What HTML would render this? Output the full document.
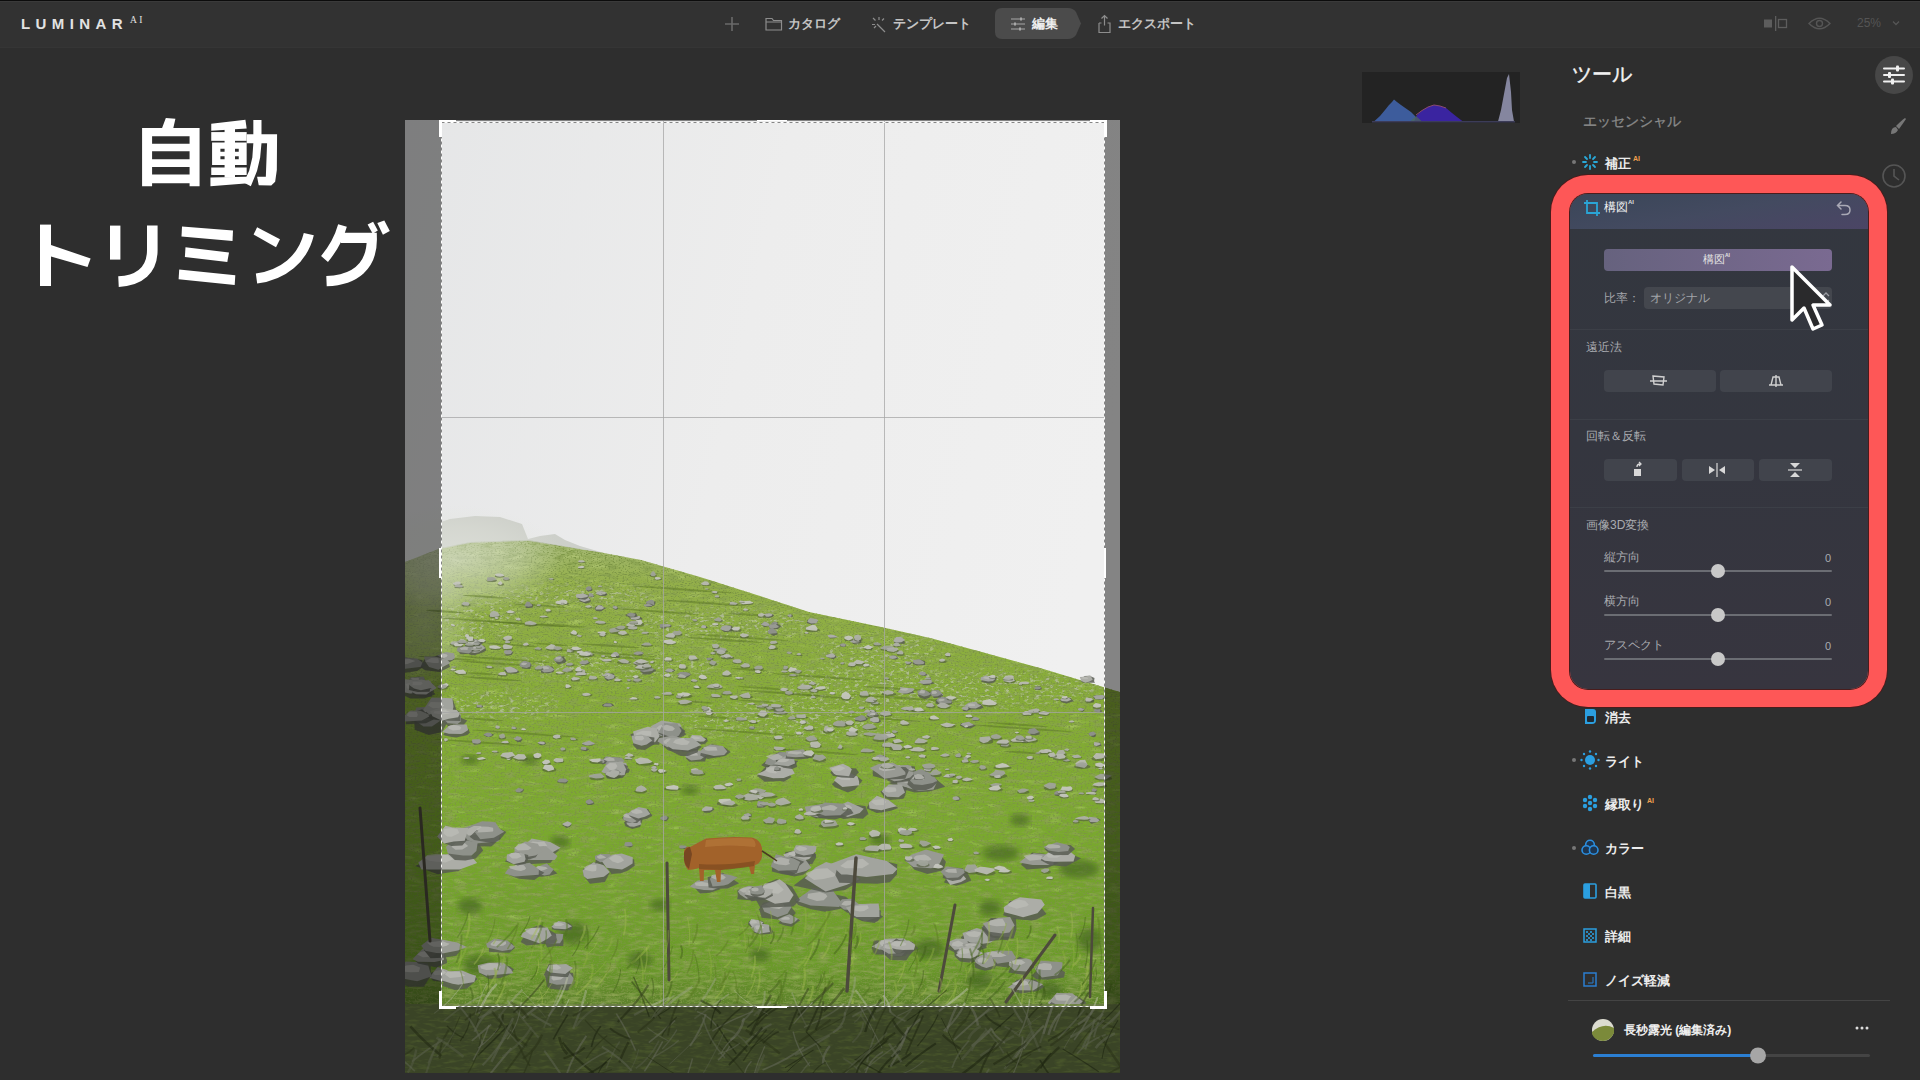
<!DOCTYPE html>
<html><head><meta charset="utf-8">
<style>
*{margin:0;padding:0;box-sizing:border-box}
html,body{width:1920px;height:1080px;overflow:hidden;background:#2e2e2e;font-family:"Liberation Sans",sans-serif;color:#ddd}
.a{position:absolute}
.t{position:absolute;white-space:nowrap;line-height:1}
#top{left:0;top:0;width:1920px;height:48px;background:#323232;border-top:1px solid #0c0c0c;border-bottom:1px solid #353535}
#top:after{content:"";position:absolute;left:0;top:0;width:1920px;height:1px;background:#3a3a3a}
.logo{left:21px;top:15.5px;font-size:15px;letter-spacing:5.4px;color:#e2e2e2;font-weight:bold}
.logo sup{font-size:9.5px;letter-spacing:2.5px;vertical-align:6px;margin-left:2px;font-weight:normal;font-family:"Liberation Serif",serif}
.nav{top:17px;font-size:13px;color:#c4c4c4;font-weight:bold}
#photo{left:405px;top:120px;width:715px;height:953px;overflow:hidden}
#panel{left:1551px;top:175px;width:336px;height:532px;border-radius:37px;background:#fe5757;box-shadow:0 0 0 1px #4a1c1c}
#inner{left:19px;top:19px;width:298px;height:495px;border-radius:18px;background:linear-gradient(180deg,#33373f 0%,#34363f 50%,#37353f 100%);overflow:hidden;box-shadow:0 0 0 1px #4a1c1c}
.lbl{font-size:12px;color:#a9abb0}
.item{font-size:13px;color:#ececec;font-weight:bold}
.ai{font-size:7px;color:#f0a050;font-weight:bold}
.btn{position:absolute;background:#41444c;border-radius:4px}
.trk{position:absolute;height:2px;background:#6b6d73;border-radius:1px}
.knob{position:absolute;width:14px;height:14px;border-radius:7px;background:#c8c8c8}
.dot{position:absolute;width:4px;height:4px;border-radius:2px;background:#777}
</style></head><body>
<div id="top" class="a"></div>
<div class="t logo">LUMINAR<sup>AI</sup></div>
<!-- big title -->
<svg class="a" style="left:0;top:0" width="400" height="300" viewBox="0 0 400 300">
<g fill="#ffffff">
 <!-- 自 -->
 <g transform="translate(130,110) scale(0.08333)">
  <path fill-rule="evenodd" d="M430,95 L545,105 L520,215 L835,215 L835,915 L715,915 L715,880 L265,880 L265,915 L145,915 L145,215 L385,215 Z M265,315 L715,315 L715,405 L265,405 Z M265,495 L715,495 L715,590 L265,590 Z M265,685 L715,685 L715,775 L265,775 Z"/>
  <!-- 動 left -->
  <path d="M975,165 L1385,118 L1400,222 L975,248 Z"/>
  <rect x="1135" y="200" width="125" height="610"/>
  <rect x="975" y="265" width="425" height="105"/>
  <path fill-rule="evenodd" d="M985,390 L1400,390 L1400,660 L985,660 Z M1085,465 L1140,465 L1140,500 L1085,500 Z M1250,465 L1305,465 L1305,500 L1250,500 Z M1085,555 L1140,555 L1140,590 L1085,590 Z M1250,555 L1305,555 L1305,590 L1250,590 Z"/>
  <rect x="975" y="690" width="425" height="90"/>
  <path d="M965,810 L1400,800 L1420,880 L965,915 Z"/>
  <!-- 力 -->
  <path d="M1400,290 L1765,290 L1762,720 L1742,860 L1695,905 L1545,902 L1525,800 L1630,800 L1645,400 L1400,400 Z"/>
  <path d="M1480,120 L1578,120 L1578,400 L1562,570 L1525,730 L1450,915 L1365,870 L1430,730 L1468,570 L1480,400 Z"/>
 </g>
 <!-- ト -->
 <rect x="40" y="224.6" width="11" height="61.4"/>
 <path d="M51,244.9 L90.6,258.5 L87.5,267 L51,256.4 Z"/>
 <!-- リ -->
 <rect x="110" y="225.6" width="10.4" height="34"/>
</g>
<g fill="none" stroke="#fff">
 <path stroke-width="10.6" d="M152.3,225.6 L152.3,250 C152.3,270 140,280.5 118.5,281.6"/>
 <path stroke-width="10.3" d="M256.5,278.5 C283,275 303,259 308.8,234.2"/>
 <path stroke-width="9" d="M342.5,225.5 C339,238 332,250 324.5,259"/>
 <path stroke-width="10.2" d="M341,237.8 L371.8,237.8 C372.5,266 355,280 326.5,281.2"/>
</g>
<g fill="#fff">
 <!-- ミ -->
 <path d="M182,226.6 L233,230.6 L232.5,240.9 L181.5,236.4 Z"/>
 <path d="M185.5,247.2 L229,252.4 L227.3,262.1 L184.9,257 Z"/>
 <path d="M179.2,269.6 L235.3,275.3 L234.7,285 L178.6,279.3 Z"/>
 <!-- ン dot -->
 <path d="M257.1,227.2 L280,239.2 L276,247.2 L253.6,234.6 Z"/>
 <!-- dakuten -->
 <path d="M367.6,224.5 L373.1,221.8 L377.8,230.6 L372.7,233.8 Z"/>
 <path d="M377.3,223.1 L384.3,220.4 L389.8,231 L382.9,234.7 Z"/>
</g>
</svg>
<!-- nav -->
<svg class="a" style="left:0;top:0" width="1920" height="47">
 <g stroke="#6a6a6a" stroke-width="1.6" fill="none">
  <path d="M732,17 V31 M725,24 H739"/>
 </g>
 <g stroke="#8d8d8d" stroke-width="1.2" fill="none">
  <path d="M766,18.5 h6 l1.5,2 h8 v9.5 h-15.5 z M766,22 h15.5"/>
  <path d="M873,18 l2.5,2.5 M879,17 v3 M884,18.5 l-2,2 M877,24 l8,8 M872,24.5 h3 M874,28 l2,-2"/>
  <path d="M1099,23 v9.5 h11 v-9.5 h-2.5 M1101.5,23 h-2.5 M1104.5,15.5 v10 M1101.5,18.5 l3,-3 l3,3"/>
 </g>
 <path d="M1002,8 H1068 Q1073,8 1076,12 L1081,23.5 L1076,35 Q1073,39 1068,39 H1002 Q995,39 995,32 V15 Q995,8 1002,8 Z" fill="#4b4b4b"/>
 <g stroke="#a8a8a8" stroke-width="1.1" fill="none">
  <path d="M1011,19 h14 M1011,24 h14 M1011,29 h14"/>
 </g>
 <g fill="#a8a8a8"><rect x="1020" y="17.5" width="2" height="3"/><rect x="1014" y="22.5" width="2" height="3"/><rect x="1019" y="27.5" width="2" height="3"/></g>
 <!-- right -->
 <rect x="1764" y="19.5" width="8" height="8" fill="#5d5d5d"/>
 <rect x="1775" y="16" width="1.3" height="15" fill="#5d5d5d"/>
 <rect x="1778.5" y="19.5" width="8" height="8" fill="none" stroke="#5d5d5d" stroke-width="1.3"/>
 <path d="M1809,23.5 Q1819.5,13 1830,23.5 Q1819.5,34 1809,23.5 Z" fill="none" stroke="#555" stroke-width="1.4"/>
 <circle cx="1819.5" cy="23.5" r="3" fill="none" stroke="#555" stroke-width="1.4"/>
 <path d="M1893,21.5 l3,3 l3,-3" fill="none" stroke="#555" stroke-width="1.3"/>
</svg>
<div class="t nav" style="left:788px">カタログ</div>
<div class="t nav" style="left:893px">テンプレート</div>
<div class="t nav" style="left:1032px;color:#eee">編集</div>
<div class="t nav" style="left:1118px">エクスポート</div>
<div class="t" style="left:1857px;top:17px;font-size:12px;color:#555">25%</div>
<!-- sidebar -->
<div class="t" style="left:1572px;top:64px;font-size:20px;color:#f2f2f2;-webkit-text-stroke:0.4px #f2f2f2">ツール</div>
<svg class="a" style="left:1860px;top:50px" width="60" height="150">
 <circle cx="34" cy="25" r="19" fill="#474747"/>
 <g stroke="#f0f0f0" stroke-width="2" stroke-linecap="round"><path d="M24,18.5 H44 M24,25 H44 M24,31.5 H44"/></g>
 <g fill="#f0f0f0"><rect x="36" y="15.5" width="3" height="6" rx="1"/><rect x="28" y="22" width="3" height="6" rx="1"/><rect x="31" y="28.5" width="3" height="6" rx="1"/></g>
 <path d="M45,68 Q42,70 36,76 L39,79 Q44,72 46,69 Z" fill="#777"/>
 <path d="M36,77 Q31,77 31,84 Q36,84 38,80 Z" fill="#777"/>
 <circle cx="34" cy="126" r="11" fill="none" stroke="#555" stroke-width="1.6"/>
 <path d="M34,119 V126 L39,130" fill="none" stroke="#555" stroke-width="1.6"/>
</svg>
<div class="t" style="left:1583px;top:114px;font-size:14px;color:#8a8a8a;-webkit-text-stroke:0.3px #8a8a8a">エッセンシャル</div>
<div class="dot" style="left:1572px;top:160px"></div>
<svg class="a" style="left:1581px;top:153px" width="18" height="18">
 <g stroke="#29a9d9" stroke-width="1.8" stroke-linecap="round"><path d="M9,2 V5 M9,13 V16 M2,9 H5 M13,9 H16 M4,4 L6,6 M12,12 L14,14 M14,4 L12,6 M4,14 L6,12"/></g>
</svg>
<div class="t item" style="left:1605px;top:157px">補正</div>
<div class="t ai" style="left:1633px;top:155px">AI</div>

<div id="panel" class="a">
 <div id="inner" class="a">
  <div class="a" style="left:0;top:0;width:298px;height:35px;background:linear-gradient(170deg,#3a4658 0%,#434a60 50%,#4b4565 100%)"></div>
  <svg class="a" style="left:12px;top:4px" width="20" height="20">
   <path d="M5,2 V15 H18 M2,5 H15 V18" fill="none" stroke="#2aa5d6" stroke-width="1.8"/>
  </svg>
  <div class="t" style="left:34px;top:7px;font-size:12px;color:#f2f2f2">構図</div>
  <div class="t" style="left:58px;top:5px;font-size:6px;color:#ddd;font-weight:bold">AI</div>
  <svg class="a" style="left:265px;top:4px" width="20" height="20">
   <path d="M6,4 L2.5,7.5 L6,11 M2.5,7.5 H10 Q15,7.5 15,12 Q15,16.5 10,16.5 H7" fill="none" stroke="#a9a9b5" stroke-width="1.5" stroke-linecap="round"/>
  </svg>
  <div class="a" style="left:34px;top:55px;width:228px;height:22px;border-radius:4px;background:linear-gradient(90deg,#66627e,#7a6a91)"></div>
  <div class="t" style="left:133px;top:60px;font-size:11px;color:#e4e4e4">構図</div>
  <div class="t" style="left:155px;top:59px;font-size:5px;color:#e4e4e4;font-weight:bold">AI</div>
  <div class="t lbl" style="left:34px;top:98px;color:#a3a5aa">比率：</div>
  <div class="a" style="left:74px;top:93px;width:188px;height:22px;border-radius:4px;background:#44474e"></div>
  <div class="t lbl" style="left:80px;top:98px;color:#a3a5aa">オリジナル</div>
  <svg class="a" style="left:250px;top:96px" width="12" height="16"><path d="M3,6 L6,3 L9,6 M3,10 L6,13 L9,10" fill="none" stroke="#9a9ca2" stroke-width="1.3"/></svg>
  <div class="a" style="left:0;top:135px;width:298px;height:1px;background:#3c3f47"></div>
  <div class="t lbl" style="left:16px;top:147px">遠近法</div>
  <div class="btn" style="left:34px;top:176px;width:112px;height:22px"></div>
  <div class="btn" style="left:150px;top:176px;width:112px;height:22px"></div>
  <svg class="a" style="left:80px;top:178px" width="200" height="18">
   <path d="M3,4 L14,5 L13,13 L4,12 Z M0,9 H17" fill="none" stroke="#d0d0d0" stroke-width="1.4"/>
   <path d="M123,5 H129 L131,13 H121 Z M126,3 V15 M119,13 H133" fill="none" stroke="#d0d0d0" stroke-width="1.4"/>
  </svg>
  <div class="a" style="left:0;top:225px;width:298px;height:1px;background:#3c3f47"></div>
  <div class="t lbl" style="left:16px;top:236px">回転＆反転</div>
  <div class="btn" style="left:34px;top:265px;width:73px;height:22px"></div>
  <div class="btn" style="left:112px;top:265px;width:72px;height:22px"></div>
  <div class="btn" style="left:189px;top:265px;width:73px;height:22px"></div>
  <svg class="a" style="left:60px;top:267px" width="200" height="18">
   <rect x="4" y="8" width="7" height="7" fill="#d8d8d8"/>
   <path d="M7,6 Q7,3 10,3 M9,1 L11,3 L9,5" fill="none" stroke="#d8d8d8" stroke-width="1.3"/>
   <path d="M87,2 V16" stroke="#d8d8d8" stroke-width="1.2"/>
   <path d="M79,5 L85,9 L79,13 Z M95,5 L89,9 L95,13 Z" fill="#d8d8d8"/>
   <path d="M158,9 H172" stroke="#d8d8d8" stroke-width="1.2"/>
   <path d="M160,2 H170 L165,7 Z M160,16 H170 L165,11 Z" fill="#d8d8d8"/>
  </svg>
  <div class="a" style="left:0;top:313px;width:298px;height:1px;background:#3c3f47"></div>
  <div class="t lbl" style="left:16px;top:325px">画像3D変換</div>
  <div class="t lbl" style="left:34px;top:357px">縦方向</div>
  <div class="t lbl" style="left:255px;top:359px;font-size:11px">0</div>
  <div class="trk" style="left:34px;top:376px;width:228px"></div>
  <div class="knob" style="left:141px;top:370px"></div>
  <div class="t lbl" style="left:34px;top:401px">横方向</div>
  <div class="t lbl" style="left:255px;top:403px;font-size:11px">0</div>
  <div class="trk" style="left:34px;top:420px;width:228px"></div>
  <div class="knob" style="left:141px;top:414px"></div>
  <div class="t lbl" style="left:34px;top:445px">アスペクト</div>
  <div class="t lbl" style="left:255px;top:447px;font-size:11px">0</div>
  <div class="trk" style="left:34px;top:464px;width:228px"></div>
  <div class="knob" style="left:141px;top:458px"></div>
 </div>
</div>
<!-- cursor -->
<svg class="a" style="left:1785px;top:260px" width="60" height="80">
 <path d="M7,7 L7,60 L19,48 L28,69 L37,65 L28,45 L45,45 Z" fill="#2a2a2c" stroke="#fff" stroke-width="3.5" stroke-linejoin="round"/>
</svg>
<!-- lower list -->
<svg class="a" style="left:1560px;top:700px" width="360" height="380">
 <path d="M25,9 H33 Q36,9 36,12 V20 Q36,24 32,24 H25 Z" fill="#2b9fe0"/>
 <rect x="27" y="16" width="7" height="6" rx="1" fill="#1f2a33"/>
 <circle cx="14" cy="60" r="2" fill="#777"/>
 <circle cx="30" cy="60" r="5" fill="#2b9fe0"/>
 <g fill="#2b9fe0"><circle cx="30" cy="51.5" r="1.2"/><circle cx="30" cy="68.5" r="1.2"/><circle cx="21.5" cy="60" r="1.2"/><circle cx="38.5" cy="60" r="1.2"/><circle cx="24" cy="54" r="1.2"/><circle cx="36" cy="66" r="1.2"/><circle cx="36" cy="54" r="1.2"/><circle cx="24" cy="66" r="1.2"/></g>
 <g fill="#2b9fe0"><circle cx="30" cy="97" r="2.2"/><circle cx="25" cy="100" r="2.2"/><circle cx="35" cy="100" r="2.2"/><circle cx="30" cy="103" r="2.2"/><circle cx="25" cy="106" r="2.2"/><circle cx="35" cy="106" r="2.2"/><circle cx="30" cy="109" r="2.2"/></g>
 <circle cx="14" cy="148" r="2" fill="#777"/>
 <g fill="#1d3550" stroke="#2b8fe0" stroke-width="1.6"><circle cx="30" cy="144.5" r="4.3"/><circle cx="26.3" cy="150" r="4.3"/><circle cx="33.7" cy="150" r="4.3"/></g>
 <rect x="24" y="184" width="12" height="14" rx="1" fill="none" stroke="#2b9fe0" stroke-width="1.6"/>
 <rect x="24" y="184" width="6" height="14" fill="#2b9fe0"/>
 <rect x="24" y="229" width="12" height="13" fill="none" stroke="#2b9fe0" stroke-width="1.5"/>
 <g fill="#2b9fe0" opacity="0.8"><rect x="26" y="231" width="2" height="2"/><rect x="30" y="231" width="2" height="2"/><rect x="28" y="233" width="2" height="2"/><rect x="32" y="233" width="2" height="2"/><rect x="26" y="235" width="2" height="2"/><rect x="30" y="235" width="2" height="2"/><rect x="28" y="237" width="2" height="2"/><rect x="32" y="237" width="2" height="2"/><rect x="26" y="239" width="2" height="2"/><rect x="30" y="239" width="2" height="2"/></g>
 <rect x="24" y="273" width="12" height="13" fill="none" stroke="#2b7ed0" stroke-width="1.5"/>
 <path d="M33,277 V283 H28" stroke="#2b7ed0" stroke-width="1" fill="none"/>
 <rect x="8" y="300" width="322" height="1" fill="#444"/>
 <circle cx="43" cy="330" r="11" fill="#dcdcd0"/>
 <path d="M32,332 Q43,322 54,328 L54,333 Q50,341 43,341 Q35,341 32,334 Z" fill="#7b8a3a"/>
 <g fill="#ddd"><circle cx="297" cy="328" r="1.5"/><circle cx="302" cy="328" r="1.5"/><circle cx="307" cy="328" r="1.5"/></g>
 <rect x="33" y="354" width="277" height="3" rx="1.5" fill="#444"/>
 <rect x="33" y="354" width="165" height="3" rx="1.5" fill="#2b7fd3"/>
 <circle cx="198" cy="355.5" r="8" fill="#a6a6a6"/>
</svg>
<div class="t item" style="left:1605px;top:711px">消去</div>
<div class="t item" style="left:1605px;top:755px">ライト</div>
<div class="t item" style="left:1605px;top:798px">縁取り</div>
<div class="t ai" style="left:1647px;top:797px">AI</div>
<div class="t item" style="left:1605px;top:842px">カラー</div>
<div class="t item" style="left:1605px;top:886px">白黒</div>
<div class="t item" style="left:1605px;top:930px">詳細</div>
<div class="t item" style="left:1605px;top:974px">ノイズ軽減</div>
<div class="t" style="left:1624px;top:1024px;font-size:12px;color:#eee;font-weight:bold">長秒露光 (編集済み)</div>
<!-- histogram -->
<svg class="a" style="left:1360px;top:72px" width="162" height="54">
 <rect x="2" y="0" width="158" height="51" fill="#232323"/>
 <path d="M14,49.5 L20,44 L25,38 L29,33 L32,30 L34,27.5 L37,30 L41,33 L46,36.5 L51,40 L55,44 L58,49.5 Z" fill="#3d5c9c"/>
 <path d="M54,49.5 L57,43 L62,38.5 L68,35 L74,33 L80,34 L86,36 L92,41 L97,45 L103,49.5 Z" fill="#3a24a0"/>
 <path d="M56,43 L62,38.5 L68,35 L74,33 L80,34 L86,36" fill="none" stroke="#8a4a70" stroke-width="1"/>
 <path d="M50,49.5 L56,44 L62,49.5 Z" fill="#4c6a5a" opacity="0.7"/>
 <path d="M138,49.5 L141,38 L144,22 L147,6 L149,2 L151,20 L152,38 L154,49.5 Z" fill="#85869f"/>
 <rect x="12" y="49" width="143" height="1.5" fill="#3c3c58"/>
</svg>
<div id="photo" class="a">
<svg width="715" height="953" viewBox="0 0 715 953">
<defs>
<linearGradient id="sky" x1="0" y1="0" x2="1" y2="0.3">
 <stop offset="0" stop-color="#e5e6e7"/><stop offset="0.5" stop-color="#ededed"/><stop offset="1" stop-color="#f0f0f0"/>
</linearGradient>
<linearGradient id="grass" x1="0" y1="420" x2="0" y2="952" gradientUnits="userSpaceOnUse">
 <stop offset="0" stop-color="#a6b878"/>
 <stop offset="0.08" stop-color="#94b04a"/>
 <stop offset="0.3" stop-color="#86ac36"/>
 <stop offset="0.55" stop-color="#7aa92e"/>
 <stop offset="0.8" stop-color="#6b9a2a"/>
 <stop offset="0.88" stop-color="#5c7f2c"/>
 <stop offset="1" stop-color="#5a6a40"/>
</linearGradient>
<radialGradient id="fog" cx="0.5" cy="0.5" r="0.5">
 <stop offset="0" stop-color="#e6e8e3" stop-opacity="0.95"/>
 <stop offset="0.6" stop-color="#e2e5dd" stop-opacity="0.55"/>
 <stop offset="1" stop-color="#e2e5dd" stop-opacity="0"/>
</radialGradient>
<filter id="blur1"><feGaussianBlur stdDeviation="0.7"/></filter>
<filter id="blur3"><feGaussianBlur stdDeviation="3"/></filter>
<filter id="blur6" x="-50%" y="-50%" width="200%" height="200%"><feGaussianBlur stdDeviation="6"/></filter>
<filter id="gnoise" x="0" y="0" width="715" height="952" filterUnits="userSpaceOnUse">
 <feTurbulence type="fractalNoise" baseFrequency="0.08 0.3" numOctaves="3" seed="5" result="n"/>
 <feColorMatrix in="n" type="matrix" values="0 0 0 0 0.25  0 0 0 0 0.36  0 0 0 0 0.08  -3 0 0 0 1.6" result="c"/>
 <feComposite in="c" in2="SourceAlpha" operator="in"/>
</filter>
<filter id="gnoiseL" x="0" y="0" width="715" height="952" filterUnits="userSpaceOnUse">
 <feTurbulence type="fractalNoise" baseFrequency="0.05 0.2" numOctaves="2" seed="21" result="n"/>
 <feColorMatrix in="n" type="matrix" values="0 0 0 0 0.56  0 0 0 0 0.70  0 0 0 0 0.24  1.6 0 0 0 -0.95" result="c"/>
 <feComposite in="c" in2="SourceAlpha" operator="in"/>
</filter>
<filter id="rocknoise" x="0" y="0" width="715" height="952" filterUnits="userSpaceOnUse">
 <feTurbulence type="fractalNoise" baseFrequency="0.2 0.4" numOctaves="3" seed="9" result="n"/>
 <feColorMatrix in="n" type="matrix" values="0 0 0 0 0.58  0 0 0 0 0.59  0 0 0 0 0.56  5 0 0 0 -2.75" result="c"/>
 <feComposite in="c" in2="SourceAlpha" operator="in"/>
</filter>
<mask id="rockzones" maskUnits="userSpaceOnUse" x="0" y="0" width="715" height="952">
 <g fill="#fff" filter="url(#blur6)">

  <ellipse cx="171.0" cy="476.5" rx="81.0" ry="11.5"/>
  <ellipse cx="315.5" cy="504.5" rx="91.5" ry="16.5"/>
  <ellipse cx="207.0" cy="546.0" rx="111.0" ry="14.0"/>
  <ellipse cx="590.5" cy="568.5" rx="105.5" ry="19.5"/>
  <ellipse cx="473.5" cy="529.5" rx="66.5" ry="13.5"/>
  <ellipse cx="465.0" cy="567.0" rx="90.0" ry="25.0"/>
  <ellipse cx="75.5" cy="500.0" rx="39.5" ry="20.0"/>
  <ellipse cx="95.5" cy="585.0" rx="59.5" ry="15.0"/>
  <ellipse cx="385.0" cy="600.0" rx="110.0" ry="20.0"/>
 </g>
</mask>
<filter id="gnoiseF" x="0" y="0" width="715" height="952" filterUnits="userSpaceOnUse">
 <feTurbulence type="fractalNoise" baseFrequency="0.5 0.9" numOctaves="2" seed="17" result="n"/>
 <feColorMatrix in="n" type="matrix" values="0 0 0 0 0.2  0 0 0 0 0.3  0 0 0 0 0.06  -4 0 0 0 2.0" result="c"/>
 <feComposite in="c" in2="SourceAlpha" operator="in"/>
</filter>
</defs>
<rect width="715" height="953" fill="url(#sky)"/>
<path d="M0.0,442.0 L36.0,428.0 L65.0,422.0 L123.0,420.0 L199.0,433.0 L236.0,440.0 L295.0,457.0 L355.0,476.0 L404.0,492.0 L476.0,507.0 L525.0,518.0 L573.0,531.0 L635.0,548.0 L698.0,567.0 L715.0,572.0 L715.0,953.0 L0.0,953.0 Z" fill="url(#grass)"/>
<path d="M0.0,442.0 L36.0,428.0 L65.0,422.0 L123.0,420.0 L199.0,433.0 L236.0,440.0 L295.0,457.0 L355.0,476.0 L404.0,492.0 L476.0,507.0 L525.0,518.0 L573.0,531.0 L635.0,548.0 L698.0,567.0 L715.0,572.0 L715.0,953.0 L0.0,953.0 Z" fill="#000" filter="url(#gnoiseL)"/>
<path d="M0.0,442.0 L36.0,428.0 L65.0,422.0 L123.0,420.0 L199.0,433.0 L236.0,440.0 L295.0,457.0 L355.0,476.0 L404.0,492.0 L476.0,507.0 L525.0,518.0 L573.0,531.0 L635.0,548.0 L698.0,567.0 L715.0,572.0 L715.0,953.0 L0.0,953.0 Z" fill="#000" filter="url(#gnoise)"/>
<path d="M0.0,442.0 L36.0,428.0 L65.0,422.0 L123.0,420.0 L199.0,433.0 L236.0,440.0 L295.0,457.0 L355.0,476.0 L404.0,492.0 L476.0,507.0 L525.0,518.0 L573.0,531.0 L635.0,548.0 L698.0,567.0 L715.0,572.0 L715.0,953.0 L0.0,953.0 Z" fill="#000" filter="url(#gnoiseF)"/>
<g mask="url(#rockzones)" opacity="0.6"><path d="M0.0,442.0 L36.0,428.0 L65.0,422.0 L123.0,420.0 L199.0,433.0 L236.0,440.0 L295.0,457.0 L355.0,476.0 L404.0,492.0 L476.0,507.0 L525.0,518.0 L573.0,531.0 L635.0,548.0 L698.0,567.0 L715.0,572.0 L715.0,953.0 L0.0,953.0 Z" fill="#000" filter="url(#rocknoise)"/></g>
<path d="M36,402 L45,399 L70,396 L95,397 L117,404 L123,419 L135,416 L150,414 L160,420 L175,426 L199,433 L123,421 L65,423 L36,429 Z" fill="#c4c7bf" opacity="0.75" filter="url(#blur1)"/>
<ellipse cx="50" cy="440" rx="110" ry="55" fill="url(#fog)" opacity="0.65"/>
<ellipse cx="20" cy="500" rx="50" ry="70" fill="url(#fog)" opacity="0.35"/>
<ellipse cx="252.1" cy="491.4" rx="41.0" ry="1.0" fill="#556e22" opacity="0.45" transform="rotate(4 252.1 491.4)"/>
<ellipse cx="87.4" cy="558.8" rx="29.6" ry="1.0" fill="#556e22" opacity="0.45" transform="rotate(4 87.4 558.8)"/>
<ellipse cx="78.0" cy="553.8" rx="16.5" ry="1.0" fill="#556e22" opacity="0.45" transform="rotate(4 78.0 553.8)"/>
<ellipse cx="99.4" cy="539.3" rx="48.1" ry="1.0" fill="#556e22" opacity="0.45" transform="rotate(4 99.4 539.3)"/>
<ellipse cx="121.1" cy="504.1" rx="40.1" ry="1.0" fill="#556e22" opacity="0.45" transform="rotate(4 121.1 504.1)"/>
<ellipse cx="299.8" cy="635.8" rx="16.9" ry="1.0" fill="#556e22" opacity="0.45" transform="rotate(4 299.8 635.8)"/>
<ellipse cx="134.5" cy="485.6" rx="27.3" ry="1.0" fill="#556e22" opacity="0.45" transform="rotate(4 134.5 485.6)"/>
<ellipse cx="420.9" cy="576.8" rx="29.9" ry="1.0" fill="#556e22" opacity="0.45" transform="rotate(4 420.9 576.8)"/>
<ellipse cx="79.0" cy="501.0" rx="42.2" ry="1.0" fill="#556e22" opacity="0.45" transform="rotate(4 79.0 501.0)"/>
<ellipse cx="320.1" cy="520.0" rx="38.4" ry="1.0" fill="#556e22" opacity="0.45" transform="rotate(4 320.1 520.0)"/>
<ellipse cx="336.8" cy="517.5" rx="46.8" ry="1.0" fill="#556e22" opacity="0.45" transform="rotate(4 336.8 517.5)"/>
<ellipse cx="416.2" cy="556.9" rx="50.0" ry="1.0" fill="#556e22" opacity="0.45" transform="rotate(4 416.2 556.9)"/>
<ellipse cx="313.9" cy="597.5" rx="21.1" ry="1.0" fill="#556e22" opacity="0.45" transform="rotate(4 313.9 597.5)"/>
<ellipse cx="477.7" cy="598.8" rx="37.9" ry="1.0" fill="#556e22" opacity="0.45" transform="rotate(4 477.7 598.8)"/>
<ellipse cx="495.4" cy="569.0" rx="38.2" ry="1.0" fill="#556e22" opacity="0.45" transform="rotate(4 495.4 569.0)"/>
<ellipse cx="338.8" cy="612.0" rx="52.8" ry="1.0" fill="#556e22" opacity="0.45" transform="rotate(4 338.8 612.0)"/>
<ellipse cx="350.5" cy="581.2" rx="17.4" ry="1.0" fill="#556e22" opacity="0.45" transform="rotate(4 350.5 581.2)"/>
<ellipse cx="499.5" cy="578.2" rx="54.7" ry="1.0" fill="#556e22" opacity="0.45" transform="rotate(4 499.5 578.2)"/>
<ellipse cx="292.7" cy="582.0" rx="15.9" ry="1.0" fill="#556e22" opacity="0.45" transform="rotate(4 292.7 582.0)"/>
<ellipse cx="342.4" cy="494.4" rx="19.7" ry="1.0" fill="#556e22" opacity="0.45" transform="rotate(4 342.4 494.4)"/>
<ellipse cx="78.6" cy="599.4" rx="20.2" ry="1.0" fill="#556e22" opacity="0.45" transform="rotate(4 78.6 599.4)"/>
<ellipse cx="202.2" cy="533.4" rx="49.9" ry="1.0" fill="#556e22" opacity="0.45" transform="rotate(4 202.2 533.4)"/>
<ellipse cx="92.8" cy="543.6" rx="37.0" ry="1.0" fill="#556e22" opacity="0.45" transform="rotate(4 92.8 543.6)"/>
<ellipse cx="618.6" cy="608.4" rx="49.6" ry="1.0" fill="#556e22" opacity="0.45" transform="rotate(4 618.6 608.4)"/>
<ellipse cx="222.4" cy="537.7" rx="29.4" ry="1.0" fill="#556e22" opacity="0.45" transform="rotate(4 222.4 537.7)"/>
<ellipse cx="619.1" cy="632.6" rx="21.0" ry="1.0" fill="#556e22" opacity="0.45" transform="rotate(4 619.1 632.6)"/>
<ellipse cx="155.4" cy="505.6" rx="24.3" ry="1.0" fill="#556e22" opacity="0.45" transform="rotate(4 155.4 505.6)"/>
<ellipse cx="357.7" cy="568.1" rx="25.5" ry="1.0" fill="#556e22" opacity="0.45" transform="rotate(4 357.7 568.1)"/>
<ellipse cx="42.7" cy="538.3" rx="29.8" ry="1.0" fill="#556e22" opacity="0.45" transform="rotate(4 42.7 538.3)"/>
<ellipse cx="411.0" cy="631.8" rx="42.6" ry="1.0" fill="#556e22" opacity="0.45" transform="rotate(4 411.0 631.8)"/>
<ellipse cx="377.6" cy="573.1" rx="42.0" ry="1.0" fill="#556e22" opacity="0.45" transform="rotate(4 377.6 573.1)"/>
<ellipse cx="75.4" cy="622.4" rx="46.2" ry="1.0" fill="#556e22" opacity="0.45" transform="rotate(4 75.4 622.4)"/>
<ellipse cx="612.8" cy="604.6" rx="30.7" ry="1.0" fill="#556e22" opacity="0.45" transform="rotate(4 612.8 604.6)"/>
<ellipse cx="301.3" cy="483.1" rx="40.4" ry="1.0" fill="#556e22" opacity="0.45" transform="rotate(4 301.3 483.1)"/>
<ellipse cx="80.8" cy="476.8" rx="23.4" ry="1.0" fill="#556e22" opacity="0.45" transform="rotate(4 80.8 476.8)"/>
<ellipse cx="146.3" cy="524.5" rx="17.1" ry="1.0" fill="#556e22" opacity="0.45" transform="rotate(4 146.3 524.5)"/>
<ellipse cx="40.2" cy="491.5" rx="19.1" ry="1.0" fill="#556e22" opacity="0.45" transform="rotate(4 40.2 491.5)"/>
<ellipse cx="278.2" cy="469.5" rx="50.0" ry="1.0" fill="#556e22" opacity="0.45" transform="rotate(4 278.2 469.5)"/>
<ellipse cx="205.2" cy="525.8" rx="29.6" ry="1.0" fill="#556e22" opacity="0.45" transform="rotate(4 205.2 525.8)"/>
<ellipse cx="120.5" cy="613.6" rx="54.7" ry="1.0" fill="#556e22" opacity="0.45" transform="rotate(4 120.5 613.6)"/>
<ellipse cx="345.2" cy="549.7" rx="18.4" ry="1.0" fill="#556e22" opacity="0.45" transform="rotate(4 345.2 549.7)"/>
<ellipse cx="106.9" cy="525.0" rx="25.6" ry="1.0" fill="#556e22" opacity="0.45" transform="rotate(4 106.9 525.0)"/>
<ellipse cx="596" cy="733" rx="18" ry="8" fill="#3b5a1a" opacity="0.55" filter="url(#blur3)"/>
<ellipse cx="524" cy="829" rx="15" ry="10" fill="#3b5a1a" opacity="0.55" filter="url(#blur3)"/>
<ellipse cx="168" cy="813" rx="15" ry="11" fill="#3b5a1a" opacity="0.55" filter="url(#blur3)"/>
<ellipse cx="585" cy="788" rx="11" ry="8" fill="#3b5a1a" opacity="0.55" filter="url(#blur3)"/>
<ellipse cx="674" cy="749" rx="20" ry="9" fill="#3b5a1a" opacity="0.55" filter="url(#blur3)"/>
<ellipse cx="155" cy="722" rx="10" ry="6" fill="#3b5a1a" opacity="0.55" filter="url(#blur3)"/>
<ellipse cx="65" cy="786" rx="12" ry="8" fill="#3b5a1a" opacity="0.55" filter="url(#blur3)"/>
<ellipse cx="195" cy="750" rx="10" ry="6" fill="#3b5a1a" opacity="0.55" filter="url(#blur3)"/>
<ellipse cx="285" cy="670" rx="9" ry="5" fill="#3b5a1a" opacity="0.55" filter="url(#blur3)"/>
<ellipse cx="415" cy="690" rx="10" ry="6" fill="#3b5a1a" opacity="0.55" filter="url(#blur3)"/>
<ellipse cx="475" cy="720" rx="10" ry="6" fill="#3b5a1a" opacity="0.55" filter="url(#blur3)"/>
<ellipse cx="615" cy="700" rx="10" ry="6" fill="#3b5a1a" opacity="0.55" filter="url(#blur3)"/>
<ellipse cx="575" cy="860" rx="14" ry="9" fill="#3b5a1a" opacity="0.55" filter="url(#blur3)"/>
<ellipse cx="645" cy="870" rx="12" ry="8" fill="#3b5a1a" opacity="0.55" filter="url(#blur3)"/>
<ellipse cx="75" cy="845" rx="16" ry="10" fill="#3b5a1a" opacity="0.55" filter="url(#blur3)"/>
<ellipse cx="235" cy="840" rx="12" ry="8" fill="#3b5a1a" opacity="0.55" filter="url(#blur3)"/>
<ellipse cx="355" cy="835" rx="10" ry="7" fill="#3b5a1a" opacity="0.55" filter="url(#blur3)"/>
<ellipse cx="685" cy="820" rx="12" ry="12" fill="#3b5a1a" opacity="0.55" filter="url(#blur3)"/>
<ellipse cx="125" cy="640" rx="8" ry="5" fill="#3b5a1a" opacity="0.55" filter="url(#blur3)"/>
<ellipse cx="65" cy="640" rx="9" ry="5" fill="#3b5a1a" opacity="0.55" filter="url(#blur3)"/>
<ellipse cx="255" cy="785" rx="10" ry="6" fill="#3b5a1a" opacity="0.55" filter="url(#blur3)"/>
<path d="M49.5,539.6 L44.6,542.3 L35.6,542.4 L33.6,537.6 L35.8,534.2 L46.3,533.3 Z" fill="#585c52" opacity="0.85"/>
<path d="M50.0,538.1 L47.1,540.0 L39.9,540.4 L35.2,539.7 L32.0,535.4 L41.2,531.9 L49.1,533.2 Z" fill="#989a93"/>
<path d="M42.3,535.2 L41.8,536.8 L38.9,538.0 L36.4,536.6 L34.9,535.1 L35.6,533.5 L37.9,533.4 L41.9,534.4 Z" fill="#bdbeb8" opacity="0.7"/>
<path d="M81.3,530.4 L77.9,532.6 L70.2,534.9 L66.1,535.2 L61.7,532.1 L62.7,527.6 L69.1,524.6 L72.4,525.0 L79.9,526.5 Z" fill="#585c52" opacity="0.85"/>
<path d="M80.5,528.1 L73.7,532.3 L69.6,533.0 L62.8,531.4 L62.3,526.5 L65.7,521.1 L74.9,522.9 Z" fill="#a2a49e"/>
<path d="M73.6,527.1 L71.6,527.4 L69.2,529.2 L65.2,528.4 L64.5,526.9 L63.4,526.1 L65.8,524.8 L69.5,523.6 L72.2,524.3 Z" fill="#bdbeb8" opacity="0.7"/>
<path d="M78.2,523.2 L74.5,525.5 L71.5,526.1 L67.2,526.0 L64.7,524.3 L63.4,521.5 L67.8,518.8 L73.3,520.0 L77.1,520.2 Z" fill="#585c52" opacity="0.85"/>
<path d="M75.9,521.8 L74.8,524.1 L69.1,524.3 L65.8,523.2 L63.9,519.5 L69.2,518.7 L72.6,519.4 Z" fill="#8e918a"/>
<path d="M72.5,520.7 L71.2,521.7 L68.2,522.4 L67.6,522.1 L65.8,521.4 L65.7,520.7 L67.7,519.9 L69.3,519.5 L70.3,519.8 Z" fill="#bdbeb8" opacity="0.7"/>
<path d="M69.7,530.0 L64.1,533.9 L55.5,534.2 L52.5,530.0 L59.9,526.8 L66.7,527.1 Z" fill="#585c52" opacity="0.85"/>
<path d="M67.7,528.9 L66.3,532.1 L63.8,533.4 L53.8,532.1 L51.6,530.6 L52.6,527.3 L61.0,525.9 L68.7,526.3 Z" fill="#8e918a"/>
<path d="M62.7,528.6 L62.6,529.9 L58.2,529.8 L56.3,530.0 L54.8,528.4 L55.7,527.5 L59.7,526.9 L63.8,527.3 Z" fill="#bdbeb8" opacity="0.7"/>
<path d="M17.8,547.2 L12.2,551.1 L0.4,552.8 L-10.0,548.9 L-12.9,540.7 L-1.5,537.2 L17.5,540.1 Z" fill="#585c52" opacity="0.85"/>
<path d="M21.7,545.4 L18.8,546.4 L0.4,548.8 L-4.7,548.7 L-12.1,544.0 L-4.2,537.1 L5.3,538.2 L11.8,538.4 Z" fill="#8e918a"/>
<path d="M10.4,541.1 L2.3,544.1 L-3.5,544.4 L-7.5,541.9 L-5.6,539.6 L4.3,538.9 Z" fill="#bdbeb8" opacity="0.7"/>
<path d="M20.7,561.6 L20.2,563.4 L17.0,565.2 L8.2,563.6 L3.5,561.9 L4.3,559.5 L9.7,557.4 L13.2,556.8 L18.7,557.4 Z" fill="#585c52" opacity="0.85"/>
<path d="M20.6,561.0 L17.4,563.0 L12.6,563.5 L3.7,561.1 L5.8,557.3 L9.3,557.4 L18.6,556.6 Z" fill="#8e918a"/>
<path d="M14.4,559.3 L13.4,560.1 L10.5,560.4 L9.2,560.6 L6.2,559.3 L6.1,558.4 L7.0,557.7 L10.4,557.7 L13.3,557.6 Z" fill="#bdbeb8" opacity="0.7"/>
<path d="M28.8,572.7 L30.6,574.3 L19.7,578.4 L5.1,578.4 L-5.6,572.9 L-4.7,569.8 L1.8,560.6 L12.0,562.6 L28.2,564.0 Z" fill="#585c52" opacity="0.85"/>
<path d="M31.7,567.9 L21.8,574.0 L16.2,573.4 L4.8,573.5 L-1.9,572.0 L-4.8,561.6 L0.7,559.3 L18.0,561.8 L23.5,560.1 Z" fill="#acada7"/>
<path d="M15.5,566.4 L13.4,568.2 L6.1,568.9 L2.0,568.6 L1.4,565.7 L0.4,563.9 L8.1,562.2 L12.9,562.6 Z" fill="#bdbeb8" opacity="0.7"/>
<path d="M27.0,574.3 L26.9,576.7 L15.6,576.6 L6.6,573.6 L9.9,568.2 L26.1,567.9 Z" fill="#585c52" opacity="0.85"/>
<path d="M27.9,570.1 L21.3,574.6 L11.0,574.3 L6.9,572.1 L14.6,566.8 L20.4,565.8 Z" fill="#acada7"/>
<path d="M21.6,570.6 L19.8,571.4 L18.0,571.9 L12.9,571.9 L11.2,570.5 L9.4,569.9 L12.2,568.4 L16.0,568.0 L20.9,568.6 Z" fill="#bdbeb8" opacity="0.7"/>
<path d="M25.5,567.5 L24.6,571.7 L12.8,571.9 L4.0,570.1 L4.3,564.6 L12.0,562.1 L23.1,562.7 Z" fill="#585c52" opacity="0.85"/>
<path d="M24.8,566.0 L27.1,567.8 L15.9,570.3 L9.1,568.6 L3.5,564.4 L7.7,561.3 L16.3,559.4 L26.2,561.4 Z" fill="#acada7"/>
<path d="M17.7,563.4 L15.6,565.3 L7.2,565.3 L7.8,563.2 L7.5,561.7 L16.5,561.8 Z" fill="#bdbeb8" opacity="0.7"/>
<path d="M45.0,546.9 L43.5,547.7 L34.8,552.1 L20.2,550.2 L15.5,547.2 L17.4,542.7 L19.7,538.9 L32.4,535.6 L43.4,541.2 Z" fill="#585c52" opacity="0.85"/>
<path d="M45.4,543.1 L38.2,546.7 L33.5,549.8 L24.1,547.1 L20.6,542.0 L18.9,536.5 L29.6,536.4 L41.9,539.5 Z" fill="#989a93"/>
<path d="M33.9,541.0 L33.5,543.0 L28.3,543.1 L20.1,541.6 L21.6,540.4 L26.2,538.1 L33.2,538.2 Z" fill="#bdbeb8" opacity="0.7"/>
<path d="M62.2,600.5 L56.1,607.9 L44.4,607.2 L37.6,601.1 L45.1,594.6 L51.4,595.8 Z" fill="#585c52" opacity="0.85"/>
<path d="M56.1,601.2 L52.5,603.9 L40.6,603.1 L38.8,601.1 L39.8,592.9 L55.7,594.2 Z" fill="#8e918a"/>
<path d="M49.9,598.6 L49.3,600.2 L41.9,599.5 L39.2,597.7 L41.6,595.6 L46.1,595.7 Z" fill="#bdbeb8" opacity="0.7"/>
<path d="M42.4,602.4 L37.1,611.9 L23.9,614.9 L9.6,609.7 L9.4,598.5 L22.1,590.3 L33.5,594.9 Z" fill="#585c52" opacity="0.85"/>
<path d="M38.3,598.7 L26.9,606.5 L18.5,606.5 L7.8,598.9 L11.3,587.6 L27.1,586.5 Z" fill="#8e918a"/>
<path d="M26.4,597.2 L24.4,599.7 L17.2,601.2 L14.2,600.4 L10.0,597.3 L12.2,592.0 L20.8,589.9 L24.7,593.8 Z" fill="#bdbeb8" opacity="0.7"/>
<path d="M52.3,592.4 L47.6,598.0 L30.0,598.7 L19.1,598.0 L21.9,589.0 L26.6,580.9 L47.7,579.2 Z" fill="#585c52" opacity="0.85"/>
<path d="M48.5,587.1 L46.8,594.3 L24.6,594.8 L18.4,589.6 L26.6,577.6 L47.4,578.3 Z" fill="#a2a49e"/>
<path d="M39.0,585.8 L35.8,587.9 L27.9,588.3 L23.1,585.4 L25.7,581.9 L36.2,582.3 Z" fill="#bdbeb8" opacity="0.7"/>
<path d="M28.6,599.4 L20.9,603.2 L0.8,604.2 L1.0,597.1 L4.6,593.4 L17.1,589.2 Z" fill="#585c52" opacity="0.85"/>
<path d="M26.1,595.6 L16.8,600.6 L0.4,601.6 L-2.8,597.7 L5.7,590.6 L15.3,590.8 Z" fill="#989a93"/>
<path d="M12.8,594.8 L11.9,596.9 L4.4,596.9 L1.9,595.4 L2.8,593.0 L4.3,591.4 L11.7,591.8 Z" fill="#bdbeb8" opacity="0.7"/>
<path d="M64.8,612.8 L62.4,615.0 L51.2,617.5 L45.9,616.8 L38.2,614.9 L42.6,607.8 L42.9,605.6 L52.3,606.3 L63.7,608.9 Z" fill="#585c52" opacity="0.85"/>
<path d="M63.2,610.1 L58.2,613.2 L56.0,613.9 L43.9,613.8 L37.2,611.9 L42.4,607.2 L45.6,605.2 L51.3,604.4 L61.6,604.5 Z" fill="#a2a49e"/>
<path d="M56.3,607.6 L55.1,609.7 L48.0,610.5 L43.9,608.7 L42.7,606.2 L48.8,604.7 L54.1,605.9 Z" fill="#bdbeb8" opacity="0.7"/>
<path d="M55.5,596.2 L55.5,600.9 L36.6,600.6 L25.4,599.2 L23.5,595.2 L34.7,589.6 L53.4,590.6 Z" fill="#585c52" opacity="0.85"/>
<path d="M54.9,593.8 L53.1,597.3 L43.7,598.7 L37.1,600.7 L27.4,596.3 L25.1,591.3 L35.8,587.2 L42.8,589.2 L51.7,590.1 Z" fill="#acada7"/>
<path d="M46.7,592.6 L44.0,593.4 L37.3,594.7 L34.0,594.1 L28.4,593.2 L29.5,591.2 L33.3,591.0 L40.0,589.5 L41.9,590.7 Z" fill="#bdbeb8" opacity="0.7"/>
<path d="M280.6,611.1 L271.6,619.1 L256.3,619.7 L248.7,615.2 L243.4,608.3 L257.3,605.4 L274.5,606.4 Z" fill="#585c52" opacity="0.85"/>
<path d="M277.6,609.2 L270.7,617.6 L256.3,615.9 L249.0,612.2 L245.9,606.3 L256.6,600.4 L275.0,603.5 Z" fill="#a2a49e"/>
<path d="M268.4,607.5 L262.1,611.4 L255.1,610.7 L251.1,608.3 L254.5,605.5 L262.4,604.1 Z" fill="#bdbeb8" opacity="0.7"/>
<path d="M281.1,614.6 L276.3,617.2 L266.0,620.3 L260.5,617.7 L253.5,613.6 L258.3,610.0 L267.4,605.2 L276.2,607.0 Z" fill="#585c52" opacity="0.85"/>
<path d="M276.5,611.1 L273.9,615.6 L269.3,618.4 L260.2,615.1 L253.6,612.5 L258.8,602.8 L265.5,603.5 L272.3,603.0 Z" fill="#8e918a"/>
<path d="M270.0,608.7 L267.7,610.7 L263.4,610.9 L261.1,610.5 L258.2,609.2 L257.0,606.1 L261.8,604.7 L267.6,606.5 Z" fill="#bdbeb8" opacity="0.7"/>
<path d="M255.6,618.4 L254.2,624.8 L237.4,624.2 L229.2,620.8 L225.3,614.4 L235.1,610.4 L252.2,609.2 Z" fill="#585c52" opacity="0.85"/>
<path d="M254.6,616.3 L250.0,622.2 L235.8,620.4 L229.9,619.9 L228.0,611.6 L242.7,606.8 L251.8,608.3 Z" fill="#acada7"/>
<path d="M246.5,613.0 L246.1,615.8 L235.8,615.8 L231.0,615.7 L231.4,613.0 L237.5,610.8 L246.2,611.3 Z" fill="#bdbeb8" opacity="0.7"/>
<path d="M281.2,627.0 L273.5,631.6 L263.2,630.6 L257.0,625.2 L264.8,619.3 L270.7,619.4 Z" fill="#585c52" opacity="0.85"/>
<path d="M281.1,625.1 L276.7,625.6 L266.3,627.7 L262.0,627.1 L252.6,621.6 L253.9,618.3 L267.5,615.5 L279.8,619.0 Z" fill="#989a93"/>
<path d="M270.0,620.7 L269.0,622.2 L263.9,624.2 L259.6,623.7 L258.2,621.9 L258.6,621.1 L262.0,618.8 L264.6,618.2 L267.6,619.0 Z" fill="#bdbeb8" opacity="0.7"/>
<path d="M249.2,624.3 L247.3,625.4 L240.0,630.0 L231.9,629.3 L227.8,624.7 L229.4,619.3 L234.1,616.3 L236.0,615.8 L249.4,617.6 Z" fill="#585c52" opacity="0.85"/>
<path d="M247.3,620.4 L241.7,624.5 L236.5,625.8 L228.4,623.3 L227.0,618.7 L226.6,615.7 L236.4,614.4 L243.1,616.6 Z" fill="#a2a49e"/>
<path d="M239.3,618.6 L237.0,620.4 L230.8,619.9 L229.6,617.8 L230.7,616.1 L237.9,616.0 Z" fill="#bdbeb8" opacity="0.7"/>
<path d="M301.6,636.7 L300.1,641.6 L284.3,641.8 L280.9,638.2 L287.4,630.9 L294.7,631.1 Z" fill="#585c52" opacity="0.85"/>
<path d="M302.4,634.4 L295.8,639.5 L286.1,640.5 L280.1,636.8 L282.1,633.5 L291.1,630.2 L301.3,631.1 Z" fill="#989a93"/>
<path d="M292.6,634.2 L292.9,635.5 L285.9,635.8 L284.1,634.5 L284.4,632.7 L286.2,631.5 L290.3,631.4 Z" fill="#bdbeb8" opacity="0.7"/>
<path d="M325.7,631.9 L320.1,636.1 L302.8,639.1 L295.2,635.6 L297.1,628.1 L307.3,624.2 L320.0,627.4 Z" fill="#585c52" opacity="0.85"/>
<path d="M322.3,631.4 L319.2,634.9 L309.0,636.1 L294.1,632.6 L298.3,627.9 L305.2,624.4 L317.8,626.1 Z" fill="#989a93"/>
<path d="M312.1,629.5 L312.6,630.6 L303.0,630.7 L300.4,630.2 L298.2,627.0 L303.0,626.4 L311.2,627.1 Z" fill="#bdbeb8" opacity="0.7"/>
<path d="M296.7,627.1 L293.2,629.8 L284.6,631.8 L276.9,631.5 L275.6,627.7 L275.8,624.5 L280.9,622.8 L291.6,623.3 Z" fill="#585c52" opacity="0.85"/>
<path d="M291.8,625.0 L292.2,628.8 L279.5,630.1 L274.4,627.6 L271.1,626.8 L273.1,623.3 L281.1,621.2 L292.2,622.8 Z" fill="#acada7"/>
<path d="M286.3,624.5 L283.6,626.3 L279.8,626.1 L276.8,625.2 L276.8,623.6 L280.7,622.9 L283.4,623.2 Z" fill="#bdbeb8" opacity="0.7"/>
<path d="M302.7,621.0 L300.3,623.7 L293.8,625.1 L286.3,622.7 L286.0,619.3 L291.8,616.4 L301.8,617.8 Z" fill="#585c52" opacity="0.85"/>
<path d="M301.0,619.5 L298.8,621.4 L287.2,622.1 L284.8,618.5 L287.0,615.1 L295.9,615.4 Z" fill="#acada7"/>
<path d="M296.1,618.2 L292.1,619.2 L288.2,619.4 L286.3,618.6 L286.6,617.4 L287.9,616.1 L293.4,617.0 Z" fill="#bdbeb8" opacity="0.7"/>
<path d="M293.7,627.3 L292.7,632.2 L282.9,636.1 L275.7,635.9 L264.1,630.2 L262.6,622.6 L271.0,619.8 L285.7,620.5 L294.4,621.5 Z" fill="#585c52" opacity="0.85"/>
<path d="M296.3,625.1 L283.0,630.6 L267.7,629.3 L260.4,624.7 L266.7,617.9 L287.4,618.0 Z" fill="#a2a49e"/>
<path d="M285.0,621.8 L282.4,624.8 L276.6,624.9 L271.8,624.1 L268.0,622.6 L270.2,619.7 L278.4,617.8 L280.2,619.7 Z" fill="#bdbeb8" opacity="0.7"/>
<path d="M217.2,643.0 L213.5,647.0 L203.1,645.2 L199.0,642.9 L198.6,637.6 L215.2,637.7 Z" fill="#585c52" opacity="0.85"/>
<path d="M219.7,641.3 L214.4,644.2 L206.6,644.9 L195.8,642.9 L197.8,640.1 L201.0,636.2 L217.0,637.8 Z" fill="#8e918a"/>
<path d="M209.5,639.9 L209.8,640.7 L203.6,641.0 L202.4,640.7 L198.4,639.5 L201.6,637.8 L204.7,637.1 L209.3,638.4 Z" fill="#bdbeb8" opacity="0.7"/>
<path d="M224.9,649.7 L223.7,652.7 L214.3,653.4 L208.8,652.0 L207.4,647.3 L215.2,645.2 L221.5,646.8 Z" fill="#585c52" opacity="0.85"/>
<path d="M222.7,648.6 L219.1,650.8 L217.0,652.5 L204.6,651.0 L206.0,647.6 L206.7,643.8 L213.7,641.9 L221.3,643.0 Z" fill="#a2a49e"/>
<path d="M215.5,646.2 L214.2,648.5 L210.4,648.2 L207.3,646.4 L210.1,644.5 L212.9,644.6 Z" fill="#bdbeb8" opacity="0.7"/>
<path d="M221.2,653.5 L218.0,657.8 L208.7,658.9 L202.0,658.4 L199.3,652.4 L201.7,643.9 L213.2,641.8 L222.9,646.0 Z" fill="#585c52" opacity="0.85"/>
<path d="M221.1,649.3 L219.6,655.0 L208.0,656.2 L196.4,652.0 L201.1,644.4 L204.5,642.3 L217.5,641.6 Z" fill="#a2a49e"/>
<path d="M212.5,646.2 L209.5,650.1 L204.7,650.0 L200.7,645.9 L204.9,642.9 L210.6,643.2 Z" fill="#bdbeb8" opacity="0.7"/>
<path d="M391.5,643.8 L384.1,647.7 L376.8,651.5 L361.2,647.4 L356.2,645.3 L366.0,636.3 L375.0,631.6 L387.9,638.1 Z" fill="#585c52" opacity="0.85"/>
<path d="M386.1,639.0 L386.1,645.2 L371.1,647.3 L359.9,643.7 L361.8,638.8 L374.4,632.2 L380.2,631.9 Z" fill="#8e918a"/>
<path d="M378.1,637.1 L374.5,640.4 L368.4,640.2 L360.8,636.6 L365.7,634.5 L373.2,633.9 Z" fill="#bdbeb8" opacity="0.7"/>
<path d="M386.5,657.0 L378.8,661.7 L375.1,661.1 L359.7,661.8 L352.2,655.7 L361.4,646.0 L373.2,644.1 L382.0,650.9 Z" fill="#585c52" opacity="0.85"/>
<path d="M389.9,653.5 L378.8,658.1 L368.2,658.3 L351.6,654.2 L359.0,651.0 L365.5,645.4 L385.6,646.5 Z" fill="#acada7"/>
<path d="M375.4,649.9 L370.6,653.5 L363.9,652.5 L360.9,650.7 L361.2,647.2 L371.6,647.3 Z" fill="#bdbeb8" opacity="0.7"/>
<path d="M391.1,643.1 L392.2,646.7 L387.1,649.0 L378.6,647.8 L371.9,644.6 L370.7,639.9 L378.9,639.2 L382.8,639.2 L393.3,641.0 Z" fill="#585c52" opacity="0.85"/>
<path d="M390.0,643.5 L388.1,644.2 L383.2,646.3 L375.2,645.3 L369.0,644.3 L372.3,640.9 L375.7,638.2 L379.5,636.5 L389.0,637.6 Z" fill="#a2a49e"/>
<path d="M383.4,640.8 L380.6,642.1 L377.1,642.2 L373.2,641.9 L372.9,641.1 L374.4,639.4 L377.4,638.4 L384.4,639.3 Z" fill="#bdbeb8" opacity="0.7"/>
<path d="M407.2,634.5 L403.2,638.5 L393.4,639.6 L380.4,638.5 L381.3,636.2 L382.5,633.2 L392.0,631.3 L404.6,632.8 Z" fill="#585c52" opacity="0.85"/>
<path d="M402.5,633.5 L403.2,636.5 L390.3,637.3 L382.0,636.4 L380.6,631.2 L390.8,630.1 L398.3,629.3 Z" fill="#989a93"/>
<path d="M397.6,633.2 L394.5,633.8 L392.0,634.5 L386.1,633.7 L383.0,633.5 L382.8,632.5 L385.6,631.1 L392.1,631.4 L395.6,631.6 Z" fill="#bdbeb8" opacity="0.7"/>
<path d="M540.3,666.8 L524.4,671.4 L509.6,672.6 L497.1,669.1 L483.6,663.1 L495.2,659.0 L512.9,656.0 L526.7,655.4 Z" fill="#585c52" opacity="0.85"/>
<path d="M532.2,661.4 L528.5,669.4 L513.5,670.9 L492.3,664.7 L492.1,657.4 L506.8,655.7 L524.4,656.6 Z" fill="#989a93"/>
<path d="M515.8,660.9 L514.7,662.7 L501.0,662.8 L495.2,661.2 L497.9,657.6 L513.2,658.2 Z" fill="#bdbeb8" opacity="0.7"/>
<path d="M493.2,688.1 L486.0,690.8 L476.4,692.4 L471.6,692.9 L461.4,688.3 L464.6,682.7 L474.6,679.7 L479.4,678.6 L486.2,682.2 Z" fill="#585c52" opacity="0.85"/>
<path d="M491.8,686.2 L486.3,687.5 L476.4,690.2 L464.5,688.6 L463.8,682.7 L471.9,675.7 L483.5,680.0 Z" fill="#acada7"/>
<path d="M481.3,681.7 L478.7,684.9 L470.8,685.2 L466.0,681.8 L469.0,680.0 L477.9,679.0 Z" fill="#bdbeb8" opacity="0.7"/>
<path d="M457.5,660.4 L449.9,669.7 L442.8,672.4 L430.0,667.2 L426.9,664.3 L435.1,655.7 L442.4,651.9 L450.8,655.2 Z" fill="#585c52" opacity="0.85"/>
<path d="M454.1,661.6 L454.3,665.3 L447.6,665.9 L437.4,666.9 L429.1,660.6 L432.6,655.7 L438.9,652.0 L442.9,652.0 L452.6,656.5 Z" fill="#acada7"/>
<path d="M444.9,658.0 L445.0,660.2 L436.3,659.7 L432.0,657.8 L436.8,654.5 L442.1,652.9 Z" fill="#bdbeb8" opacity="0.7"/>
<path d="M511.4,655.5 L507.0,660.3 L495.8,660.8 L485.7,658.5 L487.1,652.4 L492.4,648.6 L500.2,645.2 L509.7,646.6 Z" fill="#585c52" opacity="0.85"/>
<path d="M508.4,652.8 L504.6,655.1 L496.6,658.3 L492.5,656.9 L485.3,654.3 L484.4,648.3 L486.5,645.6 L502.6,645.0 L506.1,645.8 Z" fill="#989a93"/>
<path d="M500.6,649.3 L500.0,651.6 L493.2,652.8 L488.7,650.3 L486.3,648.0 L494.3,645.2 L496.4,646.6 Z" fill="#bdbeb8" opacity="0.7"/>
<path d="M532.2,662.7 L526.9,667.7 L521.1,670.1 L509.4,670.8 L502.4,664.4 L503.1,661.6 L508.6,654.3 L521.0,651.4 L530.7,658.7 Z" fill="#585c52" opacity="0.85"/>
<path d="M532.2,660.7 L527.7,663.0 L517.2,665.1 L508.8,664.2 L503.5,659.1 L503.0,653.0 L516.4,649.1 L527.3,654.1 Z" fill="#8e918a"/>
<path d="M519.4,657.4 L519.1,659.4 L511.1,660.0 L505.1,657.9 L506.0,656.7 L512.7,653.9 L517.1,655.3 Z" fill="#bdbeb8" opacity="0.7"/>
<path d="M463.4,693.7 L458.0,698.8 L447.4,697.9 L438.6,699.1 L429.5,696.1 L431.8,690.4 L429.4,685.3 L447.9,684.4 L460.3,686.1 Z" fill="#585c52" opacity="0.85"/>
<path d="M458.8,688.8 L454.7,692.9 L442.6,697.0 L432.4,692.4 L426.2,691.3 L431.1,687.0 L442.9,681.6 L450.7,685.0 Z" fill="#a2a49e"/>
<path d="M447.2,687.7 L444.5,690.8 L439.0,691.1 L432.3,688.7 L430.5,686.0 L437.7,684.0 L444.5,685.3 Z" fill="#bdbeb8" opacity="0.7"/>
<path d="M509.1,656.1 L504.1,661.2 L488.5,663.0 L482.2,660.6 L483.4,653.1 L492.7,648.0 L507.2,649.9 Z" fill="#585c52" opacity="0.85"/>
<path d="M508.6,654.2 L505.2,657.6 L495.8,660.5 L489.2,661.2 L483.0,658.2 L483.6,652.3 L484.9,648.2 L499.3,649.7 L507.1,649.7 Z" fill="#989a93"/>
<path d="M499.7,653.6 L498.0,654.7 L494.4,656.1 L485.1,655.8 L482.3,653.5 L481.2,652.2 L487.2,650.7 L492.3,650.8 L498.8,651.6 Z" fill="#bdbeb8" opacity="0.7"/>
<path d="M438.1,692.3 L432.7,696.5 L411.1,698.6 L403.4,695.0 L402.1,689.5 L414.9,685.7 L426.4,686.1 Z" fill="#585c52" opacity="0.85"/>
<path d="M439.0,688.8 L432.8,694.1 L412.8,697.2 L398.8,694.4 L401.3,691.9 L399.7,686.7 L419.9,683.6 L432.1,684.6 Z" fill="#989a93"/>
<path d="M425.5,688.0 L422.6,690.2 L416.7,690.6 L405.8,690.7 L406.0,689.0 L405.2,688.4 L407.8,686.2 L414.6,686.0 L421.2,685.9 Z" fill="#bdbeb8" opacity="0.7"/>
<path d="M448.6,693.2 L438.3,696.9 L430.0,699.6 L414.7,698.2 L410.5,694.6 L413.6,687.0 L417.7,687.1 L435.4,685.0 L445.6,688.9 Z" fill="#585c52" opacity="0.85"/>
<path d="M442.7,689.2 L435.5,695.3 L420.1,695.8 L409.6,692.1 L414.2,686.2 L419.9,682.5 L439.2,683.7 Z" fill="#8e918a"/>
<path d="M432.7,687.8 L429.1,690.7 L423.0,690.0 L416.7,689.7 L417.2,687.0 L425.4,685.0 L429.0,685.6 Z" fill="#bdbeb8" opacity="0.7"/>
<path d="M503.9,650.4 L500.2,658.7 L480.6,659.5 L468.0,656.1 L467.5,650.5 L478.0,644.9 L500.9,647.2 Z" fill="#585c52" opacity="0.85"/>
<path d="M500.3,652.0 L500.5,654.5 L492.2,656.8 L479.7,658.7 L472.5,653.2 L464.7,648.1 L473.8,644.1 L487.9,642.8 L494.9,646.4 Z" fill="#989a93"/>
<path d="M490.3,649.2 L489.6,649.7 L479.8,651.3 L478.3,651.1 L473.9,649.2 L474.6,647.1 L478.3,644.1 L483.5,643.5 L487.2,646.2 Z" fill="#bdbeb8" opacity="0.7"/>
<path d="M453.9,652.2 L448.8,657.9 L436.7,657.5 L428.3,656.1 L425.4,652.4 L429.9,647.6 L436.1,646.9 L451.0,648.5 Z" fill="#585c52" opacity="0.85"/>
<path d="M446.8,649.3 L444.1,656.3 L431.0,655.0 L428.9,653.7 L424.2,647.8 L438.0,643.7 L444.1,646.7 Z" fill="#acada7"/>
<path d="M440.4,648.3 L436.2,650.6 L434.5,651.1 L428.3,650.4 L426.6,648.4 L434.1,645.5 L437.6,646.7 Z" fill="#bdbeb8" opacity="0.7"/>
<path d="M500.1,675.6 L498.4,678.7 L485.1,680.1 L479.4,677.4 L475.4,671.5 L489.5,664.1 L502.1,667.7 Z" fill="#585c52" opacity="0.85"/>
<path d="M500.0,672.5 L493.5,677.3 L481.9,676.7 L476.6,671.2 L483.6,664.4 L496.7,664.5 Z" fill="#a2a49e"/>
<path d="M491.5,670.0 L490.8,671.4 L483.6,672.4 L478.3,671.0 L478.7,668.2 L482.0,667.1 L490.4,667.6 Z" fill="#bdbeb8" opacity="0.7"/>
<path d="M236.2,704.1 L235.1,707.0 L227.3,708.9 L220.6,706.2 L219.0,702.2 L224.3,699.4 L228.5,697.3 L237.6,699.4 Z" fill="#585c52" opacity="0.85"/>
<path d="M235.6,702.6 L236.8,704.3 L229.0,706.7 L224.8,706.5 L221.7,704.0 L221.5,700.6 L224.4,697.5 L228.2,695.6 L235.1,697.3 Z" fill="#a2a49e"/>
<path d="M231.1,700.3 L227.4,701.7 L224.3,701.9 L221.1,700.8 L222.9,699.0 L224.3,697.6 L229.8,698.6 Z" fill="#bdbeb8" opacity="0.7"/>
<path d="M237.9,697.4 L232.1,702.9 L221.6,702.4 L216.9,697.7 L222.8,693.7 L228.6,694.2 Z" fill="#585c52" opacity="0.85"/>
<path d="M235.5,698.7 L230.9,701.4 L227.2,702.9 L218.6,699.9 L218.1,697.8 L221.0,692.8 L225.4,693.3 L231.8,695.2 Z" fill="#989a93"/>
<path d="M229.3,696.6 L226.6,697.5 L225.3,698.3 L220.9,697.6 L218.9,696.7 L218.0,695.8 L219.5,693.9 L224.7,693.9 L227.9,694.1 Z" fill="#bdbeb8" opacity="0.7"/>
<path d="M247.3,695.7 L242.1,698.7 L231.7,701.1 L223.9,695.7 L231.1,690.5 L243.1,689.1 Z" fill="#585c52" opacity="0.85"/>
<path d="M245.3,694.1 L239.8,696.8 L233.3,698.4 L222.1,694.6 L226.4,690.6 L233.6,686.9 L241.3,688.6 Z" fill="#a2a49e"/>
<path d="M237.9,692.3 L236.7,693.1 L231.3,694.1 L227.5,692.9 L225.9,691.1 L229.9,689.9 L230.9,688.8 L236.1,690.2 Z" fill="#bdbeb8" opacity="0.7"/>
<path d="M411.1,737.4 L407.2,744.2 L398.0,743.4 L380.0,741.7 L379.6,739.2 L380.2,732.1 L396.6,730.2 L410.8,734.1 Z" fill="#585c52" opacity="0.85"/>
<path d="M407.2,735.5 L404.2,738.9 L392.3,742.2 L381.8,739.3 L378.2,734.4 L393.6,729.0 L401.8,729.6 Z" fill="#acada7"/>
<path d="M396.6,734.6 L394.7,736.9 L389.4,736.4 L383.6,735.9 L383.5,732.4 L390.4,731.8 L395.1,731.6 Z" fill="#bdbeb8" opacity="0.7"/>
<path d="M410.2,733.1 L410.6,736.4 L398.6,737.2 L389.3,736.6 L390.7,735.1 L389.5,729.8 L392.4,726.3 L404.0,727.3 L406.2,727.7 Z" fill="#585c52" opacity="0.85"/>
<path d="M410.8,731.3 L408.1,733.9 L398.8,735.4 L390.9,733.2 L388.6,729.7 L390.9,725.2 L401.1,725.2 L411.5,726.3 Z" fill="#a2a49e"/>
<path d="M402.5,728.9 L400.8,730.0 L398.6,730.8 L394.4,731.1 L391.2,729.0 L390.9,727.8 L394.7,725.8 L397.8,726.8 L400.8,727.5 Z" fill="#bdbeb8" opacity="0.7"/>
<path d="M95.9,718.2 L86.3,726.6 L66.3,726.1 L47.8,720.5 L56.4,713.7 L73.8,707.7 L86.9,710.6 Z" fill="#585c52" opacity="0.85"/>
<path d="M95.6,710.8 L93.4,721.6 L67.8,723.7 L62.7,720.8 L53.0,715.4 L58.7,708.0 L77.5,701.3 L90.5,702.3 Z" fill="#8e918a"/>
<path d="M81.5,712.1 L77.7,714.6 L63.6,715.4 L60.8,713.1 L60.4,709.9 L68.9,706.0 L75.4,705.9 Z" fill="#bdbeb8" opacity="0.7"/>
<path d="M101.3,712.1 L95.1,719.6 L87.9,723.3 L69.1,720.0 L64.6,716.7 L71.3,710.5 L83.7,706.4 L96.5,709.6 Z" fill="#585c52" opacity="0.85"/>
<path d="M99.3,711.8 L88.9,717.8 L75.3,719.2 L69.7,711.9 L77.8,706.6 L87.7,704.0 Z" fill="#8e918a"/>
<path d="M88.3,710.4 L88.1,711.4 L82.1,712.1 L72.2,712.4 L73.5,710.7 L71.2,709.3 L75.8,706.6 L83.1,706.7 L88.1,707.8 Z" fill="#bdbeb8" opacity="0.7"/>
<path d="M63.5,744.0 L53.6,751.1 L32.6,754.3 L10.4,745.9 L27.3,737.8 L57.9,735.0 Z" fill="#585c52" opacity="0.85"/>
<path d="M72.2,743.0 L54.8,749.6 L40.4,749.4 L16.4,749.4 L13.3,742.4 L22.2,735.9 L44.9,734.0 L63.5,733.3 Z" fill="#acada7"/>
<path d="M48.5,739.3 L40.5,742.6 L31.6,741.8 L24.3,740.7 L19.2,738.3 L22.1,735.0 L32.2,733.7 L42.9,735.3 Z" fill="#bdbeb8" opacity="0.7"/>
<path d="M78.2,730.6 L70.6,738.4 L60.3,740.5 L49.8,740.1 L43.7,734.3 L42.9,727.8 L47.5,723.5 L60.2,719.2 L74.4,724.5 Z" fill="#585c52" opacity="0.85"/>
<path d="M71.4,731.0 L66.5,735.4 L58.0,735.6 L42.8,733.4 L41.0,726.7 L50.3,718.2 L72.7,722.5 Z" fill="#8e918a"/>
<path d="M63.1,726.1 L57.4,729.6 L50.4,729.8 L46.5,726.7 L51.1,722.4 L58.6,722.1 Z" fill="#bdbeb8" opacity="0.7"/>
<path d="M62.3,719.7 L57.3,725.4 L46.4,725.9 L37.1,722.6 L38.5,715.4 L43.2,707.9 L54.8,709.9 Z" fill="#585c52" opacity="0.85"/>
<path d="M61.7,714.0 L59.7,720.7 L48.8,721.5 L39.1,723.4 L32.1,716.4 L40.4,705.7 L47.9,707.5 L63.4,708.0 Z" fill="#acada7"/>
<path d="M54.3,712.9 L51.4,714.4 L46.6,716.7 L42.2,716.5 L38.3,713.2 L38.9,710.7 L39.2,708.9 L46.2,708.0 L52.5,709.1 Z" fill="#bdbeb8" opacity="0.7"/>
<path d="M154.2,730.1 L146.9,736.8 L139.8,738.4 L123.7,737.1 L119.8,732.2 L117.0,729.8 L126.9,720.5 L141.3,722.8 L145.8,724.5 Z" fill="#585c52" opacity="0.85"/>
<path d="M155.7,727.7 L146.4,733.0 L126.1,732.2 L115.7,728.5 L126.7,718.6 L145.1,722.0 Z" fill="#a2a49e"/>
<path d="M142.3,725.8 L139.1,726.5 L132.9,727.5 L126.0,727.1 L124.6,726.5 L121.5,724.2 L127.6,721.5 L132.7,722.0 L139.1,721.6 Z" fill="#bdbeb8" opacity="0.7"/>
<path d="M152.5,753.6 L145.8,755.5 L136.6,756.8 L130.1,756.3 L125.7,751.4 L130.8,749.6 L143.4,744.5 L144.8,747.0 Z" fill="#585c52" opacity="0.85"/>
<path d="M148.7,749.2 L144.7,754.5 L139.5,755.4 L132.9,753.4 L125.1,751.2 L130.5,747.4 L141.8,743.2 L145.1,746.8 Z" fill="#8e918a"/>
<path d="M142.8,748.4 L139.1,750.0 L135.7,750.9 L130.1,750.0 L131.2,747.8 L132.8,745.7 L140.9,746.9 Z" fill="#bdbeb8" opacity="0.7"/>
<path d="M148.8,738.8 L145.3,743.1 L112.4,744.7 L104.3,735.0 L121.7,728.0 L138.9,726.8 Z" fill="#585c52" opacity="0.85"/>
<path d="M152.6,736.1 L149.7,740.1 L126.9,740.1 L108.8,738.3 L112.9,729.5 L121.1,726.5 L140.8,726.2 Z" fill="#989a93"/>
<path d="M133.5,731.8 L127.9,735.2 L115.5,733.6 L113.1,731.6 L119.7,727.2 L130.7,728.8 Z" fill="#bdbeb8" opacity="0.7"/>
<path d="M139.4,752.7 L129.3,759.9 L113.8,758.8 L104.4,755.0 L102.6,751.8 L111.2,745.7 L126.2,745.6 Z" fill="#585c52" opacity="0.85"/>
<path d="M133.9,749.6 L133.7,754.7 L109.6,756.5 L99.8,753.5 L103.0,748.9 L113.6,744.5 L124.6,742.7 Z" fill="#8e918a"/>
<path d="M121.1,748.3 L119.8,749.8 L115.9,751.0 L111.0,750.3 L104.9,748.3 L104.1,745.9 L109.5,745.6 L112.7,744.0 L119.0,745.3 Z" fill="#bdbeb8" opacity="0.7"/>
<path d="M133.9,732.3 L130.8,737.2 L124.5,739.3 L109.6,737.0 L111.1,731.3 L114.7,724.6 L124.3,723.2 L131.4,727.8 Z" fill="#585c52" opacity="0.85"/>
<path d="M137.4,731.9 L130.4,735.5 L121.0,737.1 L109.5,734.7 L109.5,728.1 L120.1,721.4 L132.8,723.7 Z" fill="#989a93"/>
<path d="M126.6,728.0 L123.2,730.0 L112.9,730.5 L109.6,728.1 L113.4,723.8 L119.8,723.2 Z" fill="#bdbeb8" opacity="0.7"/>
<path d="M123.4,738.8 L120.7,743.4 L112.8,745.6 L99.9,741.4 L104.5,735.8 L110.6,731.7 L123.2,735.0 Z" fill="#585c52" opacity="0.85"/>
<path d="M120.6,738.9 L119.5,741.7 L108.6,744.2 L101.5,740.4 L101.9,734.6 L110.5,732.0 L119.3,733.6 Z" fill="#a2a49e"/>
<path d="M116.6,736.5 L112.1,738.4 L107.2,738.5 L103.8,735.5 L106.2,733.1 L113.7,732.9 Z" fill="#bdbeb8" opacity="0.7"/>
<path d="M204.6,752.7 L199.9,762.1 L184.9,763.8 L178.5,755.8 L177.8,749.3 L187.2,742.7 L197.1,746.2 Z" fill="#585c52" opacity="0.85"/>
<path d="M204.9,752.1 L198.9,756.8 L182.3,758.9 L178.7,756.3 L177.7,750.2 L188.3,742.3 L197.9,744.5 Z" fill="#a2a49e"/>
<path d="M191.5,748.8 L191.0,750.9 L187.5,751.6 L180.2,750.0 L178.9,747.8 L181.3,746.1 L184.4,744.4 L191.3,745.0 Z" fill="#bdbeb8" opacity="0.7"/>
<path d="M206.8,739.7 L204.8,744.3 L199.8,745.4 L192.5,743.2 L190.2,743.4 L190.8,739.7 L194.2,734.9 L201.7,734.5 L207.8,737.8 Z" fill="#585c52" opacity="0.85"/>
<path d="M207.7,739.8 L201.5,741.3 L195.4,742.3 L190.0,739.3 L190.1,735.8 L195.3,733.7 L205.0,734.3 Z" fill="#8e918a"/>
<path d="M200.8,737.2 L200.8,738.1 L195.7,738.7 L194.1,738.7 L192.4,737.7 L191.9,736.4 L194.8,735.1 L195.3,734.5 L198.5,735.8 Z" fill="#bdbeb8" opacity="0.7"/>
<path d="M229.7,745.8 L223.1,750.4 L215.7,753.2 L206.4,753.9 L200.6,744.4 L209.1,736.5 L219.5,735.8 L229.1,739.4 Z" fill="#585c52" opacity="0.85"/>
<path d="M227.6,743.6 L221.9,747.0 L217.0,749.6 L201.4,747.7 L197.1,741.5 L207.3,734.8 L216.8,733.6 L227.8,737.2 Z" fill="#a2a49e"/>
<path d="M219.1,740.3 L216.5,741.9 L212.9,743.2 L207.5,741.4 L203.9,738.3 L206.6,736.6 L210.0,734.5 L215.3,736.1 Z" fill="#bdbeb8" opacity="0.7"/>
<path d="M447.4,782.4 L434.7,789.1 L420.2,791.8 L406.1,789.2 L393.2,785.0 L389.5,779.8 L405.0,775.2 L416.1,771.2 L440.8,776.7 Z" fill="#585c52" opacity="0.85"/>
<path d="M436.1,781.8 L434.3,787.1 L405.6,785.4 L390.3,780.6 L408.1,768.1 L427.7,770.3 Z" fill="#8e918a"/>
<path d="M422.4,776.6 L418.7,780.2 L411.9,781.1 L403.5,778.6 L402.5,777.3 L403.0,773.8 L414.8,771.9 L420.7,773.9 Z" fill="#bdbeb8" opacity="0.7"/>
<path d="M455.9,759.9 L440.1,769.9 L420.7,772.6 L388.6,765.5 L398.9,757.7 L418.2,744.1 L442.2,747.2 Z" fill="#585c52" opacity="0.85"/>
<path d="M454.5,759.2 L441.9,764.8 L420.7,771.6 L411.4,765.7 L399.7,758.2 L410.4,747.4 L421.2,741.9 L440.7,747.7 Z" fill="#a2a49e"/>
<path d="M430.8,754.6 L429.1,756.4 L418.5,759.1 L409.0,759.9 L401.3,754.7 L401.3,753.1 L411.6,748.8 L422.4,748.3 L426.2,751.3 Z" fill="#bdbeb8" opacity="0.7"/>
<path d="M390.9,793.0 L386.3,797.7 L373.2,799.5 L356.7,797.7 L354.1,789.2 L358.1,782.8 L369.8,780.7 L382.5,782.2 Z" fill="#585c52" opacity="0.85"/>
<path d="M386.3,787.6 L382.5,793.7 L372.4,797.3 L359.4,791.7 L356.5,785.4 L367.6,779.9 L384.3,779.7 Z" fill="#8e918a"/>
<path d="M379.5,786.2 L374.2,788.9 L368.7,788.3 L366.0,787.7 L360.6,784.4 L364.8,782.4 L369.0,781.7 L377.3,781.8 Z" fill="#bdbeb8" opacity="0.7"/>
<path d="M403.9,749.8 L398.7,754.5 L389.3,756.6 L386.3,755.7 L373.9,752.8 L375.9,741.2 L383.7,740.5 L391.6,738.8 L405.2,741.3 Z" fill="#585c52" opacity="0.85"/>
<path d="M406.4,747.8 L401.0,751.0 L390.5,753.8 L379.4,748.8 L377.5,747.3 L380.2,738.9 L384.5,735.0 L400.8,740.1 Z" fill="#989a93"/>
<path d="M393.7,742.1 L388.4,746.5 L382.8,745.9 L377.5,742.9 L384.4,739.8 L388.4,739.2 Z" fill="#bdbeb8" opacity="0.7"/>
<path d="M491.9,754.4 L484.9,762.2 L472.4,763.7 L434.3,762.7 L430.4,755.0 L432.9,744.4 L439.0,742.2 L463.8,737.0 L492.3,744.2 Z" fill="#585c52" opacity="0.85"/>
<path d="M492.4,748.9 L487.8,754.1 L461.6,757.1 L441.9,754.6 L436.3,754.4 L425.1,744.0 L451.2,734.3 L456.4,735.3 L481.9,741.0 Z" fill="#a2a49e"/>
<path d="M464.3,744.0 L457.2,748.2 L440.4,748.3 L435.2,745.9 L442.4,740.6 L457.7,738.7 Z" fill="#bdbeb8" opacity="0.7"/>
<path d="M478.3,796.6 L469.6,802.9 L458.0,801.3 L447.0,796.4 L454.6,791.6 L469.0,791.8 Z" fill="#585c52" opacity="0.85"/>
<path d="M476.4,792.6 L471.5,797.8 L460.7,801.1 L447.7,796.4 L444.0,792.7 L460.3,785.9 L466.5,788.2 Z" fill="#8e918a"/>
<path d="M464.2,792.0 L463.0,794.1 L457.8,794.4 L453.9,794.0 L448.1,791.9 L450.9,790.6 L459.8,788.6 L462.2,790.5 Z" fill="#bdbeb8" opacity="0.7"/>
<path d="M454.9,787.6 L449.0,793.1 L442.2,792.7 L435.2,787.8 L436.4,781.3 L451.3,783.1 Z" fill="#585c52" opacity="0.85"/>
<path d="M453.6,784.0 L447.6,790.2 L438.8,789.6 L432.3,784.0 L437.1,779.2 L447.1,778.8 Z" fill="#8e918a"/>
<path d="M448.9,782.8 L444.7,785.1 L441.0,785.8 L436.4,784.7 L437.3,783.3 L439.1,781.2 L442.4,780.7 L447.2,781.0 Z" fill="#bdbeb8" opacity="0.7"/>
<path d="M395.0,780.0 L388.4,786.4 L374.2,787.0 L355.3,787.7 L350.7,779.5 L344.5,774.9 L361.7,762.9 L371.7,758.9 L387.3,766.7 Z" fill="#585c52" opacity="0.85"/>
<path d="M388.6,775.0 L384.2,782.1 L370.0,783.8 L357.1,777.8 L354.9,774.8 L358.5,765.7 L374.7,759.2 L380.4,763.5 Z" fill="#acada7"/>
<path d="M378.9,769.7 L373.4,773.7 L358.8,772.2 L356.8,767.8 L359.7,763.6 L371.3,762.0 Z" fill="#bdbeb8" opacity="0.7"/>
<path d="M475.6,795.5 L472.9,801.3 L461.1,801.1 L456.4,800.6 L444.6,794.9 L442.5,789.6 L453.5,786.4 L459.3,786.0 L475.9,790.4 Z" fill="#585c52" opacity="0.85"/>
<path d="M474.4,789.1 L474.5,797.1 L451.5,797.0 L445.6,793.7 L440.9,787.5 L454.7,783.9 L473.6,783.5 Z" fill="#a2a49e"/>
<path d="M463.8,788.2 L459.1,791.1 L454.8,791.4 L447.6,790.1 L447.3,786.7 L455.1,785.5 L462.6,785.3 Z" fill="#bdbeb8" opacity="0.7"/>
<path d="M394.4,745.7 L392.1,752.4 L386.7,755.6 L377.7,754.3 L366.8,751.4 L367.7,741.4 L371.5,741.1 L386.8,737.1 L399.3,741.7 Z" fill="#585c52" opacity="0.85"/>
<path d="M395.2,742.1 L391.8,750.1 L373.5,750.7 L365.7,746.4 L370.9,734.3 L388.8,738.4 Z" fill="#8e918a"/>
<path d="M383.7,742.1 L385.0,744.0 L380.9,745.3 L373.6,744.5 L368.9,743.1 L368.7,739.2 L373.3,737.5 L376.2,737.2 L384.7,739.5 Z" fill="#bdbeb8" opacity="0.7"/>
<path d="M315.6,769.3 L304.8,772.7 L295.1,773.6 L288.6,766.8 L293.1,763.9 L307.2,763.0 Z" fill="#585c52" opacity="0.85"/>
<path d="M315.8,766.9 L307.4,770.2 L298.9,769.9 L288.7,768.3 L284.9,766.2 L292.7,760.5 L304.9,759.5 L310.4,760.0 Z" fill="#989a93"/>
<path d="M305.8,763.9 L303.9,766.2 L294.5,765.9 L290.6,765.6 L289.8,762.7 L296.3,761.8 L301.8,762.8 Z" fill="#bdbeb8" opacity="0.7"/>
<path d="M357.4,773.5 L351.4,778.9 L348.6,780.5 L332.2,779.3 L332.8,775.9 L332.4,769.9 L345.0,766.9 L359.1,770.0 Z" fill="#585c52" opacity="0.85"/>
<path d="M359.6,773.8 L356.4,774.9 L341.3,778.8 L335.0,774.4 L332.8,771.3 L335.1,769.1 L343.6,765.7 L356.6,767.2 Z" fill="#989a93"/>
<path d="M348.8,770.1 L345.3,772.5 L338.1,772.4 L334.1,770.1 L338.4,767.7 L345.2,766.8 Z" fill="#bdbeb8" opacity="0.7"/>
<path d="M368.0,775.7 L360.7,779.5 L346.7,781.2 L339.5,775.3 L347.6,767.0 L366.3,770.1 Z" fill="#585c52" opacity="0.85"/>
<path d="M366.4,774.2 L360.3,777.8 L352.0,777.1 L339.9,774.5 L341.5,769.8 L350.8,767.2 L368.2,769.2 Z" fill="#acada7"/>
<path d="M358.7,770.6 L355.2,773.3 L349.8,773.5 L345.2,772.8 L342.8,771.2 L346.0,769.2 L352.2,768.2 L357.9,769.3 Z" fill="#bdbeb8" opacity="0.7"/>
<path d="M334.1,763.3 L322.7,768.4 L312.8,768.8 L303.6,767.4 L302.6,757.3 L317.8,752.8 L323.2,756.3 Z" fill="#585c52" opacity="0.85"/>
<path d="M332.5,757.2 L323.2,764.3 L318.8,765.4 L307.6,766.4 L304.9,758.7 L307.1,756.7 L314.1,752.9 L324.8,755.1 Z" fill="#8e918a"/>
<path d="M320.9,757.2 L318.5,759.4 L315.4,759.8 L310.5,759.5 L305.7,757.3 L307.0,755.0 L314.7,754.1 L318.2,755.3 Z" fill="#bdbeb8" opacity="0.7"/>
<path d="M359.4,772.2 L358.6,774.7 L354.3,776.3 L350.2,777.7 L345.6,774.4 L345.6,769.5 L350.5,767.2 L354.0,768.3 L359.5,770.6 Z" fill="#585c52" opacity="0.85"/>
<path d="M360.1,771.6 L356.7,774.0 L352.6,774.6 L346.5,773.8 L344.0,769.4 L350.7,766.6 L356.8,765.2 Z" fill="#8e918a"/>
<path d="M353.7,769.1 L353.3,770.7 L350.0,771.5 L346.8,770.8 L346.4,769.6 L346.9,767.9 L350.1,767.4 L352.8,767.9 Z" fill="#bdbeb8" opacity="0.7"/>
<path d="M359.8,805.9 L356.8,807.6 L350.6,810.0 L346.8,807.9 L343.0,804.3 L344.1,800.8 L353.6,800.0 L358.3,801.8 Z" fill="#585c52" opacity="0.85"/>
<path d="M358.4,802.5 L353.7,806.9 L348.2,808.5 L344.2,802.7 L346.2,799.0 L353.2,799.9 Z" fill="#acada7"/>
<path d="M352.2,802.2 L351.4,803.2 L347.9,803.6 L345.8,803.8 L345.4,802.6 L345.7,801.3 L348.9,799.6 L350.8,800.7 Z" fill="#bdbeb8" opacity="0.7"/>
<path d="M395.1,800.2 L386.6,806.8 L380.2,805.5 L373.1,802.9 L380.6,796.7 L387.5,795.6 Z" fill="#585c52" opacity="0.85"/>
<path d="M393.2,798.8 L389.6,802.3 L385.9,804.1 L377.6,802.6 L374.9,800.7 L373.0,799.3 L378.6,796.6 L384.4,794.2 L391.4,797.7 Z" fill="#989a93"/>
<path d="M385.1,799.0 L383.7,799.7 L378.0,799.8 L375.4,799.0 L379.9,796.7 L383.5,796.9 Z" fill="#bdbeb8" opacity="0.7"/>
<path d="M367.9,811.6 L367.0,813.8 L357.2,814.4 L349.0,813.1 L348.3,808.8 L354.5,806.0 L365.2,806.4 Z" fill="#585c52" opacity="0.85"/>
<path d="M364.4,809.8 L365.0,811.9 L354.2,813.8 L348.4,811.2 L346.1,807.6 L350.2,803.7 L359.1,804.1 L364.0,804.8 Z" fill="#a2a49e"/>
<path d="M359.1,807.8 L357.7,808.4 L351.8,809.5 L351.0,808.7 L350.1,806.5 L351.7,805.2 L357.6,806.1 Z" fill="#bdbeb8" opacity="0.7"/>
<path d="M508.9,830.6 L505.7,834.2 L486.2,834.8 L469.3,834.5 L466.7,828.4 L469.0,820.5 L488.6,819.9 L499.2,821.3 Z" fill="#585c52" opacity="0.85"/>
<path d="M506.1,825.4 L497.6,829.5 L474.1,829.6 L466.7,826.5 L480.3,818.8 L499.2,818.3 Z" fill="#a2a49e"/>
<path d="M493.6,822.3 L483.9,826.0 L476.8,826.1 L473.3,822.2 L476.1,820.1 L487.0,820.4 Z" fill="#bdbeb8" opacity="0.7"/>
<path d="M508.6,829.8 L501.1,840.5 L485.2,839.9 L478.7,833.9 L476.6,830.5 L491.4,818.5 L503.2,825.6 Z" fill="#585c52" opacity="0.85"/>
<path d="M504.9,826.6 L496.7,835.9 L486.9,835.8 L479.1,833.3 L478.0,824.5 L485.5,821.9 L498.8,819.3 Z" fill="#989a93"/>
<path d="M493.6,826.2 L490.1,828.9 L486.9,830.3 L479.1,826.7 L480.1,825.1 L486.1,822.1 L492.6,823.2 Z" fill="#bdbeb8" opacity="0.7"/>
<path d="M501.8,829.3 L500.8,835.8 L493.0,837.0 L484.8,835.3 L478.1,833.7 L477.9,828.1 L481.3,826.1 L488.1,824.6 L498.2,825.5 Z" fill="#585c52" opacity="0.85"/>
<path d="M500.5,828.6 L495.2,832.9 L487.0,833.7 L483.7,833.7 L479.1,831.0 L474.2,828.0 L485.2,822.5 L489.2,822.3 L498.0,823.5 Z" fill="#989a93"/>
<path d="M491.8,827.0 L489.5,828.7 L488.6,829.2 L482.0,828.8 L478.2,827.4 L479.5,825.0 L480.5,824.5 L486.9,824.7 L491.2,825.1 Z" fill="#bdbeb8" opacity="0.7"/>
<path d="M513.4,828.5 L508.4,831.3 L491.5,834.1 L489.0,831.8 L485.6,825.2 L493.8,820.0 L507.5,822.1 Z" fill="#585c52" opacity="0.85"/>
<path d="M510.5,824.8 L508.9,829.8 L497.9,830.0 L491.1,829.2 L483.5,827.0 L481.5,825.7 L489.8,820.9 L504.0,820.5 L505.4,821.5 Z" fill="#acada7"/>
<path d="M501.5,823.8 L500.5,825.5 L492.2,826.7 L486.2,824.9 L487.1,822.7 L491.0,821.2 L498.9,822.3 Z" fill="#bdbeb8" opacity="0.7"/>
<path d="M566.3,760.5 L559.0,763.4 L551.2,765.7 L538.9,762.5 L541.2,758.3 L546.0,750.7 L561.8,751.5 Z" fill="#585c52" opacity="0.85"/>
<path d="M561.2,759.0 L556.1,762.1 L545.3,764.9 L538.2,754.4 L543.9,751.6 L553.7,749.5 Z" fill="#acada7"/>
<path d="M554.2,754.6 L549.7,758.0 L543.9,757.8 L542.1,755.6 L543.0,751.9 L551.3,751.6 Z" fill="#bdbeb8" opacity="0.7"/>
<path d="M540.9,741.7 L538.6,750.3 L522.4,753.9 L509.5,749.7 L505.6,745.6 L501.6,740.9 L510.3,735.5 L526.3,731.3 L535.1,734.2 Z" fill="#585c52" opacity="0.85"/>
<path d="M535.1,742.8 L532.3,746.9 L525.8,748.2 L508.3,747.0 L499.9,740.6 L506.1,734.7 L521.0,729.4 L539.0,734.6 Z" fill="#989a93"/>
<path d="M526.5,739.3 L525.7,740.0 L517.8,742.2 L511.4,741.0 L508.8,738.6 L509.7,736.6 L511.6,735.6 L519.8,734.5 L523.3,736.3 Z" fill="#bdbeb8" opacity="0.7"/>
<path d="M560.8,753.5 L555.4,759.6 L547.5,760.9 L537.7,757.9 L539.2,750.8 L545.7,747.6 L557.5,748.2 Z" fill="#585c52" opacity="0.85"/>
<path d="M562.6,750.8 L553.0,757.4 L541.9,758.1 L535.5,751.8 L541.6,746.4 L556.5,748.5 Z" fill="#8e918a"/>
<path d="M551.6,751.0 L551.8,753.0 L543.2,752.5 L539.6,750.9 L543.0,749.1 L551.2,748.7 Z" fill="#bdbeb8" opacity="0.7"/>
<path d="M587.6,819.2 L581.9,826.8 L570.8,826.9 L560.6,823.6 L555.7,817.4 L564.0,809.9 L574.7,809.6 L587.4,814.6 Z" fill="#585c52" opacity="0.85"/>
<path d="M590.7,819.1 L585.2,822.8 L577.8,823.7 L559.4,823.6 L559.0,817.6 L557.5,812.9 L565.0,810.6 L571.8,808.0 L583.6,811.8 Z" fill="#a2a49e"/>
<path d="M577.1,813.5 L572.6,817.0 L569.5,817.0 L564.3,816.4 L560.6,813.4 L562.6,812.2 L569.2,811.0 L575.2,812.3 Z" fill="#bdbeb8" opacity="0.7"/>
<path d="M571.6,828.1 L569.0,832.7 L555.3,833.6 L550.4,832.7 L542.6,829.1 L548.4,821.4 L555.9,821.1 L562.8,821.0 Z" fill="#585c52" opacity="0.85"/>
<path d="M568.5,826.4 L561.6,832.3 L551.3,831.8 L548.7,828.9 L542.1,822.2 L551.5,818.5 L559.8,819.1 Z" fill="#a2a49e"/>
<path d="M558.0,822.9 L558.4,825.6 L553.0,826.8 L546.7,825.4 L547.7,822.4 L553.2,820.5 L556.4,821.9 Z" fill="#bdbeb8" opacity="0.7"/>
<path d="M582.4,827.7 L576.2,829.8 L569.5,831.9 L559.3,829.6 L559.2,826.2 L563.2,822.3 L575.5,823.5 Z" fill="#585c52" opacity="0.85"/>
<path d="M576.8,825.7 L572.4,829.1 L567.0,830.2 L560.0,828.8 L557.3,824.3 L567.4,822.3 L574.0,821.3 Z" fill="#989a93"/>
<path d="M572.3,824.8 L568.6,826.2 L563.2,826.5 L559.4,825.3 L561.9,823.4 L569.5,823.6 Z" fill="#bdbeb8" opacity="0.7"/>
<path d="M607.6,811.0 L598.2,813.9 L584.2,813.7 L577.5,808.5 L586.6,803.6 L599.6,801.2 Z" fill="#585c52" opacity="0.85"/>
<path d="M604.6,809.0 L603.8,811.9 L591.2,813.7 L580.3,812.3 L581.1,809.5 L576.7,806.9 L586.4,801.7 L592.1,801.2 L598.5,802.6 Z" fill="#a2a49e"/>
<path d="M596.0,804.5 L593.3,806.3 L589.0,807.5 L585.4,808.1 L580.8,805.6 L579.8,804.7 L583.1,803.1 L589.5,802.5 L591.1,803.4 Z" fill="#bdbeb8" opacity="0.7"/>
<path d="M606.7,811.6 L603.4,820.3 L596.3,819.7 L583.1,821.6 L582.8,816.7 L576.9,809.2 L583.7,806.4 L601.8,801.8 L609.8,806.5 Z" fill="#585c52" opacity="0.85"/>
<path d="M606.2,810.9 L604.9,817.0 L588.0,815.8 L578.4,807.8 L588.7,801.7 L599.0,802.1 Z" fill="#a2a49e"/>
<path d="M598.1,805.7 L593.2,810.2 L589.2,811.0 L583.0,807.8 L581.1,805.1 L586.2,803.8 L594.7,802.4 Z" fill="#bdbeb8" opacity="0.7"/>
<path d="M641.6,794.1 L631.7,799.5 L626.5,800.5 L608.5,799.1 L598.1,795.3 L600.8,786.9 L604.9,781.1 L622.4,779.2 L634.2,785.1 Z" fill="#585c52" opacity="0.85"/>
<path d="M639.8,784.7 L632.4,793.2 L618.1,797.2 L599.4,792.3 L598.7,787.2 L608.7,780.1 L615.0,777.2 L636.2,779.5 Z" fill="#acada7"/>
<path d="M623.8,784.8 L621.9,786.2 L611.8,788.8 L603.4,786.1 L603.2,783.7 L606.4,781.8 L613.3,779.6 L620.2,780.7 Z" fill="#bdbeb8" opacity="0.7"/>
<path d="M611.5,809.0 L608.6,818.5 L597.4,818.7 L586.6,817.4 L576.3,808.1 L585.9,797.9 L596.6,798.2 L610.9,798.2 Z" fill="#585c52" opacity="0.85"/>
<path d="M609.7,805.6 L604.4,812.6 L597.2,813.5 L584.2,811.7 L577.8,803.4 L593.5,797.7 L605.1,796.9 Z" fill="#989a93"/>
<path d="M600.7,804.3 L601.0,805.7 L591.6,806.3 L588.1,805.7 L583.2,804.5 L585.1,800.4 L593.0,799.1 L597.7,798.7 Z" fill="#bdbeb8" opacity="0.7"/>
<path d="M611.6,837.7 L603.9,847.7 L588.7,845.8 L580.1,841.5 L587.0,832.3 L606.0,834.3 Z" fill="#585c52" opacity="0.85"/>
<path d="M611.3,837.9 L605.5,841.7 L590.1,844.1 L581.3,839.9 L578.3,833.1 L592.1,830.5 L606.7,830.8 Z" fill="#8e918a"/>
<path d="M601.6,835.4 L596.4,837.1 L588.6,837.1 L583.1,836.7 L581.3,832.7 L587.4,831.2 L594.6,832.0 Z" fill="#bdbeb8" opacity="0.7"/>
<path d="M574.9,838.0 L574.1,841.1 L565.5,842.8 L555.2,841.4 L549.6,836.3 L549.3,830.0 L562.9,827.8 L571.8,828.9 Z" fill="#585c52" opacity="0.85"/>
<path d="M578.1,833.2 L566.0,838.4 L554.7,837.8 L550.9,834.9 L557.9,827.7 L565.0,824.8 Z" fill="#acada7"/>
<path d="M565.1,832.1 L562.3,833.6 L555.4,834.2 L551.5,832.5 L553.5,830.5 L554.7,828.1 L563.6,829.3 Z" fill="#bdbeb8" opacity="0.7"/>
<path d="M592.2,843.5 L589.5,848.7 L579.9,850.8 L570.3,848.0 L569.2,842.9 L578.7,838.3 L586.7,837.4 Z" fill="#585c52" opacity="0.85"/>
<path d="M589.1,843.1 L590.6,845.3 L581.3,847.9 L576.7,846.5 L570.8,842.8 L569.1,839.3 L575.1,835.8 L578.9,834.2 L586.8,835.4 Z" fill="#989a93"/>
<path d="M583.4,839.3 L580.4,842.8 L573.5,842.4 L572.2,839.8 L575.5,837.6 L578.2,837.6 Z" fill="#bdbeb8" opacity="0.7"/>
<path d="M629.2,847.7 L623.2,851.3 L619.5,855.0 L603.3,852.5 L605.6,846.9 L605.3,843.3 L614.4,836.8 L627.3,841.8 Z" fill="#585c52" opacity="0.85"/>
<path d="M628.8,845.3 L624.1,849.1 L621.4,851.4 L609.8,850.8 L603.8,845.4 L604.1,841.4 L608.2,839.6 L621.1,838.2 L626.0,839.8 Z" fill="#989a93"/>
<path d="M620.5,842.8 L615.2,845.2 L609.8,844.5 L603.9,842.5 L610.9,839.8 L616.8,840.0 Z" fill="#bdbeb8" opacity="0.7"/>
<path d="M639.5,866.8 L632.4,871.0 L616.2,873.5 L606.5,870.9 L606.0,865.5 L611.8,859.7 L630.4,859.6 Z" fill="#585c52" opacity="0.85"/>
<path d="M638.1,864.3 L628.2,870.6 L614.2,870.2 L602.6,867.6 L608.3,863.8 L616.0,858.4 L626.1,859.7 Z" fill="#989a93"/>
<path d="M623.4,863.1 L624.0,864.6 L619.5,865.6 L612.7,865.4 L607.9,864.3 L607.0,863.1 L612.7,861.4 L619.5,860.2 L622.1,861.6 Z" fill="#bdbeb8" opacity="0.7"/>
<path d="M660.0,852.3 L659.0,857.5 L642.7,859.8 L631.4,859.3 L626.3,855.4 L637.6,846.1 L642.4,844.8 L651.8,846.3 Z" fill="#585c52" opacity="0.85"/>
<path d="M657.0,848.8 L652.6,855.3 L637.0,857.5 L633.3,854.0 L629.8,848.7 L636.1,840.7 L657.5,842.2 Z" fill="#8e918a"/>
<path d="M647.2,847.1 L645.8,850.0 L638.4,850.1 L632.6,849.1 L632.8,844.6 L639.0,843.1 L645.7,843.8 Z" fill="#bdbeb8" opacity="0.7"/>
<path d="M653.8,743.1 L642.3,748.1 L621.7,749.6 L616.0,744.4 L627.0,732.4 L639.1,733.7 Z" fill="#585c52" opacity="0.85"/>
<path d="M649.0,740.1 L648.3,745.0 L627.6,745.1 L614.2,742.6 L620.9,737.1 L628.9,733.2 L645.1,734.8 Z" fill="#989a93"/>
<path d="M636.7,737.3 L636.4,739.5 L624.8,740.8 L622.7,739.4 L618.4,735.8 L625.2,734.3 L637.8,735.7 Z" fill="#bdbeb8" opacity="0.7"/>
<path d="M676.2,738.3 L668.1,742.8 L661.0,746.4 L645.1,745.3 L635.7,740.3 L638.6,736.1 L643.3,735.1 L656.5,730.4 L665.0,733.7 Z" fill="#585c52" opacity="0.85"/>
<path d="M670.2,735.7 L668.5,741.6 L648.8,741.7 L639.9,740.7 L635.8,738.6 L644.3,731.8 L653.5,729.5 L663.3,729.9 Z" fill="#acada7"/>
<path d="M657.9,735.1 L652.0,737.8 L643.8,737.7 L641.4,735.7 L643.4,732.4 L654.7,732.8 Z" fill="#bdbeb8" opacity="0.7"/>
<path d="M670.1,729.1 L663.1,735.0 L648.8,735.3 L643.1,732.2 L639.1,728.7 L650.4,724.5 L665.6,725.1 Z" fill="#585c52" opacity="0.85"/>
<path d="M664.8,727.1 L663.1,731.0 L653.3,732.1 L643.5,730.5 L638.5,727.1 L642.9,725.3 L651.9,722.2 L662.0,724.8 Z" fill="#8e918a"/>
<path d="M655.7,727.0 L654.2,727.9 L651.0,728.3 L644.5,728.6 L640.6,726.8 L641.5,726.1 L643.1,724.3 L648.0,724.2 L654.3,725.2 Z" fill="#bdbeb8" opacity="0.7"/>
<path d="M158.6,822.1 L158.3,826.1 L148.9,826.2 L142.3,827.6 L139.3,822.1 L140.7,816.2 L151.5,813.5 L157.4,815.8 Z" fill="#585c52" opacity="0.85"/>
<path d="M157.6,819.1 L155.0,823.3 L147.0,823.4 L140.4,823.2 L138.5,818.1 L145.1,813.6 L158.3,814.0 Z" fill="#8e918a"/>
<path d="M151.7,817.5 L151.8,819.1 L146.5,820.3 L144.0,819.1 L141.9,818.8 L141.7,817.0 L143.5,815.7 L148.1,815.0 L151.1,816.2 Z" fill="#bdbeb8" opacity="0.7"/>
<path d="M167.7,806.3 L166.3,809.9 L157.0,810.6 L149.5,810.0 L146.9,809.3 L146.9,805.6 L153.4,803.3 L158.4,802.6 L163.6,802.6 Z" fill="#585c52" opacity="0.85"/>
<path d="M167.0,806.3 L160.9,809.2 L149.0,808.4 L146.4,806.4 L153.3,801.1 L159.9,802.0 Z" fill="#a2a49e"/>
<path d="M159.5,804.5 L155.9,806.0 L150.1,806.0 L148.2,803.9 L149.9,802.2 L155.7,802.7 Z" fill="#bdbeb8" opacity="0.7"/>
<path d="M151.9,819.0 L150.4,823.4 L138.1,824.0 L121.6,825.4 L115.7,821.9 L120.9,812.8 L121.1,809.8 L135.5,804.7 L150.7,813.6 Z" fill="#585c52" opacity="0.85"/>
<path d="M146.8,815.6 L142.2,819.0 L134.2,823.3 L115.8,816.7 L117.7,812.9 L127.0,807.8 L142.6,807.4 Z" fill="#a2a49e"/>
<path d="M136.3,811.7 L133.2,813.9 L133.6,815.2 L125.1,814.4 L121.7,812.0 L119.5,809.3 L126.1,807.9 L130.4,808.0 L134.2,808.7 Z" fill="#bdbeb8" opacity="0.7"/>
<path d="M169.9,862.5 L166.7,867.2 L162.4,870.5 L145.4,868.8 L142.4,867.0 L139.9,855.3 L151.4,854.7 L162.0,851.9 L167.9,853.0 Z" fill="#585c52" opacity="0.85"/>
<path d="M168.9,858.5 L166.9,864.0 L151.7,864.7 L144.2,862.7 L143.9,853.9 L155.0,848.5 L164.5,852.8 Z" fill="#8e918a"/>
<path d="M159.0,856.9 L155.9,859.4 L148.4,860.4 L146.5,858.7 L146.9,854.6 L151.3,853.5 L157.6,853.2 Z" fill="#bdbeb8" opacity="0.7"/>
<path d="M165.2,852.0 L162.8,857.1 L156.7,857.1 L138.7,855.3 L139.9,852.8 L143.9,844.0 L151.8,844.7 L165.2,845.7 Z" fill="#585c52" opacity="0.85"/>
<path d="M168.1,847.9 L160.3,853.9 L145.2,852.4 L141.5,849.9 L144.4,845.0 L161.1,843.9 Z" fill="#a2a49e"/>
<path d="M156.4,848.1 L152.2,849.7 L145.7,849.0 L143.8,847.0 L144.5,844.8 L151.8,844.2 Z" fill="#bdbeb8" opacity="0.7"/>
<path d="M48.4,858.5 L50.0,860.8 L38.7,862.1 L28.0,860.8 L24.4,855.7 L26.5,852.6 L37.2,850.8 L45.9,853.5 Z" fill="#585c52" opacity="0.85"/>
<path d="M51.2,855.9 L44.4,858.0 L35.9,861.0 L24.3,857.7 L27.4,853.6 L32.6,847.1 L41.7,850.0 Z" fill="#a2a49e"/>
<path d="M41.3,852.2 L38.4,854.5 L29.8,855.3 L28.0,853.1 L30.0,851.0 L37.1,849.7 Z" fill="#bdbeb8" opacity="0.7"/>
<path d="M109.1,849.6 L104.5,854.6 L95.3,858.0 L83.9,859.1 L74.3,852.7 L77.4,848.9 L81.1,846.8 L94.0,843.5 L105.2,846.5 Z" fill="#585c52" opacity="0.85"/>
<path d="M106.0,849.3 L108.3,853.2 L81.4,855.8 L73.9,852.5 L72.7,845.2 L82.7,842.7 L98.4,842.6 Z" fill="#989a93"/>
<path d="M95.7,846.7 L93.8,849.5 L81.2,849.9 L75.9,848.5 L75.2,846.1 L84.8,843.1 L93.3,843.6 Z" fill="#bdbeb8" opacity="0.7"/>
<path d="M25.8,855.8 L18.8,866.8 L3.5,866.7 L-5.4,863.2 L-2.4,848.1 L3.5,844.8 L25.7,845.9 Z" fill="#585c52" opacity="0.85"/>
<path d="M25.0,851.6 L27.0,856.3 L12.2,861.3 L-3.1,858.4 L-6.3,856.1 L-12.5,850.2 L1.3,841.5 L12.1,842.0 L22.8,843.8 Z" fill="#8e918a"/>
<path d="M15.1,847.6 L13.8,851.9 L5.6,852.3 L2.6,852.1 L-2.9,851.1 L-5.8,847.7 L1.4,845.6 L8.2,844.8 L10.7,845.8 Z" fill="#bdbeb8" opacity="0.7"/>
<path d="M41.9,839.9 L42.0,842.9 L31.5,847.4 L13.0,843.6 L9.3,839.5 L12.5,834.6 L29.1,829.8 L39.5,833.7 Z" fill="#585c52" opacity="0.85"/>
<path d="M38.8,837.2 L38.8,839.9 L29.6,842.0 L12.9,841.7 L7.6,839.3 L11.7,834.8 L18.0,828.5 L29.1,828.3 L39.0,830.5 Z" fill="#989a93"/>
<path d="M31.2,833.4 L28.1,836.4 L17.9,837.3 L12.1,834.4 L15.5,831.9 L20.8,830.9 L26.5,831.1 Z" fill="#bdbeb8" opacity="0.7"/>
<path d="M110.0,828.0 L104.5,832.7 L95.4,832.6 L83.9,831.8 L84.2,823.2 L93.4,819.5 L107.2,823.2 Z" fill="#585c52" opacity="0.85"/>
<path d="M109.6,826.4 L106.8,829.4 L97.3,830.9 L82.4,827.5 L81.1,823.8 L89.8,818.5 L102.4,820.6 Z" fill="#8e918a"/>
<path d="M101.1,824.1 L98.6,825.6 L91.6,826.5 L86.4,825.6 L85.3,824.0 L89.5,820.6 L92.6,821.0 L101.0,821.6 Z" fill="#bdbeb8" opacity="0.7"/>
<path d="M57.9,828.0 L51.2,835.7 L38.5,837.8 L25.5,838.3 L18.8,830.1 L21.5,821.6 L33.1,820.6 L52.7,824.2 Z" fill="#585c52" opacity="0.85"/>
<path d="M61.9,827.1 L52.9,830.4 L38.8,833.3 L31.4,832.9 L20.2,830.8 L16.1,825.8 L25.9,817.7 L39.3,819.9 L52.2,822.6 Z" fill="#989a93"/>
<path d="M44.7,823.7 L41.8,825.7 L36.6,827.0 L28.6,826.8 L24.8,825.0 L21.9,822.5 L27.0,821.9 L36.6,820.7 L42.0,822.9 Z" fill="#bdbeb8" opacity="0.7"/>
<path d="M72.7,859.0 L62.1,868.5 L49.8,870.0 L37.2,865.8 L39.8,857.9 L46.7,851.4 L66.3,854.0 Z" fill="#585c52" opacity="0.85"/>
<path d="M71.1,855.7 L69.3,861.9 L53.4,864.7 L47.4,863.8 L33.2,859.2 L38.8,856.7 L43.0,851.5 L56.9,850.4 L65.4,854.1 Z" fill="#a2a49e"/>
<path d="M60.4,855.4 L55.0,857.1 L44.8,858.0 L39.8,854.3 L42.5,851.6 L53.9,851.7 Z" fill="#bdbeb8" opacity="0.7"/>
<path d="M672.1,884.7 L663.9,894.0 L656.2,894.7 L646.0,888.3 L646.4,884.2 L657.0,879.1 L669.1,880.4 Z" fill="#585c52" opacity="0.85"/>
<path d="M668.2,885.1 L663.7,888.0 L657.9,892.2 L650.8,892.2 L644.8,886.7 L643.0,882.6 L649.8,875.8 L660.6,875.9 L667.8,877.2 Z" fill="#a2a49e"/>
<path d="M657.8,881.1 L656.8,883.6 L652.7,884.4 L647.3,883.8 L646.7,879.1 L652.5,878.3 L656.9,878.1 Z" fill="#bdbeb8" opacity="0.7"/>
<path d="M681.5,882.7 L668.6,892.6 L657.1,890.0 L642.7,885.7 L654.6,873.9 L672.7,876.1 Z" fill="#585c52" opacity="0.85"/>
<path d="M677.9,881.5 L670.0,887.5 L653.4,885.6 L644.7,881.2 L651.5,873.1 L667.3,873.2 Z" fill="#989a93"/>
<path d="M664.7,877.9 L663.0,880.4 L658.8,880.8 L653.2,880.6 L651.2,879.7 L650.2,877.1 L650.0,875.3 L660.5,874.4 L666.3,876.3 Z" fill="#bdbeb8" opacity="0.7"/>
<path d="M656.1,897.7 L659.5,902.3 L641.6,905.2 L632.9,906.1 L621.7,900.0 L623.4,891.0 L633.3,890.7 L646.9,888.7 L657.8,891.1 Z" fill="#585c52" opacity="0.85"/>
<path d="M653.6,895.7 L650.1,900.9 L627.9,901.9 L624.3,894.6 L627.8,886.8 L645.7,885.9 Z" fill="#989a93"/>
<path d="M645.8,893.0 L640.7,895.7 L637.3,896.2 L631.1,894.4 L631.2,890.4 L634.6,888.0 L641.8,889.6 Z" fill="#bdbeb8" opacity="0.7"/>
<path d="M128.3,485.3 L127.7,487.5 L124.8,488.0 L120.7,488.0 L120.7,486.2 L121.1,484.3 L123.7,482.8 L127.2,484.0 Z" fill="#585c52" opacity="0.85"/>
<path d="M126.8,484.3 L127.3,485.9 L123.5,486.7 L120.8,486.3 L119.1,486.2 L120.5,483.6 L121.9,481.4 L124.6,482.1 L125.8,483.4 Z" fill="#8e918a"/>
<path d="M201.1,487.9 L198.8,489.5 L196.6,491.1 L191.7,491.3 L189.5,489.1 L190.2,487.0 L191.2,486.0 L196.3,485.1 L198.2,487.1 Z" fill="#585c52" opacity="0.85"/>
<path d="M199.2,488.1 L196.6,489.4 L190.5,489.4 L190.7,487.8 L193.4,485.1 L196.9,485.8 Z" fill="#acada7"/>
<path d="M202.7,474.7 L200.0,476.0 L196.0,476.0 L192.2,474.8 L193.1,472.7 L195.0,471.2 L200.1,472.1 Z" fill="#585c52" opacity="0.85"/>
<path d="M201.8,473.4 L197.8,475.0 L195.3,475.3 L190.6,473.6 L191.1,472.8 L194.9,471.1 L199.8,471.7 Z" fill="#acada7"/>
<path d="M187.5,469.0 L187.2,470.7 L183.1,471.7 L181.3,469.9 L180.7,468.8 L184.3,466.9 L186.3,467.7 Z" fill="#585c52" opacity="0.85"/>
<path d="M186.8,468.7 L186.0,469.8 L183.6,470.4 L180.7,469.8 L180.9,467.7 L183.1,466.3 L185.6,466.4 Z" fill="#8e918a"/>
<path d="M186.0,481.0 L184.7,482.5 L180.7,483.4 L173.9,481.3 L176.2,478.5 L177.7,476.9 L184.6,478.2 Z" fill="#585c52" opacity="0.85"/>
<path d="M185.2,480.0 L182.2,481.0 L179.1,482.1 L175.7,480.8 L173.5,478.8 L178.5,476.1 L183.0,476.8 Z" fill="#acada7"/>
<path d="M189.6,476.2 L187.7,477.2 L184.7,477.1 L184.1,475.5 L185.7,473.7 L187.3,474.1 Z" fill="#585c52" opacity="0.85"/>
<path d="M188.8,475.5 L188.0,476.7 L186.6,476.4 L184.6,477.0 L183.3,476.2 L183.7,474.5 L184.1,473.2 L186.5,473.5 L187.6,474.1 Z" fill="#989a93"/>
<path d="M250.0,484.4 L249.5,485.2 L246.8,486.0 L243.5,486.2 L241.7,485.1 L241.1,482.1 L244.5,480.9 L247.2,481.5 L250.7,481.5 Z" fill="#585c52" opacity="0.85"/>
<path d="M249.1,483.1 L249.5,484.9 L245.7,484.8 L243.0,484.5 L240.7,482.7 L242.2,481.0 L246.8,479.5 L249.1,481.0 Z" fill="#8e918a"/>
<path d="M183.8,476.4 L183.0,478.1 L180.1,479.8 L172.4,479.1 L172.8,478.0 L171.9,476.9 L173.1,474.9 L178.6,473.8 L184.1,475.1 Z" fill="#585c52" opacity="0.85"/>
<path d="M184.0,476.1 L181.1,477.3 L175.9,478.3 L171.0,477.6 L171.2,474.2 L177.1,473.5 L180.1,474.1 Z" fill="#acada7"/>
<path d="M213.3,488.1 L211.9,489.7 L210.6,489.8 L208.4,488.9 L208.2,487.9 L208.5,486.3 L210.2,485.9 L211.8,486.9 Z" fill="#585c52" opacity="0.85"/>
<path d="M212.7,487.5 L211.0,489.0 L208.8,488.6 L207.3,487.3 L208.4,486.3 L211.2,485.9 Z" fill="#a2a49e"/>
<path d="M248.1,485.2 L247.4,486.1 L246.2,487.0 L241.9,486.9 L240.2,486.1 L240.5,485.1 L240.4,484.1 L245.8,483.7 L248.1,484.9 Z" fill="#585c52" opacity="0.85"/>
<path d="M247.6,485.5 L246.5,486.1 L241.0,486.4 L238.7,485.7 L239.3,484.5 L243.3,483.8 L246.0,484.4 Z" fill="#989a93"/>
<path d="M328.1,507.4 L325.7,508.5 L321.4,509.2 L319.9,508.1 L319.0,506.7 L322.5,505.4 L326.9,505.8 Z" fill="#585c52" opacity="0.85"/>
<path d="M325.5,506.8 L325.1,507.7 L323.2,508.3 L318.5,507.7 L318.8,507.2 L318.6,506.0 L321.4,505.3 L326.7,505.9 Z" fill="#a2a49e"/>
<path d="M373.1,504.3 L371.9,505.5 L369.5,505.4 L366.3,503.7 L367.7,502.6 L372.3,501.9 Z" fill="#585c52" opacity="0.85"/>
<path d="M372.7,503.6 L372.0,504.4 L368.5,505.2 L366.2,503.8 L366.9,503.0 L369.0,501.5 L371.3,501.8 Z" fill="#8e918a"/>
<path d="M413.1,501.4 L409.4,504.0 L407.0,504.7 L401.6,502.9 L402.8,499.4 L405.3,499.5 L409.9,498.7 Z" fill="#585c52" opacity="0.85"/>
<path d="M413.4,500.2 L411.4,503.2 L406.0,503.6 L402.3,501.8 L403.4,499.5 L405.0,498.1 L411.3,498.9 Z" fill="#a2a49e"/>
<path d="M237.9,499.2 L235.1,499.9 L231.4,500.0 L228.0,500.2 L225.9,499.3 L224.8,498.2 L229.3,496.4 L232.9,495.9 L236.5,497.5 Z" fill="#585c52" opacity="0.85"/>
<path d="M234.8,498.2 L233.2,499.0 L230.9,499.8 L226.1,499.3 L225.3,497.5 L228.3,496.4 L231.8,496.0 L235.0,495.9 Z" fill="#acada7"/>
<path d="M328.4,509.8 L326.5,511.6 L320.4,512.1 L318.7,511.7 L315.8,509.4 L317.7,508.4 L321.3,507.1 L327.0,508.3 Z" fill="#585c52" opacity="0.85"/>
<path d="M325.8,508.7 L323.8,510.7 L320.6,510.9 L317.1,509.9 L315.0,508.9 L317.2,506.1 L320.5,505.5 L325.9,507.0 Z" fill="#a2a49e"/>
<path d="M302.8,507.2 L301.6,508.3 L299.0,508.3 L296.3,507.6 L298.1,505.6 L300.6,505.8 Z" fill="#585c52" opacity="0.85"/>
<path d="M301.1,506.8 L300.8,507.9 L298.1,508.2 L295.9,507.4 L296.5,506.3 L297.6,504.9 L300.6,505.5 Z" fill="#acada7"/>
<path d="M376.3,506.2 L372.6,509.2 L367.4,508.9 L364.8,508.5 L363.2,505.9 L367.9,503.8 L374.2,504.6 Z" fill="#585c52" opacity="0.85"/>
<path d="M373.6,505.9 L373.5,507.2 L370.3,508.3 L365.2,508.0 L364.2,507.4 L362.9,504.9 L366.4,504.3 L370.9,503.9 L372.5,505.4 Z" fill="#989a93"/>
<path d="M261.8,506.7 L260.6,508.4 L256.7,508.5 L254.8,507.0 L255.7,504.8 L261.9,504.6 Z" fill="#585c52" opacity="0.85"/>
<path d="M260.9,506.2 L260.4,507.2 L258.3,507.4 L255.5,507.5 L254.7,506.1 L254.5,504.5 L258.0,503.7 L261.2,504.6 Z" fill="#8e918a"/>
<path d="M266.8,506.1 L265.3,507.4 L261.3,506.9 L260.8,505.8 L261.8,504.5 L265.8,504.7 Z" fill="#585c52" opacity="0.85"/>
<path d="M265.6,505.4 L264.4,506.5 L261.6,506.8 L260.3,506.6 L258.6,505.2 L260.5,504.3 L262.8,503.9 L265.7,504.7 Z" fill="#a2a49e"/>
<path d="M369.1,495.4 L367.5,497.1 L364.1,498.0 L359.5,497.5 L359.7,496.2 L359.6,494.8 L362.7,493.5 L364.2,493.9 L367.6,494.2 Z" fill="#585c52" opacity="0.85"/>
<path d="M367.5,494.6 L366.4,495.9 L363.2,496.8 L359.8,496.4 L359.3,495.2 L358.9,494.0 L364.2,493.2 L365.8,493.6 Z" fill="#acada7"/>
<path d="M364.4,505.5 L363.2,506.3 L359.5,507.2 L357.6,505.8 L356.2,503.5 L358.9,502.3 L363.3,503.5 Z" fill="#585c52" opacity="0.85"/>
<path d="M364.3,504.1 L363.9,505.7 L360.2,506.0 L356.8,505.1 L355.8,504.5 L358.3,502.5 L359.0,501.5 L361.9,502.2 Z" fill="#a2a49e"/>
<path d="M372.2,512.6 L372.9,514.3 L368.5,515.9 L364.8,513.8 L363.1,511.8 L364.3,510.5 L368.3,509.4 L370.2,510.4 Z" fill="#585c52" opacity="0.85"/>
<path d="M372.2,511.9 L371.5,513.3 L367.8,513.6 L364.1,513.9 L362.6,511.9 L364.9,508.5 L367.7,507.6 L370.5,510.2 Z" fill="#8e918a"/>
<path d="M232.8,496.5 L230.0,497.3 L224.4,497.5 L220.3,495.3 L223.0,493.6 L231.0,493.3 Z" fill="#585c52" opacity="0.85"/>
<path d="M230.5,494.3 L229.2,496.7 L225.6,496.7 L222.0,495.2 L222.3,493.9 L225.4,492.4 L229.2,493.5 Z" fill="#8e918a"/>
<path d="M388.0,496.3 L388.0,496.6 L385.3,497.0 L384.0,497.0 L382.3,496.3 L382.9,495.8 L383.6,494.9 L385.6,494.6 L387.6,495.0 Z" fill="#585c52" opacity="0.85"/>
<path d="M386.6,495.7 L386.2,496.5 L384.6,496.9 L383.0,496.1 L382.5,495.7 L382.8,494.4 L385.0,494.5 L386.1,494.0 Z" fill="#a2a49e"/>
<path d="M161.3,540.9 L160.2,542.8 L153.0,544.5 L150.6,541.9 L148.8,539.4 L152.8,537.5 L158.4,536.2 Z" fill="#585c52" opacity="0.85"/>
<path d="M158.6,539.4 L156.5,541.5 L154.3,541.9 L149.9,541.3 L148.3,539.6 L150.9,537.2 L155.4,535.2 L156.4,536.4 Z" fill="#8e918a"/>
<path d="M156.0,538.0 L154.6,539.4 L152.7,539.5 L151.1,539.4 L150.3,538.2 L151.2,536.8 L152.7,536.7 L155.9,537.1 Z" fill="#bdbeb8" opacity="0.7"/>
<path d="M308.6,539.3 L307.0,540.2 L305.4,540.8 L302.1,540.2 L302.0,539.7 L302.8,538.7 L305.4,537.7 L308.3,538.6 Z" fill="#585c52" opacity="0.85"/>
<path d="M307.4,538.6 L306.8,539.3 L304.0,540.0 L302.5,540.2 L302.0,539.4 L301.2,538.4 L302.4,538.0 L304.6,537.6 L306.3,538.1 Z" fill="#8e918a"/>
<path d="M238.5,533.4 L236.7,535.5 L234.4,535.8 L228.8,534.3 L229.6,532.5 L232.3,531.9 L238.1,532.5 Z" fill="#585c52" opacity="0.85"/>
<path d="M238.9,533.6 L236.8,533.9 L232.3,535.1 L228.5,533.9 L228.9,532.8 L232.0,531.5 L235.8,531.4 Z" fill="#989a93"/>
<path d="M114.6,552.0 L110.9,553.8 L102.2,553.4 L98.9,550.4 L104.5,547.4 L109.3,547.8 Z" fill="#585c52" opacity="0.85"/>
<path d="M113.0,550.7 L111.6,551.9 L105.5,552.7 L102.5,552.6 L100.8,550.1 L99.4,547.8 L105.2,546.5 L109.7,548.2 Z" fill="#acada7"/>
<path d="M210.6,557.5 L208.2,559.3 L205.0,560.2 L202.2,561.0 L199.5,558.5 L199.9,555.7 L201.6,554.0 L204.2,553.7 L208.5,553.3 Z" fill="#585c52" opacity="0.85"/>
<path d="M209.9,555.5 L208.6,558.4 L203.5,559.4 L200.3,557.9 L198.8,555.6 L200.4,552.8 L203.2,552.8 L206.6,554.1 Z" fill="#a2a49e"/>
<path d="M205.5,555.3 L203.9,556.2 L203.0,556.7 L200.8,556.2 L200.4,555.5 L201.2,554.1 L203.6,553.4 L204.9,554.6 Z" fill="#bdbeb8" opacity="0.7"/>
<path d="M214.6,536.0 L215.0,537.1 L213.0,538.0 L208.9,537.0 L206.8,535.9 L207.4,535.0 L209.3,533.2 L212.8,532.7 L213.1,534.2 Z" fill="#585c52" opacity="0.85"/>
<path d="M214.5,534.2 L213.2,536.0 L209.9,536.5 L208.5,536.2 L206.3,535.6 L206.1,534.5 L209.2,532.1 L211.8,532.1 L213.4,533.6 Z" fill="#a2a49e"/>
<path d="M286.1,554.7 L283.2,557.1 L279.9,557.9 L276.6,557.5 L273.0,555.0 L273.0,553.4 L279.4,553.1 L284.3,552.5 Z" fill="#585c52" opacity="0.85"/>
<path d="M285.8,554.8 L281.5,556.2 L278.9,556.3 L275.8,555.8 L271.5,554.7 L275.3,552.0 L280.8,551.9 L284.3,553.1 Z" fill="#8e918a"/>
<path d="M126.7,545.1 L125.1,549.0 L119.6,548.8 L117.3,548.4 L115.9,545.5 L117.3,541.9 L119.9,542.0 L124.7,542.0 Z" fill="#585c52" opacity="0.85"/>
<path d="M125.3,545.2 L125.2,546.5 L121.7,547.9 L116.1,546.9 L115.1,546.2 L114.3,544.0 L118.2,541.0 L120.2,540.7 L125.9,542.8 Z" fill="#8e918a"/>
<path d="M122.0,543.6 L120.7,544.7 L118.8,545.3 L117.3,545.1 L116.0,544.2 L116.0,543.8 L118.1,542.4 L119.4,542.7 L121.8,543.0 Z" fill="#bdbeb8" opacity="0.7"/>
<path d="M185.3,542.4 L183.1,544.6 L177.3,545.1 L175.8,544.5 L176.3,541.8 L178.3,540.8 L181.9,541.0 Z" fill="#585c52" opacity="0.85"/>
<path d="M183.9,542.5 L181.9,543.5 L180.2,544.2 L175.9,544.3 L173.8,542.7 L175.1,542.3 L177.6,540.4 L180.1,540.5 L182.4,540.0 Z" fill="#989a93"/>
<path d="M270.4,550.6 L268.0,552.0 L262.2,552.5 L260.4,551.4 L264.0,548.7 L267.7,549.0 Z" fill="#585c52" opacity="0.85"/>
<path d="M269.2,550.7 L267.9,551.1 L266.4,552.2 L261.4,551.5 L259.8,550.8 L260.8,550.0 L262.9,548.5 L265.2,548.6 L266.6,548.7 Z" fill="#a2a49e"/>
<path d="M251.5,550.2 L245.0,554.5 L238.4,554.4 L235.2,551.2 L238.9,546.1 L245.0,547.4 Z" fill="#585c52" opacity="0.85"/>
<path d="M249.0,548.9 L247.2,551.0 L239.0,552.1 L235.5,551.1 L233.6,547.3 L239.8,545.7 L245.0,546.7 Z" fill="#8e918a"/>
<path d="M243.0,548.4 L240.8,549.5 L236.1,549.2 L235.3,548.1 L237.7,546.2 L241.9,546.2 Z" fill="#bdbeb8" opacity="0.7"/>
<path d="M108.3,532.4 L106.7,535.1 L100.5,535.8 L100.5,532.9 L101.1,530.2 L105.1,530.2 Z" fill="#585c52" opacity="0.85"/>
<path d="M107.6,531.7 L105.7,534.1 L103.4,534.3 L101.1,534.3 L99.0,533.0 L99.1,530.8 L101.3,529.8 L103.6,529.8 L105.6,530.0 Z" fill="#989a93"/>
<path d="M149.3,550.1 L148.6,552.0 L143.1,553.4 L138.7,553.0 L136.0,552.8 L135.9,549.4 L141.3,546.8 L142.2,546.7 L147.7,546.4 Z" fill="#585c52" opacity="0.85"/>
<path d="M149.7,549.5 L146.1,551.7 L139.2,552.6 L134.3,548.9 L137.1,546.1 L143.5,545.2 Z" fill="#989a93"/>
<path d="M144.3,547.8 L143.4,549.1 L140.8,549.1 L139.2,549.4 L137.8,548.2 L137.5,547.6 L138.3,546.3 L141.2,546.2 L143.1,547.3 Z" fill="#bdbeb8" opacity="0.7"/>
<path d="M240.4,543.4 L239.2,545.0 L232.1,545.9 L228.6,544.0 L230.5,541.9 L231.4,540.3 L236.0,540.9 Z" fill="#585c52" opacity="0.85"/>
<path d="M237.8,542.7 L236.4,544.3 L231.9,544.6 L227.6,543.1 L231.3,540.5 L235.4,540.5 Z" fill="#acada7"/>
<path d="M538.0,575.4 L537.9,576.3 L533.9,576.7 L532.7,576.2 L531.4,574.7 L535.5,573.2 L538.1,573.8 Z" fill="#585c52" opacity="0.85"/>
<path d="M538.2,574.7 L535.8,575.9 L533.4,576.0 L532.7,575.6 L531.6,574.2 L534.3,572.9 L536.3,573.1 Z" fill="#acada7"/>
<path d="M636.9,568.9 L634.9,569.9 L630.6,570.1 L629.7,569.1 L631.4,566.5 L635.3,566.2 Z" fill="#585c52" opacity="0.85"/>
<path d="M636.3,567.6 L634.9,569.1 L631.7,569.5 L628.6,568.6 L630.9,566.8 L634.3,566.5 Z" fill="#8e918a"/>
<path d="M578.8,587.5 L575.1,589.3 L567.3,589.6 L560.3,589.0 L561.2,584.4 L568.0,583.1 L575.5,583.8 Z" fill="#585c52" opacity="0.85"/>
<path d="M576.5,585.4 L573.8,587.1 L570.8,588.4 L565.8,588.2 L560.4,586.6 L559.6,585.4 L563.6,582.8 L571.1,581.6 L572.9,583.9 Z" fill="#a2a49e"/>
<path d="M570.1,584.5 L569.9,585.9 L564.3,586.3 L562.5,584.7 L564.7,583.5 L568.1,583.8 Z" fill="#bdbeb8" opacity="0.7"/>
<path d="M668.7,581.2 L665.0,582.2 L661.7,583.5 L656.5,582.2 L654.8,579.9 L659.0,577.3 L665.4,577.7 Z" fill="#585c52" opacity="0.85"/>
<path d="M666.5,579.8 L662.0,581.6 L656.8,581.1 L655.2,579.8 L657.7,576.7 L663.8,577.8 Z" fill="#acada7"/>
<path d="M701.9,578.4 L697.9,579.2 L694.8,579.8 L690.2,579.3 L688.2,578.0 L689.6,575.6 L694.0,575.6 L697.7,576.2 Z" fill="#585c52" opacity="0.85"/>
<path d="M699.5,576.7 L697.0,579.2 L690.3,579.2 L689.9,578.0 L688.1,576.5 L691.3,575.3 L698.0,575.1 Z" fill="#a2a49e"/>
<path d="M522.9,554.9 L520.2,556.1 L516.8,555.8 L515.3,554.3 L516.3,552.6 L519.5,552.4 Z" fill="#585c52" opacity="0.85"/>
<path d="M521.1,553.9 L519.0,555.5 L516.2,555.3 L513.1,553.9 L515.1,551.7 L520.1,551.9 Z" fill="#989a93"/>
<path d="M529.7,563.3 L527.6,564.1 L522.1,565.3 L518.6,565.3 L516.1,563.3 L514.6,561.8 L519.9,560.8 L525.8,559.6 L526.4,561.5 Z" fill="#585c52" opacity="0.85"/>
<path d="M527.0,562.3 L525.3,563.6 L518.4,564.0 L512.7,562.4 L518.9,559.7 L526.4,559.4 Z" fill="#a2a49e"/>
<path d="M526.6,575.4 L524.1,577.8 L520.2,579.3 L514.9,577.7 L512.7,575.0 L516.4,571.5 L517.7,570.6 L526.2,572.2 Z" fill="#585c52" opacity="0.85"/>
<path d="M526.0,574.0 L523.4,575.6 L519.1,576.6 L512.9,574.3 L512.2,570.8 L518.8,569.6 L521.7,570.8 Z" fill="#8e918a"/>
<path d="M519.9,572.3 L519.2,573.5 L514.9,573.2 L514.2,572.2 L516.1,570.1 L519.8,570.6 Z" fill="#bdbeb8" opacity="0.7"/>
<path d="M526.3,559.1 L524.7,559.8 L523.7,559.8 L521.2,559.2 L521.0,558.2 L523.7,557.7 L525.8,557.3 Z" fill="#585c52" opacity="0.85"/>
<path d="M526.4,558.0 L524.7,559.5 L521.9,559.3 L519.2,558.6 L521.9,557.3 L524.5,557.5 Z" fill="#a2a49e"/>
<path d="M591.5,559.6 L589.2,562.5 L584.0,563.8 L576.1,561.7 L577.3,559.3 L584.8,555.7 L589.8,556.2 Z" fill="#585c52" opacity="0.85"/>
<path d="M590.2,559.1 L588.1,561.0 L583.1,561.6 L575.4,560.0 L575.9,557.3 L580.3,555.7 L589.3,556.2 Z" fill="#a2a49e"/>
<path d="M586.3,558.0 L584.3,558.9 L583.6,559.4 L581.1,559.0 L578.5,558.2 L578.0,557.8 L580.0,556.5 L582.9,556.7 L584.2,557.2 Z" fill="#bdbeb8" opacity="0.7"/>
<path d="M689.1,561.3 L690.0,562.8 L684.2,562.8 L677.5,562.5 L675.7,560.8 L677.1,559.0 L679.5,556.0 L684.6,555.8 L689.5,557.9 Z" fill="#585c52" opacity="0.85"/>
<path d="M687.7,559.8 L684.3,561.4 L680.5,562.7 L676.2,560.9 L674.8,557.1 L679.1,556.8 L685.5,555.4 Z" fill="#acada7"/>
<path d="M683.4,558.0 L682.4,559.3 L680.2,559.3 L676.6,558.7 L676.3,558.0 L678.6,556.4 L681.3,557.1 Z" fill="#bdbeb8" opacity="0.7"/>
<path d="M508.9,572.2 L509.0,572.9 L500.6,574.2 L496.6,573.1 L491.5,571.8 L495.6,570.0 L503.3,567.8 L506.6,568.8 Z" fill="#585c52" opacity="0.85"/>
<path d="M509.6,569.5 L506.9,571.7 L502.1,573.6 L496.8,573.4 L492.6,572.2 L495.4,568.9 L495.0,567.1 L503.6,568.1 L508.5,568.2 Z" fill="#a2a49e"/>
<path d="M503.6,569.1 L501.0,570.7 L497.8,570.4 L494.3,569.5 L497.4,568.4 L501.7,568.0 Z" fill="#bdbeb8" opacity="0.7"/>
<path d="M547.7,583.1 L546.6,584.0 L539.2,586.2 L535.0,585.1 L530.6,583.5 L530.7,579.5 L536.7,578.2 L538.0,577.2 L545.4,578.4 Z" fill="#585c52" opacity="0.85"/>
<path d="M547.1,580.4 L546.2,582.9 L538.3,583.8 L533.7,582.7 L531.2,580.2 L534.0,577.2 L537.5,576.7 L543.3,578.3 Z" fill="#8e918a"/>
<path d="M540.0,579.9 L538.3,580.8 L534.9,581.4 L533.2,580.0 L534.9,578.8 L538.6,578.7 Z" fill="#bdbeb8" opacity="0.7"/>
<path d="M537.3,575.1 L535.7,577.4 L528.9,578.0 L526.5,573.9 L529.6,570.1 L535.5,571.7 Z" fill="#585c52" opacity="0.85"/>
<path d="M537.3,573.6 L532.7,576.2 L527.6,576.6 L525.2,573.2 L526.6,570.6 L533.4,569.9 Z" fill="#8e918a"/>
<path d="M532.2,572.6 L531.0,573.7 L527.5,573.9 L526.6,572.9 L527.5,570.8 L530.5,570.8 Z" fill="#bdbeb8" opacity="0.7"/>
<path d="M456.5,522.3 L454.8,523.5 L448.2,524.1 L446.8,521.9 L447.0,519.9 L455.8,520.0 Z" fill="#585c52" opacity="0.85"/>
<path d="M454.8,521.7 L453.7,522.3 L448.8,523.0 L445.0,522.1 L446.1,520.3 L449.6,518.5 L452.5,519.2 Z" fill="#a2a49e"/>
<path d="M431.8,537.1 L428.6,539.2 L425.8,538.6 L422.3,537.3 L421.6,534.8 L425.6,533.7 L430.3,534.7 Z" fill="#585c52" opacity="0.85"/>
<path d="M430.6,535.6 L429.1,537.5 L425.8,537.7 L421.5,537.0 L420.6,535.2 L425.2,533.7 L428.3,533.8 Z" fill="#acada7"/>
<path d="M441.0,525.4 L440.3,526.6 L437.9,526.9 L435.1,526.2 L435.1,524.3 L437.8,524.0 L441.2,524.4 Z" fill="#585c52" opacity="0.85"/>
<path d="M440.9,524.6 L440.0,526.3 L438.4,526.7 L435.9,525.9 L435.0,524.6 L435.6,524.1 L438.4,523.3 L439.7,523.7 Z" fill="#989a93"/>
<path d="M493.5,538.3 L490.7,539.7 L487.1,539.2 L484.7,538.3 L484.8,536.2 L489.0,535.3 L491.3,536.0 Z" fill="#585c52" opacity="0.85"/>
<path d="M492.4,537.3 L490.4,538.4 L487.6,539.0 L484.9,538.6 L484.0,536.8 L485.0,535.7 L488.7,535.4 L490.4,535.7 Z" fill="#a2a49e"/>
<path d="M499.9,522.0 L499.7,523.7 L496.1,523.7 L490.7,523.3 L489.0,523.1 L490.3,519.5 L491.3,518.8 L496.9,518.1 L498.1,519.0 Z" fill="#585c52" opacity="0.85"/>
<path d="M500.3,520.0 L496.3,522.3 L491.0,522.7 L488.1,520.9 L491.2,517.1 L495.7,516.8 Z" fill="#acada7"/>
<path d="M506.8,542.9 L505.4,544.4 L504.3,544.7 L501.1,544.6 L501.1,542.9 L501.5,542.5 L503.7,541.7 L507.0,542.0 Z" fill="#585c52" opacity="0.85"/>
<path d="M506.1,542.4 L504.4,543.7 L501.9,543.9 L499.5,542.6 L500.5,541.6 L505.3,541.7 Z" fill="#a2a49e"/>
<path d="M431.7,517.3 L429.6,518.2 L424.6,518.5 L424.3,517.3 L425.7,514.8 L430.5,515.6 Z" fill="#585c52" opacity="0.85"/>
<path d="M432.7,516.9 L429.9,517.4 L425.0,517.7 L423.5,517.1 L422.5,515.3 L425.9,514.5 L429.7,515.2 Z" fill="#acada7"/>
<path d="M520.0,542.6 L520.2,544.9 L516.2,545.2 L511.9,545.4 L507.8,543.9 L507.6,543.0 L510.5,540.0 L514.3,539.6 L520.2,541.1 Z" fill="#585c52" opacity="0.85"/>
<path d="M519.4,542.2 L518.6,543.9 L513.9,544.4 L510.3,544.0 L508.4,542.8 L507.9,540.1 L511.8,539.4 L514.2,539.2 L517.3,540.8 Z" fill="#989a93"/>
<path d="M409.2,636.5 L407.1,637.4 L405.9,638.0 L401.1,637.2 L400.9,636.5 L402.2,635.0 L404.8,634.4 L408.5,635.3 Z" fill="#585c52" opacity="0.85"/>
<path d="M407.5,635.9 L406.3,636.8 L402.8,636.8 L400.7,636.1 L401.0,634.7 L403.4,633.5 L405.5,634.6 Z" fill="#989a93"/>
<path d="M634.6,612.4 L634.7,614.4 L631.2,615.3 L626.2,615.3 L624.7,613.6 L624.5,611.2 L624.2,609.7 L630.1,609.1 L633.4,611.3 Z" fill="#585c52" opacity="0.85"/>
<path d="M634.5,611.9 L633.3,612.6 L629.3,614.0 L624.2,613.8 L622.1,612.0 L623.9,611.0 L623.7,609.1 L629.8,607.9 L632.6,610.4 Z" fill="#8e918a"/>
<path d="M471.9,592.9 L469.6,594.1 L467.3,595.1 L465.6,595.2 L463.5,592.9 L463.5,592.5 L465.5,590.0 L469.0,590.3 L471.0,591.4 Z" fill="#585c52" opacity="0.85"/>
<path d="M469.9,591.2 L469.3,593.5 L464.7,593.0 L463.4,592.0 L465.4,589.5 L468.8,589.9 Z" fill="#acada7"/>
<path d="M89.1,614.7 L86.2,616.8 L84.0,617.1 L81.7,617.1 L78.5,614.8 L81.0,613.3 L84.1,613.0 L87.3,613.9 Z" fill="#585c52" opacity="0.85"/>
<path d="M87.4,615.2 L85.8,616.0 L83.5,616.9 L80.1,615.5 L78.4,614.2 L80.6,613.3 L82.0,612.4 L85.7,612.8 Z" fill="#8e918a"/>
<path d="M474.5,595.9 L471.4,597.5 L468.4,597.9 L462.2,596.7 L461.5,595.0 L463.9,592.8 L468.5,592.1 L471.9,593.1 Z" fill="#585c52" opacity="0.85"/>
<path d="M472.8,594.8 L469.9,595.7 L468.5,596.4 L464.9,596.7 L461.1,594.8 L462.3,593.8 L463.6,591.8 L466.4,592.3 L471.3,592.9 Z" fill="#989a93"/>
<path d="M570.9,605.5 L565.7,608.4 L559.7,608.0 L554.8,605.6 L556.3,603.0 L565.3,603.2 Z" fill="#585c52" opacity="0.85"/>
<path d="M568.9,605.0 L563.1,606.4 L559.2,606.4 L555.6,604.5 L557.5,603.0 L563.9,601.8 Z" fill="#a2a49e"/>
<path d="M349.6,608.5 L348.4,609.8 L344.5,609.3 L344.1,608.6 L346.4,606.7 L350.0,606.9 Z" fill="#585c52" opacity="0.85"/>
<path d="M350.1,608.3 L348.7,608.7 L347.5,608.8 L344.8,608.5 L344.1,608.2 L344.0,607.8 L344.5,606.7 L347.5,606.8 L348.5,606.7 Z" fill="#989a93"/>
<path d="M209.3,585.6 L205.7,586.8 L200.9,587.1 L197.4,586.3 L196.9,584.9 L201.0,582.8 L206.9,583.5 Z" fill="#585c52" opacity="0.85"/>
<path d="M207.3,585.3 L205.9,586.4 L199.2,586.2 L198.1,585.4 L200.0,583.5 L205.2,583.5 Z" fill="#8e918a"/>
<path d="M696.4,625.2 L696.6,625.7 L692.5,626.8 L689.3,626.0 L688.5,624.5 L689.0,623.2 L693.2,622.8 L695.2,622.6 Z" fill="#585c52" opacity="0.85"/>
<path d="M696.0,623.9 L694.2,625.0 L691.4,626.0 L689.1,625.5 L689.0,624.2 L689.2,622.1 L692.8,622.4 L694.2,622.7 Z" fill="#acada7"/>
<path d="M679.8,590.1 L677.5,592.0 L675.4,591.2 L674.4,589.8 L674.5,588.5 L677.8,588.0 Z" fill="#585c52" opacity="0.85"/>
<path d="M679.4,589.1 L677.6,590.8 L674.8,590.7 L673.1,590.0 L673.0,588.8 L675.3,587.8 L676.9,588.2 Z" fill="#a2a49e"/>
<path d="M482.0,637.4 L479.7,639.5 L473.6,639.3 L470.9,637.7 L474.2,635.9 L478.9,635.3 Z" fill="#585c52" opacity="0.85"/>
<path d="M480.8,637.0 L478.4,638.5 L473.8,639.3 L470.9,638.1 L470.1,636.7 L471.7,635.6 L475.0,634.4 L478.1,635.6 Z" fill="#989a93"/>
<path d="M565.8,589.8 L563.0,590.6 L561.3,591.5 L557.8,590.8 L558.4,588.9 L561.5,586.8 L563.8,587.2 Z" fill="#585c52" opacity="0.85"/>
<path d="M563.7,588.3 L562.0,590.5 L558.7,589.8 L556.2,588.6 L558.3,586.8 L562.9,586.1 Z" fill="#a2a49e"/>
<path d="M76.4,622.8 L74.6,624.3 L69.4,624.7 L66.5,621.8 L70.4,620.1 L74.0,620.4 Z" fill="#585c52" opacity="0.85"/>
<path d="M76.2,621.8 L74.5,623.3 L72.4,623.7 L67.5,622.9 L67.2,621.7 L66.9,619.6 L70.4,619.3 L74.7,619.2 Z" fill="#989a93"/>
<path d="M697.2,591.0 L696.0,592.3 L694.4,592.5 L692.3,592.4 L690.1,591.4 L689.9,590.4 L691.3,589.0 L694.7,588.8 L696.2,590.4 Z" fill="#585c52" opacity="0.85"/>
<path d="M695.4,590.4 L695.3,591.7 L693.9,592.1 L690.1,591.8 L689.2,591.1 L688.6,590.0 L690.2,588.9 L693.3,589.2 L694.5,588.7 Z" fill="#8e918a"/>
<path d="M184.3,629.0 L183.1,630.2 L181.1,631.2 L177.1,630.6 L176.1,630.3 L175.4,629.1 L177.3,627.5 L180.7,627.7 L182.3,628.5 Z" fill="#585c52" opacity="0.85"/>
<path d="M181.5,629.1 L180.7,630.0 L179.6,630.0 L176.3,629.6 L175.6,629.0 L176.2,627.0 L178.0,626.8 L181.1,627.1 Z" fill="#989a93"/>
<path d="M574.6,599.4 L573.4,600.8 L569.9,600.8 L567.9,600.8 L566.8,599.0 L568.9,598.2 L571.1,597.6 L573.7,598.4 Z" fill="#585c52" opacity="0.85"/>
<path d="M574.3,598.6 L573.2,600.2 L570.7,600.0 L567.7,599.9 L566.2,599.2 L567.1,598.5 L567.2,597.3 L570.7,596.8 L573.5,598.0 Z" fill="#989a93"/>
<path d="M689.5,580.3 L688.0,581.8 L684.1,582.2 L681.1,581.8 L681.8,579.9 L685.1,579.1 L686.9,579.1 Z" fill="#585c52" opacity="0.85"/>
<path d="M687.9,580.5 L687.2,580.7 L684.1,581.6 L683.1,581.5 L680.8,580.4 L680.5,579.8 L681.7,578.9 L685.6,578.2 L687.1,578.4 Z" fill="#acada7"/>
<path d="M141.3,623.6 L139.3,624.9 L135.4,625.3 L132.4,623.3 L135.1,622.0 L139.6,621.4 Z" fill="#585c52" opacity="0.85"/>
<path d="M140.5,622.9 L138.3,624.5 L135.9,624.1 L133.8,623.6 L132.3,622.6 L135.4,621.5 L138.5,621.8 Z" fill="#acada7"/>
<path d="M117.6,619.6 L115.6,621.9 L112.3,622.0 L110.2,620.3 L110.2,617.3 L113.4,616.8 L115.9,617.8 Z" fill="#585c52" opacity="0.85"/>
<path d="M116.9,618.9 L114.8,620.0 L113.3,620.5 L110.3,620.0 L108.4,618.6 L110.7,617.3 L111.8,615.9 L115.7,616.9 Z" fill="#989a93"/>
<path d="M77.9,586.7 L77.9,587.5 L75.4,587.6 L71.8,587.7 L71.4,586.4 L71.5,585.6 L75.3,585.3 L78.2,585.9 Z" fill="#585c52" opacity="0.85"/>
<path d="M76.9,586.3 L76.4,587.3 L72.7,586.9 L71.5,586.4 L71.8,585.0 L76.5,584.8 Z" fill="#989a93"/>
<path d="M111.9,608.2 L111.2,609.6 L109.8,609.6 L107.8,609.5 L106.5,609.0 L107.2,607.9 L108.5,606.6 L110.1,607.2 L111.4,607.7 Z" fill="#585c52" opacity="0.85"/>
<path d="M111.6,607.9 L110.1,609.0 L107.7,609.0 L106.1,608.3 L106.7,607.2 L107.2,606.5 L109.7,606.7 Z" fill="#a2a49e"/>
<path d="M190.1,623.6 L187.5,625.6 L181.8,625.7 L176.7,624.4 L182.6,622.0 L187.0,622.0 Z" fill="#585c52" opacity="0.85"/>
<path d="M190.0,623.2 L189.0,624.3 L182.4,625.5 L180.9,625.2 L177.4,624.1 L176.8,623.0 L181.8,621.4 L184.0,620.6 L186.6,621.7 Z" fill="#a2a49e"/>
<path d="M463.2,599.1 L460.3,601.1 L455.3,602.1 L449.8,600.7 L451.5,597.5 L453.8,595.8 L460.0,597.3 Z" fill="#585c52" opacity="0.85"/>
<path d="M461.0,598.8 L460.9,599.6 L455.3,600.9 L454.1,600.6 L449.9,599.8 L450.3,597.7 L454.2,596.0 L456.8,594.9 L459.8,596.3 Z" fill="#8e918a"/>
<path d="M475.9,601.4 L474.0,602.8 L472.5,603.2 L469.2,602.8 L465.8,601.5 L465.6,599.9 L467.9,599.2 L471.9,598.6 L475.2,599.5 Z" fill="#585c52" opacity="0.85"/>
<path d="M474.3,599.9 L473.5,602.0 L468.9,602.5 L464.8,600.5 L465.2,598.6 L468.9,597.1 L473.3,597.2 Z" fill="#acada7"/>
<path d="M691.1,615.2 L690.2,617.1 L687.2,617.1 L684.6,615.4 L683.5,614.0 L686.0,611.8 L689.5,612.4 Z" fill="#585c52" opacity="0.85"/>
<path d="M691.2,613.5 L688.6,615.4 L685.1,616.1 L683.6,613.8 L685.0,612.2 L688.5,611.4 Z" fill="#8e918a"/>
<path d="M202.1,641.5 L200.4,643.4 L197.8,644.4 L195.4,643.5 L192.6,642.2 L192.8,641.0 L196.7,639.5 L197.5,639.6 L200.2,640.5 Z" fill="#585c52" opacity="0.85"/>
<path d="M199.7,641.4 L198.4,642.9 L194.6,642.6 L193.4,641.2 L193.4,639.2 L198.3,639.2 Z" fill="#989a93"/>
<path d="M657.7,674.6 L655.5,675.0 L653.9,676.2 L650.1,675.4 L649.4,673.8 L650.3,672.2 L651.9,671.1 L655.5,671.6 Z" fill="#585c52" opacity="0.85"/>
<path d="M656.0,672.7 L655.3,674.3 L653.4,674.6 L649.6,674.6 L649.0,674.3 L649.4,672.5 L651.0,671.2 L652.2,670.5 L654.5,672.0 Z" fill="#8e918a"/>
<path d="M166.7,704.6 L164.9,707.0 L161.3,707.9 L159.3,706.3 L157.1,705.4 L159.4,703.6 L161.3,702.4 L165.6,703.5 Z" fill="#585c52" opacity="0.85"/>
<path d="M166.9,703.8 L164.2,706.1 L162.9,706.5 L159.6,705.7 L157.2,704.1 L158.7,703.0 L162.6,701.2 L164.9,702.2 Z" fill="#acada7"/>
<path d="M189.5,683.3 L186.9,685.1 L182.7,685.1 L181.2,683.0 L183.9,680.1 L186.7,679.8 Z" fill="#585c52" opacity="0.85"/>
<path d="M188.7,681.9 L188.1,683.0 L183.9,684.2 L180.9,682.9 L180.7,681.2 L180.9,680.7 L184.7,678.9 L186.5,680.2 Z" fill="#8e918a"/>
<path d="M519.7,658.5 L517.6,659.5 L512.0,660.0 L508.6,659.5 L509.5,656.6 L513.8,655.0 L519.0,655.4 Z" fill="#585c52" opacity="0.85"/>
<path d="M519.3,657.3 L518.6,658.7 L513.4,659.2 L510.6,658.9 L509.1,656.7 L510.4,655.6 L513.4,654.3 L516.5,654.7 Z" fill="#acada7"/>
<path d="M118.0,670.9 L117.2,672.4 L114.6,672.4 L111.8,672.4 L111.0,671.7 L111.4,670.4 L113.3,669.2 L114.6,668.4 L119.4,669.7 Z" fill="#585c52" opacity="0.85"/>
<path d="M117.6,670.6 L116.4,671.2 L114.6,672.2 L111.3,671.9 L110.1,669.8 L111.7,669.2 L113.0,667.7 L118.1,668.9 Z" fill="#8e918a"/>
<path d="M227.7,724.9 L227.5,726.3 L225.1,727.5 L222.0,726.7 L220.4,724.5 L221.4,724.1 L224.4,722.9 L226.7,723.6 Z" fill="#585c52" opacity="0.85"/>
<path d="M227.6,724.5 L227.4,725.7 L222.2,726.6 L219.2,725.6 L219.4,724.5 L220.1,722.3 L222.8,722.0 L226.4,722.3 Z" fill="#8e918a"/>
<path d="M692.4,671.0 L690.5,672.2 L688.4,672.1 L686.2,671.2 L687.9,668.9 L690.9,669.1 Z" fill="#585c52" opacity="0.85"/>
<path d="M692.2,670.1 L690.7,671.1 L689.1,671.7 L687.0,671.0 L686.5,669.7 L688.1,668.1 L690.9,668.8 Z" fill="#8e918a"/>
<path d="M309.3,689.4 L307.0,691.3 L304.8,692.7 L299.6,692.8 L297.4,690.6 L299.6,688.7 L304.5,687.4 L308.3,687.7 Z" fill="#585c52" opacity="0.85"/>
<path d="M307.4,689.6 L305.5,690.4 L300.1,690.9 L296.8,690.8 L297.2,688.8 L300.8,686.2 L307.4,686.9 Z" fill="#acada7"/>
<path d="M251.9,648.5 L252.1,649.4 L248.8,649.6 L247.8,649.0 L246.5,647.6 L248.1,646.4 L251.3,647.2 Z" fill="#585c52" opacity="0.85"/>
<path d="M251.7,647.5 L249.9,649.0 L247.5,648.7 L246.0,647.5 L248.0,645.9 L250.4,646.0 Z" fill="#acada7"/>
<path d="M362.6,685.0 L359.4,687.3 L355.5,687.7 L351.7,687.4 L352.4,685.8 L353.5,682.4 L355.1,681.1 L361.8,683.0 Z" fill="#585c52" opacity="0.85"/>
<path d="M360.9,683.4 L358.0,686.4 L353.0,686.4 L352.0,684.8 L352.8,681.0 L359.0,681.8 Z" fill="#989a93"/>
<path d="M215.9,652.4 L213.3,654.1 L209.0,654.5 L206.3,653.0 L207.6,650.3 L212.8,650.2 Z" fill="#585c52" opacity="0.85"/>
<path d="M214.4,651.7 L214.6,652.7 L211.8,653.4 L206.4,653.7 L204.6,652.2 L204.5,650.9 L206.9,650.2 L211.8,649.3 L213.3,650.4 Z" fill="#8e918a"/>
<path d="M263.5,699.1 L261.2,701.2 L256.9,700.3 L255.9,698.9 L256.8,696.3 L263.7,696.7 Z" fill="#585c52" opacity="0.85"/>
<path d="M262.6,697.7 L261.6,699.6 L258.6,700.4 L257.4,700.1 L255.4,699.3 L255.0,697.7 L257.0,696.6 L260.2,695.5 L262.2,696.6 Z" fill="#8e918a"/>
<path d="M283.8,727.3 L281.3,729.2 L277.5,728.8 L274.5,728.4 L276.0,726.7 L277.9,725.8 L280.3,726.2 Z" fill="#585c52" opacity="0.85"/>
<path d="M282.1,727.2 L280.5,727.8 L277.4,728.6 L275.0,728.2 L273.8,726.8 L275.3,725.4 L276.8,725.2 L281.2,725.7 Z" fill="#8e918a"/>
<path d="M527.5,649.3 L526.2,651.8 L523.9,652.0 L519.7,651.3 L520.3,649.7 L520.7,648.1 L523.5,646.7 L527.0,647.0 Z" fill="#585c52" opacity="0.85"/>
<path d="M527.2,648.5 L525.0,651.2 L521.5,650.9 L519.1,650.0 L518.7,647.1 L522.5,646.3 L524.3,647.0 Z" fill="#acada7"/>
<path d="M555.8,678.9 L553.3,681.1 L550.2,680.6 L548.3,679.0 L551.1,676.8 L553.7,676.5 Z" fill="#585c52" opacity="0.85"/>
<path d="M554.2,678.0 L554.5,679.5 L550.3,680.3 L548.0,679.4 L547.5,677.9 L548.2,676.7 L551.5,676.2 L553.2,677.1 Z" fill="#a2a49e"/>
<path d="M163.1,661.4 L161.3,663.4 L158.9,663.5 L156.3,663.1 L152.4,662.4 L152.5,661.3 L154.1,659.5 L158.4,658.8 L162.4,660.3 Z" fill="#585c52" opacity="0.85"/>
<path d="M163.4,660.7 L160.3,662.4 L154.3,662.3 L152.1,660.9 L154.9,658.6 L160.8,658.5 Z" fill="#8e918a"/>
<path d="M346.7,695.4 L346.7,696.7 L343.8,697.2 L340.7,696.8 L339.4,695.7 L338.7,695.5 L341.5,693.8 L343.6,693.7 L346.4,693.8 Z" fill="#585c52" opacity="0.85"/>
<path d="M346.3,694.9 L346.0,695.7 L342.0,696.3 L339.9,696.0 L338.6,694.6 L339.8,694.1 L343.1,693.1 L344.8,693.7 Z" fill="#a2a49e"/>
<path d="M375.6,649.1 L375.6,650.8 L371.5,651.3 L369.0,650.8 L369.7,648.8 L372.3,647.6 L375.7,648.0 Z" fill="#585c52" opacity="0.85"/>
<path d="M374.7,648.9 L373.5,649.9 L371.7,650.3 L368.9,650.1 L369.3,649.2 L369.5,647.5 L372.1,646.1 L373.4,647.3 Z" fill="#8e918a"/>
<path d="M696.0,700.1 L691.4,702.5 L686.2,703.7 L683.7,701.0 L685.3,697.2 L692.9,698.2 Z" fill="#585c52" opacity="0.85"/>
<path d="M694.6,700.3 L692.2,702.2 L685.2,701.9 L683.5,700.0 L684.1,696.8 L691.1,697.4 Z" fill="#a2a49e"/>
<ellipse cx="324.0" cy="665.6" rx="4.7" ry="1.4" fill="#4e5a3a" opacity="0.6"/>
<path d="M328.3,664.8 L325.8,665.6 L323.8,666.2 L321.2,666.1 L319.2,664.9 L320.6,663.5 L324.8,662.4 L327.2,663.2 Z" fill="#c5c6bf" opacity="0.95"/>
<ellipse cx="191.1" cy="642.1" rx="6.7" ry="1.9" fill="#4e5a3a" opacity="0.6"/>
<path d="M195.6,640.9 L192.6,642.5 L187.4,642.0 L183.6,639.8 L186.9,639.0 L195.5,638.2 Z" fill="#c5c6bf" opacity="0.95"/>
<ellipse cx="311.5" cy="576.8" rx="5.7" ry="1.4" fill="#4e5a3a" opacity="0.6"/>
<path d="M315.9,575.9 L314.9,576.9 L309.0,576.9 L306.7,576.7 L306.2,574.0 L308.2,573.8 L313.0,574.2 Z" fill="#aeb0a8" opacity="0.95"/>
<ellipse cx="676.8" cy="645.4" rx="5.8" ry="2.7" fill="#4e5a3a" opacity="0.6"/>
<path d="M682.4,644.4 L679.8,646.6 L675.8,646.5 L670.0,644.0 L671.9,641.9 L675.2,640.1 L680.1,639.7 Z" fill="#b9bab3" opacity="0.95"/>
<ellipse cx="454.1" cy="544.0" rx="6.4" ry="1.8" fill="#4e5a3a" opacity="0.6"/>
<path d="M460.1,541.8 L456.4,544.3 L452.0,544.1 L447.9,542.9 L451.9,539.5 L456.7,540.7 Z" fill="#b9bab3" opacity="0.95"/>
<ellipse cx="446.9" cy="592.5" rx="3.5" ry="1.1" fill="#4e5a3a" opacity="0.6"/>
<path d="M449.6,591.5 L448.8,592.4 L445.8,592.7 L443.0,592.3 L444.1,591.0 L446.0,590.4 L447.5,590.6 Z" fill="#a0a39a" opacity="0.95"/>
<ellipse cx="334.4" cy="660.6" rx="3.1" ry="1.2" fill="#4e5a3a" opacity="0.6"/>
<path d="M336.3,659.9 L335.2,660.8 L332.4,661.0 L331.3,659.6 L331.9,658.6 L336.0,658.5 Z" fill="#a0a39a" opacity="0.95"/>
<ellipse cx="544.1" cy="656.8" rx="6.1" ry="1.4" fill="#4e5a3a" opacity="0.6"/>
<path d="M547.8,656.0 L547.7,656.9 L543.6,657.6 L537.9,656.9 L539.0,656.0 L540.8,654.5 L542.2,653.9 L549.6,654.4 Z" fill="#b9bab3" opacity="0.95"/>
<ellipse cx="531.2" cy="654.8" rx="5.7" ry="2.4" fill="#4e5a3a" opacity="0.6"/>
<path d="M536.9,651.8 L534.9,654.3 L532.0,655.1 L527.7,655.2 L524.9,654.2 L525.8,652.6 L528.4,650.0 L531.4,649.3 L534.1,651.2 Z" fill="#a0a39a" opacity="0.95"/>
<ellipse cx="62.0" cy="638.8" rx="3.3" ry="0.8" fill="#4e5a3a" opacity="0.6"/>
<path d="M64.6,638.3 L63.1,639.0 L60.2,638.9 L58.1,638.4 L58.2,637.7 L60.5,637.2 L64.0,637.2 Z" fill="#aeb0a8" opacity="0.95"/>
<ellipse cx="106.0" cy="492.6" rx="4.7" ry="1.2" fill="#4e5a3a" opacity="0.6"/>
<path d="M110.5,492.2 L108.9,492.4 L106.3,493.3 L102.8,493.0 L101.6,492.0 L103.8,490.5 L105.7,490.2 L108.2,490.9 Z" fill="#c5c6bf" opacity="0.95"/>
<ellipse cx="656.8" cy="634.7" rx="4.8" ry="2.0" fill="#4e5a3a" opacity="0.6"/>
<path d="M660.7,633.2 L657.7,634.8 L653.9,634.5 L651.1,633.7 L653.4,630.2 L658.4,629.8 Z" fill="#aeb0a8" opacity="0.95"/>
<ellipse cx="532.2" cy="728.4" rx="4.2" ry="1.5" fill="#4e5a3a" opacity="0.6"/>
<path d="M535.8,727.5 L535.2,728.6 L529.9,728.9 L529.2,728.1 L527.1,726.5 L530.6,725.4 L533.6,725.9 Z" fill="#c5c6bf" opacity="0.95"/>
<ellipse cx="240.4" cy="513.6" rx="3.9" ry="1.0" fill="#4e5a3a" opacity="0.6"/>
<path d="M244.1,512.4 L241.5,513.8 L236.7,513.8 L236.1,513.3 L237.9,511.7 L242.6,511.8 Z" fill="#aeb0a8" opacity="0.95"/>
<ellipse cx="422.9" cy="611.3" rx="4.8" ry="2.4" fill="#4e5a3a" opacity="0.6"/>
<path d="M426.4,608.8 L424.3,611.7 L420.5,611.7 L418.7,610.4 L419.1,607.7 L421.0,605.6 L425.1,607.5 Z" fill="#aeb0a8" opacity="0.95"/>
<ellipse cx="483.3" cy="626.1" rx="7.2" ry="2.0" fill="#4e5a3a" opacity="0.6"/>
<path d="M488.9,624.8 L487.3,626.0 L484.9,626.9 L477.2,626.4 L477.4,624.1 L478.2,623.3 L483.6,622.2 L488.1,623.3 Z" fill="#aeb0a8" opacity="0.95"/>
<ellipse cx="251.6" cy="645.0" rx="3.1" ry="0.9" fill="#4e5a3a" opacity="0.6"/>
<path d="M253.6,644.5 L253.1,645.3 L252.1,645.4 L250.3,645.1 L248.9,644.8 L248.8,644.3 L249.9,642.8 L252.0,643.3 L253.0,643.0 Z" fill="#c5c6bf" opacity="0.95"/>
<ellipse cx="388.3" cy="555.9" rx="4.4" ry="0.9" fill="#4e5a3a" opacity="0.6"/>
<path d="M391.8,555.1 L390.4,555.9 L388.7,556.2 L385.1,555.7 L383.2,555.2 L385.3,554.3 L389.0,553.8 L391.1,554.7 Z" fill="#a0a39a" opacity="0.95"/>
<ellipse cx="404.6" cy="635.0" rx="6.1" ry="2.5" fill="#4e5a3a" opacity="0.6"/>
<path d="M409.4,633.0 L406.5,636.3 L400.0,635.1 L397.6,633.3 L401.5,630.5 L406.6,630.2 Z" fill="#c5c6bf" opacity="0.95"/>
<ellipse cx="168.8" cy="619.8" rx="3.8" ry="1.1" fill="#4e5a3a" opacity="0.6"/>
<path d="M171.2,619.0 L170.3,620.2 L166.0,620.0 L165.4,618.8 L165.4,617.6 L169.0,617.5 Z" fill="#a0a39a" opacity="0.95"/>
<ellipse cx="597.6" cy="647.7" rx="9.1" ry="2.0" fill="#4e5a3a" opacity="0.6"/>
<path d="M605.0,646.4 L602.1,647.3 L594.2,647.9 L590.8,647.5 L590.2,645.4 L597.4,642.9 L601.0,643.9 Z" fill="#c5c6bf" opacity="0.95"/>
<ellipse cx="225.0" cy="636.5" rx="4.5" ry="1.3" fill="#4e5a3a" opacity="0.6"/>
<path d="M228.6,635.9 L226.1,636.5 L223.5,637.1 L222.0,636.3 L219.4,635.9 L222.4,633.8 L223.5,633.1 L227.4,634.2 Z" fill="#b9bab3" opacity="0.95"/>
<ellipse cx="118.9" cy="609.8" rx="2.6" ry="0.6" fill="#4e5a3a" opacity="0.6"/>
<path d="M121.3,609.3 L120.9,609.8 L119.0,610.2 L117.5,610.0 L115.9,609.5 L116.3,608.9 L117.3,608.3 L119.4,608.2 L120.0,608.8 Z" fill="#c5c6bf" opacity="0.95"/>
<ellipse cx="310.7" cy="505.1" rx="3.2" ry="1.0" fill="#4e5a3a" opacity="0.6"/>
<path d="M313.5,504.7 L312.2,504.9 L310.9,505.6 L308.6,505.6 L307.3,504.5 L306.9,503.7 L309.1,503.1 L311.1,503.2 L312.6,503.3 Z" fill="#c5c6bf" opacity="0.95"/>
<ellipse cx="346.8" cy="584.3" rx="3.5" ry="0.8" fill="#4e5a3a" opacity="0.6"/>
<path d="M350.0,583.7 L347.4,584.7 L344.3,584.3 L342.6,583.7 L344.4,583.0 L348.0,582.6 Z" fill="#b9bab3" opacity="0.95"/>
<ellipse cx="335.3" cy="558.8" rx="4.1" ry="0.9" fill="#4e5a3a" opacity="0.6"/>
<path d="M338.4,558.2 L337.6,558.5 L334.1,559.2 L332.8,558.8 L330.2,558.0 L331.0,557.1 L334.9,556.9 L337.2,556.9 Z" fill="#aeb0a8" opacity="0.95"/>
<ellipse cx="671.3" cy="702.2" rx="3.5" ry="1.2" fill="#4e5a3a" opacity="0.6"/>
<path d="M673.5,701.2 L672.8,702.3 L670.6,702.5 L668.0,702.0 L668.0,700.8 L669.8,699.7 L673.5,699.8 Z" fill="#a0a39a" opacity="0.95"/>
<ellipse cx="396.6" cy="690.6" rx="3.1" ry="1.1" fill="#4e5a3a" opacity="0.6"/>
<path d="M398.4,690.1 L398.1,690.6 L394.1,690.8 L393.5,689.7 L394.6,688.6 L396.9,688.3 Z" fill="#c5c6bf" opacity="0.95"/>
<ellipse cx="208.8" cy="656.4" rx="7.3" ry="2.6" fill="#4e5a3a" opacity="0.6"/>
<path d="M214.1,653.9 L211.8,656.5 L209.2,658.1 L205.1,657.0 L200.3,654.6 L202.1,651.9 L204.9,652.0 L207.4,649.6 L214.6,651.4 Z" fill="#aeb0a8" opacity="0.95"/>
<ellipse cx="483.3" cy="529.3" rx="8.0" ry="1.8" fill="#4e5a3a" opacity="0.6"/>
<path d="M489.1,527.9 L488.6,529.3 L483.0,530.3 L479.5,529.5 L475.1,528.8 L477.1,526.9 L478.4,526.0 L483.4,525.5 L488.7,526.6 Z" fill="#a0a39a" opacity="0.95"/>
<ellipse cx="280.1" cy="583.5" rx="7.4" ry="1.9" fill="#4e5a3a" opacity="0.6"/>
<path d="M287.4,581.6 L283.1,583.3 L281.8,583.8 L275.4,584.2 L274.7,582.9 L272.9,580.9 L276.3,579.9 L280.1,579.6 L285.2,580.8 Z" fill="#aeb0a8" opacity="0.95"/>
<ellipse cx="232.4" cy="561.1" rx="5.0" ry="1.5" fill="#4e5a3a" opacity="0.6"/>
<path d="M237.1,559.8 L233.2,561.7 L230.6,561.5 L227.8,560.3 L229.8,558.0 L233.2,558.1 Z" fill="#a0a39a" opacity="0.95"/>
<ellipse cx="250.0" cy="651.1" rx="3.9" ry="1.3" fill="#4e5a3a" opacity="0.6"/>
<path d="M252.2,649.7 L251.0,651.2 L248.9,651.7 L246.5,650.6 L245.9,648.9 L248.7,648.4 L252.5,648.6 Z" fill="#aeb0a8" opacity="0.95"/>
<ellipse cx="554.7" cy="658.6" rx="3.1" ry="1.3" fill="#4e5a3a" opacity="0.6"/>
<path d="M557.3,657.0 L556.1,658.3 L554.0,658.9 L551.6,658.4 L550.9,657.8 L551.5,656.2 L555.0,655.4 L556.4,656.3 Z" fill="#aeb0a8" opacity="0.95"/>
<ellipse cx="261.5" cy="522.3" rx="2.9" ry="0.8" fill="#4e5a3a" opacity="0.6"/>
<path d="M263.2,522.0 L261.6,522.5 L258.9,522.6 L258.7,521.7 L259.5,520.6 L262.3,520.5 Z" fill="#aeb0a8" opacity="0.95"/>
<ellipse cx="134.1" cy="485.7" rx="2.6" ry="0.7" fill="#4e5a3a" opacity="0.6"/>
<path d="M135.8,485.0 L135.1,485.8 L132.4,486.0 L131.6,485.2 L132.6,484.2 L135.6,484.3 Z" fill="#aeb0a8" opacity="0.95"/>
<ellipse cx="95.7" cy="464.4" rx="3.3" ry="1.3" fill="#4e5a3a" opacity="0.6"/>
<path d="M97.7,463.4 L96.5,464.6 L95.4,465.0 L92.8,463.9 L92.9,462.9 L95.1,461.1 L96.6,462.0 Z" fill="#c5c6bf" opacity="0.95"/>
<ellipse cx="437.7" cy="543.9" rx="2.2" ry="0.8" fill="#4e5a3a" opacity="0.6"/>
<path d="M439.0,543.3 L438.3,543.9 L438.0,544.4 L436.0,543.9 L435.1,543.7 L435.0,543.0 L436.1,542.6 L438.0,542.0 L439.2,542.4 Z" fill="#a0a39a" opacity="0.95"/>
<ellipse cx="289.5" cy="561.3" rx="3.5" ry="1.1" fill="#4e5a3a" opacity="0.6"/>
<path d="M292.2,560.3 L292.5,561.3 L290.3,561.7 L288.3,561.7 L286.7,560.9 L285.8,560.3 L287.5,559.2 L288.8,559.0 L290.9,559.6 Z" fill="#aeb0a8" opacity="0.95"/>
<ellipse cx="182.3" cy="575.2" rx="5.1" ry="1.2" fill="#4e5a3a" opacity="0.6"/>
<path d="M185.9,574.4 L184.3,575.6 L180.6,575.9 L177.6,575.4 L177.4,573.6 L181.7,572.7 L184.1,573.2 Z" fill="#b9bab3" opacity="0.95"/>
<ellipse cx="97.3" cy="617.9" rx="3.7" ry="1.7" fill="#4e5a3a" opacity="0.6"/>
<path d="M100.1,616.2 L99.7,617.8 L96.4,618.6 L94.5,617.8 L94.3,616.0 L93.8,615.0 L97.9,613.6 L99.3,614.0 Z" fill="#a0a39a" opacity="0.95"/>
<ellipse cx="566.7" cy="751.4" rx="7.7" ry="3.1" fill="#4e5a3a" opacity="0.6"/>
<path d="M573.2,748.6 L570.6,752.2 L564.0,753.1 L559.9,750.8 L559.9,748.8 L562.2,744.6 L565.6,744.7 L570.1,744.3 Z" fill="#a0a39a" opacity="0.95"/>
<ellipse cx="446.3" cy="704.8" rx="4.8" ry="1.3" fill="#4e5a3a" opacity="0.6"/>
<path d="M450.0,703.8 L447.6,704.9 L445.6,705.4 L442.0,704.3 L442.3,703.4 L444.6,702.1 L448.7,702.7 Z" fill="#c5c6bf" opacity="0.95"/>
<ellipse cx="479.8" cy="729.2" rx="7.5" ry="2.3" fill="#4e5a3a" opacity="0.6"/>
<path d="M486.5,727.6 L485.5,729.4 L479.9,729.8 L476.4,730.4 L471.5,728.4 L472.4,726.6 L477.0,723.7 L481.6,723.7 L484.8,724.4 Z" fill="#b9bab3" opacity="0.95"/>
<ellipse cx="339.4" cy="516.7" rx="4.5" ry="1.7" fill="#4e5a3a" opacity="0.6"/>
<path d="M343.9,515.4 L342.5,516.3 L339.7,517.2 L337.6,517.2 L335.5,515.9 L334.8,514.7 L337.8,512.9 L339.1,513.4 L341.8,513.8 Z" fill="#b9bab3" opacity="0.95"/>
<ellipse cx="332.6" cy="542.3" rx="5.0" ry="1.7" fill="#4e5a3a" opacity="0.6"/>
<path d="M336.7,541.1 L336.2,542.7 L332.3,543.2 L328.1,542.2 L327.6,540.3 L330.4,539.3 L334.7,539.2 Z" fill="#aeb0a8" opacity="0.95"/>
<ellipse cx="507.6" cy="650.4" rx="3.4" ry="1.0" fill="#4e5a3a" opacity="0.6"/>
<path d="M510.4,650.0 L509.9,650.3 L507.1,650.7 L505.2,650.6 L503.5,649.8 L504.2,649.0 L506.1,648.2 L507.9,648.4 L509.0,648.5 Z" fill="#aeb0a8" opacity="0.95"/>
<ellipse cx="394.3" cy="535.2" rx="3.2" ry="0.9" fill="#4e5a3a" opacity="0.6"/>
<path d="M396.1,534.3 L395.0,535.3 L392.9,535.3 L391.5,534.3 L392.9,533.1 L395.2,533.1 Z" fill="#aeb0a8" opacity="0.95"/>
<ellipse cx="50.2" cy="524.2" rx="5.5" ry="1.5" fill="#4e5a3a" opacity="0.6"/>
<path d="M54.2,523.0 L53.1,523.8 L49.6,524.8 L46.8,524.5 L45.3,523.4 L47.1,521.6 L49.8,521.2 L53.4,522.0 Z" fill="#aeb0a8" opacity="0.95"/>
<ellipse cx="223.7" cy="568.5" rx="1.8" ry="0.7" fill="#4e5a3a" opacity="0.6"/>
<path d="M224.8,568.2 L224.1,568.4 L223.5,568.9 L221.7,568.4 L221.3,568.2 L222.1,567.0 L223.6,566.9 L224.3,567.0 Z" fill="#aeb0a8" opacity="0.95"/>
<ellipse cx="406.9" cy="620.3" rx="6.8" ry="2.1" fill="#4e5a3a" opacity="0.6"/>
<path d="M411.4,618.2 L412.6,620.1 L404.4,621.3 L401.9,619.9 L400.6,618.1 L403.4,616.4 L405.6,615.5 L409.7,616.4 Z" fill="#a0a39a" opacity="0.95"/>
<ellipse cx="470.5" cy="584.0" rx="4.6" ry="1.5" fill="#4e5a3a" opacity="0.6"/>
<path d="M474.1,582.8 L472.8,584.0 L468.4,584.0 L466.5,582.9 L466.9,580.7 L472.4,581.5 Z" fill="#a0a39a" opacity="0.95"/>
<ellipse cx="525.9" cy="586.6" rx="4.8" ry="1.6" fill="#4e5a3a" opacity="0.6"/>
<path d="M529.6,585.8 L526.8,587.1 L522.7,586.8 L520.4,586.0 L522.7,583.2 L526.8,583.0 Z" fill="#aeb0a8" opacity="0.95"/>
<ellipse cx="404.6" cy="609.5" rx="5.3" ry="1.7" fill="#4e5a3a" opacity="0.6"/>
<path d="M408.3,608.7 L406.5,609.7 L403.8,609.8 L402.1,609.9 L399.2,608.7 L399.3,607.1 L402.3,606.5 L404.0,605.2 L407.7,606.1 Z" fill="#b9bab3" opacity="0.95"/>
<ellipse cx="563.2" cy="637.5" rx="2.9" ry="1.2" fill="#4e5a3a" opacity="0.6"/>
<path d="M566.0,636.7 L564.5,637.2 L562.5,637.9 L560.7,638.1 L560.3,636.6 L560.9,635.6 L562.3,635.1 L565.3,635.6 Z" fill="#c5c6bf" opacity="0.95"/>
<ellipse cx="328.5" cy="484.4" rx="5.0" ry="1.1" fill="#4e5a3a" opacity="0.6"/>
<path d="M332.7,483.2 L331.0,484.7 L328.9,484.7 L324.1,484.5 L324.6,483.9 L325.2,482.1 L327.2,481.7 L331.5,482.7 Z" fill="#aeb0a8" opacity="0.95"/>
<ellipse cx="353.5" cy="549.0" rx="5.5" ry="1.5" fill="#4e5a3a" opacity="0.6"/>
<path d="M358.1,548.3 L355.7,549.4 L350.3,549.5 L349.3,548.4 L349.3,547.1 L352.6,545.6 L356.8,545.7 Z" fill="#a0a39a" opacity="0.95"/>
<ellipse cx="684.6" cy="581.3" rx="4.6" ry="1.9" fill="#4e5a3a" opacity="0.6"/>
<path d="M688.0,579.3 L685.3,581.4 L680.8,581.5 L680.5,579.7 L680.9,577.4 L686.4,578.4 Z" fill="#b9bab3" opacity="0.95"/>
<ellipse cx="169.1" cy="514.1" rx="4.1" ry="1.6" fill="#4e5a3a" opacity="0.6"/>
<path d="M172.1,513.1 L171.2,514.8 L168.5,514.6 L166.0,513.6 L165.3,512.7 L167.0,511.2 L168.2,509.9 L171.0,511.0 Z" fill="#c5c6bf" opacity="0.95"/>
<ellipse cx="315.7" cy="531.5" rx="7.5" ry="1.8" fill="#4e5a3a" opacity="0.6"/>
<path d="M322.0,529.8 L319.7,532.1 L313.3,532.5 L311.9,531.5 L308.9,530.2 L310.8,527.5 L315.4,527.2 L320.8,528.6 Z" fill="#a0a39a" opacity="0.95"/>
<ellipse cx="415.2" cy="569.3" rx="6.1" ry="1.7" fill="#4e5a3a" opacity="0.6"/>
<path d="M420.9,568.4 L416.7,569.4 L414.6,569.8 L409.9,568.7 L410.1,567.7 L415.0,566.2 L420.1,566.3 Z" fill="#c5c6bf" opacity="0.95"/>
<ellipse cx="695.1" cy="665.9" rx="6.9" ry="1.9" fill="#4e5a3a" opacity="0.6"/>
<path d="M700.8,664.0 L698.2,665.8 L693.8,666.2 L687.1,665.3 L689.2,663.2 L693.5,662.2 L699.7,662.4 Z" fill="#b9bab3" opacity="0.95"/>
<ellipse cx="501.2" cy="589.3" rx="5.0" ry="1.4" fill="#4e5a3a" opacity="0.6"/>
<path d="M505.7,587.8 L503.8,589.1 L501.8,590.2 L499.5,590.0 L495.5,588.9 L496.9,587.7 L499.6,586.7 L501.9,586.5 L502.9,586.8 Z" fill="#aeb0a8" opacity="0.95"/>
<ellipse cx="316.4" cy="533.7" rx="4.5" ry="2.0" fill="#4e5a3a" opacity="0.6"/>
<path d="M320.8,532.1 L318.9,533.7 L316.1,534.4 L311.5,532.9 L312.0,531.1 L314.7,529.5 L317.5,529.9 Z" fill="#aeb0a8" opacity="0.95"/>
<ellipse cx="104.4" cy="639.5" rx="2.7" ry="1.1" fill="#4e5a3a" opacity="0.6"/>
<path d="M106.2,638.8 L104.9,639.6 L104.3,639.9 L102.2,639.8 L101.1,638.3 L101.9,637.5 L103.6,636.9 L105.4,637.7 Z" fill="#c5c6bf" opacity="0.95"/>
<ellipse cx="571.9" cy="733.8" rx="3.7" ry="0.9" fill="#4e5a3a" opacity="0.6"/>
<path d="M574.6,732.9 L572.9,734.0 L570.2,734.2 L568.8,733.8 L568.5,732.1 L571.4,731.6 L573.6,732.5 Z" fill="#a0a39a" opacity="0.95"/>
<ellipse cx="231.5" cy="557.6" rx="3.4" ry="1.0" fill="#4e5a3a" opacity="0.6"/>
<path d="M233.7,556.9 L232.0,557.7 L230.0,558.2 L227.3,556.4 L230.2,555.2 L232.7,555.5 Z" fill="#c5c6bf" opacity="0.95"/>
<ellipse cx="662.0" cy="641.2" rx="3.9" ry="1.1" fill="#4e5a3a" opacity="0.6"/>
<path d="M665.2,640.7 L664.4,641.1 L661.5,641.6 L657.8,640.7 L658.8,639.7 L661.7,638.3 L663.3,639.3 Z" fill="#a0a39a" opacity="0.95"/>
<ellipse cx="302.4" cy="469.5" rx="1.9" ry="0.6" fill="#4e5a3a" opacity="0.6"/>
<path d="M303.6,469.1 L302.9,469.5 L300.9,469.6 L299.9,469.0 L300.7,468.2 L302.7,468.4 Z" fill="#aeb0a8" opacity="0.95"/>
<ellipse cx="666.9" cy="602.2" rx="3.0" ry="0.8" fill="#4e5a3a" opacity="0.6"/>
<path d="M669.3,601.5 L669.1,602.1 L667.0,602.4 L664.0,602.3 L663.7,601.7 L664.8,600.8 L666.6,600.4 L667.9,600.5 Z" fill="#b9bab3" opacity="0.95"/>
<ellipse cx="507.6" cy="710.7" rx="6.5" ry="1.5" fill="#4e5a3a" opacity="0.6"/>
<path d="M512.8,709.9 L509.2,711.1 L504.3,711.0 L502.6,709.4 L505.3,707.8 L510.2,708.0 Z" fill="#b9bab3" opacity="0.95"/>
<ellipse cx="199.2" cy="473.8" rx="2.8" ry="0.9" fill="#4e5a3a" opacity="0.6"/>
<path d="M200.8,473.3 L199.9,474.2 L197.3,474.1 L196.8,473.0 L197.7,472.2 L200.1,472.3 Z" fill="#aeb0a8" opacity="0.95"/>
<ellipse cx="152.2" cy="617.8" rx="4.6" ry="1.5" fill="#4e5a3a" opacity="0.6"/>
<path d="M155.0,617.1 L155.9,617.6 L151.1,618.7 L148.4,617.7 L147.8,616.0 L149.7,614.9 L152.5,614.6 L155.4,615.1 Z" fill="#b9bab3" opacity="0.95"/>
<ellipse cx="290.4" cy="650.7" rx="4.1" ry="1.1" fill="#4e5a3a" opacity="0.6"/>
<path d="M293.0,649.6 L294.1,650.5 L291.4,651.1 L286.9,650.9 L286.7,650.2 L286.0,649.1 L287.8,648.8 L290.4,648.2 L293.5,649.1 Z" fill="#c5c6bf" opacity="0.95"/>
<ellipse cx="53.2" cy="526.0" rx="5.3" ry="1.3" fill="#4e5a3a" opacity="0.6"/>
<path d="M58.6,524.6 L55.9,526.2 L50.0,526.2 L48.7,524.6 L50.1,522.9 L56.5,523.6 Z" fill="#c5c6bf" opacity="0.95"/>
<ellipse cx="463.5" cy="528.8" rx="4.4" ry="1.5" fill="#4e5a3a" opacity="0.6"/>
<path d="M467.2,527.2 L465.5,529.0 L462.6,529.3 L460.6,528.6 L457.9,527.8 L460.4,526.1 L463.3,524.8 L465.7,526.1 Z" fill="#c5c6bf" opacity="0.95"/>
<ellipse cx="146.7" cy="528.8" rx="6.0" ry="2.2" fill="#4e5a3a" opacity="0.6"/>
<path d="M150.9,526.6 L150.4,529.5 L145.3,529.4 L139.9,528.2 L142.0,526.5 L146.1,523.9 L149.3,524.8 Z" fill="#b9bab3" opacity="0.95"/>
<ellipse cx="590.7" cy="665.9" rx="6.5" ry="1.2" fill="#4e5a3a" opacity="0.6"/>
<path d="M596.5,664.9 L594.7,665.6 L590.6,666.8 L588.3,666.5 L585.8,665.4 L584.8,664.7 L588.2,663.6 L590.8,663.0 L596.5,663.8 Z" fill="#a0a39a" opacity="0.95"/>
<ellipse cx="163.3" cy="567.4" rx="3.5" ry="1.4" fill="#4e5a3a" opacity="0.6"/>
<path d="M166.3,566.5 L163.5,567.8 L160.8,568.0 L160.4,566.2 L160.9,564.2 L163.8,564.4 Z" fill="#c5c6bf" opacity="0.95"/>
<ellipse cx="677.3" cy="646.7" rx="8.3" ry="2.2" fill="#4e5a3a" opacity="0.6"/>
<path d="M682.7,644.8 L681.4,646.4 L679.4,647.9 L672.1,646.6 L670.7,646.3 L670.8,644.3 L674.6,642.6 L678.1,642.3 L681.9,643.6 Z" fill="#a0a39a" opacity="0.95"/>
<ellipse cx="375.8" cy="593.4" rx="7.1" ry="1.7" fill="#4e5a3a" opacity="0.6"/>
<path d="M383.0,592.6 L380.0,593.3 L372.5,594.1 L370.0,593.1 L368.4,591.3 L372.7,589.4 L379.4,590.8 Z" fill="#a0a39a" opacity="0.95"/>
<ellipse cx="588.0" cy="557.5" rx="4.2" ry="1.2" fill="#4e5a3a" opacity="0.6"/>
<path d="M590.5,556.8 L590.4,557.8 L587.5,558.1 L585.7,557.8 L583.0,556.7 L582.9,556.4 L585.3,555.6 L587.5,554.7 L590.0,555.3 Z" fill="#c5c6bf" opacity="0.95"/>
<ellipse cx="453.3" cy="519.5" rx="4.3" ry="2.0" fill="#4e5a3a" opacity="0.6"/>
<path d="M456.2,518.0 L456.1,519.1 L453.3,520.9 L450.0,519.8 L449.1,517.3 L449.5,515.4 L452.9,514.4 L455.6,515.7 Z" fill="#aeb0a8" opacity="0.95"/>
<ellipse cx="513.6" cy="591.0" rx="6.9" ry="1.5" fill="#4e5a3a" opacity="0.6"/>
<path d="M519.5,590.4 L515.2,591.3 L512.8,591.4 L508.7,590.7 L507.0,589.2 L512.8,587.4 L515.9,587.6 Z" fill="#c5c6bf" opacity="0.95"/>
<ellipse cx="471.6" cy="639.7" rx="5.0" ry="1.6" fill="#4e5a3a" opacity="0.6"/>
<path d="M475.6,638.9 L474.0,639.6 L470.0,639.9 L467.0,638.9 L468.1,637.0 L473.9,637.0 Z" fill="#b9bab3" opacity="0.95"/>
<ellipse cx="600.6" cy="625.9" rx="5.7" ry="1.9" fill="#4e5a3a" opacity="0.6"/>
<path d="M604.3,624.8 L602.3,626.6 L598.8,626.3 L595.8,626.1 L596.4,623.2 L597.5,621.9 L602.7,622.3 Z" fill="#a0a39a" opacity="0.95"/>
<ellipse cx="143.8" cy="491.3" rx="3.1" ry="1.3" fill="#4e5a3a" opacity="0.6"/>
<path d="M145.8,490.1 L145.3,491.3 L141.6,491.5 L140.2,489.7 L142.7,488.7 L144.5,489.0 Z" fill="#c5c6bf" opacity="0.95"/>
<ellipse cx="399.6" cy="602.2" rx="2.1" ry="0.9" fill="#4e5a3a" opacity="0.6"/>
<path d="M401.1,601.8 L400.3,602.2 L399.6,602.5 L397.8,602.4 L397.1,602.1 L396.9,600.9 L398.2,600.1 L399.3,599.8 L400.7,600.5 Z" fill="#a0a39a" opacity="0.95"/>
<ellipse cx="486.1" cy="616.4" rx="5.0" ry="1.6" fill="#4e5a3a" opacity="0.6"/>
<path d="M489.3,614.6 L489.4,616.4 L486.3,616.9 L483.4,616.4 L480.1,615.5 L481.9,614.5 L483.9,612.8 L487.6,612.9 L487.8,613.6 Z" fill="#c5c6bf" opacity="0.95"/>
<ellipse cx="341.0" cy="490.4" rx="3.1" ry="0.9" fill="#4e5a3a" opacity="0.6"/>
<path d="M343.1,489.8 L342.9,490.3 L340.2,490.7 L339.9,490.8 L338.2,489.9 L338.3,489.2 L339.3,488.2 L340.9,488.5 L342.3,488.7 Z" fill="#b9bab3" opacity="0.95"/>
<ellipse cx="195.5" cy="466.8" rx="2.3" ry="0.7" fill="#4e5a3a" opacity="0.6"/>
<path d="M197.5,465.9 L196.9,466.8 L194.4,467.0 L193.4,467.1 L192.9,466.3 L193.7,465.6 L194.6,465.2 L196.4,465.7 Z" fill="#aeb0a8" opacity="0.95"/>
<ellipse cx="428.0" cy="574.0" rx="3.0" ry="0.9" fill="#4e5a3a" opacity="0.6"/>
<path d="M429.7,573.5 L429.5,574.3 L427.0,574.5 L425.5,574.1 L424.3,573.2 L425.5,572.1 L427.2,571.9 L430.1,572.3 Z" fill="#c5c6bf" opacity="0.95"/>
<ellipse cx="560.9" cy="639.0" rx="2.8" ry="1.0" fill="#4e5a3a" opacity="0.6"/>
<path d="M562.8,638.4 L562.2,639.2 L559.1,639.0 L557.6,637.9 L559.3,637.3 L561.3,636.8 Z" fill="#a0a39a" opacity="0.95"/>
<ellipse cx="613.5" cy="621.2" rx="8.5" ry="1.8" fill="#4e5a3a" opacity="0.6"/>
<path d="M620.1,620.4 L618.7,621.8 L613.2,621.8 L607.9,621.8 L605.9,620.7 L606.4,619.6 L610.5,617.5 L615.2,617.3 L618.9,618.5 Z" fill="#b9bab3" opacity="0.95"/>
<ellipse cx="622.6" cy="594.5" rx="6.0" ry="1.6" fill="#4e5a3a" opacity="0.6"/>
<path d="M627.1,592.6 L625.9,595.1 L623.3,594.8 L619.3,595.0 L617.4,594.4 L617.7,592.6 L620.4,591.1 L622.1,591.1 L626.3,591.3 Z" fill="#b9bab3" opacity="0.95"/>
<ellipse cx="197.4" cy="513.5" rx="4.7" ry="1.1" fill="#4e5a3a" opacity="0.6"/>
<path d="M201.2,512.5 L198.8,513.9 L196.2,513.8 L192.7,512.9 L192.7,511.7 L195.3,511.5 L198.8,511.3 Z" fill="#c5c6bf" opacity="0.95"/>
<ellipse cx="155.5" cy="553.5" rx="4.9" ry="1.0" fill="#4e5a3a" opacity="0.6"/>
<path d="M159.2,553.0 L156.7,553.6 L154.0,553.8 L151.3,553.0 L150.6,552.3 L152.9,551.4 L156.4,551.7 Z" fill="#c5c6bf" opacity="0.95"/>
<ellipse cx="66.1" cy="525.1" rx="6.8" ry="1.6" fill="#4e5a3a" opacity="0.6"/>
<path d="M71.4,524.0 L68.0,525.9 L63.7,525.2 L59.8,524.1 L62.8,521.3 L67.6,521.7 Z" fill="#c5c6bf" opacity="0.95"/>
<ellipse cx="319.1" cy="683.5" rx="7.3" ry="2.5" fill="#4e5a3a" opacity="0.6"/>
<path d="M326.6,681.1 L322.8,684.7 L319.6,684.0 L315.8,683.6 L313.3,681.3 L314.0,679.2 L319.3,678.7 L325.1,678.8 Z" fill="#c5c6bf" opacity="0.95"/>
<ellipse cx="154.1" cy="641.6" rx="5.2" ry="1.6" fill="#4e5a3a" opacity="0.6"/>
<path d="M158.2,640.7 L158.1,641.7 L152.0,642.4 L148.5,641.1 L148.8,639.3 L151.1,637.9 L158.2,638.5 Z" fill="#b9bab3" opacity="0.95"/>
<ellipse cx="686.2" cy="674.1" rx="5.3" ry="1.0" fill="#4e5a3a" opacity="0.6"/>
<path d="M691.2,673.2 L689.8,674.4 L686.5,674.5 L683.0,674.1 L681.1,674.1 L680.8,672.5 L684.3,672.1 L687.7,671.8 L690.3,672.6 Z" fill="#b9bab3" opacity="0.95"/>
<ellipse cx="253.2" cy="459.2" rx="4.0" ry="1.1" fill="#4e5a3a" opacity="0.6"/>
<path d="M256.1,458.5 L253.9,459.5 L250.9,459.7 L249.9,458.5 L250.4,457.1 L254.8,457.2 Z" fill="#c5c6bf" opacity="0.95"/>
<ellipse cx="210.0" cy="511.9" rx="5.3" ry="2.0" fill="#4e5a3a" opacity="0.6"/>
<path d="M215.3,509.6 L213.7,511.6 L208.9,512.2 L205.9,512.7 L203.7,511.1 L204.7,508.9 L209.9,507.6 L213.4,508.4 Z" fill="#a0a39a" opacity="0.95"/>
<ellipse cx="176.4" cy="448.1" rx="3.5" ry="1.0" fill="#4e5a3a" opacity="0.6"/>
<path d="M179.7,446.9 L178.1,448.0 L175.3,448.3 L173.4,448.0 L172.7,447.6 L173.7,446.6 L177.0,445.7 L178.4,446.1 Z" fill="#c5c6bf" opacity="0.95"/>
<ellipse cx="237.2" cy="548.5" rx="7.0" ry="1.9" fill="#4e5a3a" opacity="0.6"/>
<path d="M241.8,546.9 L240.8,548.0 L239.0,549.0 L232.0,548.6 L229.6,548.1 L232.2,546.2 L232.6,545.2 L237.2,544.4 L241.3,545.8 Z" fill="#b9bab3" opacity="0.95"/>
<ellipse cx="692.1" cy="587.3" rx="4.5" ry="1.9" fill="#4e5a3a" opacity="0.6"/>
<path d="M696.0,586.6 L694.8,587.3 L691.5,587.8 L688.8,586.9 L687.9,586.3 L688.4,584.7 L690.8,583.1 L695.8,584.0 Z" fill="#c5c6bf" opacity="0.95"/>
<ellipse cx="448.3" cy="611.9" rx="4.9" ry="2.1" fill="#4e5a3a" opacity="0.6"/>
<path d="M453.1,609.5 L450.7,611.6 L447.2,613.2 L443.6,610.9 L444.2,608.7 L446.8,606.7 L450.8,608.7 Z" fill="#c5c6bf" opacity="0.95"/>
<ellipse cx="309.9" cy="567.8" rx="8.2" ry="2.0" fill="#4e5a3a" opacity="0.6"/>
<path d="M317.5,566.6 L317.4,567.6 L312.5,568.6 L307.3,568.1 L301.1,567.4 L303.7,564.9 L306.1,564.2 L310.8,563.5 L315.6,564.8 Z" fill="#aeb0a8" opacity="0.95"/>
<ellipse cx="311.7" cy="566.5" rx="3.3" ry="1.5" fill="#4e5a3a" opacity="0.6"/>
<path d="M314.1,564.9 L313.6,566.7 L312.6,567.1 L310.1,566.9 L308.2,566.5 L308.0,564.4 L310.0,563.9 L311.5,563.7 L313.2,563.4 Z" fill="#b9bab3" opacity="0.95"/>
<ellipse cx="543.2" cy="535.9" rx="3.0" ry="1.3" fill="#4e5a3a" opacity="0.6"/>
<path d="M545.5,535.1 L544.8,536.3 L543.8,536.1 L541.2,536.1 L539.9,535.1 L539.6,534.8 L540.6,533.5 L542.8,532.6 L545.0,533.2 Z" fill="#b9bab3" opacity="0.95"/>
<ellipse cx="546.7" cy="579.1" rx="5.1" ry="1.5" fill="#4e5a3a" opacity="0.6"/>
<path d="M551.5,578.0 L549.0,578.8 L547.3,579.8 L544.3,579.5 L543.1,578.8 L540.7,577.7 L543.0,575.9 L547.1,576.2 L549.9,576.4 Z" fill="#c5c6bf" opacity="0.95"/>
<ellipse cx="342.0" cy="483.7" rx="6.6" ry="1.4" fill="#4e5a3a" opacity="0.6"/>
<path d="M348.7,482.8 L345.3,483.7 L338.1,484.3 L334.7,483.0 L337.6,481.3 L344.8,480.7 Z" fill="#c5c6bf" opacity="0.95"/>
<ellipse cx="495.7" cy="534.0" rx="3.9" ry="1.9" fill="#4e5a3a" opacity="0.6"/>
<path d="M498.3,532.6 L498.2,534.3 L494.3,534.2 L491.3,533.7 L492.9,531.2 L494.0,530.6 L497.0,530.4 Z" fill="#aeb0a8" opacity="0.95"/>
<ellipse cx="57.3" cy="522.6" rx="4.1" ry="1.3" fill="#4e5a3a" opacity="0.6"/>
<path d="M61.4,521.3 L58.8,522.8 L55.7,522.9 L54.0,522.5 L54.4,520.8 L55.2,519.6 L58.7,519.4 Z" fill="#c5c6bf" opacity="0.95"/>
<ellipse cx="562.0" cy="607.3" rx="2.0" ry="0.9" fill="#4e5a3a" opacity="0.6"/>
<path d="M563.1,606.7 L562.1,607.3 L560.0,607.4 L559.2,606.6 L560.6,605.4 L562.1,605.0 Z" fill="#c5c6bf" opacity="0.95"/>
<ellipse cx="103.2" cy="636.8" rx="7.5" ry="2.3" fill="#4e5a3a" opacity="0.6"/>
<path d="M110.5,635.8 L106.7,636.6 L102.8,638.3 L95.2,636.0 L97.6,633.0 L100.4,632.6 L107.2,631.9 Z" fill="#b9bab3" opacity="0.95"/>
<ellipse cx="465.1" cy="581.3" rx="3.6" ry="1.1" fill="#4e5a3a" opacity="0.6"/>
<path d="M467.5,580.3 L466.9,581.1 L464.7,581.4 L462.0,581.3 L461.0,579.6 L464.0,579.1 L466.2,578.8 Z" fill="#c5c6bf" opacity="0.95"/>
<ellipse cx="533.3" cy="748.0" rx="5.0" ry="1.9" fill="#4e5a3a" opacity="0.6"/>
<path d="M538.4,747.2 L535.2,748.3 L533.1,748.5 L531.8,748.2 L528.0,747.7 L529.0,745.7 L530.4,744.0 L532.8,743.7 L536.9,745.4 Z" fill="#c5c6bf" opacity="0.95"/>
<ellipse cx="515.9" cy="622.8" rx="7.0" ry="2.0" fill="#4e5a3a" opacity="0.6"/>
<path d="M523.1,620.8 L519.4,622.9 L513.7,623.2 L509.4,623.0 L510.5,620.5 L513.2,618.0 L518.4,619.0 Z" fill="#aeb0a8" opacity="0.95"/>
<ellipse cx="360.2" cy="684.6" rx="5.2" ry="1.2" fill="#4e5a3a" opacity="0.6"/>
<path d="M364.4,683.6 L363.9,684.9 L359.4,685.4 L353.9,684.0 L354.1,683.3 L358.0,682.2 L362.4,682.0 Z" fill="#a0a39a" opacity="0.95"/>
<ellipse cx="374.8" cy="629.5" rx="6.4" ry="1.6" fill="#4e5a3a" opacity="0.6"/>
<path d="M380.8,627.7 L377.4,629.9 L371.6,630.4 L368.9,628.5 L369.2,626.4 L377.3,627.0 Z" fill="#aeb0a8" opacity="0.95"/>
<ellipse cx="272.3" cy="514.6" rx="5.1" ry="1.9" fill="#4e5a3a" opacity="0.6"/>
<path d="M277.3,512.9 L274.7,515.0 L271.5,515.2 L267.6,514.7 L267.1,512.9 L269.0,511.1 L272.5,511.0 L274.7,510.2 Z" fill="#a0a39a" opacity="0.95"/>
<ellipse cx="234.0" cy="504.4" rx="5.1" ry="2.3" fill="#4e5a3a" opacity="0.6"/>
<path d="M237.9,502.4 L235.8,504.8 L229.7,504.9 L229.5,502.3 L231.1,500.2 L235.6,499.4 Z" fill="#c5c6bf" opacity="0.95"/>
<ellipse cx="353.2" cy="673.4" rx="9.9" ry="2.7" fill="#4e5a3a" opacity="0.6"/>
<path d="M361.4,670.5 L357.8,674.1 L347.5,674.2 L343.7,671.1 L350.4,668.2 L355.4,668.5 Z" fill="#a0a39a" opacity="0.95"/>
<ellipse cx="620.0" cy="563.8" rx="4.8" ry="1.0" fill="#4e5a3a" opacity="0.6"/>
<path d="M624.5,563.2 L622.6,564.3 L620.6,564.3 L616.9,564.0 L614.7,563.1 L615.4,561.9 L620.5,561.4 L623.5,562.1 Z" fill="#b9bab3" opacity="0.95"/>
<ellipse cx="570.2" cy="642.6" rx="4.6" ry="1.2" fill="#4e5a3a" opacity="0.6"/>
<path d="M573.8,641.5 L572.3,642.5 L569.0,643.1 L567.1,642.7 L564.6,641.2 L566.0,640.8 L568.8,640.1 L573.2,640.0 Z" fill="#a0a39a" opacity="0.95"/>
<ellipse cx="543.8" cy="606.2" rx="7.2" ry="1.7" fill="#4e5a3a" opacity="0.6"/>
<path d="M550.7,604.1 L546.9,606.5 L542.0,607.2 L538.1,606.2 L535.3,604.2 L537.6,603.7 L541.7,602.4 L547.5,603.9 Z" fill="#b9bab3" opacity="0.95"/>
<ellipse cx="580.7" cy="753.0" rx="10.1" ry="2.8" fill="#4e5a3a" opacity="0.6"/>
<path d="M591.1,749.7 L586.9,752.3 L581.8,754.4 L576.3,753.0 L570.3,751.5 L569.3,749.6 L574.9,746.7 L579.6,747.0 L588.9,748.4 Z" fill="#b9bab3" opacity="0.95"/>
<ellipse cx="461.5" cy="546.1" rx="3.4" ry="1.3" fill="#4e5a3a" opacity="0.6"/>
<path d="M464.6,545.3 L462.0,546.2 L459.4,546.8 L458.2,545.7 L458.3,544.5 L460.5,543.4 L463.7,543.9 Z" fill="#c5c6bf" opacity="0.95"/>
<ellipse cx="303.1" cy="591.0" rx="4.7" ry="1.7" fill="#4e5a3a" opacity="0.6"/>
<path d="M306.7,589.7 L305.0,590.9 L303.3,591.4 L299.2,591.4 L298.0,590.6 L298.2,588.7 L299.4,587.5 L304.0,586.7 L305.3,587.9 Z" fill="#c5c6bf" opacity="0.95"/>
<ellipse cx="384.6" cy="533.4" rx="2.9" ry="0.8" fill="#4e5a3a" opacity="0.6"/>
<path d="M387.1,532.7 L385.9,533.4 L384.3,533.9 L383.0,533.8 L381.3,533.1 L382.1,532.2 L382.5,531.6 L383.8,531.6 L386.1,532.0 Z" fill="#a0a39a" opacity="0.95"/>
<ellipse cx="641.1" cy="752.0" rx="4.8" ry="1.8" fill="#4e5a3a" opacity="0.6"/>
<path d="M644.1,750.4 L642.5,752.0 L639.3,753.0 L636.4,751.8 L636.0,749.8 L640.3,748.6 L643.9,748.7 Z" fill="#a0a39a" opacity="0.95"/>
<ellipse cx="676.8" cy="673.8" rx="3.2" ry="0.9" fill="#4e5a3a" opacity="0.6"/>
<path d="M679.4,673.4 L677.8,674.2 L674.6,674.1 L673.0,673.2 L675.7,672.2 L677.9,672.5 Z" fill="#a0a39a" opacity="0.95"/>
<ellipse cx="84.7" cy="547.7" rx="4.0" ry="1.1" fill="#4e5a3a" opacity="0.6"/>
<path d="M87.6,547.1 L86.4,547.9 L83.0,548.0 L81.3,547.3 L81.4,546.4 L83.1,545.4 L86.4,545.9 Z" fill="#aeb0a8" opacity="0.95"/>
<ellipse cx="144.3" cy="649.8" rx="7.1" ry="2.5" fill="#4e5a3a" opacity="0.6"/>
<path d="M148.7,647.4 L149.3,649.4 L143.5,651.3 L141.2,649.9 L137.8,648.6 L140.0,644.3 L141.9,644.2 L147.0,645.3 Z" fill="#c5c6bf" opacity="0.95"/>
<ellipse cx="550.8" cy="662.9" rx="3.7" ry="1.3" fill="#4e5a3a" opacity="0.6"/>
<path d="M552.9,661.7 L552.4,662.9 L550.8,663.3 L547.2,662.7 L547.7,661.7 L547.7,660.3 L551.1,659.8 L552.4,659.8 Z" fill="#b9bab3" opacity="0.95"/>
<ellipse cx="652.1" cy="580.0" rx="2.9" ry="0.8" fill="#4e5a3a" opacity="0.6"/>
<path d="M654.7,579.6 L653.4,580.0 L651.5,580.2 L649.9,580.4 L648.3,579.6 L649.3,578.6 L652.0,578.3 L653.6,578.9 Z" fill="#aeb0a8" opacity="0.95"/>
<ellipse cx="459.7" cy="575.6" rx="5.3" ry="2.2" fill="#4e5a3a" opacity="0.6"/>
<path d="M463.7,574.3 L463.5,575.8 L457.3,575.8 L454.7,575.0 L455.0,572.3 L458.3,571.1 L461.8,570.8 Z" fill="#aeb0a8" opacity="0.95"/>
<ellipse cx="694.0" cy="638.7" rx="7.7" ry="2.4" fill="#4e5a3a" opacity="0.6"/>
<path d="M702.1,636.3 L696.8,638.6 L690.9,639.3 L687.9,636.7 L691.2,633.0 L698.9,633.4 Z" fill="#b9bab3" opacity="0.95"/>
<ellipse cx="435.4" cy="605.3" rx="7.7" ry="2.3" fill="#4e5a3a" opacity="0.6"/>
<path d="M442.9,603.2 L440.6,605.5 L438.2,606.4 L431.1,606.1 L427.8,605.0 L428.9,602.2 L432.7,600.5 L437.3,600.9 L440.2,601.6 Z" fill="#a0a39a" opacity="0.95"/>
<ellipse cx="466.1" cy="581.3" rx="5.7" ry="2.1" fill="#4e5a3a" opacity="0.6"/>
<path d="M469.9,579.9 L468.8,582.1 L466.7,582.3 L460.6,581.4 L460.4,580.0 L463.2,577.2 L466.3,576.7 L469.5,577.5 Z" fill="#aeb0a8" opacity="0.95"/>
<ellipse cx="417.9" cy="539.1" rx="2.8" ry="0.7" fill="#4e5a3a" opacity="0.6"/>
<path d="M420.2,538.8 L418.9,539.1 L416.1,539.4 L415.0,538.4 L416.1,537.7 L418.0,537.8 Z" fill="#a0a39a" opacity="0.95"/>
<ellipse cx="394.9" cy="698.8" rx="5.1" ry="2.1" fill="#4e5a3a" opacity="0.6"/>
<path d="M398.5,696.7 L398.6,699.1 L394.3,699.6 L391.3,698.6 L389.8,697.4 L390.7,695.8 L394.6,694.0 L396.6,695.3 Z" fill="#aeb0a8" opacity="0.95"/>
<ellipse cx="139.1" cy="497.3" rx="4.6" ry="0.9" fill="#4e5a3a" opacity="0.6"/>
<path d="M143.5,496.8 L140.0,497.3 L137.1,497.5 L134.2,496.7 L136.2,495.8 L139.5,495.4 Z" fill="#b9bab3" opacity="0.95"/>
<ellipse cx="356.7" cy="587.4" rx="5.1" ry="1.2" fill="#4e5a3a" opacity="0.6"/>
<path d="M360.2,586.2 L358.9,587.5 L355.4,587.5 L352.2,586.9 L352.1,585.7 L356.5,585.0 L359.5,584.9 Z" fill="#a0a39a" opacity="0.95"/>
<ellipse cx="409.2" cy="571.5" rx="4.6" ry="1.3" fill="#4e5a3a" opacity="0.6"/>
<path d="M412.5,570.1 L411.9,571.8 L409.9,572.2 L405.7,571.6 L405.4,571.1 L405.7,569.9 L407.1,569.0 L408.6,568.5 L411.1,569.5 Z" fill="#aeb0a8" opacity="0.95"/>
<ellipse cx="198.3" cy="536.8" rx="2.4" ry="0.8" fill="#4e5a3a" opacity="0.6"/>
<path d="M200.1,535.8 L199.4,537.0 L198.2,536.9 L196.5,536.8 L196.1,536.3 L196.0,535.6 L197.5,535.2 L199.1,535.0 Z" fill="#aeb0a8" opacity="0.95"/>
<ellipse cx="71.7" cy="525.3" rx="3.7" ry="1.1" fill="#4e5a3a" opacity="0.6"/>
<path d="M73.9,524.6 L73.7,525.1 L70.9,525.6 L70.4,525.5 L67.9,524.6 L67.1,524.1 L68.7,523.1 L71.8,522.9 L73.5,523.5 Z" fill="#a0a39a" opacity="0.95"/>
<ellipse cx="540.2" cy="636.3" rx="4.7" ry="1.2" fill="#4e5a3a" opacity="0.6"/>
<path d="M544.9,635.2 L542.5,636.2 L540.1,636.8 L538.7,636.7 L534.7,635.7 L536.9,634.5 L537.6,633.9 L540.4,633.3 L543.0,634.1 Z" fill="#aeb0a8" opacity="0.95"/>
<ellipse cx="162.8" cy="551.0" rx="5.6" ry="1.6" fill="#4e5a3a" opacity="0.6"/>
<path d="M167.1,549.7 L166.1,551.0 L161.7,552.0 L158.0,551.5 L157.1,551.1 L158.0,549.3 L160.2,547.8 L162.4,546.9 L164.9,548.4 Z" fill="#a0a39a" opacity="0.95"/>
<ellipse cx="329.2" cy="578.5" rx="4.3" ry="1.6" fill="#4e5a3a" opacity="0.6"/>
<path d="M333.1,576.9 L330.8,578.8 L329.0,579.0 L325.5,577.8 L324.6,576.2 L327.7,575.5 L331.8,575.5 Z" fill="#b9bab3" opacity="0.95"/>
<ellipse cx="604.7" cy="561.0" rx="6.1" ry="2.3" fill="#4e5a3a" opacity="0.6"/>
<path d="M609.0,559.4 L610.0,560.8 L604.8,562.4 L598.6,561.0 L598.0,558.7 L600.3,555.7 L605.8,555.3 L608.4,556.0 Z" fill="#b9bab3" opacity="0.95"/>
<ellipse cx="490.1" cy="612.5" rx="3.2" ry="1.1" fill="#4e5a3a" opacity="0.6"/>
<path d="M493.1,611.5 L491.8,612.3 L490.4,612.9 L487.8,612.8 L486.9,611.8 L487.2,611.5 L487.1,610.4 L489.9,610.2 L491.1,610.8 Z" fill="#a0a39a" opacity="0.95"/>
<ellipse cx="523.9" cy="647.6" rx="6.6" ry="1.8" fill="#4e5a3a" opacity="0.6"/>
<path d="M530.2,646.3 L529.3,647.7 L524.5,648.5 L520.9,648.5 L518.4,647.4 L516.8,644.7 L520.9,643.8 L524.9,643.3 L529.6,644.5 Z" fill="#a0a39a" opacity="0.95"/>
<ellipse cx="356.8" cy="496.4" rx="4.1" ry="1.4" fill="#4e5a3a" opacity="0.6"/>
<path d="M359.1,495.0 L358.1,496.3 L356.2,496.8 L353.5,496.3 L353.2,495.7 L353.1,493.9 L356.8,492.9 L359.7,494.3 Z" fill="#b9bab3" opacity="0.95"/>
<ellipse cx="497.7" cy="712.1" rx="5.3" ry="1.9" fill="#4e5a3a" opacity="0.6"/>
<path d="M501.2,710.6 L498.8,712.4 L496.6,713.0 L493.4,711.8 L492.9,709.0 L495.9,707.5 L501.3,709.1 Z" fill="#c5c6bf" opacity="0.95"/>
<ellipse cx="267.6" cy="669.1" rx="8.6" ry="1.8" fill="#4e5a3a" opacity="0.6"/>
<path d="M273.7,668.0 L272.5,669.7 L265.8,669.6 L261.3,668.8 L260.8,667.2 L261.7,666.2 L268.8,664.9 L273.0,665.9 Z" fill="#c5c6bf" opacity="0.95"/>
<ellipse cx="216.6" cy="508.6" rx="6.4" ry="1.5" fill="#4e5a3a" opacity="0.6"/>
<path d="M220.5,507.5 L219.0,508.7 L217.5,509.5 L214.2,509.3 L211.0,507.9 L211.7,506.7 L214.2,505.7 L216.0,505.4 L219.4,506.0 Z" fill="#a0a39a" opacity="0.95"/>
<ellipse cx="226.8" cy="506.4" rx="5.5" ry="1.7" fill="#4e5a3a" opacity="0.6"/>
<path d="M230.0,505.5 L227.5,506.9 L223.5,506.4 L220.6,505.0 L224.2,502.5 L228.0,502.2 Z" fill="#b9bab3" opacity="0.95"/>
<ellipse cx="444.4" cy="604.2" rx="4.6" ry="1.9" fill="#4e5a3a" opacity="0.6"/>
<path d="M449.1,602.2 L446.7,604.9 L442.5,604.7 L440.6,603.0 L441.5,601.0 L446.1,600.3 Z" fill="#b9bab3" opacity="0.95"/>
<ellipse cx="170.4" cy="560.1" rx="4.6" ry="1.5" fill="#4e5a3a" opacity="0.6"/>
<path d="M174.8,559.1 L171.7,560.1 L170.2,560.3 L167.8,560.5 L166.8,559.5 L166.3,558.1 L168.9,557.1 L171.0,557.3 L174.3,557.7 Z" fill="#b9bab3" opacity="0.95"/>
<ellipse cx="542.7" cy="650.0" rx="2.7" ry="0.7" fill="#4e5a3a" opacity="0.6"/>
<path d="M544.9,649.4 L542.8,650.0 L540.4,650.1 L539.9,649.3 L541.3,648.6 L543.5,648.5 Z" fill="#aeb0a8" opacity="0.95"/>
<ellipse cx="333.3" cy="558.6" rx="2.7" ry="0.8" fill="#4e5a3a" opacity="0.6"/>
<path d="M335.1,558.0 L335.3,558.5 L333.7,558.8 L331.4,558.5 L330.7,558.3 L330.8,557.3 L331.3,557.2 L333.9,556.7 L334.4,557.1 Z" fill="#c5c6bf" opacity="0.95"/>
<ellipse cx="468.5" cy="595.1" rx="3.3" ry="1.0" fill="#4e5a3a" opacity="0.6"/>
<path d="M470.5,594.7 L469.9,595.0 L467.2,595.5 L465.2,595.0 L464.7,594.5 L465.6,593.5 L468.3,592.7 L470.0,593.0 Z" fill="#b9bab3" opacity="0.95"/>
<ellipse cx="404.2" cy="567.9" rx="4.0" ry="1.3" fill="#4e5a3a" opacity="0.6"/>
<path d="M407.8,567.4 L405.5,568.1 L403.8,568.6 L400.3,567.9 L399.9,565.7 L401.9,565.1 L405.5,565.3 Z" fill="#c5c6bf" opacity="0.95"/>
<ellipse cx="157.7" cy="483.6" rx="6.6" ry="1.7" fill="#4e5a3a" opacity="0.6"/>
<path d="M162.7,481.7 L161.8,483.7 L157.4,484.7 L150.8,483.4 L150.4,481.8 L157.3,479.7 L160.9,480.0 Z" fill="#c5c6bf" opacity="0.95"/>
<ellipse cx="312.6" cy="477.2" rx="2.6" ry="1.0" fill="#4e5a3a" opacity="0.6"/>
<path d="M314.1,476.5 L313.7,477.3 L310.6,477.6 L309.4,476.5 L310.8,475.2 L313.7,475.3 Z" fill="#aeb0a8" opacity="0.95"/>
<ellipse cx="400.1" cy="568.5" rx="7.9" ry="1.8" fill="#4e5a3a" opacity="0.6"/>
<path d="M405.7,566.9 L405.6,568.4 L402.7,569.6 L396.7,569.6 L392.7,568.6 L392.3,567.0 L397.6,564.2 L401.2,565.0 L405.3,565.3 Z" fill="#aeb0a8" opacity="0.95"/>
<ellipse cx="322.6" cy="537.9" rx="6.6" ry="1.5" fill="#4e5a3a" opacity="0.6"/>
<path d="M328.3,536.8 L326.7,538.0 L321.9,538.4 L318.7,537.9 L315.0,536.5 L316.9,535.3 L321.7,534.8 L324.4,535.2 Z" fill="#aeb0a8" opacity="0.95"/>
<ellipse cx="584.1" cy="620.1" rx="3.8" ry="1.1" fill="#4e5a3a" opacity="0.6"/>
<path d="M587.2,619.6 L586.2,620.4 L583.8,620.5 L580.6,619.8 L580.2,618.9 L583.7,617.8 L586.0,618.2 Z" fill="#aeb0a8" opacity="0.95"/>
<ellipse cx="595.3" cy="749.3" rx="6.2" ry="1.5" fill="#4e5a3a" opacity="0.6"/>
<path d="M600.4,747.6 L598.4,749.6 L594.6,750.2 L589.4,749.1 L589.4,747.3 L593.9,745.7 L599.3,746.8 Z" fill="#c5c6bf" opacity="0.95"/>
<ellipse cx="593.3" cy="656.0" rx="8.9" ry="2.5" fill="#4e5a3a" opacity="0.6"/>
<path d="M600.6,653.4 L596.5,656.2 L593.9,656.8 L586.2,655.8 L584.0,654.9 L589.1,651.7 L590.3,649.7 L599.0,650.7 Z" fill="#a0a39a" opacity="0.95"/>
<ellipse cx="597.9" cy="623.3" rx="6.4" ry="1.9" fill="#4e5a3a" opacity="0.6"/>
<path d="M604.3,622.1 L601.5,623.7 L595.3,623.4 L591.0,623.2 L593.3,620.3 L595.9,619.4 L602.5,619.5 Z" fill="#b9bab3" opacity="0.95"/>
<ellipse cx="310.9" cy="527.5" rx="4.1" ry="1.5" fill="#4e5a3a" opacity="0.6"/>
<path d="M313.8,526.6 L313.4,527.1 L312.0,528.2 L307.6,527.7 L307.7,527.1 L307.0,525.2 L307.3,524.2 L311.9,523.7 L314.3,525.3 Z" fill="#aeb0a8" opacity="0.95"/>
<ellipse cx="661.9" cy="670.3" rx="6.2" ry="1.8" fill="#4e5a3a" opacity="0.6"/>
<path d="M667.5,668.1 L666.6,670.3 L663.8,671.0 L658.2,670.4 L655.1,669.4 L656.3,668.5 L657.1,666.4 L661.9,666.8 L665.6,666.3 Z" fill="#c5c6bf" opacity="0.95"/>
<ellipse cx="625.3" cy="638.7" rx="3.7" ry="1.2" fill="#4e5a3a" opacity="0.6"/>
<path d="M627.6,637.3 L627.7,638.5 L624.8,639.3 L623.7,639.0 L621.3,638.0 L621.6,637.6 L622.4,636.5 L624.9,636.1 L627.7,636.2 Z" fill="#b9bab3" opacity="0.95"/>
<ellipse cx="483.8" cy="574.3" rx="7.5" ry="1.8" fill="#4e5a3a" opacity="0.6"/>
<path d="M488.9,572.2 L488.0,574.1 L482.4,574.7 L479.0,574.1 L477.4,572.0 L482.5,570.1 L486.3,570.7 Z" fill="#aeb0a8" opacity="0.95"/>
<ellipse cx="41.2" cy="620.7" rx="2.2" ry="1.1" fill="#4e5a3a" opacity="0.6"/>
<path d="M43.3,620.2 L42.2,620.6 L40.2,621.4 L39.2,620.4 L39.1,619.3 L39.7,618.3 L42.2,618.5 Z" fill="#b9bab3" opacity="0.95"/>
<ellipse cx="300.5" cy="589.3" rx="3.9" ry="1.6" fill="#4e5a3a" opacity="0.6"/>
<path d="M303.1,588.0 L303.4,589.0 L299.6,590.4 L298.9,589.6 L297.0,589.2 L296.4,587.3 L297.3,586.2 L300.0,586.0 L302.5,586.9 Z" fill="#a0a39a" opacity="0.95"/>
<ellipse cx="457.0" cy="588.3" rx="3.3" ry="1.0" fill="#4e5a3a" opacity="0.6"/>
<path d="M459.2,587.9 L458.3,588.5 L456.7,588.9 L453.6,588.4 L453.6,587.3 L454.6,586.5 L456.7,586.4 L459.0,586.6 Z" fill="#aeb0a8" opacity="0.95"/>
<ellipse cx="40.8" cy="566.2" rx="3.8" ry="1.3" fill="#4e5a3a" opacity="0.6"/>
<path d="M43.6,565.3 L41.8,566.4 L41.2,566.9 L36.9,566.2 L36.4,565.3 L37.7,564.2 L41.3,563.0 L43.4,564.2 Z" fill="#c5c6bf" opacity="0.95"/>
<ellipse cx="659.4" cy="676.8" rx="4.9" ry="1.7" fill="#4e5a3a" opacity="0.6"/>
<path d="M663.8,675.9 L663.1,676.9 L658.8,677.4 L655.5,676.5 L654.1,675.4 L656.0,673.3 L659.0,673.0 L661.6,674.1 Z" fill="#c5c6bf" opacity="0.95"/>
<ellipse cx="562.3" cy="660.7" rx="5.6" ry="1.3" fill="#4e5a3a" opacity="0.6"/>
<path d="M567.7,659.8 L565.1,660.6 L561.5,661.3 L557.5,660.3 L557.5,659.1 L562.0,657.6 L566.2,658.5 Z" fill="#b9bab3" opacity="0.95"/>
<ellipse cx="483.8" cy="613.3" rx="2.6" ry="0.8" fill="#4e5a3a" opacity="0.6"/>
<path d="M485.3,612.9 L485.5,613.2 L483.7,613.6 L482.3,613.4 L481.0,613.1 L481.0,612.0 L481.9,611.9 L483.8,611.3 L485.1,611.7 Z" fill="#aeb0a8" opacity="0.95"/>
<ellipse cx="578.2" cy="649.1" rx="4.1" ry="1.7" fill="#4e5a3a" opacity="0.6"/>
<path d="M581.2,647.9 L579.2,649.3 L576.2,649.4 L574.1,647.3 L575.7,644.9 L580.0,645.7 Z" fill="#a0a39a" opacity="0.95"/>
<ellipse cx="70.8" cy="530.4" rx="4.3" ry="1.2" fill="#4e5a3a" opacity="0.6"/>
<path d="M75.3,529.5 L73.2,530.3 L70.2,530.7 L66.4,529.8 L66.0,528.8 L69.2,528.3 L73.8,528.5 Z" fill="#a0a39a" opacity="0.95"/>
<ellipse cx="229.3" cy="579.4" rx="4.6" ry="1.1" fill="#4e5a3a" opacity="0.6"/>
<path d="M232.4,578.5 L232.4,579.2 L228.0,579.5 L224.9,579.4 L223.9,579.0 L226.9,577.5 L227.5,576.9 L230.7,577.5 Z" fill="#c5c6bf" opacity="0.95"/>
<ellipse cx="465.1" cy="608.3" rx="7.3" ry="1.9" fill="#4e5a3a" opacity="0.6"/>
<path d="M471.5,607.2 L467.9,608.6 L461.7,609.4 L457.5,607.9 L457.4,605.9 L462.7,603.6 L468.8,604.7 Z" fill="#a0a39a" opacity="0.95"/>
<ellipse cx="165.3" cy="531.6" rx="4.0" ry="1.3" fill="#4e5a3a" opacity="0.6"/>
<path d="M168.9,531.0 L166.2,531.7 L166.0,532.4 L161.5,531.7 L161.7,531.0 L162.5,528.8 L164.4,529.2 L167.8,529.7 Z" fill="#aeb0a8" opacity="0.95"/>
<ellipse cx="696.0" cy="682.7" rx="5.6" ry="1.6" fill="#4e5a3a" opacity="0.6"/>
<path d="M699.9,680.9 L699.8,682.7 L696.3,683.3 L691.1,683.0 L689.9,682.3 L689.6,680.8 L692.4,679.6 L696.2,678.5 L699.4,679.8 Z" fill="#b9bab3" opacity="0.95"/>
<ellipse cx="378.5" cy="683.8" rx="8.0" ry="2.6" fill="#4e5a3a" opacity="0.6"/>
<path d="M386.1,682.8 L384.4,683.6 L375.9,685.4 L370.5,683.9 L370.3,681.3 L373.0,678.9 L378.6,677.4 L382.3,679.8 Z" fill="#aeb0a8" opacity="0.95"/>
<ellipse cx="141.5" cy="643.4" rx="4.6" ry="1.6" fill="#4e5a3a" opacity="0.6"/>
<path d="M145.4,642.2 L143.3,643.4 L141.4,644.2 L138.3,643.9 L136.9,641.9 L139.2,640.6 L140.0,639.4 L144.1,639.9 Z" fill="#c5c6bf" opacity="0.95"/>
<ellipse cx="547.8" cy="655.7" rx="3.8" ry="1.1" fill="#4e5a3a" opacity="0.6"/>
<path d="M550.8,654.6 L549.7,655.7 L545.3,655.7 L544.1,655.1 L545.4,653.5 L548.4,653.6 Z" fill="#aeb0a8" opacity="0.95"/>
<ellipse cx="362.4" cy="676.6" rx="10.2" ry="2.0" fill="#4e5a3a" opacity="0.6"/>
<path d="M370.9,675.0 L366.3,676.5 L360.2,676.9 L351.3,675.6 L354.0,674.5 L360.7,672.1 L367.1,672.8 Z" fill="#aeb0a8" opacity="0.95"/>
<ellipse cx="612.5" cy="613.2" rx="2.5" ry="0.7" fill="#4e5a3a" opacity="0.6"/>
<path d="M614.2,612.7 L612.7,613.3 L611.6,613.4 L610.2,612.8 L610.0,611.9 L611.7,611.7 L612.9,611.8 Z" fill="#c5c6bf" opacity="0.95"/>
<ellipse cx="190.6" cy="498.7" rx="3.2" ry="0.8" fill="#4e5a3a" opacity="0.6"/>
<path d="M193.1,498.3 L191.8,498.9 L189.0,498.9 L187.6,498.2 L188.8,497.1 L191.1,497.1 Z" fill="#aeb0a8" opacity="0.95"/>
<ellipse cx="407.6" cy="694.7" rx="7.9" ry="1.6" fill="#4e5a3a" opacity="0.6"/>
<path d="M414.8,693.0 L409.8,695.1 L403.8,695.6 L398.9,694.4 L399.4,693.0 L403.7,691.4 L410.0,691.2 Z" fill="#b9bab3" opacity="0.95"/>
<ellipse cx="341.0" cy="699.7" rx="4.8" ry="1.9" fill="#4e5a3a" opacity="0.6"/>
<path d="M344.8,698.0 L343.3,699.6 L337.6,699.7 L335.9,697.9 L338.1,695.6 L343.2,695.8 Z" fill="#aeb0a8" opacity="0.95"/>
<ellipse cx="235.6" cy="671.2" rx="6.2" ry="2.4" fill="#4e5a3a" opacity="0.6"/>
<path d="M242.0,669.3 L240.3,670.8 L236.9,672.1 L231.8,671.4 L230.3,670.8 L231.6,667.7 L232.1,666.9 L236.1,665.3 L239.8,667.1 Z" fill="#aeb0a8" opacity="0.95"/>
<ellipse cx="89.4" cy="496.0" rx="5.9" ry="2.2" fill="#4e5a3a" opacity="0.6"/>
<path d="M94.8,495.2 L93.3,496.5 L87.8,496.9 L85.1,496.8 L84.8,494.1 L85.7,492.6 L88.6,490.6 L92.6,492.1 Z" fill="#aeb0a8" opacity="0.95"/>
<ellipse cx="626.6" cy="681.5" rx="3.2" ry="1.1" fill="#4e5a3a" opacity="0.6"/>
<path d="M629.6,680.5 L628.5,681.4 L626.0,681.7 L623.3,681.4 L623.7,680.0 L625.8,678.9 L628.6,679.6 Z" fill="#b9bab3" opacity="0.95"/>
<ellipse cx="618.3" cy="672.2" rx="6.2" ry="1.9" fill="#4e5a3a" opacity="0.6"/>
<path d="M624.4,669.8 L619.1,672.5 L614.5,673.1 L612.0,670.6 L616.8,668.6 L619.8,668.6 Z" fill="#a0a39a" opacity="0.95"/>
<ellipse cx="423.9" cy="706.0" rx="10.3" ry="2.8" fill="#4e5a3a" opacity="0.6"/>
<path d="M432.9,704.9 L430.0,706.1 L418.6,707.1 L416.0,704.4 L416.3,701.8 L418.8,699.7 L430.2,700.3 Z" fill="#a0a39a" opacity="0.95"/>
<ellipse cx="443.8" cy="519.3" rx="4.7" ry="1.9" fill="#4e5a3a" opacity="0.6"/>
<path d="M448.0,517.6 L447.4,519.1 L443.5,520.4 L440.3,519.3 L439.0,518.1 L440.1,516.5 L443.6,515.4 L447.0,516.4 Z" fill="#c5c6bf" opacity="0.95"/>
<ellipse cx="620.3" cy="621.9" rx="3.6" ry="1.3" fill="#4e5a3a" opacity="0.6"/>
<path d="M623.4,621.3 L621.6,622.3 L620.0,622.1 L616.7,622.1 L615.8,620.3 L617.1,619.4 L620.9,618.8 L623.2,619.7 Z" fill="#b9bab3" opacity="0.95"/>
<ellipse cx="615.9" cy="619.2" rx="5.3" ry="1.9" fill="#4e5a3a" opacity="0.6"/>
<path d="M619.3,618.0 L619.9,619.0 L614.8,620.3 L613.8,619.5 L609.8,618.1 L610.6,617.3 L611.4,615.5 L615.7,615.2 L618.0,616.2 Z" fill="#a0a39a" opacity="0.95"/>
<ellipse cx="280.5" cy="576.2" rx="7.2" ry="2.1" fill="#4e5a3a" opacity="0.6"/>
<path d="M286.0,574.2 L283.0,576.3 L275.5,577.0 L274.8,574.9 L277.3,572.3 L283.0,572.7 Z" fill="#c5c6bf" opacity="0.95"/>
<ellipse cx="199.8" cy="555.8" rx="3.2" ry="0.7" fill="#4e5a3a" opacity="0.6"/>
<path d="M202.0,555.4 L201.5,555.9 L197.9,556.0 L197.1,555.5 L196.6,554.9 L199.0,554.2 L201.8,554.4 Z" fill="#aeb0a8" opacity="0.95"/>
<ellipse cx="642.8" cy="631.9" rx="4.5" ry="1.5" fill="#4e5a3a" opacity="0.6"/>
<path d="M647.1,631.4 L644.6,632.6 L640.6,632.3 L638.9,631.4 L639.3,629.5 L641.1,629.1 L645.1,629.4 Z" fill="#c5c6bf" opacity="0.95"/>
<ellipse cx="134.0" cy="549.0" rx="4.4" ry="1.6" fill="#4e5a3a" opacity="0.6"/>
<path d="M137.9,548.0 L135.7,549.3 L130.8,549.4 L129.6,548.1 L132.7,545.8 L134.7,545.3 Z" fill="#a0a39a" opacity="0.95"/>
<ellipse cx="132.3" cy="637.4" rx="4.2" ry="2.0" fill="#4e5a3a" opacity="0.6"/>
<path d="M136.5,635.9 L133.8,638.0 L132.9,638.1 L129.7,637.7 L128.5,635.7 L128.5,634.3 L132.3,632.8 L135.8,633.7 Z" fill="#c5c6bf" opacity="0.95"/>
<ellipse cx="545.6" cy="720.6" rx="3.2" ry="1.2" fill="#4e5a3a" opacity="0.6"/>
<path d="M548.3,719.8 L546.8,721.1 L543.6,720.9 L542.4,719.2 L543.4,718.6 L546.6,717.7 Z" fill="#c5c6bf" opacity="0.95"/>
<ellipse cx="505.4" cy="590.0" rx="4.5" ry="1.6" fill="#4e5a3a" opacity="0.6"/>
<path d="M508.6,588.9 L508.9,589.8 L504.3,590.7 L503.2,590.2 L500.3,589.4 L502.1,586.9 L506.3,585.9 L507.7,586.5 Z" fill="#aeb0a8" opacity="0.95"/>
<ellipse cx="126.1" cy="504.8" rx="6.8" ry="1.6" fill="#4e5a3a" opacity="0.6"/>
<path d="M131.9,503.2 L130.4,504.5 L126.9,505.1 L120.1,504.6 L119.5,503.1 L120.6,502.1 L124.9,500.7 L128.2,501.8 Z" fill="#aeb0a8" opacity="0.95"/>
<ellipse cx="691.2" cy="679.9" rx="3.8" ry="1.3" fill="#4e5a3a" opacity="0.6"/>
<path d="M694.1,678.9 L693.4,680.0 L689.9,680.2 L687.3,680.1 L687.7,678.6 L687.8,677.9 L690.0,677.0 L693.0,678.0 Z" fill="#b9bab3" opacity="0.95"/>
<ellipse cx="157.8" cy="483.4" rx="1.8" ry="0.7" fill="#4e5a3a" opacity="0.6"/>
<path d="M159.1,482.7 L158.8,483.4 L157.0,483.7 L156.0,483.2 L156.1,482.9 L155.9,482.0 L157.6,481.8 L158.5,482.0 Z" fill="#b9bab3" opacity="0.95"/>
<ellipse cx="401.8" cy="513.3" rx="2.6" ry="0.8" fill="#4e5a3a" opacity="0.6"/>
<path d="M403.9,513.0 L403.0,513.5 L401.0,513.8 L400.0,513.3 L399.3,512.7 L400.4,511.9 L400.8,511.7 L402.6,512.1 Z" fill="#b9bab3" opacity="0.95"/>
<ellipse cx="263.7" cy="540.4" rx="4.7" ry="1.4" fill="#4e5a3a" opacity="0.6"/>
<path d="M266.9,539.1 L266.2,540.4 L259.8,540.6 L259.3,539.5 L261.5,537.0 L264.7,537.6 Z" fill="#c5c6bf" opacity="0.95"/>
<ellipse cx="539.1" cy="587.1" rx="6.8" ry="2.1" fill="#4e5a3a" opacity="0.6"/>
<path d="M545.6,586.1 L540.5,588.3 L536.0,588.1 L531.5,585.8 L535.5,582.6 L540.0,582.9 Z" fill="#aeb0a8" opacity="0.95"/>
<ellipse cx="639.8" cy="632.6" rx="5.3" ry="1.4" fill="#4e5a3a" opacity="0.6"/>
<path d="M644.6,631.0 L642.4,633.0 L636.7,632.9 L633.6,631.5 L636.2,629.5 L642.5,629.4 Z" fill="#b9bab3" opacity="0.95"/>
<ellipse cx="662.0" cy="630.6" rx="2.9" ry="0.9" fill="#4e5a3a" opacity="0.6"/>
<path d="M664.5,629.6 L662.7,630.9 L661.5,630.8 L658.9,630.2 L659.1,629.7 L661.0,628.4 L662.7,628.6 Z" fill="#aeb0a8" opacity="0.95"/>
<ellipse cx="76.4" cy="639.5" rx="4.5" ry="1.1" fill="#4e5a3a" opacity="0.6"/>
<path d="M81.0,638.6 L77.4,639.6 L74.2,640.1 L71.7,639.0 L72.8,638.1 L74.7,637.4 L77.8,636.9 Z" fill="#c5c6bf" opacity="0.95"/>
<ellipse cx="446.9" cy="615.2" rx="6.0" ry="1.9" fill="#4e5a3a" opacity="0.6"/>
<path d="M453.1,614.2 L450.7,615.5 L444.5,615.7 L441.2,614.6 L441.4,612.1 L444.3,611.2 L449.6,611.7 Z" fill="#aeb0a8" opacity="0.95"/>
<ellipse cx="625.6" cy="678.9" rx="3.5" ry="1.4" fill="#4e5a3a" opacity="0.6"/>
<path d="M629.0,677.7 L626.5,679.2 L625.3,679.3 L622.8,679.4 L621.7,677.4 L622.8,676.7 L624.7,675.8 L627.3,675.7 Z" fill="#c5c6bf" opacity="0.95"/>
<ellipse cx="86.7" cy="460.5" rx="5.2" ry="1.5" fill="#4e5a3a" opacity="0.6"/>
<path d="M91.6,459.9 L89.0,460.3 L86.0,461.2 L82.0,460.9 L82.2,459.2 L82.0,457.5 L87.5,457.1 L89.6,457.4 Z" fill="#a0a39a" opacity="0.95"/>
<ellipse cx="482.9" cy="647.3" rx="7.8" ry="1.8" fill="#4e5a3a" opacity="0.6"/>
<path d="M489.2,645.2 L487.3,646.9 L482.5,648.4 L477.9,647.4 L476.1,645.6 L477.4,643.4 L483.2,643.0 L487.1,644.4 Z" fill="#aeb0a8" opacity="0.95"/>
<ellipse cx="184.0" cy="487.4" rx="3.4" ry="1.0" fill="#4e5a3a" opacity="0.6"/>
<path d="M186.6,486.7 L184.6,487.4 L182.7,487.8 L179.8,486.7 L181.7,485.5 L184.7,485.1 Z" fill="#b9bab3" opacity="0.95"/>
<ellipse cx="603.0" cy="559.4" rx="5.4" ry="1.2" fill="#4e5a3a" opacity="0.6"/>
<path d="M607.6,558.9 L606.5,559.2 L604.0,560.1 L601.0,559.8 L597.9,559.1 L599.1,558.0 L600.0,557.5 L603.4,556.8 L607.3,557.6 Z" fill="#aeb0a8" opacity="0.95"/>
<ellipse cx="518.0" cy="745.0" rx="6.6" ry="2.3" fill="#4e5a3a" opacity="0.6"/>
<path d="M523.4,743.8 L523.1,744.7 L519.7,746.3 L515.7,745.7 L512.2,743.8 L512.1,742.8 L514.4,739.8 L519.3,740.6 L522.3,740.0 Z" fill="#a0a39a" opacity="0.95"/>
<ellipse cx="398.2" cy="603.4" rx="3.3" ry="1.4" fill="#4e5a3a" opacity="0.6"/>
<path d="M401.2,602.6 L399.8,603.4 L397.2,603.9 L395.9,603.7 L394.3,602.4 L395.9,600.2 L396.9,600.2 L399.3,601.1 Z" fill="#c5c6bf" opacity="0.95"/>
<ellipse cx="374.0" cy="590.8" rx="5.7" ry="2.2" fill="#4e5a3a" opacity="0.6"/>
<path d="M379.9,589.5 L376.0,591.6 L372.5,591.2 L368.3,588.2 L370.3,586.1 L375.4,586.8 Z" fill="#a0a39a" opacity="0.95"/>
<ellipse cx="340.4" cy="547.0" rx="4.9" ry="1.7" fill="#4e5a3a" opacity="0.6"/>
<path d="M345.0,545.5 L344.3,546.9 L338.9,547.5 L336.8,546.8 L335.0,545.8 L338.0,543.9 L339.7,543.0 L343.8,543.7 Z" fill="#aeb0a8" opacity="0.95"/>
<ellipse cx="102.8" cy="519.4" rx="5.3" ry="1.6" fill="#4e5a3a" opacity="0.6"/>
<path d="M107.0,517.6 L106.6,519.3 L103.3,519.9 L99.9,519.9 L98.7,519.2 L98.0,517.8 L99.8,516.4 L102.9,515.5 L106.3,515.9 Z" fill="#b9bab3" opacity="0.95"/>
<ellipse cx="470.1" cy="715.9" rx="6.2" ry="2.8" fill="#4e5a3a" opacity="0.6"/>
<path d="M475.7,712.8 L474.0,716.0 L466.8,716.9 L464.4,714.4 L464.0,712.4 L467.8,709.7 L472.0,710.6 Z" fill="#b9bab3" opacity="0.95"/>
<ellipse cx="379.4" cy="570.5" rx="4.4" ry="1.1" fill="#4e5a3a" opacity="0.6"/>
<path d="M383.1,569.3 L381.6,570.5 L380.6,570.9 L377.3,571.0 L374.9,570.3 L375.8,568.9 L377.2,567.7 L379.0,567.8 L382.5,568.4 Z" fill="#b9bab3" opacity="0.95"/>
<ellipse cx="277.0" cy="557.6" rx="4.8" ry="1.5" fill="#4e5a3a" opacity="0.6"/>
<path d="M281.7,556.6 L279.7,558.0 L274.3,557.5 L272.8,556.7 L275.0,554.0 L277.5,554.5 Z" fill="#aeb0a8" opacity="0.95"/>
<ellipse cx="593.3" cy="657.8" rx="3.7" ry="1.3" fill="#4e5a3a" opacity="0.6"/>
<path d="M595.8,657.1 L595.7,657.5 L593.4,658.1 L591.2,658.1 L589.1,657.3 L589.5,655.4 L590.8,655.5 L594.5,654.8 L595.2,655.6 Z" fill="#b9bab3" opacity="0.95"/>
<ellipse cx="412.0" cy="691.0" rx="6.3" ry="2.2" fill="#4e5a3a" opacity="0.6"/>
<path d="M416.4,689.6 L415.6,690.2 L412.2,691.3 L409.5,691.8 L405.7,690.5 L405.6,688.9 L408.8,687.0 L414.4,685.7 L416.2,688.2 Z" fill="#b9bab3" opacity="0.95"/>
<ellipse cx="341.8" cy="577.1" rx="6.3" ry="2.0" fill="#4e5a3a" opacity="0.6"/>
<path d="M345.7,575.9 L344.8,578.0 L338.1,577.8 L334.2,575.6 L337.6,573.8 L343.5,572.3 Z" fill="#aeb0a8" opacity="0.95"/>
<ellipse cx="678.4" cy="699.6" rx="7.2" ry="1.7" fill="#4e5a3a" opacity="0.6"/>
<path d="M684.5,698.2 L682.9,699.6 L679.3,699.8 L672.7,699.2 L669.7,698.5 L673.7,697.0 L679.3,695.9 L682.5,696.8 Z" fill="#aeb0a8" opacity="0.95"/>
<ellipse cx="394.3" cy="614.2" rx="3.7" ry="1.1" fill="#4e5a3a" opacity="0.6"/>
<path d="M396.6,613.6 L396.0,614.6 L393.4,614.4 L391.7,614.6 L391.2,613.5 L391.3,612.0 L394.5,611.6 L396.1,612.3 Z" fill="#c5c6bf" opacity="0.95"/>
<ellipse cx="502.5" cy="727.7" rx="7.2" ry="2.0" fill="#4e5a3a" opacity="0.6"/>
<path d="M507.7,726.6 L506.4,727.7 L501.7,728.0 L495.9,728.1 L494.3,725.8 L495.5,724.0 L500.5,723.6 L505.6,724.5 Z" fill="#b9bab3" opacity="0.95"/>
<ellipse cx="175.4" cy="532.9" rx="3.3" ry="1.1" fill="#4e5a3a" opacity="0.6"/>
<path d="M177.6,532.1 L176.9,532.7 L175.7,533.6 L172.4,533.1 L171.5,532.1 L171.5,531.8 L173.2,530.8 L174.6,530.6 L177.2,530.5 Z" fill="#c5c6bf" opacity="0.95"/>
<ellipse cx="325.1" cy="685.1" rx="7.9" ry="2.0" fill="#4e5a3a" opacity="0.6"/>
<path d="M330.6,683.4 L327.0,685.4 L323.8,685.3 L315.9,684.3 L318.2,682.2 L325.2,680.2 L328.8,681.3 Z" fill="#aeb0a8" opacity="0.95"/>
<ellipse cx="223.4" cy="639.0" rx="4.1" ry="1.0" fill="#4e5a3a" opacity="0.6"/>
<path d="M227.2,638.3 L226.4,639.2 L223.7,639.3 L222.0,639.1 L219.1,638.7 L219.9,637.5 L221.3,636.8 L224.2,636.9 L225.9,637.7 Z" fill="#aeb0a8" opacity="0.95"/>
<ellipse cx="308.6" cy="533.9" rx="3.2" ry="0.9" fill="#4e5a3a" opacity="0.6"/>
<path d="M310.8,533.1 L309.0,534.0 L307.3,534.4 L305.0,533.1 L307.3,531.7 L309.5,532.2 Z" fill="#aeb0a8" opacity="0.95"/>
<ellipse cx="368.1" cy="528.5" rx="5.1" ry="1.5" fill="#4e5a3a" opacity="0.6"/>
<path d="M371.1,526.9 L369.1,528.8 L364.8,529.2 L363.3,527.7 L366.0,524.7 L369.1,525.6 Z" fill="#b9bab3" opacity="0.95"/>
<ellipse cx="441.2" cy="578.1" rx="5.0" ry="2.6" fill="#4e5a3a" opacity="0.6"/>
<path d="M446.0,575.8 L444.0,579.0 L440.5,579.2 L437.6,578.5 L436.1,576.4 L437.0,573.4 L440.5,571.6 L443.8,573.2 Z" fill="#c5c6bf" opacity="0.95"/>
<ellipse cx="645.4" cy="668.1" rx="6.8" ry="2.3" fill="#4e5a3a" opacity="0.6"/>
<path d="M650.7,666.4 L649.9,668.3 L644.4,669.0 L639.9,666.8 L638.5,665.3 L644.3,662.5 L650.9,663.5 Z" fill="#a0a39a" opacity="0.95"/>
<ellipse cx="252.5" cy="578.4" rx="3.4" ry="1.0" fill="#4e5a3a" opacity="0.6"/>
<path d="M254.9,578.0 L254.8,578.3 L253.1,578.6 L250.2,578.6 L249.9,578.1 L249.0,576.7 L250.6,576.3 L252.6,575.9 L255.6,577.0 Z" fill="#aeb0a8" opacity="0.95"/>
<ellipse cx="472.4" cy="525.1" rx="4.4" ry="1.2" fill="#4e5a3a" opacity="0.6"/>
<path d="M476.8,524.3 L474.4,525.2 L471.1,525.2 L469.5,524.9 L468.1,522.9 L471.6,522.6 L474.2,523.1 Z" fill="#a0a39a" opacity="0.95"/>
<ellipse cx="331.4" cy="510.3" rx="5.2" ry="1.7" fill="#4e5a3a" opacity="0.6"/>
<path d="M334.8,509.2 L332.8,510.6 L328.4,510.3 L326.4,508.7 L328.1,507.3 L334.7,506.6 Z" fill="#c5c6bf" opacity="0.95"/>
<ellipse cx="62.7" cy="516.6" rx="2.8" ry="1.3" fill="#4e5a3a" opacity="0.6"/>
<path d="M64.2,515.7 L64.0,516.8 L61.0,517.2 L60.0,516.6 L60.1,515.0 L61.1,514.1 L63.5,514.6 Z" fill="#c5c6bf" opacity="0.95"/>
<ellipse cx="158.4" cy="630.1" rx="2.9" ry="1.3" fill="#4e5a3a" opacity="0.6"/>
<path d="M160.5,629.5 L159.5,630.0 L156.6,630.8 L155.7,629.6 L155.2,628.6 L157.2,627.2 L159.7,627.8 Z" fill="#a0a39a" opacity="0.95"/>
<ellipse cx="278.1" cy="548.3" rx="4.5" ry="1.8" fill="#4e5a3a" opacity="0.6"/>
<path d="M281.1,547.0 L280.1,548.5 L276.6,548.5 L274.1,548.1 L274.0,545.2 L275.2,544.0 L280.2,544.5 Z" fill="#b9bab3" opacity="0.95"/>
<ellipse cx="591.2" cy="618.7" rx="6.3" ry="1.9" fill="#4e5a3a" opacity="0.6"/>
<path d="M596.7,616.7 L594.1,618.7 L589.6,619.1 L586.9,618.3 L585.6,616.7 L586.8,614.9 L591.4,614.1 L594.1,615.1 Z" fill="#a0a39a" opacity="0.95"/>
<ellipse cx="97.7" cy="554.9" rx="5.0" ry="1.6" fill="#4e5a3a" opacity="0.6"/>
<path d="M100.9,553.5 L101.3,555.3 L95.3,555.0 L92.6,554.2 L95.3,552.2 L99.7,551.7 Z" fill="#b9bab3" opacity="0.95"/>
<ellipse cx="37.9" cy="568.1" rx="5.0" ry="1.6" fill="#4e5a3a" opacity="0.6"/>
<path d="M42.2,566.5 L40.6,568.0 L37.8,568.9 L34.6,568.2 L32.0,567.1 L34.9,564.5 L38.1,564.6 L41.4,565.3 Z" fill="#a0a39a" opacity="0.95"/>
<ellipse cx="196.2" cy="503.4" rx="5.1" ry="1.3" fill="#4e5a3a" opacity="0.6"/>
<path d="M200.9,502.6 L199.4,503.5 L194.6,503.8 L190.1,502.8 L190.5,501.4 L193.6,500.6 L199.0,501.2 Z" fill="#aeb0a8" opacity="0.95"/>
<ellipse cx="644.9" cy="758.8" rx="3.6" ry="1.1" fill="#4e5a3a" opacity="0.6"/>
<path d="M648.0,758.3 L647.1,759.0 L644.7,759.1 L641.2,758.8 L641.1,757.9 L642.4,756.7 L644.3,756.6 L647.3,756.6 Z" fill="#c5c6bf" opacity="0.95"/>
<ellipse cx="492.2" cy="628.8" rx="8.0" ry="2.3" fill="#4e5a3a" opacity="0.6"/>
<path d="M497.8,627.3 L495.6,630.0 L488.4,629.9 L485.8,626.3 L488.5,624.0 L495.4,624.4 Z" fill="#aeb0a8" opacity="0.95"/>
<ellipse cx="53.0" cy="464.7" rx="4.5" ry="1.4" fill="#4e5a3a" opacity="0.6"/>
<path d="M55.8,463.6 L55.2,464.3 L52.3,465.4 L50.4,465.3 L47.7,464.1 L48.0,463.2 L50.8,461.8 L53.6,461.4 L55.2,461.7 Z" fill="#c5c6bf" opacity="0.95"/>
<ellipse cx="414.5" cy="640.0" rx="6.8" ry="2.5" fill="#4e5a3a" opacity="0.6"/>
<path d="M421.3,637.5 L417.8,640.0 L414.5,641.1 L410.8,639.8 L407.5,638.9 L410.0,634.2 L413.8,635.0 L417.7,634.5 Z" fill="#a0a39a" opacity="0.95"/>
<ellipse cx="492.2" cy="525.8" rx="4.3" ry="1.4" fill="#4e5a3a" opacity="0.6"/>
<path d="M495.6,525.2 L495.3,526.1 L490.8,526.2 L487.4,525.2 L488.6,524.2 L489.8,522.9 L493.4,522.9 Z" fill="#aeb0a8" opacity="0.95"/>
<ellipse cx="65.7" cy="520.2" rx="3.9" ry="2.0" fill="#4e5a3a" opacity="0.6"/>
<path d="M68.0,519.0 L67.9,520.8 L65.4,521.1 L63.8,521.3 L62.2,518.9 L61.0,518.0 L62.4,516.1 L65.8,516.4 L68.2,516.8 Z" fill="#c5c6bf" opacity="0.95"/>
<ellipse cx="275.3" cy="575.8" rx="3.3" ry="1.3" fill="#4e5a3a" opacity="0.6"/>
<path d="M278.3,575.1 L276.6,576.4 L274.1,576.5 L273.2,576.1 L272.4,574.4 L272.3,573.3 L274.2,573.2 L276.7,572.9 Z" fill="#c5c6bf" opacity="0.95"/>
<ellipse cx="265.2" cy="523.3" rx="6.4" ry="1.8" fill="#4e5a3a" opacity="0.6"/>
<path d="M270.6,521.6 L270.9,523.0 L266.8,524.3 L262.6,523.9 L258.6,522.4 L259.2,520.2 L261.8,519.7 L265.3,519.3 L268.7,520.9 Z" fill="#c5c6bf" opacity="0.95"/>
<ellipse cx="410.8" cy="626.4" rx="6.0" ry="2.4" fill="#4e5a3a" opacity="0.6"/>
<path d="M416.0,624.2 L414.6,627.2 L411.1,627.9 L405.6,627.1 L405.6,626.0 L405.0,623.0 L406.3,621.8 L412.6,621.2 L413.4,622.0 Z" fill="#b9bab3" opacity="0.95"/>
<ellipse cx="376.5" cy="702.9" rx="5.7" ry="1.9" fill="#4e5a3a" opacity="0.6"/>
<path d="M381.2,701.8 L381.3,702.9 L376.2,704.0 L372.6,703.5 L371.7,701.6 L373.0,698.7 L374.9,698.4 L381.3,699.9 Z" fill="#a0a39a" opacity="0.95"/>
<ellipse cx="208.8" cy="536.8" rx="3.5" ry="1.1" fill="#4e5a3a" opacity="0.6"/>
<path d="M211.0,536.0 L211.1,536.9 L207.2,536.9 L205.6,536.1 L205.6,535.5 L207.0,534.3 L209.7,534.2 Z" fill="#b9bab3" opacity="0.95"/>
<ellipse cx="466.4" cy="615.3" rx="7.7" ry="1.5" fill="#4e5a3a" opacity="0.6"/>
<path d="M474.6,614.5 L471.4,615.1 L466.0,616.0 L461.4,615.3 L458.2,614.4 L458.7,612.9 L464.2,612.2 L471.0,613.2 Z" fill="#a0a39a" opacity="0.95"/>
<ellipse cx="174.8" cy="516.6" rx="2.8" ry="0.9" fill="#4e5a3a" opacity="0.6"/>
<path d="M177.1,515.6 L176.4,516.4 L175.4,517.0 L173.3,516.8 L171.8,516.0 L171.7,515.3 L173.4,514.6 L175.1,514.7 L176.1,515.4 Z" fill="#aeb0a8" opacity="0.95"/>
<ellipse cx="380.0" cy="552.2" rx="3.2" ry="0.8" fill="#4e5a3a" opacity="0.6"/>
<path d="M383.0,551.9 L381.5,552.1 L380.3,552.4 L378.0,552.2 L376.0,551.8 L377.0,550.6 L380.0,550.5 L381.4,550.6 Z" fill="#aeb0a8" opacity="0.95"/>
<ellipse cx="346.1" cy="679.3" rx="8.5" ry="2.5" fill="#4e5a3a" opacity="0.6"/>
<path d="M355.0,677.8 L353.1,679.5 L344.1,680.5 L339.5,679.7 L339.2,676.6 L338.2,675.6 L343.1,673.2 L353.8,675.0 Z" fill="#aeb0a8" opacity="0.95"/>
<ellipse cx="101.6" cy="459.7" rx="3.4" ry="1.1" fill="#4e5a3a" opacity="0.6"/>
<path d="M104.3,459.2 L103.0,459.7 L101.1,460.2 L98.9,459.4 L97.5,458.1 L100.0,457.0 L103.8,457.5 Z" fill="#a0a39a" opacity="0.95"/>
<ellipse cx="367.3" cy="686.2" rx="4.2" ry="1.8" fill="#4e5a3a" opacity="0.6"/>
<path d="M371.1,684.3 L370.2,685.7 L367.6,686.5 L365.9,686.6 L363.1,685.5 L363.2,683.4 L366.0,682.6 L367.0,682.4 L368.9,683.0 Z" fill="#a0a39a" opacity="0.95"/>
<ellipse cx="590.7" cy="669.7" rx="7.2" ry="1.9" fill="#4e5a3a" opacity="0.6"/>
<path d="M596.0,668.8 L592.2,670.4 L585.4,670.2 L583.3,668.6 L587.3,666.3 L593.7,665.3 Z" fill="#c5c6bf" opacity="0.95"/>
<ellipse cx="349.9" cy="672.8" rx="4.6" ry="1.4" fill="#4e5a3a" opacity="0.6"/>
<path d="M352.6,671.4 L352.0,672.6 L350.7,673.5 L346.7,672.5 L345.8,672.1 L345.4,670.1 L348.4,669.9 L352.0,670.6 Z" fill="#c5c6bf" opacity="0.95"/>
<ellipse cx="564.1" cy="634.2" rx="2.8" ry="0.7" fill="#4e5a3a" opacity="0.6"/>
<path d="M566.4,633.8 L564.7,634.4 L562.9,634.5 L561.3,633.8 L562.6,632.6 L565.7,632.7 Z" fill="#aeb0a8" opacity="0.95"/>
<ellipse cx="657.0" cy="672.8" rx="4.8" ry="1.2" fill="#4e5a3a" opacity="0.6"/>
<path d="M661.4,672.3 L659.5,672.8 L653.2,673.0 L652.1,671.9 L654.2,670.5 L658.3,670.3 Z" fill="#aeb0a8" opacity="0.95"/>
<ellipse cx="553.8" cy="636.6" rx="3.6" ry="1.4" fill="#4e5a3a" opacity="0.6"/>
<path d="M556.2,635.9 L555.5,636.5 L554.8,637.2 L550.7,636.9 L550.2,635.6 L549.7,635.4 L552.0,633.8 L554.3,633.1 L555.4,633.8 Z" fill="#a0a39a" opacity="0.95"/>
<ellipse cx="176.8" cy="442.1" rx="3.6" ry="1.0" fill="#4e5a3a" opacity="0.6"/>
<path d="M180.1,441.7 L179.0,441.9 L176.2,442.4 L174.2,442.1 L173.2,442.0 L173.3,440.9 L174.3,440.3 L177.5,440.2 L178.6,440.4 Z" fill="#b9bab3" opacity="0.95"/>
<ellipse cx="481.1" cy="595.1" rx="6.6" ry="1.8" fill="#4e5a3a" opacity="0.6"/>
<path d="M485.5,594.1 L486.5,594.8 L479.9,596.1 L477.2,594.9 L474.4,594.3 L477.3,591.6 L481.5,591.1 L485.2,591.5 Z" fill="#aeb0a8" opacity="0.95"/>
<ellipse cx="462.8" cy="592.1" rx="3.9" ry="1.0" fill="#4e5a3a" opacity="0.6"/>
<path d="M465.1,591.4 L464.6,591.9 L461.3,592.3 L458.3,591.9 L459.7,591.0 L461.3,589.6 L464.0,589.8 Z" fill="#aeb0a8" opacity="0.95"/>
<ellipse cx="446.9" cy="545.7" rx="4.1" ry="1.7" fill="#4e5a3a" opacity="0.6"/>
<path d="M450.9,544.6 L449.3,546.1 L446.2,546.1 L443.1,545.5 L443.2,544.2 L444.5,542.6 L447.0,542.3 L449.7,542.4 Z" fill="#b9bab3" opacity="0.95"/>
<ellipse cx="57.8" cy="522.8" rx="5.4" ry="1.2" fill="#4e5a3a" opacity="0.6"/>
<path d="M62.8,522.3 L60.8,523.1 L55.7,523.4 L51.2,521.8 L55.3,519.9 L58.8,519.7 Z" fill="#a0a39a" opacity="0.95"/>
<ellipse cx="336.6" cy="600.1" rx="6.3" ry="1.3" fill="#4e5a3a" opacity="0.6"/>
<path d="M342.3,599.4 L341.2,600.3 L334.9,600.4 L332.1,600.6 L330.6,598.8 L332.7,596.9 L336.4,597.2 L338.4,597.8 Z" fill="#a0a39a" opacity="0.95"/>
<ellipse cx="530.2" cy="629.7" rx="4.7" ry="1.3" fill="#4e5a3a" opacity="0.6"/>
<path d="M534.3,629.0 L532.3,629.6 L529.0,629.9 L526.1,630.0 L526.2,629.0 L526.2,627.4 L528.4,626.7 L533.0,627.4 Z" fill="#b9bab3" opacity="0.95"/>
<ellipse cx="483.6" cy="617.0" rx="7.2" ry="1.5" fill="#4e5a3a" opacity="0.6"/>
<path d="M490.3,615.5 L489.2,616.8 L484.0,617.7 L478.5,617.6 L475.3,615.2 L479.0,613.8 L482.9,613.7 L488.3,614.1 Z" fill="#b9bab3" opacity="0.95"/>
<ellipse cx="184.4" cy="535.0" rx="5.2" ry="1.8" fill="#4e5a3a" opacity="0.6"/>
<path d="M187.8,533.4 L187.3,535.5 L182.0,535.4 L178.9,533.0 L180.7,531.1 L185.1,531.5 Z" fill="#a0a39a" opacity="0.95"/>
<ellipse cx="496.5" cy="721.5" rx="3.2" ry="1.1" fill="#4e5a3a" opacity="0.6"/>
<path d="M499.1,720.3 L498.8,721.7 L496.1,722.1 L493.4,721.4 L493.6,720.5 L494.1,719.0 L496.6,719.4 L497.6,719.5 Z" fill="#aeb0a8" opacity="0.95"/>
<ellipse cx="629.6" cy="592.3" rx="6.4" ry="1.5" fill="#4e5a3a" opacity="0.6"/>
<path d="M635.6,590.5 L633.2,591.9 L628.1,592.6 L623.9,592.5 L623.3,590.6 L623.7,590.1 L629.3,588.8 L633.8,589.9 Z" fill="#aeb0a8" opacity="0.95"/>
<ellipse cx="440.2" cy="689.4" rx="3.1" ry="1.2" fill="#4e5a3a" opacity="0.6"/>
<path d="M442.5,688.6 L441.2,689.5 L437.8,689.5 L437.6,688.9 L438.6,687.4 L441.0,687.0 Z" fill="#c5c6bf" opacity="0.95"/>
<ellipse cx="479.1" cy="640.9" rx="5.8" ry="1.8" fill="#4e5a3a" opacity="0.6"/>
<path d="M484.7,638.9 L480.0,641.4 L475.8,640.9 L473.1,639.0 L475.3,637.3 L482.6,637.3 Z" fill="#aeb0a8" opacity="0.95"/>
<ellipse cx="358.0" cy="595.7" rx="5.9" ry="2.4" fill="#4e5a3a" opacity="0.6"/>
<path d="M362.3,593.9 L359.1,596.7 L355.6,596.2 L352.6,594.2 L356.0,590.2 L360.9,590.5 Z" fill="#b9bab3" opacity="0.95"/>
<ellipse cx="90.4" cy="632.2" rx="3.6" ry="0.8" fill="#4e5a3a" opacity="0.6"/>
<path d="M92.4,631.8 L92.3,632.2 L89.6,632.6 L87.1,632.0 L86.5,631.0 L89.3,630.4 L92.5,630.8 Z" fill="#aeb0a8" opacity="0.95"/>
<ellipse cx="625.6" cy="620.8" rx="7.8" ry="2.0" fill="#4e5a3a" opacity="0.6"/>
<path d="M631.9,619.4 L630.6,620.5 L623.5,621.9 L621.0,620.8 L619.7,618.6 L619.9,617.4 L625.8,616.9 L629.5,617.8 Z" fill="#aeb0a8" opacity="0.95"/>
<ellipse cx="164.2" cy="545.3" rx="3.2" ry="0.9" fill="#4e5a3a" opacity="0.6"/>
<path d="M166.7,544.6 L166.5,545.4 L163.3,545.7 L161.0,544.9 L160.6,544.1 L163.5,543.1 L165.2,543.7 Z" fill="#aeb0a8" opacity="0.95"/>
<ellipse cx="482.6" cy="559.2" rx="2.5" ry="0.9" fill="#4e5a3a" opacity="0.6"/>
<path d="M483.9,558.2 L483.8,558.8 L482.0,559.7 L481.4,559.3 L479.9,558.7 L479.7,557.7 L480.8,557.0 L482.0,557.2 L483.6,557.4 Z" fill="#a0a39a" opacity="0.95"/>
<ellipse cx="356.2" cy="678.5" rx="3.6" ry="1.2" fill="#4e5a3a" opacity="0.6"/>
<path d="M359.3,677.0 L357.9,678.1 L356.7,678.9 L354.8,679.2 L353.4,678.0 L352.0,676.7 L353.7,676.6 L355.5,676.0 L357.5,676.7 Z" fill="#b9bab3" opacity="0.95"/>
<ellipse cx="224.5" cy="560.9" rx="2.5" ry="1.1" fill="#4e5a3a" opacity="0.6"/>
<path d="M225.7,560.2 L224.6,561.3 L223.2,561.2 L221.4,559.8 L222.6,558.9 L225.3,559.2 Z" fill="#a0a39a" opacity="0.95"/>
<ellipse cx="380.9" cy="548.9" rx="3.0" ry="1.3" fill="#4e5a3a" opacity="0.6"/>
<path d="M383.1,548.1 L381.2,549.5 L378.4,549.4 L378.2,548.1 L379.0,545.8 L382.6,546.1 Z" fill="#a0a39a" opacity="0.95"/>
<ellipse cx="121.3" cy="525.2" rx="2.9" ry="1.0" fill="#4e5a3a" opacity="0.6"/>
<path d="M124.0,524.8 L122.3,525.2 L122.1,525.5 L119.4,525.7 L118.2,525.2 L118.0,524.0 L119.8,522.9 L121.9,522.6 L122.7,522.9 Z" fill="#b9bab3" opacity="0.95"/>
<ellipse cx="392.8" cy="713.0" rx="4.0" ry="1.7" fill="#4e5a3a" opacity="0.6"/>
<path d="M396.4,712.0 L394.9,713.6 L392.8,713.8 L389.4,712.9 L389.4,712.1 L390.2,710.0 L391.6,708.9 L394.3,709.3 Z" fill="#b9bab3" opacity="0.95"/>
<ellipse cx="248.4" cy="455.6" rx="3.5" ry="1.7" fill="#4e5a3a" opacity="0.6"/>
<path d="M251.1,454.7 L249.3,456.3 L246.6,456.0 L245.3,454.6 L247.1,451.5 L249.0,451.3 Z" fill="#a0a39a" opacity="0.95"/>
<ellipse cx="493.0" cy="622.4" rx="6.0" ry="1.7" fill="#4e5a3a" opacity="0.6"/>
<path d="M498.0,621.6 L494.3,622.6 L489.7,623.3 L488.8,622.1 L487.9,620.0 L491.8,619.0 L494.3,619.1 Z" fill="#b9bab3" opacity="0.95"/>
<ellipse cx="655.4" cy="638.4" rx="7.4" ry="2.1" fill="#4e5a3a" opacity="0.6"/>
<path d="M660.8,636.2 L659.6,638.2 L654.5,639.0 L646.9,637.5 L649.3,635.2 L651.8,634.1 L657.8,633.8 Z" fill="#b9bab3" opacity="0.95"/>
<ellipse cx="218.8" cy="542.5" rx="7.0" ry="1.7" fill="#4e5a3a" opacity="0.6"/>
<path d="M224.2,541.3 L222.8,543.2 L216.7,542.8 L212.7,540.6 L216.8,538.9 L219.9,538.9 Z" fill="#aeb0a8" opacity="0.95"/>
<ellipse cx="387.4" cy="551.2" rx="4.4" ry="1.8" fill="#4e5a3a" opacity="0.6"/>
<path d="M391.9,549.4 L389.8,551.3 L386.7,551.6 L385.3,552.3 L383.1,551.1 L383.7,549.3 L385.8,546.8 L387.2,547.4 L390.8,548.1 Z" fill="#c5c6bf" opacity="0.95"/>
<ellipse cx="298.0" cy="558.6" rx="4.2" ry="1.6" fill="#4e5a3a" opacity="0.6"/>
<path d="M302.1,557.6 L301.4,558.8 L298.0,559.3 L296.7,558.9 L293.9,557.8 L293.5,556.4 L295.3,555.0 L296.9,554.5 L300.2,555.6 Z" fill="#c5c6bf" opacity="0.95"/>
<ellipse cx="503.1" cy="638.2" rx="2.9" ry="0.8" fill="#4e5a3a" opacity="0.6"/>
<path d="M505.2,637.6 L504.3,638.2 L502.7,638.4 L500.4,637.9 L500.6,637.1 L501.6,636.2 L504.2,636.3 Z" fill="#b9bab3" opacity="0.95"/>
<ellipse cx="369.2" cy="523.5" rx="4.0" ry="1.4" fill="#4e5a3a" opacity="0.6"/>
<path d="M372.6,522.8 L369.8,523.8 L365.8,523.9 L364.7,522.3 L366.5,521.0 L371.0,520.8 Z" fill="#aeb0a8" opacity="0.95"/>
<ellipse cx="581.3" cy="621.7" rx="7.1" ry="2.6" fill="#4e5a3a" opacity="0.6"/>
<path d="M586.0,618.9 L582.9,621.9 L578.5,623.2 L574.4,620.9 L574.5,617.3 L579.0,616.8 L584.5,616.2 Z" fill="#aeb0a8" opacity="0.95"/>
<ellipse cx="263.4" cy="574.6" rx="5.9" ry="1.2" fill="#4e5a3a" opacity="0.6"/>
<path d="M266.9,573.3 L266.7,574.4 L264.9,574.7 L259.3,574.7 L257.6,574.0 L256.1,573.4 L261.5,571.9 L265.5,571.9 L266.1,572.6 Z" fill="#aeb0a8" opacity="0.95"/>
<ellipse cx="48.4" cy="505.7" rx="2.4" ry="0.8" fill="#4e5a3a" opacity="0.6"/>
<path d="M50.1,505.4 L49.3,505.9 L48.0,506.0 L45.9,505.6 L46.0,504.3 L47.0,503.7 L49.1,504.4 Z" fill="#c5c6bf" opacity="0.95"/>
<ellipse cx="499.9" cy="604.2" rx="4.6" ry="1.8" fill="#4e5a3a" opacity="0.6"/>
<path d="M504.5,603.3 L502.4,604.4 L497.8,604.8 L495.2,603.7 L495.5,600.9 L498.4,600.0 L501.8,601.4 Z" fill="#b9bab3" opacity="0.95"/>
<ellipse cx="365.6" cy="588.9" rx="5.1" ry="1.6" fill="#4e5a3a" opacity="0.6"/>
<path d="M369.7,587.5 L368.0,588.8 L363.7,589.7 L362.9,589.2 L361.0,587.1 L360.4,586.0 L366.0,585.6 L368.1,585.2 Z" fill="#a0a39a" opacity="0.95"/>
<ellipse cx="322.4" cy="537.2" rx="4.0" ry="1.5" fill="#4e5a3a" opacity="0.6"/>
<path d="M326.4,536.5 L324.8,536.9 L322.5,537.5 L321.0,537.9 L318.3,536.4 L318.3,535.8 L319.2,534.4 L321.6,534.1 L324.0,534.2 Z" fill="#b9bab3" opacity="0.95"/>
<ellipse cx="426.0" cy="610.9" rx="4.0" ry="1.4" fill="#4e5a3a" opacity="0.6"/>
<path d="M429.0,609.5 L427.7,610.9 L426.1,611.5 L424.4,611.6 L421.6,610.2 L421.6,608.8 L422.7,608.4 L425.6,608.2 L427.9,608.7 Z" fill="#c5c6bf" opacity="0.95"/>
<ellipse cx="321.8" cy="601.6" rx="3.6" ry="0.7" fill="#4e5a3a" opacity="0.6"/>
<path d="M324.1,600.9 L322.9,601.6 L320.6,601.9 L318.6,601.3 L319.1,600.6 L320.7,600.1 L323.2,600.2 Z" fill="#c5c6bf" opacity="0.95"/>
<ellipse cx="321.9" cy="555.0" rx="4.7" ry="2.1" fill="#4e5a3a" opacity="0.6"/>
<path d="M326.5,553.6 L323.1,555.6 L320.8,555.6 L317.4,555.1 L317.5,552.5 L321.4,550.3 L323.2,550.5 Z" fill="#b9bab3" opacity="0.95"/>
<ellipse cx="288.3" cy="539.4" rx="5.8" ry="1.7" fill="#4e5a3a" opacity="0.6"/>
<path d="M292.8,538.6 L290.8,539.3 L287.4,539.7 L284.8,539.7 L284.1,539.1 L283.5,537.6 L284.5,535.5 L289.8,535.4 L291.2,536.8 Z" fill="#b9bab3" opacity="0.95"/>
<ellipse cx="77.3" cy="521.7" rx="3.6" ry="1.2" fill="#4e5a3a" opacity="0.6"/>
<path d="M80.8,520.3 L79.6,521.5 L78.4,522.2 L75.7,521.9 L74.2,521.5 L72.9,520.4 L75.0,519.1 L78.3,518.8 L78.7,519.2 Z" fill="#c5c6bf" opacity="0.95"/>
<ellipse cx="393.1" cy="552.5" rx="3.9" ry="1.3" fill="#4e5a3a" opacity="0.6"/>
<path d="M396.8,550.8 L394.7,552.8 L392.8,553.3 L389.8,552.1 L389.5,550.4 L391.4,549.9 L395.8,550.0 Z" fill="#a0a39a" opacity="0.95"/>
<ellipse cx="487.7" cy="531.0" rx="6.2" ry="1.8" fill="#4e5a3a" opacity="0.6"/>
<path d="M493.5,529.0 L491.7,530.7 L488.6,532.1 L481.8,531.0 L482.7,529.2 L481.3,528.2 L488.0,527.3 L491.0,528.1 Z" fill="#aeb0a8" opacity="0.95"/>
<ellipse cx="631.7" cy="591.8" rx="3.6" ry="1.4" fill="#4e5a3a" opacity="0.6"/>
<path d="M634.2,590.3 L633.2,592.0 L631.7,592.1 L628.9,592.3 L628.2,590.8 L628.9,589.7 L629.4,589.0 L631.0,588.3 L634.3,589.1 Z" fill="#aeb0a8" opacity="0.95"/>
<ellipse cx="56.0" cy="553.3" rx="6.4" ry="1.6" fill="#4e5a3a" opacity="0.6"/>
<path d="M60.8,551.8 L60.9,553.7 L53.9,554.0 L51.5,553.0 L49.0,551.1 L53.4,550.0 L58.2,549.6 Z" fill="#c5c6bf" opacity="0.95"/>
<ellipse cx="308.2" cy="544.2" rx="4.1" ry="1.8" fill="#4e5a3a" opacity="0.6"/>
<path d="M311.6,542.2 L309.0,545.4 L306.9,544.7 L304.0,542.9 L306.6,539.9 L309.5,540.9 Z" fill="#a0a39a" opacity="0.95"/>
<ellipse cx="564.6" cy="597.1" rx="3.9" ry="1.3" fill="#4e5a3a" opacity="0.6"/>
<path d="M567.7,596.4 L566.8,597.1 L563.4,597.3 L560.7,596.7 L560.7,595.1 L563.9,594.6 L565.8,594.7 Z" fill="#c5c6bf" opacity="0.95"/>
<ellipse cx="475.5" cy="619.5" rx="8.0" ry="2.5" fill="#4e5a3a" opacity="0.6"/>
<path d="M483.9,617.0 L480.9,619.6 L474.7,620.0 L468.1,619.3 L469.8,615.9 L472.2,613.2 L480.7,614.3 Z" fill="#a0a39a" opacity="0.95"/>
<ellipse cx="113.9" cy="500.1" rx="2.7" ry="1.0" fill="#4e5a3a" opacity="0.6"/>
<path d="M115.6,499.5 L115.3,500.3 L113.8,500.6 L112.7,500.2 L111.0,500.1 L111.0,498.3 L112.6,497.9 L113.2,497.5 L115.4,498.4 Z" fill="#b9bab3" opacity="0.95"/>
<ellipse cx="61.0" cy="485.0" rx="4.7" ry="1.6" fill="#4e5a3a" opacity="0.6"/>
<path d="M64.6,483.8 L63.2,485.8 L59.5,485.6 L56.4,484.2 L56.8,483.5 L58.6,481.7 L63.3,482.2 Z" fill="#aeb0a8" opacity="0.95"/>
<ellipse cx="197.8" cy="515.6" rx="3.6" ry="1.5" fill="#4e5a3a" opacity="0.6"/>
<path d="M200.8,514.2 L198.9,516.4 L195.9,515.7 L194.0,515.0 L196.5,512.6 L199.6,512.5 Z" fill="#b9bab3" opacity="0.95"/>
<ellipse cx="696.2" cy="648.9" rx="2.7" ry="0.8" fill="#4e5a3a" opacity="0.6"/>
<path d="M697.8,648.3 L697.1,648.9 L696.2,649.4 L693.7,648.8 L693.2,648.3 L694.0,647.4 L696.6,646.8 L697.3,647.6 Z" fill="#b9bab3" opacity="0.95"/>
<ellipse cx="407.6" cy="510.1" rx="7.3" ry="2.2" fill="#4e5a3a" opacity="0.6"/>
<path d="M412.8,508.8 L411.5,510.7 L407.3,510.5 L400.7,509.6 L401.1,507.6 L407.4,504.8 L410.4,505.3 Z" fill="#c5c6bf" opacity="0.95"/>
<ellipse cx="560.4" cy="642.0" rx="4.5" ry="1.4" fill="#4e5a3a" opacity="0.6"/>
<path d="M563.2,641.1 L563.6,642.1 L557.8,642.7 L556.8,641.3 L556.9,640.3 L559.7,639.0 L562.6,639.3 Z" fill="#aeb0a8" opacity="0.95"/>
<ellipse cx="301.2" cy="464.5" rx="4.9" ry="1.4" fill="#4e5a3a" opacity="0.6"/>
<path d="M304.6,463.9 L304.1,464.5 L301.9,465.3 L298.2,465.0 L295.6,464.1 L297.2,462.5 L299.5,461.2 L302.4,461.4 L303.4,462.4 Z" fill="#b9bab3" opacity="0.95"/>
<ellipse cx="615.6" cy="564.7" rx="2.3" ry="1.0" fill="#4e5a3a" opacity="0.6"/>
<path d="M617.2,563.5 L616.8,564.8 L615.4,564.8 L614.1,565.0 L613.4,563.8 L613.8,562.8 L615.4,562.6 L616.1,562.7 Z" fill="#b9bab3" opacity="0.95"/>
<ellipse cx="265.8" cy="517.1" rx="5.6" ry="1.8" fill="#4e5a3a" opacity="0.6"/>
<path d="M270.4,515.8 L268.5,517.8 L262.2,517.3 L259.7,516.0 L263.6,513.3 L267.8,512.9 Z" fill="#b9bab3" opacity="0.95"/>
<ellipse cx="372.1" cy="587.0" rx="5.5" ry="1.7" fill="#4e5a3a" opacity="0.6"/>
<path d="M376.7,585.2 L375.1,587.2 L371.1,587.3 L366.5,587.0 L366.0,584.3 L369.5,583.8 L374.9,584.4 Z" fill="#aeb0a8" opacity="0.95"/>
<ellipse cx="153.1" cy="529.5" rx="4.6" ry="1.7" fill="#4e5a3a" opacity="0.6"/>
<path d="M157.5,528.6 L154.6,529.8 L152.4,530.2 L148.7,529.0 L149.0,526.4 L152.7,526.2 L155.8,526.9 Z" fill="#a0a39a" opacity="0.95"/>
<ellipse cx="116.0" cy="639.0" rx="7.1" ry="2.1" fill="#4e5a3a" opacity="0.6"/>
<path d="M121.5,637.4 L119.1,639.4 L113.1,639.5 L107.8,637.5 L113.0,634.1 L119.4,634.2 Z" fill="#b9bab3" opacity="0.95"/>
<ellipse cx="54.1" cy="467.1" rx="4.9" ry="1.2" fill="#4e5a3a" opacity="0.6"/>
<path d="M57.8,466.3 L57.3,467.4 L52.1,467.2 L49.8,467.0 L49.7,465.6 L52.7,464.1 L56.9,465.1 Z" fill="#aeb0a8" opacity="0.95"/>
<ellipse cx="100.8" cy="622.9" rx="4.1" ry="1.0" fill="#4e5a3a" opacity="0.6"/>
<path d="M103.6,622.3 L103.7,623.1 L100.0,623.2 L96.4,622.8 L96.6,621.7 L97.4,621.4 L99.7,620.8 L102.6,620.7 Z" fill="#b9bab3" opacity="0.95"/>
<ellipse cx="353.5" cy="552.7" rx="3.3" ry="1.3" fill="#4e5a3a" opacity="0.6"/>
<path d="M355.8,551.2 L355.0,553.0 L352.4,553.0 L350.1,552.2 L349.8,550.4 L353.1,549.9 L354.9,550.5 Z" fill="#c5c6bf" opacity="0.95"/>
<ellipse cx="102.5" cy="528.3" rx="5.4" ry="1.9" fill="#4e5a3a" opacity="0.6"/>
<path d="M107.7,525.9 L106.7,528.4 L101.8,529.1 L98.6,529.0 L97.7,526.1 L98.8,524.4 L100.9,524.2 L104.7,525.2 Z" fill="#b9bab3" opacity="0.95"/>
<ellipse cx="292.3" cy="567.8" rx="4.0" ry="1.2" fill="#4e5a3a" opacity="0.6"/>
<path d="M294.8,567.2 L293.7,568.1 L290.9,568.0 L288.0,567.1 L290.4,565.5 L292.5,565.6 Z" fill="#c5c6bf" opacity="0.95"/>
<ellipse cx="310.3" cy="473.0" rx="3.3" ry="1.0" fill="#4e5a3a" opacity="0.6"/>
<path d="M312.2,472.3 L311.7,473.2 L310.1,473.3 L309.1,473.1 L306.8,472.4 L306.3,471.8 L308.4,471.1 L310.1,470.9 L312.5,471.3 Z" fill="#b9bab3" opacity="0.95"/>
<ellipse cx="647.6" cy="636.3" rx="4.5" ry="1.7" fill="#4e5a3a" opacity="0.6"/>
<path d="M650.8,635.3 L649.2,636.8 L645.4,636.9 L642.9,634.3 L645.3,632.8 L648.9,632.3 Z" fill="#b9bab3" opacity="0.95"/>
<ellipse cx="513.7" cy="630.8" rx="8.1" ry="1.8" fill="#4e5a3a" opacity="0.6"/>
<path d="M520.3,629.5 L518.3,630.9 L514.5,631.4 L506.5,631.1 L503.9,629.4 L508.9,627.6 L513.6,627.0 L518.4,628.4 Z" fill="#b9bab3" opacity="0.95"/>
<ellipse cx="64.8" cy="525.4" rx="5.0" ry="1.0" fill="#4e5a3a" opacity="0.6"/>
<path d="M69.3,524.6 L66.8,525.6 L63.1,525.7 L59.9,525.0 L60.0,524.3 L61.7,522.9 L66.2,523.2 Z" fill="#a0a39a" opacity="0.95"/>
<ellipse cx="176.7" cy="553.6" rx="5.0" ry="2.2" fill="#4e5a3a" opacity="0.6"/>
<path d="M180.5,552.1 L179.3,553.9 L175.8,555.1 L171.8,552.9 L172.4,551.1 L173.5,548.5 L179.8,549.7 Z" fill="#aeb0a8" opacity="0.95"/>
<ellipse cx="636.0" cy="598.1" rx="2.2" ry="0.7" fill="#4e5a3a" opacity="0.6"/>
<path d="M637.3,597.3 L637.3,598.0 L636.0,598.3 L634.5,598.3 L634.0,597.9 L633.2,597.3 L634.2,596.8 L636.1,596.7 L637.4,596.9 Z" fill="#b9bab3" opacity="0.95"/>
<ellipse cx="92.9" cy="608.1" rx="2.5" ry="1.2" fill="#4e5a3a" opacity="0.6"/>
<path d="M94.8,606.8 L94.6,608.3 L92.8,608.7 L90.8,608.2 L90.3,607.1 L91.0,605.6 L92.2,605.6 L94.2,606.0 Z" fill="#aeb0a8" opacity="0.95"/>
<ellipse cx="313.7" cy="500.8" rx="4.2" ry="1.5" fill="#4e5a3a" opacity="0.6"/>
<path d="M316.2,499.8 L316.5,500.6 L314.5,501.6 L309.8,500.7 L308.8,499.4 L310.2,498.7 L313.7,497.1 L316.0,498.5 Z" fill="#a0a39a" opacity="0.95"/>
<ellipse cx="94.7" cy="456.3" rx="4.9" ry="1.4" fill="#4e5a3a" opacity="0.6"/>
<path d="M99.2,455.6 L99.1,456.1 L95.0,456.7 L91.8,456.3 L90.8,455.6 L89.6,454.3 L92.5,453.4 L95.5,453.6 L97.7,453.9 Z" fill="#c5c6bf" opacity="0.95"/>
<ellipse cx="408.8" cy="577.8" rx="2.9" ry="1.0" fill="#4e5a3a" opacity="0.6"/>
<path d="M410.7,577.3 L410.9,577.8 L408.1,577.9 L406.5,578.2 L405.4,577.3 L405.8,576.7 L407.3,575.4 L409.1,575.8 L410.1,576.4 Z" fill="#aeb0a8" opacity="0.95"/>
<ellipse cx="228.7" cy="503.3" rx="4.4" ry="1.2" fill="#4e5a3a" opacity="0.6"/>
<path d="M233.1,502.0 L231.5,503.5 L229.0,503.7 L224.8,503.5 L224.2,502.6 L224.4,502.0 L226.4,500.9 L229.8,500.8 L232.0,501.3 Z" fill="#a0a39a" opacity="0.95"/>
<ellipse cx="386.9" cy="599.0" rx="4.3" ry="1.3" fill="#4e5a3a" opacity="0.6"/>
<path d="M391.0,597.3 L390.4,598.9 L385.6,599.5 L383.1,599.0 L383.3,598.2 L384.6,596.6 L385.5,595.9 L388.9,596.6 Z" fill="#a0a39a" opacity="0.95"/>
<ellipse cx="173.8" cy="550.9" rx="3.7" ry="1.6" fill="#4e5a3a" opacity="0.6"/>
<path d="M177.1,550.2 L175.6,551.2 L173.0,551.3 L170.4,550.9 L170.4,549.0 L172.9,546.8 L175.1,547.0 Z" fill="#c5c6bf" opacity="0.95"/>
<ellipse cx="639.2" cy="594.3" rx="5.6" ry="1.7" fill="#4e5a3a" opacity="0.6"/>
<path d="M644.7,592.2 L643.3,594.2 L641.2,595.1 L637.4,594.5 L633.7,594.0 L634.5,592.1 L636.6,591.4 L638.6,591.0 L642.7,592.1 Z" fill="#b9bab3" opacity="0.95"/>
<ellipse cx="48.4" cy="550.3" rx="3.1" ry="0.9" fill="#4e5a3a" opacity="0.6"/>
<path d="M50.6,549.5 L49.9,550.2 L47.1,550.4 L45.6,550.0 L45.8,549.0 L47.2,548.2 L49.8,548.9 Z" fill="#c5c6bf" opacity="0.95"/>
<ellipse cx="274.3" cy="577.7" rx="3.3" ry="1.2" fill="#4e5a3a" opacity="0.6"/>
<path d="M276.2,576.5 L276.0,577.9 L274.5,578.2 L271.2,577.5 L271.0,576.9 L271.4,575.2 L274.0,575.2 L276.3,575.7 Z" fill="#a0a39a" opacity="0.95"/>
<ellipse cx="242.1" cy="525.6" rx="6.3" ry="1.3" fill="#4e5a3a" opacity="0.6"/>
<path d="M246.9,524.7 L245.7,525.6 L239.2,525.6 L236.2,524.6 L240.1,522.4 L243.9,522.5 Z" fill="#a0a39a" opacity="0.95"/>
<ellipse cx="133.5" cy="529.4" rx="3.8" ry="1.1" fill="#4e5a3a" opacity="0.6"/>
<path d="M136.9,528.2 L134.9,529.8 L131.8,529.5 L129.1,529.0 L130.0,528.0 L133.2,526.8 L135.2,527.9 Z" fill="#a0a39a" opacity="0.95"/>
<ellipse cx="218.4" cy="514.4" rx="5.7" ry="1.7" fill="#4e5a3a" opacity="0.6"/>
<path d="M222.6,513.3 L219.9,514.5 L217.8,514.9 L213.6,513.9 L213.1,512.2 L215.7,510.7 L219.9,510.8 Z" fill="#b9bab3" opacity="0.95"/>
<ellipse cx="384.4" cy="574.0" rx="4.6" ry="1.4" fill="#4e5a3a" opacity="0.6"/>
<path d="M387.6,572.9 L387.5,574.0 L383.9,574.7 L380.6,573.9 L380.0,571.8 L382.4,570.9 L387.7,571.5 Z" fill="#a0a39a" opacity="0.95"/>
<ellipse cx="176.3" cy="554.9" rx="5.7" ry="1.3" fill="#4e5a3a" opacity="0.6"/>
<path d="M182.1,553.9 L180.1,555.0 L173.1,555.3 L170.4,554.9 L171.1,553.3 L174.7,552.2 L179.9,552.7 Z" fill="#b9bab3" opacity="0.95"/>
<ellipse cx="633.8" cy="633.5" rx="3.2" ry="0.8" fill="#4e5a3a" opacity="0.6"/>
<path d="M635.8,633.0 L634.9,633.6 L633.9,633.7 L631.6,633.8 L630.0,633.2 L631.4,632.4 L633.6,631.7 L635.2,632.2 Z" fill="#a0a39a" opacity="0.95"/>
<ellipse cx="290.3" cy="500.8" rx="2.7" ry="1.1" fill="#4e5a3a" opacity="0.6"/>
<path d="M292.7,499.9 L291.5,501.1 L288.7,500.9 L286.7,499.8 L288.2,498.9 L290.5,498.9 Z" fill="#a0a39a" opacity="0.95"/>
<ellipse cx="337.0" cy="482.2" rx="2.9" ry="0.7" fill="#4e5a3a" opacity="0.6"/>
<path d="M338.9,481.5 L338.5,482.3 L335.7,482.6 L333.5,481.9 L335.5,480.5 L338.4,480.9 Z" fill="#b9bab3" opacity="0.95"/>
<ellipse cx="239.8" cy="643.3" rx="9.0" ry="2.4" fill="#4e5a3a" opacity="0.6"/>
<path d="M247.5,641.7 L244.9,643.1 L234.4,644.3 L231.5,642.4 L229.9,639.6 L235.5,637.6 L242.8,638.4 Z" fill="#b9bab3" opacity="0.95"/>
<ellipse cx="304.8" cy="594.2" rx="3.5" ry="1.4" fill="#4e5a3a" opacity="0.6"/>
<path d="M308.1,592.7 L306.7,593.8 L305.3,594.9 L302.1,594.8 L300.7,593.5 L301.1,592.1 L302.4,590.9 L305.3,591.1 L306.9,591.9 Z" fill="#c5c6bf" opacity="0.95"/>
<ellipse cx="470.3" cy="580.2" rx="2.2" ry="0.8" fill="#4e5a3a" opacity="0.6"/>
<path d="M472.3,579.2 L470.6,580.4 L469.0,580.3 L468.1,579.3 L468.5,578.6 L470.4,578.4 Z" fill="#aeb0a8" opacity="0.95"/>
<ellipse cx="396.6" cy="597.5" rx="6.7" ry="1.5" fill="#4e5a3a" opacity="0.6"/>
<path d="M401.3,596.8 L400.1,598.0 L396.3,598.0 L391.4,597.7 L391.4,596.4 L391.3,594.5 L396.2,594.5 L400.1,593.9 Z" fill="#aeb0a8" opacity="0.95"/>
<ellipse cx="582.6" cy="760.4" rx="2.9" ry="0.9" fill="#4e5a3a" opacity="0.6"/>
<path d="M584.9,759.8 L584.5,760.5 L582.7,761.0 L580.9,760.7 L579.3,759.8 L580.2,759.4 L580.9,758.7 L582.4,758.7 L584.0,758.9 Z" fill="#c5c6bf" opacity="0.95"/>
<ellipse cx="435.7" cy="628.3" rx="3.0" ry="1.5" fill="#4e5a3a" opacity="0.6"/>
<path d="M437.6,626.6 L436.7,628.5 L435.7,628.7 L433.4,628.5 L432.1,627.9 L433.1,626.9 L434.3,624.6 L436.2,624.6 L436.9,625.9 Z" fill="#aeb0a8" opacity="0.95"/>
<ellipse cx="698.3" cy="658.4" rx="8.9" ry="2.2" fill="#4e5a3a" opacity="0.6"/>
<path d="M706.9,655.6 L701.0,659.6 L693.9,659.3 L689.0,657.1 L695.5,653.7 L702.6,654.7 Z" fill="#a0a39a" opacity="0.95"/>
<ellipse cx="407.7" cy="564.5" rx="3.8" ry="1.2" fill="#4e5a3a" opacity="0.6"/>
<path d="M411.1,563.8 L409.2,564.4 L408.6,565.1 L405.2,564.3 L404.3,564.2 L403.4,563.4 L406.2,561.8 L406.9,561.5 L410.1,562.4 Z" fill="#aeb0a8" opacity="0.95"/>
<ellipse cx="227.9" cy="509.0" rx="5.0" ry="1.3" fill="#4e5a3a" opacity="0.6"/>
<path d="M232.2,508.2 L231.4,508.9 L228.6,509.4 L224.1,509.1 L223.5,508.8 L222.3,507.7 L224.1,506.5 L228.0,506.3 L231.9,506.6 Z" fill="#aeb0a8" opacity="0.95"/>
<ellipse cx="462.9" cy="631.9" rx="7.3" ry="1.4" fill="#4e5a3a" opacity="0.6"/>
<path d="M469.6,630.4 L466.5,632.0 L463.5,632.2 L455.7,631.9 L455.7,630.5 L458.3,628.5 L462.7,628.5 L465.6,629.5 Z" fill="#a0a39a" opacity="0.95"/>
<ellipse cx="242.1" cy="547.3" rx="5.2" ry="1.7" fill="#4e5a3a" opacity="0.6"/>
<path d="M246.1,545.7 L245.8,547.1 L242.0,547.5 L238.9,547.6 L237.6,545.5 L239.0,544.0 L241.2,543.7 L244.7,544.5 Z" fill="#aeb0a8" opacity="0.95"/>
<ellipse cx="537.9" cy="541.4" rx="3.8" ry="1.5" fill="#4e5a3a" opacity="0.6"/>
<path d="M540.5,540.0 L538.5,541.5 L536.0,541.7 L534.3,541.0 L534.0,539.7 L536.8,538.6 L539.2,538.9 Z" fill="#b9bab3" opacity="0.95"/>
<ellipse cx="247.5" cy="542.7" rx="2.4" ry="1.0" fill="#4e5a3a" opacity="0.6"/>
<path d="M249.0,542.0 L247.7,543.0 L245.8,543.2 L244.7,541.8 L246.3,540.9 L248.4,540.4 Z" fill="#b9bab3" opacity="0.95"/>
<ellipse cx="360.6" cy="586.1" rx="3.4" ry="1.3" fill="#4e5a3a" opacity="0.6"/>
<path d="M363.3,584.6 L362.7,586.0 L360.0,586.5 L358.3,586.6 L357.1,585.6 L356.6,584.1 L358.0,583.8 L361.0,583.7 L362.6,584.2 Z" fill="#aeb0a8" opacity="0.95"/>
<ellipse cx="522.0" cy="618.1" rx="4.1" ry="1.2" fill="#4e5a3a" opacity="0.6"/>
<path d="M525.0,617.1 L523.4,618.2 L522.5,618.8 L519.1,618.4 L517.7,618.0 L517.0,616.6 L519.4,615.8 L522.0,615.1 L524.9,616.2 Z" fill="#b9bab3" opacity="0.95"/>
<ellipse cx="529.0" cy="599.0" rx="5.4" ry="1.7" fill="#4e5a3a" opacity="0.6"/>
<path d="M534.3,598.2 L533.4,599.2 L528.5,599.5 L525.7,599.0 L525.1,598.5 L525.1,596.7 L525.8,596.1 L529.1,595.3 L531.3,596.4 Z" fill="#c5c6bf" opacity="0.95"/>
<ellipse cx="624.2" cy="618.4" rx="4.2" ry="1.4" fill="#4e5a3a" opacity="0.6"/>
<path d="M626.7,617.0 L626.5,618.8 L623.2,618.8 L621.8,618.7 L620.4,617.0 L621.4,615.8 L624.4,615.7 L626.3,616.0 Z" fill="#b9bab3" opacity="0.95"/>
<ellipse cx="314.7" cy="668.9" rx="6.8" ry="1.8" fill="#4e5a3a" opacity="0.6"/>
<path d="M321.7,668.2 L319.1,669.0 L313.7,669.2 L310.2,669.2 L308.2,667.0 L310.5,665.3 L315.7,664.4 L318.0,665.6 Z" fill="#b9bab3" opacity="0.95"/>
<ellipse cx="202.2" cy="541.0" rx="5.1" ry="1.1" fill="#4e5a3a" opacity="0.6"/>
<path d="M206.9,540.5 L205.4,540.9 L202.0,541.4 L198.8,541.5 L196.2,540.1 L199.4,539.1 L201.4,538.8 L205.0,538.7 Z" fill="#b9bab3" opacity="0.95"/>
<ellipse cx="48.9" cy="547.6" rx="2.6" ry="0.7" fill="#4e5a3a" opacity="0.6"/>
<path d="M51.1,546.7 L50.4,547.7 L47.5,547.8 L46.2,547.3 L45.9,546.8 L48.1,546.3 L49.7,546.4 Z" fill="#a0a39a" opacity="0.95"/>
<ellipse cx="180.4" cy="535.6" rx="6.2" ry="2.0" fill="#4e5a3a" opacity="0.6"/>
<path d="M186.1,533.4 L184.8,535.2 L182.0,536.0 L176.2,535.5 L174.7,534.8 L173.8,533.9 L176.8,531.3 L181.8,532.1 L183.6,532.8 Z" fill="#c5c6bf" opacity="0.95"/>
<ellipse cx="600.1" cy="752.2" rx="6.9" ry="1.9" fill="#4e5a3a" opacity="0.6"/>
<path d="M605.8,750.8 L602.9,752.2 L599.1,752.6 L593.3,751.9 L594.5,750.6 L595.2,748.7 L600.6,747.8 L601.9,748.9 Z" fill="#c5c6bf" opacity="0.95"/>
<ellipse cx="501.8" cy="714.2" rx="7.3" ry="1.9" fill="#4e5a3a" opacity="0.6"/>
<path d="M507.2,712.3 L506.2,714.0 L502.0,715.4 L496.6,714.6 L494.4,713.6 L494.1,712.2 L495.9,710.3 L503.8,709.9 L506.7,710.9 Z" fill="#a0a39a" opacity="0.95"/>
<ellipse cx="518.1" cy="637.2" rx="3.9" ry="1.2" fill="#4e5a3a" opacity="0.6"/>
<path d="M520.4,636.1 L519.9,637.7 L517.1,637.4 L515.4,637.4 L513.4,636.2 L514.0,635.3 L516.9,634.3 L521.0,635.2 Z" fill="#b9bab3" opacity="0.95"/>
<ellipse cx="171.1" cy="529.8" rx="5.9" ry="1.4" fill="#4e5a3a" opacity="0.6"/>
<path d="M177.2,528.9 L172.1,530.3 L168.7,529.9 L166.1,529.0 L167.7,526.8 L172.2,526.6 Z" fill="#c5c6bf" opacity="0.95"/>
<ellipse cx="73.9" cy="527.9" rx="3.3" ry="0.8" fill="#4e5a3a" opacity="0.6"/>
<path d="M76.5,527.2 L74.6,528.0 L72.7,528.1 L71.0,527.1 L70.8,526.3 L74.4,526.5 Z" fill="#a0a39a" opacity="0.95"/>
<ellipse cx="90.4" cy="528.6" rx="6.0" ry="1.6" fill="#4e5a3a" opacity="0.6"/>
<path d="M96.1,527.6 L94.8,528.6 L90.2,529.0 L84.5,528.3 L84.3,525.8 L88.6,525.2 L91.7,525.5 Z" fill="#c5c6bf" opacity="0.95"/>
<ellipse cx="262.3" cy="556.3" rx="3.8" ry="1.3" fill="#4e5a3a" opacity="0.6"/>
<path d="M265.7,554.7 L265.1,556.2 L262.7,556.9 L259.9,556.2 L258.9,556.1 L259.2,555.2 L260.3,554.0 L263.5,553.3 L263.8,553.6 Z" fill="#c5c6bf" opacity="0.95"/>
<ellipse cx="92.0" cy="498.8" rx="2.3" ry="0.9" fill="#4e5a3a" opacity="0.6"/>
<path d="M93.8,497.7 L92.4,498.9 L90.9,499.1 L89.5,498.1 L90.5,496.8 L92.0,496.9 Z" fill="#b9bab3" opacity="0.95"/>
<ellipse cx="292.5" cy="653.9" rx="8.0" ry="2.2" fill="#4e5a3a" opacity="0.6"/>
<path d="M298.0,652.3 L299.1,653.5 L293.8,654.4 L288.3,653.9 L286.1,652.6 L286.0,650.1 L291.7,649.3 L297.4,650.4 Z" fill="#a0a39a" opacity="0.95"/>
<ellipse cx="213.1" cy="560.9" rx="4.1" ry="1.2" fill="#4e5a3a" opacity="0.6"/>
<path d="M216.3,559.7 L214.6,561.1 L211.6,561.2 L209.5,560.7 L208.9,560.0 L210.4,558.8 L212.7,558.2 L214.7,559.0 Z" fill="#b9bab3" opacity="0.95"/>
<ellipse cx="192.0" cy="658.2" rx="7.5" ry="2.1" fill="#4e5a3a" opacity="0.6"/>
<path d="M199.7,656.7 L197.0,658.1 L191.0,658.6 L183.7,657.1 L183.9,655.5 L189.2,654.1 L195.8,653.2 Z" fill="#a0a39a" opacity="0.95"/>
<ellipse cx="520.0" cy="725.5" rx="6.1" ry="2.4" fill="#4e5a3a" opacity="0.6"/>
<path d="M526.4,723.2 L520.8,726.3 L517.9,726.6 L514.3,723.1 L515.3,720.5 L521.0,721.1 Z" fill="#a0a39a" opacity="0.95"/>
<ellipse cx="257.0" cy="652.2" rx="4.8" ry="1.6" fill="#4e5a3a" opacity="0.6"/>
<path d="M261.6,651.1 L258.0,652.5 L255.0,653.1 L252.8,650.7 L254.5,649.0 L258.0,649.3 Z" fill="#c5c6bf" opacity="0.95"/>
<ellipse cx="210.8" cy="522.8" rx="2.3" ry="0.8" fill="#4e5a3a" opacity="0.6"/>
<path d="M212.2,522.2 L211.3,523.1 L210.0,523.2 L208.8,522.5 L208.8,521.4 L209.9,520.7 L211.5,521.5 Z" fill="#c5c6bf" opacity="0.95"/>
<ellipse cx="423.5" cy="702.4" rx="5.5" ry="1.3" fill="#4e5a3a" opacity="0.6"/>
<path d="M429.1,701.7 L424.6,702.6 L419.9,703.1 L419.6,701.9 L419.3,700.5 L420.6,699.6 L426.2,700.4 Z" fill="#c5c6bf" opacity="0.95"/>
<ellipse cx="659.8" cy="578.2" rx="3.2" ry="1.0" fill="#4e5a3a" opacity="0.6"/>
<path d="M662.8,577.3 L660.2,578.7 L657.1,578.2 L656.8,577.5 L657.2,576.2 L661.8,576.0 Z" fill="#c5c6bf" opacity="0.95"/>
<ellipse cx="373.5" cy="618.8" rx="5.0" ry="1.6" fill="#4e5a3a" opacity="0.6"/>
<path d="M377.9,618.2 L375.7,618.9 L370.7,619.3 L369.6,618.1 L368.8,616.6 L373.0,615.6 L376.4,615.8 Z" fill="#b9bab3" opacity="0.95"/>
<ellipse cx="364.7" cy="702.5" rx="6.4" ry="2.2" fill="#4e5a3a" opacity="0.6"/>
<path d="M369.3,701.1 L367.4,703.3 L362.9,703.1 L361.1,703.3 L357.5,700.0 L361.7,698.5 L363.8,696.8 L369.7,698.2 Z" fill="#a0a39a" opacity="0.95"/>
<ellipse cx="322.1" cy="574.0" rx="5.7" ry="1.5" fill="#4e5a3a" opacity="0.6"/>
<path d="M327.3,573.3 L325.3,574.1 L321.8,574.5 L317.4,573.7 L318.3,571.8 L320.3,570.9 L324.8,570.8 Z" fill="#a0a39a" opacity="0.95"/>
<ellipse cx="348.6" cy="602.9" rx="4.2" ry="1.2" fill="#4e5a3a" opacity="0.6"/>
<path d="M351.1,602.2 L350.1,603.1 L347.3,603.1 L343.5,601.3 L346.9,599.8 L351.1,600.4 Z" fill="#b9bab3" opacity="0.95"/>
<ellipse cx="672.3" cy="637.5" rx="4.9" ry="1.2" fill="#4e5a3a" opacity="0.6"/>
<path d="M676.3,636.6 L676.1,637.4 L671.5,637.9 L669.0,637.9 L666.5,636.1 L668.4,635.2 L673.1,634.6 L675.3,635.9 Z" fill="#aeb0a8" opacity="0.95"/>
<ellipse cx="102.9" cy="522.6" rx="3.2" ry="1.0" fill="#4e5a3a" opacity="0.6"/>
<path d="M105.4,521.7 L104.9,522.8 L102.3,523.0 L100.1,522.9 L100.2,521.8 L100.6,520.1 L102.8,520.3 L104.3,521.0 Z" fill="#aeb0a8" opacity="0.95"/>
<ellipse cx="188.2" cy="559.1" rx="5.2" ry="1.5" fill="#4e5a3a" opacity="0.6"/>
<path d="M192.4,558.1 L190.2,559.2 L187.6,559.5 L183.9,559.2 L184.1,558.5 L184.1,557.1 L185.0,555.6 L187.9,555.9 L191.5,556.4 Z" fill="#aeb0a8" opacity="0.95"/>
<ellipse cx="165.5" cy="545.0" rx="4.3" ry="1.1" fill="#4e5a3a" opacity="0.6"/>
<path d="M168.7,543.9 L166.2,545.5 L161.9,545.3 L161.5,543.9 L163.0,543.1 L166.3,542.5 Z" fill="#a0a39a" opacity="0.95"/>
<ellipse cx="434.8" cy="725.2" rx="4.3" ry="1.5" fill="#4e5a3a" opacity="0.6"/>
<path d="M438.4,724.4 L436.3,725.2 L433.4,725.6 L431.5,725.2 L430.4,723.7 L433.5,722.3 L437.4,722.8 Z" fill="#c5c6bf" opacity="0.95"/>
<ellipse cx="74.1" cy="633.8" rx="2.7" ry="0.9" fill="#4e5a3a" opacity="0.6"/>
<path d="M76.1,633.4 L74.7,634.1 L72.5,634.1 L70.6,633.4 L72.4,632.2 L75.6,632.0 Z" fill="#aeb0a8" opacity="0.95"/>
<ellipse cx="584.5" cy="584.5" rx="7.3" ry="2.4" fill="#4e5a3a" opacity="0.6"/>
<path d="M592.1,583.1 L590.2,585.0 L583.7,585.2 L577.7,584.5 L577.4,583.2 L577.7,580.5 L585.0,578.9 L587.2,580.4 Z" fill="#c5c6bf" opacity="0.95"/>
<ellipse cx="335.4" cy="677.9" rx="5.1" ry="1.7" fill="#4e5a3a" opacity="0.6"/>
<path d="M339.7,676.0 L337.8,678.0 L333.3,678.9 L331.8,677.7 L329.6,677.0 L331.5,675.1 L334.9,674.3 L337.2,674.7 Z" fill="#a0a39a" opacity="0.95"/>
<ellipse cx="237.2" cy="542.7" rx="7.0" ry="1.5" fill="#4e5a3a" opacity="0.6"/>
<path d="M244.1,541.9 L241.5,542.5 L236.5,543.4 L233.7,543.0 L231.6,542.0 L230.0,541.3 L233.4,539.4 L236.1,539.1 L240.0,539.9 Z" fill="#b9bab3" opacity="0.95"/>
<ellipse cx="467.4" cy="730.6" rx="10.1" ry="2.2" fill="#4e5a3a" opacity="0.6"/>
<path d="M474.2,729.2 L472.8,731.3 L464.8,730.8 L460.0,730.2 L460.4,727.3 L464.4,725.5 L472.6,725.4 Z" fill="#aeb0a8" opacity="0.95"/>
<ellipse cx="458.1" cy="719.7" rx="3.8" ry="1.2" fill="#4e5a3a" opacity="0.6"/>
<path d="M461.7,718.4 L460.1,720.1 L455.3,720.0 L454.3,719.0 L455.4,717.2 L458.7,717.1 Z" fill="#a0a39a" opacity="0.95"/>
<ellipse cx="146.8" cy="459.4" rx="3.0" ry="0.6" fill="#4e5a3a" opacity="0.6"/>
<path d="M148.5,459.0 L147.4,459.6 L145.2,459.7 L143.3,458.8 L145.2,458.3 L147.5,458.0 Z" fill="#aeb0a8" opacity="0.95"/>
<ellipse cx="503.4" cy="627.8" rx="4.7" ry="1.5" fill="#4e5a3a" opacity="0.6"/>
<path d="M507.4,627.0 L505.9,627.8 L500.6,628.6 L498.4,627.0 L498.8,625.9 L502.6,624.8 L505.3,625.4 Z" fill="#c5c6bf" opacity="0.95"/>
<ellipse cx="504.5" cy="740.0" rx="5.0" ry="1.8" fill="#4e5a3a" opacity="0.6"/>
<path d="M507.5,738.6 L505.0,740.5 L501.9,740.5 L499.9,738.9 L500.2,736.3 L506.7,736.6 Z" fill="#b9bab3" opacity="0.95"/>
<ellipse cx="695.7" cy="646.5" rx="5.6" ry="1.6" fill="#4e5a3a" opacity="0.6"/>
<path d="M700.3,645.1 L698.2,646.2 L696.6,647.5 L692.3,646.5 L690.4,645.7 L690.2,643.5 L693.3,642.7 L695.3,642.6 L697.9,643.7 Z" fill="#c5c6bf" opacity="0.95"/>
<g filter="url(#blur1)">
<path d="M279,731 Q281,726 285,727 L301,718.5 Q325,716 347,717.5 Q356,720 357,728 L357,737 Q355,744 350,745 L349,754 L346,754 L344,746 Q335,748 320,749 L316,750 L315.5,762 L312,762 L310,750 L299,750 L298.7,761 L295,761 L294,748 Q288,750 283,750 Q279,745 279,738 Z" fill="#a2622b"/>
<path d="M301,720 Q325,717 347,718.5 Q352,722 350,727 Q325,724 300,727 Z" fill="#b5773a" opacity="0.7"/>
<path d="M294,744 Q320,746 350,741 L349,746 Q330,749 316,750 L294,749 Z" fill="#7d4a20" opacity="0.7"/>
<path d="M279,733 Q281,727 285,727 L287,734 L284,749 Q280,746 279,740 Z" fill="#6e4020" opacity="0.8"/>
<path d="M357,731 Q365,736 372,741" fill="none" stroke="#4a3a22" stroke-width="1.5"/>
</g>
<line x1="262" y1="743" x2="264" y2="860" stroke="#4d4a3c" stroke-width="3" stroke-linecap="round"/>
<line x1="451" y1="738" x2="442" y2="871" stroke="#4d4a3c" stroke-width="3.5" stroke-linecap="round"/>
<line x1="550" y1="785" x2="534" y2="871" stroke="#4d4a3c" stroke-width="3" stroke-linecap="round"/>
<line x1="650" y1="815" x2="601" y2="882" stroke="#4d4a3c" stroke-width="3" stroke-linecap="round"/>
<line x1="688" y1="788" x2="685" y2="877" stroke="#4d4a3c" stroke-width="2.5" stroke-linecap="round"/>
<line x1="15" y1="688" x2="25" y2="821" stroke="#4d4a3c" stroke-width="3" stroke-linecap="round"/>
<path d="M253.6,886.5 Q257.6,877.4 255.6,868.2" stroke="#8fb040" stroke-width="1.7" fill="none" opacity="0.45"/>
<path d="M699.4,854.8 Q707.5,849.5 709.6,844.3" stroke="#a0b850" stroke-width="1.3" fill="none" opacity="0.45"/>
<path d="M511.4,844.0 Q514.0,838.4 510.5,832.9" stroke="#8fb040" stroke-width="1.9" fill="none" opacity="0.45"/>
<path d="M453.0,825.6 Q457.1,819.1 455.3,812.6" stroke="#a0b850" stroke-width="1.1" fill="none" opacity="0.45"/>
<path d="M492.7,862.6 Q499.2,852.6 499.7,842.5" stroke="#a0b850" stroke-width="1.4" fill="none" opacity="0.45"/>
<path d="M310.1,878.3 Q317.8,871.8 319.6,865.3" stroke="#a0b850" stroke-width="1.7" fill="none" opacity="0.45"/>
<path d="M455.4,877.6 Q463.1,872.2 464.9,866.9" stroke="#4d6e1e" stroke-width="1.8" fill="none" opacity="0.45"/>
<path d="M696.5,864.4 Q704.0,858.4 705.6,852.3" stroke="#5a7a22" stroke-width="1.3" fill="none" opacity="0.45"/>
<path d="M136.3,841.9 Q137.7,827.4 133.1,812.9" stroke="#8fb040" stroke-width="2.0" fill="none" opacity="0.45"/>
<path d="M628.3,887.0 Q629.4,875.5 624.5,863.9" stroke="#8fb040" stroke-width="1.7" fill="none" opacity="0.45"/>
<path d="M660.0,848.4 Q661.7,839.6 657.5,830.8" stroke="#8fb040" stroke-width="2.1" fill="none" opacity="0.45"/>
<path d="M233.4,891.9 Q239.4,883.6 239.5,875.4" stroke="#5a7a22" stroke-width="1.7" fill="none" opacity="0.45"/>
<path d="M368.5,884.5 Q374.2,880.1 374.0,875.8" stroke="#3f5a18" stroke-width="1.7" fill="none" opacity="0.45"/>
<path d="M80.8,870.0 Q89.5,860.0 92.2,850.1" stroke="#a0b850" stroke-width="1.9" fill="none" opacity="0.45"/>
<path d="M638.6,878.9 Q641.5,873.2 638.4,867.5" stroke="#3f5a18" stroke-width="1.9" fill="none" opacity="0.45"/>
<path d="M562.7,853.3 Q567.0,847.4 565.3,841.5" stroke="#a0b850" stroke-width="1.3" fill="none" opacity="0.45"/>
<path d="M365.3,824.1 Q369.9,817.8 368.6,811.5" stroke="#3f5a18" stroke-width="1.7" fill="none" opacity="0.45"/>
<path d="M604.5,852.5 Q608.6,846.8 606.6,841.2" stroke="#4d6e1e" stroke-width="1.0" fill="none" opacity="0.45"/>
<path d="M259.5,834.8 Q264.4,822.4 263.2,810.1" stroke="#8fb040" stroke-width="1.1" fill="none" opacity="0.45"/>
<path d="M435.6,824.0 Q441.3,816.0 440.9,808.1" stroke="#8fb040" stroke-width="1.1" fill="none" opacity="0.45"/>
<path d="M208.1,872.4 Q214.9,860.8 215.7,849.2" stroke="#3f5a18" stroke-width="1.1" fill="none" opacity="0.45"/>
<path d="M293.9,863.7 Q294.7,848.9 289.5,834.1" stroke="#4d6e1e" stroke-width="1.3" fill="none" opacity="0.45"/>
<path d="M206.2,839.4 Q212.6,829.4 213.0,819.4" stroke="#5a7a22" stroke-width="1.5" fill="none" opacity="0.45"/>
<path d="M319.2,847.2 Q325.4,843.3 325.7,839.4" stroke="#a0b850" stroke-width="1.4" fill="none" opacity="0.45"/>
<path d="M218.7,815.4 Q222.2,802.2 219.8,789.0" stroke="#a0b850" stroke-width="1.7" fill="none" opacity="0.45"/>
<path d="M508.9,836.6 Q512.2,828.6 509.6,820.6" stroke="#5a7a22" stroke-width="1.5" fill="none" opacity="0.45"/>
<path d="M340.3,828.7 Q341.1,815.1 335.8,801.5" stroke="#8fb040" stroke-width="1.6" fill="none" opacity="0.45"/>
<path d="M649.7,855.1 Q660.4,847.4 665.0,839.7" stroke="#3f5a18" stroke-width="1.8" fill="none" opacity="0.45"/>
<path d="M167.3,836.0 Q174.4,826.9 175.4,817.7" stroke="#3f5a18" stroke-width="1.2" fill="none" opacity="0.45"/>
<path d="M566.0,835.5 Q575.1,822.4 578.2,809.2" stroke="#4d6e1e" stroke-width="1.7" fill="none" opacity="0.45"/>
<path d="M76.2,836.0 Q81.6,831.2 81.0,826.4" stroke="#8fb040" stroke-width="1.1" fill="none" opacity="0.45"/>
<path d="M114.8,815.5 Q122.9,805.7 125.1,796.0" stroke="#3f5a18" stroke-width="1.1" fill="none" opacity="0.45"/>
<path d="M562.2,846.6 Q570.1,841.1 572.0,835.5" stroke="#3f5a18" stroke-width="1.2" fill="none" opacity="0.45"/>
<path d="M402.2,825.7 Q411.9,817.8 415.7,809.8" stroke="#5a7a22" stroke-width="1.7" fill="none" opacity="0.45"/>
<path d="M697.4,852.6 Q705.0,845.5 706.6,838.4" stroke="#8fb040" stroke-width="1.8" fill="none" opacity="0.45"/>
<path d="M239.4,852.2 Q243.4,839.6 241.4,827.1" stroke="#a0b850" stroke-width="1.3" fill="none" opacity="0.45"/>
<path d="M132.1,882.5 Q142.4,872.9 146.7,863.3" stroke="#a0b850" stroke-width="1.0" fill="none" opacity="0.45"/>
<path d="M91.7,827.1 Q104.9,816.2 112.1,805.3" stroke="#4d6e1e" stroke-width="1.8" fill="none" opacity="0.45"/>
<path d="M247.3,876.2 Q250.0,867.0 246.8,857.8" stroke="#3f5a18" stroke-width="1.5" fill="none" opacity="0.45"/>
<path d="M445.7,846.1 Q450.1,838.6 448.6,831.1" stroke="#a0b850" stroke-width="1.2" fill="none" opacity="0.45"/>
<path d="M96.9,885.2 Q103.0,877.5 103.2,869.7" stroke="#5a7a22" stroke-width="1.8" fill="none" opacity="0.45"/>
<path d="M578.4,843.8 Q585.1,836.6 585.7,829.4" stroke="#8fb040" stroke-width="1.4" fill="none" opacity="0.45"/>
<path d="M625.0,836.2 Q630.0,829.4 629.1,822.5" stroke="#8fb040" stroke-width="1.2" fill="none" opacity="0.45"/>
<path d="M473.3,858.3 Q480.0,853.9 480.7,849.6" stroke="#8fb040" stroke-width="2.0" fill="none" opacity="0.45"/>
<path d="M416.9,818.7 Q422.3,804.8 421.7,790.9" stroke="#8fb040" stroke-width="1.8" fill="none" opacity="0.45"/>
<path d="M672.8,878.3 Q677.6,870.2 676.3,862.1" stroke="#a0b850" stroke-width="1.7" fill="none" opacity="0.45"/>
<path d="M137.4,889.7 Q138.9,879.5 134.3,869.2" stroke="#a0b850" stroke-width="1.1" fill="none" opacity="0.45"/>
<path d="M257.0,850.1 Q265.2,838.0 267.5,826.0" stroke="#4d6e1e" stroke-width="1.3" fill="none" opacity="0.45"/>
<path d="M610.1,843.9 Q614.0,830.8 612.0,817.6" stroke="#a0b850" stroke-width="1.6" fill="none" opacity="0.45"/>
<path d="M419.3,870.6 Q424.8,865.5 424.4,860.4" stroke="#3f5a18" stroke-width="1.7" fill="none" opacity="0.45"/>
<path d="M397.3,870.4 Q401.3,859.1 399.3,847.9" stroke="#a0b850" stroke-width="2.2" fill="none" opacity="0.45"/>
<path d="M287.3,823.4 Q292.8,813.5 292.2,803.7" stroke="#5a7a22" stroke-width="1.9" fill="none" opacity="0.45"/>
<path d="M616.1,885.1 Q619.5,870.5 617.0,855.8" stroke="#a0b850" stroke-width="1.8" fill="none" opacity="0.45"/>
<path d="M486.3,840.7 Q488.0,831.1 483.7,821.6" stroke="#8fb040" stroke-width="1.8" fill="none" opacity="0.45"/>
<path d="M333.6,815.5 Q341.8,810.0 344.1,804.5" stroke="#5a7a22" stroke-width="1.6" fill="none" opacity="0.45"/>
<path d="M410.8,869.2 Q416.5,861.9 416.2,854.6" stroke="#3f5a18" stroke-width="1.4" fill="none" opacity="0.45"/>
<path d="M182.1,829.1 Q184.6,817.0 181.0,805.0" stroke="#4d6e1e" stroke-width="1.7" fill="none" opacity="0.45"/>
<path d="M369.7,860.9 Q378.1,855.6 380.4,850.3" stroke="#5a7a22" stroke-width="1.5" fill="none" opacity="0.45"/>
<path d="M592.9,833.4 Q598.4,822.2 598.0,811.0" stroke="#4d6e1e" stroke-width="1.6" fill="none" opacity="0.45"/>
<path d="M178.1,846.7 Q183.1,839.2 182.0,831.6" stroke="#8fb040" stroke-width="2.0" fill="none" opacity="0.45"/>
<path d="M559.7,882.7 Q565.8,869.8 566.0,856.8" stroke="#3f5a18" stroke-width="1.7" fill="none" opacity="0.45"/>
<path d="M506.0,815.4 Q510.6,810.4 509.2,805.4" stroke="#5a7a22" stroke-width="2.2" fill="none" opacity="0.45"/>
<path d="M677.5,869.7 Q683.2,856.2 682.9,842.7" stroke="#a0b850" stroke-width="2.1" fill="none" opacity="0.45"/>
<path d="M590.4,860.2 Q600.2,853.0 604.1,845.8" stroke="#4d6e1e" stroke-width="2.0" fill="none" opacity="0.45"/>
<path d="M226.2,843.6 Q238.2,834.6 244.2,825.5" stroke="#a0b850" stroke-width="2.2" fill="none" opacity="0.45"/>
<path d="M512.9,866.3 Q519.8,862.0 520.7,857.8" stroke="#5a7a22" stroke-width="1.5" fill="none" opacity="0.45"/>
<path d="M237.5,863.5 Q239.1,849.1 234.8,834.6" stroke="#8fb040" stroke-width="1.8" fill="none" opacity="0.45"/>
<path d="M698.0,861.4 Q708.8,850.5 713.7,839.6" stroke="#8fb040" stroke-width="1.6" fill="none" opacity="0.45"/>
<path d="M586.5,850.9 Q591.0,845.1 589.4,839.3" stroke="#8fb040" stroke-width="1.9" fill="none" opacity="0.45"/>
<path d="M141.0,868.3 Q146.1,854.3 145.2,840.3" stroke="#4d6e1e" stroke-width="1.8" fill="none" opacity="0.45"/>
<path d="M51.5,844.2 Q59.3,836.1 61.0,828.0" stroke="#8fb040" stroke-width="2.0" fill="none" opacity="0.45"/>
<path d="M385.9,815.0 Q390.2,804.6 388.5,794.2" stroke="#4d6e1e" stroke-width="1.8" fill="none" opacity="0.45"/>
<path d="M357.1,821.1 Q357.8,807.8 352.5,794.5" stroke="#5a7a22" stroke-width="1.4" fill="none" opacity="0.45"/>
<path d="M175.1,820.8 Q180.4,813.2 179.7,805.7" stroke="#a0b850" stroke-width="2.2" fill="none" opacity="0.45"/>
<path d="M416.7,838.6 Q423.7,830.5 424.7,822.5" stroke="#a0b850" stroke-width="2.0" fill="none" opacity="0.45"/>
<path d="M257.7,889.2 Q265.1,879.9 266.5,870.5" stroke="#8fb040" stroke-width="1.9" fill="none" opacity="0.45"/>
<path d="M138.0,827.2 Q142.5,818.8 141.0,810.4" stroke="#4d6e1e" stroke-width="1.5" fill="none" opacity="0.45"/>
<path d="M201.2,831.3 Q207.0,824.5 206.9,817.6" stroke="#8fb040" stroke-width="2.0" fill="none" opacity="0.45"/>
<path d="M402.3,815.0 Q408.9,809.2 409.6,803.4" stroke="#8fb040" stroke-width="1.9" fill="none" opacity="0.45"/>
<path d="M398.7,816.6 Q402.4,802.2 400.0,787.7" stroke="#8fb040" stroke-width="1.8" fill="none" opacity="0.45"/>
<path d="M190.8,867.6 Q201.2,856.4 205.5,845.2" stroke="#a0b850" stroke-width="1.5" fill="none" opacity="0.45"/>
<path d="M596.9,833.5 Q605.6,820.0 608.3,806.5" stroke="#8fb040" stroke-width="1.8" fill="none" opacity="0.45"/>
<path d="M625.9,873.3 Q628.7,859.6 625.5,845.9" stroke="#3f5a18" stroke-width="1.4" fill="none" opacity="0.45"/>
<path d="M311.0,836.1 Q320.0,828.3 323.0,820.5" stroke="#5a7a22" stroke-width="1.4" fill="none" opacity="0.45"/>
<path d="M593.9,819.9 Q600.5,811.4 601.1,803.0" stroke="#8fb040" stroke-width="1.3" fill="none" opacity="0.45"/>
<path d="M673.8,819.5 Q680.0,808.3 680.3,797.0" stroke="#3f5a18" stroke-width="1.1" fill="none" opacity="0.45"/>
<path d="M559.5,872.1 Q568.0,863.3 570.4,854.4" stroke="#5a7a22" stroke-width="1.1" fill="none" opacity="0.45"/>
<path d="M95.4,866.3 Q101.9,851.8 102.3,837.3" stroke="#4d6e1e" stroke-width="2.1" fill="none" opacity="0.45"/>
<path d="M58.9,880.0 Q60.3,865.5 55.6,850.9" stroke="#5a7a22" stroke-width="1.2" fill="none" opacity="0.45"/>
<path d="M346.5,818.6 Q350.1,813.0 347.7,807.5" stroke="#5a7a22" stroke-width="2.0" fill="none" opacity="0.45"/>
<path d="M409.7,874.4 Q417.8,862.7 419.9,851.0" stroke="#4d6e1e" stroke-width="1.4" fill="none" opacity="0.45"/>
<path d="M692.9,825.4 Q695.9,811.4 693.0,797.4" stroke="#5a7a22" stroke-width="2.1" fill="none" opacity="0.45"/>
<path d="M160.1,815.8 Q163.6,807.5 161.1,799.3" stroke="#4d6e1e" stroke-width="2.2" fill="none" opacity="0.45"/>
<path d="M514.5,876.1 Q521.0,872.1 521.5,868.1" stroke="#a0b850" stroke-width="1.5" fill="none" opacity="0.45"/>
<path d="M92.6,850.2 Q95.8,841.8 93.0,833.4" stroke="#3f5a18" stroke-width="1.7" fill="none" opacity="0.45"/>
<path d="M440.3,889.6 Q447.8,884.1 449.2,878.6" stroke="#a0b850" stroke-width="1.3" fill="none" opacity="0.45"/>
<path d="M687.8,860.6 Q690.2,855.5 686.6,850.4" stroke="#5a7a22" stroke-width="1.6" fill="none" opacity="0.45"/>
<path d="M184.3,858.2 Q195.8,849.5 201.3,840.7" stroke="#8fb040" stroke-width="1.1" fill="none" opacity="0.45"/>
<path d="M392.4,847.0 Q400.2,841.4 401.9,835.8" stroke="#8fb040" stroke-width="2.0" fill="none" opacity="0.45"/>
<path d="M568.3,857.5 Q569.6,843.0 564.9,828.5" stroke="#3f5a18" stroke-width="1.9" fill="none" opacity="0.45"/>
<path d="M677.2,864.8 Q687.1,852.2 690.9,839.5" stroke="#3f5a18" stroke-width="1.4" fill="none" opacity="0.45"/>
<path d="M560.2,860.7 Q563.1,854.3 560.1,847.9" stroke="#8fb040" stroke-width="1.4" fill="none" opacity="0.45"/>
<path d="M126.8,828.3 Q135.2,815.2 137.7,802.1" stroke="#4d6e1e" stroke-width="2.0" fill="none" opacity="0.45"/>
<path d="M573.0,836.3 Q578.0,824.5 577.0,812.8" stroke="#3f5a18" stroke-width="1.9" fill="none" opacity="0.45"/>
<path d="M538.8,886.3 Q548.4,876.0 552.1,865.7" stroke="#a0b850" stroke-width="1.3" fill="none" opacity="0.45"/>
<path d="M372.0,880.5 Q379.7,866.3 381.5,852.1" stroke="#4d6e1e" stroke-width="2.0" fill="none" opacity="0.45"/>
<path d="M513.9,885.3 Q517.2,879.0 514.4,872.6" stroke="#5a7a22" stroke-width="1.8" fill="none" opacity="0.45"/>
<path d="M146.8,852.9 Q148.2,840.5 143.5,828.1" stroke="#5a7a22" stroke-width="1.3" fill="none" opacity="0.45"/>
<path d="M429.1,834.0 Q438.2,824.1 441.3,814.2" stroke="#3f5a18" stroke-width="1.9" fill="none" opacity="0.45"/>
<path d="M363.3,873.0 Q372.1,866.6 375.0,860.2" stroke="#3f5a18" stroke-width="2.2" fill="none" opacity="0.45"/>
<path d="M282.2,853.4 Q288.2,841.5 288.3,829.6" stroke="#5a7a22" stroke-width="1.4" fill="none" opacity="0.45"/>
<path d="M52.3,817.7 Q60.9,804.6 63.5,791.5" stroke="#4d6e1e" stroke-width="1.3" fill="none" opacity="0.45"/>
<path d="M665.9,817.6 Q668.9,804.7 665.9,791.9" stroke="#a0b850" stroke-width="1.5" fill="none" opacity="0.45"/>
<path d="M695.7,843.6 Q698.0,832.6 694.2,821.6" stroke="#4d6e1e" stroke-width="1.4" fill="none" opacity="0.45"/>
<path d="M447.3,851.0 Q449.7,844.2 446.0,837.5" stroke="#8fb040" stroke-width="1.4" fill="none" opacity="0.45"/>
<path d="M231.2,853.5 Q236.1,843.6 235.0,833.8" stroke="#3f5a18" stroke-width="1.0" fill="none" opacity="0.45"/>
<path d="M305.9,853.9 Q307.5,840.8 303.1,827.6" stroke="#8fb040" stroke-width="1.4" fill="none" opacity="0.45"/>
<path d="M96.9,844.4 Q100.7,838.8 98.5,833.2" stroke="#8fb040" stroke-width="1.7" fill="none" opacity="0.45"/>
<path d="M126.3,818.8 Q134.0,808.1 135.6,797.5" stroke="#a0b850" stroke-width="2.0" fill="none" opacity="0.45"/>
<path d="M179.4,828.1 Q189.8,817.1 194.2,806.0" stroke="#3f5a18" stroke-width="1.1" fill="none" opacity="0.45"/>
<path d="M365.4,816.7 Q368.4,803.8 365.4,790.9" stroke="#8fb040" stroke-width="1.1" fill="none" opacity="0.45"/>
<path d="M608.7,880.5 Q614.0,875.3 613.2,870.1" stroke="#4d6e1e" stroke-width="1.7" fill="none" opacity="0.45"/>
<path d="M68.9,844.4 Q76.8,835.9 78.6,827.5" stroke="#a0b850" stroke-width="1.5" fill="none" opacity="0.45"/>
<path d="M410.1,815.6 Q420.8,803.5 425.4,791.5" stroke="#5a7a22" stroke-width="1.9" fill="none" opacity="0.45"/>
<path d="M261.0,821.4 Q263.7,814.0 260.3,806.6" stroke="#5a7a22" stroke-width="1.3" fill="none" opacity="0.45"/>
<path d="M669.4,882.1 Q679.8,873.2 684.1,864.3" stroke="#3f5a18" stroke-width="1.8" fill="none" opacity="0.45"/>
<path d="M464.0,843.3 Q472.5,831.7 474.9,820.2" stroke="#8fb040" stroke-width="1.5" fill="none" opacity="0.45"/>
<path d="M171.0,874.7 Q182.0,866.5 187.0,858.2" stroke="#a0b850" stroke-width="1.7" fill="none" opacity="0.45"/>
<path d="M67.0,882.1 Q69.0,874.7 65.0,867.2" stroke="#3f5a18" stroke-width="1.8" fill="none" opacity="0.45"/>
<path d="M603.1,857.9 Q612.1,851.3 615.1,844.6" stroke="#4d6e1e" stroke-width="1.4" fill="none" opacity="0.45"/>
<path d="M332.1,891.2 Q334.3,884.5 330.4,877.7" stroke="#5a7a22" stroke-width="1.6" fill="none" opacity="0.45"/>
<path d="M346.3,857.7 Q351.0,846.6 349.8,835.6" stroke="#a0b850" stroke-width="1.9" fill="none" opacity="0.45"/>
<path d="M404.9,839.7 Q412.7,829.2 414.4,818.8" stroke="#3f5a18" stroke-width="2.0" fill="none" opacity="0.45"/>
<path d="M331.7,883.5 Q334.8,876.3 331.9,869.1" stroke="#4d6e1e" stroke-width="2.1" fill="none" opacity="0.45"/>
<path d="M689.2,863.1 Q693.0,854.9 690.9,846.7" stroke="#3f5a18" stroke-width="1.0" fill="none" opacity="0.45"/>
<path d="M88.7,887.3 Q97.6,874.2 100.5,861.0" stroke="#a0b850" stroke-width="2.0" fill="none" opacity="0.45"/>
<path d="M534.1,871.8 Q537.7,865.0 535.3,858.2" stroke="#a0b850" stroke-width="1.3" fill="none" opacity="0.45"/>
<path d="M120.4,849.8 Q127.4,837.3 128.4,824.8" stroke="#8fb040" stroke-width="1.0" fill="none" opacity="0.45"/>
<path d="M446.5,889.0 Q449.4,883.7 446.2,878.3" stroke="#a0b850" stroke-width="1.9" fill="none" opacity="0.45"/>
<path d="M314.7,869.8 Q320.4,860.9 320.1,852.0" stroke="#5a7a22" stroke-width="2.0" fill="none" opacity="0.45"/>
<path d="M623.4,863.9 Q632.2,851.2 635.0,838.5" stroke="#4d6e1e" stroke-width="1.1" fill="none" opacity="0.45"/>
<path d="M309.0,871.9 Q312.3,857.7 309.6,843.4" stroke="#5a7a22" stroke-width="1.1" fill="none" opacity="0.45"/>
<path d="M351.7,873.2 Q356.0,862.4 354.3,851.7" stroke="#a0b850" stroke-width="1.8" fill="none" opacity="0.45"/>
<path d="M419.8,866.3 Q421.7,859.1 417.6,851.8" stroke="#5a7a22" stroke-width="1.2" fill="none" opacity="0.45"/>
<path d="M373.3,883.6 Q377.7,872.0 376.0,860.4" stroke="#4d6e1e" stroke-width="1.1" fill="none" opacity="0.45"/>
<path d="M102.4,829.1 Q110.8,816.0 113.2,802.8" stroke="#5a7a22" stroke-width="1.5" fill="none" opacity="0.45"/>
<path d="M89.1,864.3 Q92.3,856.1 89.5,847.9" stroke="#8fb040" stroke-width="2.1" fill="none" opacity="0.45"/>
<path d="M509.0,857.0 Q513.2,847.2 511.4,837.4" stroke="#5a7a22" stroke-width="2.2" fill="none" opacity="0.45"/>
<path d="M399.2,846.3 Q407.0,834.0 408.8,821.7" stroke="#a0b850" stroke-width="1.7" fill="none" opacity="0.45"/>
<path d="M164.0,868.9 Q169.9,862.1 169.9,855.2" stroke="#8fb040" stroke-width="2.2" fill="none" opacity="0.45"/>
<path d="M670.9,838.7 Q673.9,825.7 671.0,812.7" stroke="#4d6e1e" stroke-width="1.1" fill="none" opacity="0.45"/>
<path d="M183.9,832.9 Q191.0,827.4 192.1,821.9" stroke="#a0b850" stroke-width="1.0" fill="none" opacity="0.45"/>
<path d="M581.9,827.6 Q585.7,814.8 583.5,802.0" stroke="#a0b850" stroke-width="1.8" fill="none" opacity="0.45"/>
<path d="M445.5,836.3 Q447.2,822.9 442.8,809.5" stroke="#5a7a22" stroke-width="1.1" fill="none" opacity="0.45"/>
<path d="M136.0,841.4 Q147.0,830.6 152.0,819.9" stroke="#5a7a22" stroke-width="1.4" fill="none" opacity="0.45"/>
<path d="M169.1,859.8 Q172.4,850.3 169.7,840.8" stroke="#4d6e1e" stroke-width="1.7" fill="none" opacity="0.45"/>
<path d="M126.0,859.9 Q132.1,853.2 132.3,846.5" stroke="#3f5a18" stroke-width="1.2" fill="none" opacity="0.45"/>
<path d="M603.0,834.5 Q605.1,829.5 601.3,824.4" stroke="#a0b850" stroke-width="1.1" fill="none" opacity="0.45"/>
<path d="M666.9,850.2 Q670.4,837.2 667.9,824.1" stroke="#8fb040" stroke-width="1.3" fill="none" opacity="0.45"/>
<path d="M491.0,884.1 Q493.2,872.8 489.4,861.5" stroke="#8fb040" stroke-width="1.8" fill="none" opacity="0.45"/>
<path d="M448.2,819.2 Q452.4,811.3 450.5,803.3" stroke="#4d6e1e" stroke-width="1.3" fill="none" opacity="0.45"/>
<path d="M170.6,866.9 Q174.0,857.9 171.5,848.8" stroke="#8fb040" stroke-width="2.0" fill="none" opacity="0.45"/>
<path d="M61.2,818.5 Q65.7,805.9 64.1,793.3" stroke="#a0b850" stroke-width="2.2" fill="none" opacity="0.45"/>
<path d="M352.8,831.8 Q357.2,824.0 355.6,816.2" stroke="#a0b850" stroke-width="1.0" fill="none" opacity="0.45"/>
<path d="M327.7,825.3 Q333.7,820.9 333.7,816.4" stroke="#8fb040" stroke-width="1.8" fill="none" opacity="0.45"/>
<path d="M313.5,866.5 Q322.2,858.5 324.9,850.6" stroke="#5a7a22" stroke-width="1.7" fill="none" opacity="0.45"/>
<path d="M679.9,848.0 Q683.9,834.2 682.0,820.4" stroke="#3f5a18" stroke-width="1.2" fill="none" opacity="0.45"/>
<path d="M514.6,841.6 Q520.6,833.8 520.6,826.0" stroke="#3f5a18" stroke-width="2.1" fill="none" opacity="0.45"/>
<path d="M51.5,843.0 Q57.0,828.8 56.5,814.7" stroke="#4d6e1e" stroke-width="2.0" fill="none" opacity="0.45"/>
<path d="M495.3,826.0 Q502.6,812.6 503.9,799.3" stroke="#4d6e1e" stroke-width="1.3" fill="none" opacity="0.45"/>
<path d="M201.5,852.9 Q206.3,847.6 205.2,842.4" stroke="#5a7a22" stroke-width="1.1" fill="none" opacity="0.45"/>
<path d="M466.7,833.9 Q470.6,827.7 468.5,821.5" stroke="#5a7a22" stroke-width="1.3" fill="none" opacity="0.45"/>
<path d="M265.3,861.5 Q271.7,856.5 272.2,851.6" stroke="#a0b850" stroke-width="1.2" fill="none" opacity="0.45"/>
<path d="M53.3,848.8 Q57.5,837.4 55.7,826.0" stroke="#8fb040" stroke-width="1.7" fill="none" opacity="0.45"/>
<path d="M546.7,883.1 Q551.4,870.7 550.2,858.4" stroke="#8fb040" stroke-width="2.1" fill="none" opacity="0.45"/>
<path d="M469.7,821.4 Q475.5,811.5 475.4,801.6" stroke="#8fb040" stroke-width="1.0" fill="none" opacity="0.45"/>
<path d="M81.6,875.9 Q85.1,865.3 82.7,854.7" stroke="#3f5a18" stroke-width="1.1" fill="none" opacity="0.45"/>
<path d="M275.6,838.6 Q278.7,832.0 275.8,825.3" stroke="#3f5a18" stroke-width="1.8" fill="none" opacity="0.45"/>
<path d="M82.0,822.7 Q89.0,810.7 90.0,798.6" stroke="#5a7a22" stroke-width="1.2" fill="none" opacity="0.45"/>
<path d="M331.0,869.2 Q332.4,860.1 327.8,851.1" stroke="#5a7a22" stroke-width="1.3" fill="none" opacity="0.45"/>
<path d="M630.7,877.7 Q635.6,863.6 634.5,849.6" stroke="#3f5a18" stroke-width="2.1" fill="none" opacity="0.45"/>
<path d="M507.3,874.5 Q510.0,867.9 506.7,861.3" stroke="#a0b850" stroke-width="1.7" fill="none" opacity="0.45"/>
<path d="M621.8,818.6 Q626.7,812.0 625.6,805.5" stroke="#3f5a18" stroke-width="1.7" fill="none" opacity="0.45"/>
<path d="M554.7,851.5 Q558.9,839.9 557.0,828.4" stroke="#4d6e1e" stroke-width="1.2" fill="none" opacity="0.45"/>
<path d="M84.7,888.0 Q94.8,876.1 98.9,864.2" stroke="#5a7a22" stroke-width="1.2" fill="none" opacity="0.45"/>
<path d="M667.8,845.9 Q674.6,840.2 675.5,834.5" stroke="#a0b850" stroke-width="2.1" fill="none" opacity="0.45"/>
<path d="M75.8,881.2 Q78.0,870.7 74.2,860.2" stroke="#8fb040" stroke-width="1.7" fill="none" opacity="0.45"/>
<path d="M653.5,823.2 Q655.7,814.7 651.9,806.2" stroke="#a0b850" stroke-width="1.5" fill="none" opacity="0.45"/>
<path d="M533.1,832.0 Q534.3,817.7 529.4,803.4" stroke="#5a7a22" stroke-width="1.7" fill="none" opacity="0.45"/>
<path d="M341.4,876.7 Q348.8,866.5 350.3,856.3" stroke="#a0b850" stroke-width="1.2" fill="none" opacity="0.45"/>
<path d="M695.2,890.7 Q703.8,877.2 706.4,863.7" stroke="#4d6e1e" stroke-width="1.7" fill="none" opacity="0.45"/>
<path d="M499.8,886.4 Q512.4,875.6 519.0,864.8" stroke="#5a7a22" stroke-width="1.2" fill="none" opacity="0.45"/>
<path d="M513.1,870.3 Q518.8,860.3 518.4,850.4" stroke="#3f5a18" stroke-width="1.3" fill="none" opacity="0.45"/>
<path d="M417.1,871.7 Q425.5,863.9 427.8,856.2" stroke="#5a7a22" stroke-width="2.2" fill="none" opacity="0.45"/>
<path d="M376.6,889.1 Q378.4,874.6 374.3,860.1" stroke="#5a7a22" stroke-width="2.0" fill="none" opacity="0.45"/>
<path d="M633.9,884.9 Q639.4,875.6 639.0,866.4" stroke="#3f5a18" stroke-width="1.4" fill="none" opacity="0.45"/>
<path d="M304.8,861.0 Q307.6,853.4 304.5,845.7" stroke="#8fb040" stroke-width="1.1" fill="none" opacity="0.45"/>
<path d="M577.5,843.9 Q580.4,836.0 577.3,828.1" stroke="#3f5a18" stroke-width="1.5" fill="none" opacity="0.45"/>
<path d="M258.6,882.6 Q265.7,871.8 266.8,861.0" stroke="#3f5a18" stroke-width="2.0" fill="none" opacity="0.45"/>
<path d="M444.0,824.2 Q449.7,815.4 449.4,806.7" stroke="#5a7a22" stroke-width="1.2" fill="none" opacity="0.45"/>
<path d="M582.4,880.2 Q594.2,870.7 600.0,861.3" stroke="#3f5a18" stroke-width="1.9" fill="none" opacity="0.45"/>
<path d="M284.0,825.8 Q286.1,811.2 282.1,796.6" stroke="#a0b850" stroke-width="1.2" fill="none" opacity="0.45"/>
<path d="M520.5,845.1 Q527.7,836.5 528.8,827.8" stroke="#8fb040" stroke-width="2.0" fill="none" opacity="0.45"/>
<path d="M340.4,833.1 Q344.9,824.9 343.4,816.6" stroke="#5a7a22" stroke-width="1.0" fill="none" opacity="0.45"/>
<path d="M449.7,828.9 Q454.0,822.3 452.2,815.7" stroke="#3f5a18" stroke-width="2.1" fill="none" opacity="0.45"/>
<path d="M256.4,876.8 Q261.2,871.3 259.9,865.8" stroke="#5a7a22" stroke-width="1.4" fill="none" opacity="0.45"/>
<path d="M131.1,855.5 Q135.0,847.0 132.9,838.6" stroke="#a0b850" stroke-width="1.1" fill="none" opacity="0.45"/>
<path d="M185.4,858.6 Q189.2,851.2 186.9,843.9" stroke="#8fb040" stroke-width="2.0" fill="none" opacity="0.45"/>
<path d="M490.0,854.5 Q498.6,848.3 501.2,842.1" stroke="#8fb040" stroke-width="2.0" fill="none" opacity="0.45"/>
<path d="M372.1,821.8 Q378.2,814.5 378.3,807.2" stroke="#4d6e1e" stroke-width="1.8" fill="none" opacity="0.45"/>
<path d="M530.0,882.7 Q540.6,871.2 545.3,859.8" stroke="#a0b850" stroke-width="1.6" fill="none" opacity="0.45"/>
<path d="M88.3,824.2 Q93.8,816.2 93.4,808.1" stroke="#8fb040" stroke-width="1.5" fill="none" opacity="0.45"/>
<path d="M503.7,850.4 Q511.3,839.7 512.9,829.1" stroke="#3f5a18" stroke-width="1.0" fill="none" opacity="0.45"/>
<path d="M343.8,826.9 Q353.1,816.2 356.3,805.4" stroke="#4d6e1e" stroke-width="2.2" fill="none" opacity="0.45"/>
<path d="M575.3,876.7 Q585.0,867.3 588.7,858.0" stroke="#8fb040" stroke-width="2.1" fill="none" opacity="0.45"/>
<path d="M221.8,848.8 Q231.0,840.5 234.2,832.2" stroke="#4d6e1e" stroke-width="2.0" fill="none" opacity="0.45"/>
<path d="M402.4,883.8 Q408.2,874.6 408.1,865.4" stroke="#a0b850" stroke-width="2.1" fill="none" opacity="0.45"/>
<path d="M163.7,827.4 Q171.4,822.5 173.1,817.6" stroke="#5a7a22" stroke-width="1.1" fill="none" opacity="0.45"/>
<path d="M154.3,891.9 Q158.8,885.5 157.4,879.1" stroke="#3f5a18" stroke-width="1.7" fill="none" opacity="0.45"/>
<path d="M282.5,879.8 Q291.8,868.5 295.1,857.3" stroke="#5a7a22" stroke-width="2.2" fill="none" opacity="0.45"/>
<rect x="0" y="884" width="715" height="69" fill="#6a7c46"/>
<rect x="0" y="884" width="715" height="69" fill="#000" filter="url(#gnoise)" opacity="0.8"/>
<path d="M462.0,942.4 Q464.4,929.9 469.8,915.0" stroke="#a6b08e" stroke-width="1.9" fill="none" opacity="0.55"/>
<path d="M415.7,910.1 Q437.2,898.6 450.8,889.4" stroke="#4a5a2a" stroke-width="1.1" fill="none" opacity="0.55"/>
<path d="M672.0,933.7 Q681.8,921.4 700.8,914.5" stroke="#a6b08e" stroke-width="1.7" fill="none" opacity="0.55"/>
<path d="M352.7,894.6 Q360.3,884.9 359.7,870.9" stroke="#95a27a" stroke-width="2.0" fill="none" opacity="0.55"/>
<path d="M246.4,898.5 Q259.7,892.1 265.8,887.1" stroke="#2e3a1a" stroke-width="1.2" fill="none" opacity="0.55"/>
<path d="M393.9,922.3 Q410.7,910.6 425.6,899.9" stroke="#4a5a2a" stroke-width="2.4" fill="none" opacity="0.55"/>
<path d="M229.1,895.0 Q247.6,884.3 264.2,877.4" stroke="#a6b08e" stroke-width="2.2" fill="none" opacity="0.55"/>
<path d="M181.0,939.0 Q189.0,926.1 202.3,915.6" stroke="#4a5a2a" stroke-width="1.3" fill="none" opacity="0.55"/>
<path d="M243.8,922.6 Q256.2,913.0 270.0,900.4" stroke="#b8c0a4" stroke-width="1.8" fill="none" opacity="0.55"/>
<path d="M538.7,911.1 Q553.5,898.6 560.0,882.7" stroke="#b8c0a4" stroke-width="2.0" fill="none" opacity="0.55"/>
<path d="M338.3,940.8 Q347.8,926.4 361.6,909.8" stroke="#38461f" stroke-width="1.4" fill="none" opacity="0.55"/>
<path d="M717.0,934.5 Q719.6,924.4 725.4,913.4" stroke="#2e3a1a" stroke-width="2.1" fill="none" opacity="0.55"/>
<path d="M384.0,909.9 Q392.8,885.9 403.6,868.3" stroke="#38461f" stroke-width="1.9" fill="none" opacity="0.55"/>
<path d="M390.1,935.1 Q406.6,926.7 424.7,915.4" stroke="#a6b08e" stroke-width="1.9" fill="none" opacity="0.55"/>
<path d="M596.1,906.5 Q583.6,901.1 579.9,893.5" stroke="#38461f" stroke-width="2.0" fill="none" opacity="0.55"/>
<path d="M177.6,964.3 Q189.1,955.1 206.9,949.4" stroke="#4a5a2a" stroke-width="1.1" fill="none" opacity="0.55"/>
<path d="M281.2,958.8 Q284.5,949.1 287.5,938.5" stroke="#b8c0a4" stroke-width="1.4" fill="none" opacity="0.55"/>
<path d="M418.6,891.0 Q430.0,881.2 439.2,868.0" stroke="#38461f" stroke-width="2.5" fill="none" opacity="0.55"/>
<path d="M483.3,946.8 Q499.9,938.9 506.4,932.7" stroke="#2e3a1a" stroke-width="1.9" fill="none" opacity="0.55"/>
<path d="M29.2,893.4 Q49.5,879.1 60.4,859.2" stroke="#a6b08e" stroke-width="1.1" fill="none" opacity="0.55"/>
<path d="M649.3,960.8 Q640.8,950.9 635.0,940.1" stroke="#2e3a1a" stroke-width="1.7" fill="none" opacity="0.55"/>
<path d="M393.0,895.1 Q415.9,876.7 428.3,863.0" stroke="#38461f" stroke-width="2.2" fill="none" opacity="0.55"/>
<path d="M313.1,940.1 Q324.2,929.2 324.6,926.0" stroke="#b8c0a4" stroke-width="1.7" fill="none" opacity="0.55"/>
<path d="M658.7,929.3 Q662.1,921.8 672.1,907.7" stroke="#a6b08e" stroke-width="1.0" fill="none" opacity="0.55"/>
<path d="M485.4,946.7 Q497.1,927.9 503.5,907.1" stroke="#b8c0a4" stroke-width="2.1" fill="none" opacity="0.55"/>
<path d="M6.9,941.6 Q22.1,929.0 40.0,918.8" stroke="#a6b08e" stroke-width="1.8" fill="none" opacity="0.55"/>
<path d="M70.3,910.2 Q74.1,893.2 80.7,876.2" stroke="#4a5a2a" stroke-width="1.3" fill="none" opacity="0.55"/>
<path d="M66.8,920.9 Q75.7,913.3 86.2,904.5" stroke="#b8c0a4" stroke-width="1.7" fill="none" opacity="0.55"/>
<path d="M556.0,939.8 Q547.1,918.5 536.3,898.0" stroke="#38461f" stroke-width="1.0" fill="none" opacity="0.55"/>
<path d="M186.4,927.2 Q189.1,913.8 195.8,906.2" stroke="#2e3a1a" stroke-width="1.7" fill="none" opacity="0.55"/>
<path d="M715.9,946.7 Q705.1,931.2 695.3,916.5" stroke="#4a5a2a" stroke-width="2.5" fill="none" opacity="0.55"/>
<path d="M634.9,931.7 Q627.5,914.0 621.4,896.5" stroke="#95a27a" stroke-width="2.3" fill="none" opacity="0.55"/>
<path d="M635.6,948.6 Q641.8,936.9 646.2,933.1" stroke="#2e3a1a" stroke-width="1.4" fill="none" opacity="0.55"/>
<path d="M672.4,900.0 Q673.6,889.0 683.8,872.0" stroke="#38461f" stroke-width="1.8" fill="none" opacity="0.55"/>
<path d="M73.6,893.7 Q80.4,875.2 91.8,863.9" stroke="#b8c0a4" stroke-width="2.4" fill="none" opacity="0.55"/>
<path d="M289.4,898.7 Q300.9,890.3 324.1,874.0" stroke="#95a27a" stroke-width="1.7" fill="none" opacity="0.55"/>
<path d="M669.1,920.0 Q685.8,899.1 692.6,877.0" stroke="#b8c0a4" stroke-width="1.7" fill="none" opacity="0.55"/>
<path d="M447.3,896.8 Q460.4,888.4 478.4,882.2" stroke="#a6b08e" stroke-width="1.9" fill="none" opacity="0.55"/>
<path d="M124.9,946.0 Q111.2,925.1 107.4,904.0" stroke="#4a5a2a" stroke-width="1.9" fill="none" opacity="0.55"/>
<path d="M351.7,905.3 Q359.9,894.4 376.1,885.8" stroke="#38461f" stroke-width="1.8" fill="none" opacity="0.55"/>
<path d="M598.8,933.2 Q591.7,921.3 579.9,908.0" stroke="#95a27a" stroke-width="1.7" fill="none" opacity="0.55"/>
<path d="M133.6,917.7 Q117.1,898.3 102.4,880.4" stroke="#95a27a" stroke-width="1.9" fill="none" opacity="0.55"/>
<path d="M162.1,953.0 Q168.8,933.6 181.4,915.9" stroke="#b8c0a4" stroke-width="1.9" fill="none" opacity="0.55"/>
<path d="M290.0,890.4 Q304.7,870.6 310.8,858.3" stroke="#95a27a" stroke-width="2.0" fill="none" opacity="0.55"/>
<path d="M404.7,946.1 Q391.4,927.6 388.1,911.5" stroke="#b8c0a4" stroke-width="1.3" fill="none" opacity="0.55"/>
<path d="M55.2,921.1 Q66.0,906.8 65.1,893.5" stroke="#38461f" stroke-width="1.2" fill="none" opacity="0.55"/>
<path d="M342.2,907.5 Q353.8,897.3 371.5,884.1" stroke="#2e3a1a" stroke-width="1.6" fill="none" opacity="0.55"/>
<path d="M73.5,898.1 Q90.0,890.5 97.2,886.2" stroke="#a6b08e" stroke-width="2.2" fill="none" opacity="0.55"/>
<path d="M566.8,926.1 Q581.2,915.2 586.8,908.0" stroke="#b8c0a4" stroke-width="2.6" fill="none" opacity="0.55"/>
<path d="M645.2,925.9 Q663.7,912.2 679.5,901.8" stroke="#4a5a2a" stroke-width="2.1" fill="none" opacity="0.55"/>
<path d="M18.7,961.8 Q25.3,937.6 34.6,919.2" stroke="#95a27a" stroke-width="2.0" fill="none" opacity="0.55"/>
<path d="M459.3,950.2 Q474.2,937.1 495.0,923.2" stroke="#a6b08e" stroke-width="1.3" fill="none" opacity="0.55"/>
<path d="M349.0,895.8 Q351.7,891.3 366.1,882.4" stroke="#95a27a" stroke-width="2.0" fill="none" opacity="0.55"/>
<path d="M467.8,918.1 Q471.3,904.3 481.2,886.7" stroke="#4a5a2a" stroke-width="1.5" fill="none" opacity="0.55"/>
<path d="M188.7,953.1 Q167.1,936.0 157.5,922.3" stroke="#2e3a1a" stroke-width="2.2" fill="none" opacity="0.55"/>
<path d="M336.7,901.4 Q346.5,894.0 350.5,885.2" stroke="#a6b08e" stroke-width="2.0" fill="none" opacity="0.55"/>
<path d="M460.2,954.3 Q463.6,940.3 477.9,931.8" stroke="#b8c0a4" stroke-width="1.6" fill="none" opacity="0.55"/>
<path d="M547.7,918.1 Q552.9,905.6 561.4,900.8" stroke="#4a5a2a" stroke-width="1.8" fill="none" opacity="0.55"/>
<path d="M609.6,937.5 Q616.9,925.1 629.3,911.5" stroke="#95a27a" stroke-width="1.9" fill="none" opacity="0.55"/>
<path d="M614.0,915.0 Q623.0,899.2 624.7,879.0" stroke="#b8c0a4" stroke-width="1.5" fill="none" opacity="0.55"/>
<path d="M73.2,935.3 Q89.2,919.7 106.8,901.8" stroke="#2e3a1a" stroke-width="1.5" fill="none" opacity="0.55"/>
<path d="M341.3,956.6 Q328.5,939.1 311.6,923.6" stroke="#4a5a2a" stroke-width="1.3" fill="none" opacity="0.55"/>
<path d="M244.3,896.8 Q236.6,874.9 228.5,856.8" stroke="#2e3a1a" stroke-width="1.4" fill="none" opacity="0.55"/>
<path d="M643.4,915.0 Q646.2,904.1 654.5,894.0" stroke="#b8c0a4" stroke-width="2.4" fill="none" opacity="0.55"/>
<path d="M500.5,946.2 Q513.4,934.9 530.9,923.3" stroke="#2e3a1a" stroke-width="2.1" fill="none" opacity="0.55"/>
<path d="M331.3,933.9 Q318.9,916.5 311.8,904.3" stroke="#2e3a1a" stroke-width="1.5" fill="none" opacity="0.55"/>
<path d="M169.5,952.7 Q185.7,938.7 204.1,930.8" stroke="#a6b08e" stroke-width="1.5" fill="none" opacity="0.55"/>
<path d="M255.8,898.8 Q243.6,882.0 226.6,861.4" stroke="#38461f" stroke-width="1.5" fill="none" opacity="0.55"/>
<path d="M599.4,949.0 Q611.6,935.3 615.4,927.6" stroke="#95a27a" stroke-width="2.4" fill="none" opacity="0.55"/>
<path d="M285.1,926.0 Q298.0,906.2 300.7,894.0" stroke="#b8c0a4" stroke-width="1.9" fill="none" opacity="0.55"/>
<path d="M485.6,892.6 Q484.3,881.8 478.1,875.5" stroke="#b8c0a4" stroke-width="2.0" fill="none" opacity="0.55"/>
<path d="M492.6,895.8 Q511.7,887.8 526.2,874.1" stroke="#a6b08e" stroke-width="1.3" fill="none" opacity="0.55"/>
<path d="M541.4,912.2 Q546.5,895.9 552.6,884.6" stroke="#b8c0a4" stroke-width="2.3" fill="none" opacity="0.55"/>
<path d="M224.2,952.5 Q231.6,939.6 233.7,929.2" stroke="#95a27a" stroke-width="1.0" fill="none" opacity="0.55"/>
<path d="M600.8,946.0 Q615.3,936.7 636.3,926.5" stroke="#38461f" stroke-width="1.8" fill="none" opacity="0.55"/>
<path d="M496.0,921.1 Q502.5,907.0 515.8,899.1" stroke="#b8c0a4" stroke-width="2.4" fill="none" opacity="0.55"/>
<path d="M635.0,922.8 Q642.1,902.6 648.1,885.1" stroke="#95a27a" stroke-width="2.0" fill="none" opacity="0.55"/>
<path d="M572.6,964.4 Q578.2,958.9 584.1,948.9" stroke="#a6b08e" stroke-width="1.7" fill="none" opacity="0.55"/>
<path d="M347.5,963.4 Q352.9,948.7 359.3,934.4" stroke="#95a27a" stroke-width="2.5" fill="none" opacity="0.55"/>
<path d="M168.2,908.9 Q177.4,886.3 181.2,870.2" stroke="#a6b08e" stroke-width="2.3" fill="none" opacity="0.55"/>
<path d="M491.4,955.5 Q508.0,951.2 518.5,940.9" stroke="#a6b08e" stroke-width="1.1" fill="none" opacity="0.55"/>
<path d="M382.2,951.7 Q386.3,947.2 397.6,938.1" stroke="#2e3a1a" stroke-width="1.0" fill="none" opacity="0.55"/>
<path d="M246.5,899.3 Q252.7,885.0 269.2,875.6" stroke="#95a27a" stroke-width="1.4" fill="none" opacity="0.55"/>
<path d="M117.9,938.6 Q131.7,929.3 137.1,914.6" stroke="#4a5a2a" stroke-width="2.3" fill="none" opacity="0.55"/>
<path d="M363.3,894.5 Q340.5,883.2 328.9,870.3" stroke="#a6b08e" stroke-width="1.0" fill="none" opacity="0.55"/>
<path d="M77.8,924.6 Q68.3,901.1 53.2,885.0" stroke="#a6b08e" stroke-width="1.9" fill="none" opacity="0.55"/>
<path d="M488.9,906.7 Q503.5,894.8 508.0,886.3" stroke="#95a27a" stroke-width="1.8" fill="none" opacity="0.55"/>
<path d="M619.1,929.3 Q618.8,920.5 626.8,911.1" stroke="#95a27a" stroke-width="1.5" fill="none" opacity="0.55"/>
<path d="M467.9,962.5 Q477.4,943.4 495.1,930.9" stroke="#2e3a1a" stroke-width="2.1" fill="none" opacity="0.55"/>
<path d="M455.6,952.3 Q447.5,943.2 438.4,938.4" stroke="#95a27a" stroke-width="1.7" fill="none" opacity="0.55"/>
<path d="M262.9,915.6 Q266.1,895.3 274.2,880.2" stroke="#4a5a2a" stroke-width="1.9" fill="none" opacity="0.55"/>
<path d="M89.3,912.8 Q98.2,905.7 97.8,894.2" stroke="#38461f" stroke-width="2.2" fill="none" opacity="0.55"/>
<path d="M642.9,920.8 Q656.3,913.5 664.5,907.9" stroke="#38461f" stroke-width="1.9" fill="none" opacity="0.55"/>
<path d="M610.6,937.7 Q619.1,928.1 617.3,916.5" stroke="#b8c0a4" stroke-width="1.8" fill="none" opacity="0.55"/>
<path d="M648.7,911.0 Q654.5,894.6 662.7,879.6" stroke="#b8c0a4" stroke-width="1.6" fill="none" opacity="0.55"/>
<path d="M626.3,904.7 Q617.0,885.4 606.7,867.2" stroke="#a6b08e" stroke-width="1.3" fill="none" opacity="0.55"/>
<path d="M569.8,901.8 Q576.8,894.6 590.1,887.6" stroke="#95a27a" stroke-width="1.4" fill="none" opacity="0.55"/>
<path d="M615.1,916.5 Q603.9,908.0 599.5,906.6" stroke="#95a27a" stroke-width="2.0" fill="none" opacity="0.55"/>
<path d="M380.0,947.7 Q393.2,939.7 408.5,930.0" stroke="#2e3a1a" stroke-width="1.1" fill="none" opacity="0.55"/>
<path d="M617.1,945.5 Q605.3,941.1 601.8,931.7" stroke="#4a5a2a" stroke-width="1.6" fill="none" opacity="0.55"/>
<path d="M60.0,900.3 Q66.8,893.5 84.0,886.3" stroke="#4a5a2a" stroke-width="1.9" fill="none" opacity="0.55"/>
<path d="M603.3,952.9 Q617.1,940.1 626.2,934.1" stroke="#4a5a2a" stroke-width="1.1" fill="none" opacity="0.55"/>
<path d="M688.9,917.4 Q691.9,903.9 700.8,885.8" stroke="#a6b08e" stroke-width="1.9" fill="none" opacity="0.55"/>
<path d="M307.4,911.1 Q322.5,901.3 348.2,891.3" stroke="#b8c0a4" stroke-width="1.4" fill="none" opacity="0.55"/>
<path d="M298.2,953.4 Q311.5,930.7 318.8,912.5" stroke="#95a27a" stroke-width="1.1" fill="none" opacity="0.55"/>
<path d="M401.5,906.2 Q394.1,892.3 386.9,872.2" stroke="#95a27a" stroke-width="1.5" fill="none" opacity="0.55"/>
<path d="M398.9,907.4 Q422.9,897.3 439.0,883.9" stroke="#a6b08e" stroke-width="1.5" fill="none" opacity="0.55"/>
<path d="M557.7,930.7 Q542.7,920.1 537.6,914.8" stroke="#38461f" stroke-width="2.2" fill="none" opacity="0.55"/>
<path d="M256.8,915.9 Q261.2,907.2 271.7,897.1" stroke="#38461f" stroke-width="1.4" fill="none" opacity="0.55"/>
<path d="M43.8,926.8 Q48.6,909.7 54.9,896.7" stroke="#4a5a2a" stroke-width="1.1" fill="none" opacity="0.55"/>
<path d="M605.7,959.7 Q616.0,936.6 619.9,920.6" stroke="#b8c0a4" stroke-width="1.2" fill="none" opacity="0.55"/>
<path d="M638.4,913.9 Q641.8,902.2 647.7,885.4" stroke="#b8c0a4" stroke-width="2.4" fill="none" opacity="0.55"/>
<path d="M409.4,921.2 Q424.6,915.4 437.8,906.3" stroke="#95a27a" stroke-width="1.4" fill="none" opacity="0.55"/>
<path d="M340.4,922.7 Q353.8,910.2 366.5,904.1" stroke="#a6b08e" stroke-width="2.1" fill="none" opacity="0.55"/>
<path d="M117.6,898.3 Q127.9,890.1 134.9,884.6" stroke="#b8c0a4" stroke-width="2.4" fill="none" opacity="0.55"/>
<path d="M311.2,905.6 Q303.8,895.3 292.1,891.7" stroke="#b8c0a4" stroke-width="1.4" fill="none" opacity="0.55"/>
<path d="M653.0,918.3 Q671.6,900.0 679.2,889.5" stroke="#a6b08e" stroke-width="1.7" fill="none" opacity="0.55"/>
<path d="M469.9,900.3 Q460.5,882.0 450.4,869.8" stroke="#a6b08e" stroke-width="2.0" fill="none" opacity="0.55"/>
<path d="M305.0,923.9 Q315.7,903.0 337.0,887.4" stroke="#38461f" stroke-width="1.7" fill="none" opacity="0.55"/>
<path d="M167.7,895.9 Q178.1,891.1 184.4,883.2" stroke="#4a5a2a" stroke-width="1.8" fill="none" opacity="0.55"/>
<path d="M92.6,899.3 Q99.4,888.1 117.5,869.5" stroke="#95a27a" stroke-width="2.1" fill="none" opacity="0.55"/>
<path d="M547.1,947.9 Q551.1,934.9 563.8,920.7" stroke="#a6b08e" stroke-width="1.7" fill="none" opacity="0.55"/>
<path d="M159.6,960.4 Q150.8,946.1 139.3,930.6" stroke="#a6b08e" stroke-width="2.0" fill="none" opacity="0.55"/>
<path d="M201.3,948.6 Q207.1,932.5 214.7,921.5" stroke="#95a27a" stroke-width="1.5" fill="none" opacity="0.55"/>
<path d="M175.3,957.1 Q193.1,950.0 201.6,941.9" stroke="#2e3a1a" stroke-width="1.8" fill="none" opacity="0.55"/>
<path d="M667.7,933.4 Q674.7,922.6 689.9,904.4" stroke="#4a5a2a" stroke-width="1.4" fill="none" opacity="0.55"/>
<path d="M563.5,919.6 Q564.9,912.9 575.7,906.1" stroke="#95a27a" stroke-width="2.6" fill="none" opacity="0.55"/>
<path d="M431.3,958.4 Q418.6,940.3 411.5,923.7" stroke="#a6b08e" stroke-width="1.1" fill="none" opacity="0.55"/>
<path d="M589.1,911.0 Q602.1,899.4 608.8,893.4" stroke="#2e3a1a" stroke-width="1.2" fill="none" opacity="0.55"/>
<path d="M77.5,945.4 Q91.4,930.8 105.5,909.8" stroke="#a6b08e" stroke-width="2.1" fill="none" opacity="0.55"/>
<path d="M342.1,931.9 Q339.8,926.2 325.6,920.0" stroke="#4a5a2a" stroke-width="1.7" fill="none" opacity="0.55"/>
<path d="M70.3,894.7 Q74.1,877.5 82.4,863.1" stroke="#a6b08e" stroke-width="1.0" fill="none" opacity="0.55"/>
<path d="M549.0,920.0 Q567.2,903.4 584.5,888.7" stroke="#b8c0a4" stroke-width="1.8" fill="none" opacity="0.55"/>
<path d="M566.7,931.1 Q571.8,919.4 579.2,913.5" stroke="#95a27a" stroke-width="1.6" fill="none" opacity="0.55"/>
<path d="M263.5,921.0 Q247.7,912.6 242.4,907.6" stroke="#a6b08e" stroke-width="1.2" fill="none" opacity="0.55"/>
<path d="M554.7,955.7 Q572.2,943.6 590.0,926.1" stroke="#2e3a1a" stroke-width="2.4" fill="none" opacity="0.55"/>
<path d="M575.2,935.7 Q593.1,923.9 608.9,916.1" stroke="#95a27a" stroke-width="2.4" fill="none" opacity="0.55"/>
<path d="M162.4,934.1 Q156.7,929.1 154.2,916.9" stroke="#38461f" stroke-width="2.6" fill="none" opacity="0.55"/>
<path d="M85.7,953.3 Q97.5,938.7 106.5,928.1" stroke="#b8c0a4" stroke-width="2.0" fill="none" opacity="0.55"/>
<path d="M595.1,897.3 Q589.4,884.9 584.4,877.6" stroke="#4a5a2a" stroke-width="1.7" fill="none" opacity="0.55"/>
<path d="M58.7,959.7 Q73.1,940.6 76.5,914.0" stroke="#4a5a2a" stroke-width="1.4" fill="none" opacity="0.55"/>
<path d="M416.1,927.3 Q407.9,919.4 401.2,911.9" stroke="#2e3a1a" stroke-width="1.1" fill="none" opacity="0.55"/>
<path d="M714.5,909.2 Q698.4,905.0 680.7,893.4" stroke="#4a5a2a" stroke-width="2.2" fill="none" opacity="0.55"/>
<path d="M108.4,892.6 Q125.9,877.9 139.4,859.5" stroke="#38461f" stroke-width="1.6" fill="none" opacity="0.55"/>
<path d="M449.2,902.6 Q458.5,895.8 457.2,885.4" stroke="#95a27a" stroke-width="1.3" fill="none" opacity="0.55"/>
<path d="M573.2,960.1 Q577.6,941.7 591.2,922.2" stroke="#38461f" stroke-width="2.2" fill="none" opacity="0.55"/>
<path d="M417.9,944.3 Q418.0,933.4 424.9,926.0" stroke="#b8c0a4" stroke-width="2.3" fill="none" opacity="0.55"/>
<path d="M248.9,936.9 Q265.6,927.7 273.8,920.3" stroke="#a6b08e" stroke-width="1.5" fill="none" opacity="0.55"/>
<path d="M609.1,914.0 Q623.2,905.2 635.8,895.5" stroke="#95a27a" stroke-width="1.0" fill="none" opacity="0.55"/>
<path d="M649.2,899.8 Q664.0,884.7 672.0,876.4" stroke="#b8c0a4" stroke-width="1.3" fill="none" opacity="0.55"/>
<path d="M491.6,926.1 Q507.7,909.1 515.1,890.5" stroke="#2e3a1a" stroke-width="1.6" fill="none" opacity="0.55"/>
<path d="M665.5,917.0 Q683.5,908.0 698.0,893.7" stroke="#a6b08e" stroke-width="2.6" fill="none" opacity="0.55"/>
<path d="M556.6,939.6 Q568.3,926.5 581.4,910.3" stroke="#95a27a" stroke-width="2.4" fill="none" opacity="0.55"/>
<path d="M230.8,948.4 Q245.1,938.2 253.9,920.8" stroke="#95a27a" stroke-width="1.7" fill="none" opacity="0.55"/>
<path d="M58.8,917.6 Q51.3,915.6 42.0,905.9" stroke="#38461f" stroke-width="1.4" fill="none" opacity="0.55"/>
<path d="M476.8,927.8 Q464.3,902.4 453.8,884.3" stroke="#b8c0a4" stroke-width="1.1" fill="none" opacity="0.55"/>
<path d="M73.0,928.1 Q86.3,918.4 93.4,907.5" stroke="#b8c0a4" stroke-width="1.1" fill="none" opacity="0.55"/>
<path d="M451.4,939.8 Q468.1,926.7 490.2,913.0" stroke="#38461f" stroke-width="2.1" fill="none" opacity="0.55"/>
<path d="M374.9,933.7 Q363.7,923.8 340.7,910.0" stroke="#4a5a2a" stroke-width="2.5" fill="none" opacity="0.55"/>
<path d="M572.9,905.6 Q571.7,894.3 565.3,886.4" stroke="#b8c0a4" stroke-width="2.4" fill="none" opacity="0.55"/>
<path d="M487.6,959.5 Q469.0,948.6 449.7,939.4" stroke="#2e3a1a" stroke-width="1.3" fill="none" opacity="0.55"/>
<path d="M315.9,934.1 Q320.5,924.1 329.8,917.1" stroke="#b8c0a4" stroke-width="1.2" fill="none" opacity="0.55"/>
<path d="M305.9,908.5 Q306.2,892.1 316.1,879.9" stroke="#2e3a1a" stroke-width="1.3" fill="none" opacity="0.55"/>
<path d="M410.5,910.0 Q416.2,898.4 418.5,881.2" stroke="#38461f" stroke-width="2.0" fill="none" opacity="0.55"/>
<path d="M450.5,943.0 Q470.9,930.9 483.6,918.5" stroke="#38461f" stroke-width="1.3" fill="none" opacity="0.55"/>
<path d="M690.7,928.1 Q695.5,920.3 709.9,913.3" stroke="#a6b08e" stroke-width="2.6" fill="none" opacity="0.55"/>
<path d="M69.5,911.9 Q76.1,894.3 93.6,884.6" stroke="#a6b08e" stroke-width="2.3" fill="none" opacity="0.55"/>
<path d="M347.4,962.2 Q350.8,944.6 359.9,926.3" stroke="#b8c0a4" stroke-width="1.3" fill="none" opacity="0.55"/>
<path d="M407.1,954.3 Q412.7,945.6 420.7,942.2" stroke="#38461f" stroke-width="1.1" fill="none" opacity="0.55"/>
<path d="M170.9,906.3 Q180.6,892.0 199.6,883.2" stroke="#95a27a" stroke-width="2.1" fill="none" opacity="0.55"/>
<path d="M312.8,934.2 Q326.9,929.6 334.8,923.2" stroke="#a6b08e" stroke-width="1.1" fill="none" opacity="0.55"/>
<path d="M357.6,950.0 Q384.0,939.1 398.8,927.0" stroke="#b8c0a4" stroke-width="1.7" fill="none" opacity="0.55"/>
<path d="M264.4,944.2 Q286.4,924.4 296.7,912.3" stroke="#a6b08e" stroke-width="1.0" fill="none" opacity="0.55"/>
<path d="M388.6,903.6 Q400.2,890.6 407.5,882.4" stroke="#b8c0a4" stroke-width="1.4" fill="none" opacity="0.55"/>
<path d="M232.7,912.2 Q254.8,894.6 267.1,879.5" stroke="#4a5a2a" stroke-width="2.0" fill="none" opacity="0.55"/>
<path d="M102.3,919.3 Q114.7,902.8 116.2,882.2" stroke="#b8c0a4" stroke-width="1.1" fill="none" opacity="0.55"/>
<path d="M719.6,955.0 Q726.6,946.7 733.9,931.8" stroke="#38461f" stroke-width="1.7" fill="none" opacity="0.55"/>
<path d="M401.1,912.0 Q412.1,892.2 420.9,867.0" stroke="#38461f" stroke-width="2.0" fill="none" opacity="0.55"/>
<path d="M239.4,951.4 Q250.5,934.7 257.7,921.4" stroke="#b8c0a4" stroke-width="1.6" fill="none" opacity="0.55"/>
<path d="M439.2,955.3 Q447.0,942.6 465.3,929.8" stroke="#95a27a" stroke-width="1.9" fill="none" opacity="0.55"/>
<path d="M158.5,938.6 Q172.7,933.7 179.8,927.6" stroke="#38461f" stroke-width="2.1" fill="none" opacity="0.55"/>
<path d="M685.1,912.3 Q702.4,898.0 719.4,878.8" stroke="#2e3a1a" stroke-width="1.2" fill="none" opacity="0.55"/>
<path d="M677.8,927.2 Q683.1,913.1 699.1,900.0" stroke="#a6b08e" stroke-width="2.2" fill="none" opacity="0.55"/>
<path d="M31.7,937.1 Q46.9,919.7 50.4,909.3" stroke="#95a27a" stroke-width="1.2" fill="none" opacity="0.55"/>
<path d="M325.4,920.3 Q335.8,913.1 339.1,898.3" stroke="#b8c0a4" stroke-width="2.5" fill="none" opacity="0.55"/>
<path d="M345.2,915.4 Q356.6,892.6 366.0,874.9" stroke="#38461f" stroke-width="2.4" fill="none" opacity="0.55"/>
<path d="M588.5,944.3 Q604.8,935.1 621.8,923.1" stroke="#38461f" stroke-width="2.4" fill="none" opacity="0.55"/>
<path d="M339.9,960.4 Q337.6,950.9 346.5,941.2" stroke="#b8c0a4" stroke-width="1.3" fill="none" opacity="0.55"/>
<path d="M249.3,897.1 Q262.8,882.6 287.5,866.8" stroke="#95a27a" stroke-width="2.5" fill="none" opacity="0.55"/>
<path d="M680.2,929.4 Q687.5,910.2 689.6,898.6" stroke="#a6b08e" stroke-width="2.0" fill="none" opacity="0.55"/>
<path d="M506.6,920.8 Q494.5,913.6 487.7,899.9" stroke="#38461f" stroke-width="2.3" fill="none" opacity="0.55"/>
<path d="M470.9,891.7 Q491.6,881.1 500.6,864.9" stroke="#95a27a" stroke-width="2.1" fill="none" opacity="0.55"/>
<path d="M478.1,919.8 Q480.0,906.1 491.7,895.6" stroke="#38461f" stroke-width="1.6" fill="none" opacity="0.55"/>
<path d="M447.3,922.6 Q458.2,912.6 458.3,902.4" stroke="#95a27a" stroke-width="1.8" fill="none" opacity="0.55"/>
<path d="M140.6,897.5 Q133.7,888.3 117.7,871.7" stroke="#95a27a" stroke-width="1.0" fill="none" opacity="0.55"/>
<path d="M146.4,905.7 Q136.2,900.5 126.0,893.7" stroke="#a6b08e" stroke-width="2.2" fill="none" opacity="0.55"/>
<path d="M118.8,927.9 Q101.3,914.7 93.8,893.8" stroke="#95a27a" stroke-width="1.6" fill="none" opacity="0.55"/>
<path d="M148.3,919.3 Q155.1,906.5 162.7,894.7" stroke="#2e3a1a" stroke-width="1.6" fill="none" opacity="0.55"/>
<path d="M214.3,942.5 Q219.2,929.8 223.6,922.2" stroke="#38461f" stroke-width="2.3" fill="none" opacity="0.55"/>
<path d="M138.8,907.8 Q149.1,885.4 157.2,865.8" stroke="#95a27a" stroke-width="1.7" fill="none" opacity="0.55"/>
<path d="M212.7,902.1 Q233.9,881.0 243.3,864.9" stroke="#38461f" stroke-width="2.1" fill="none" opacity="0.55"/>
<path d="M419.1,965.0 Q439.6,953.1 455.6,939.8" stroke="#4a5a2a" stroke-width="1.5" fill="none" opacity="0.55"/>
<path d="M697.2,908.4 Q714.5,895.0 721.9,881.8" stroke="#a6b08e" stroke-width="2.1" fill="none" opacity="0.55"/>
<path d="M100.5,952.1 Q117.6,930.1 128.0,912.6" stroke="#4a5a2a" stroke-width="2.0" fill="none" opacity="0.55"/>
<path d="M36.3,935.9 Q18.0,920.8 5.4,906.4" stroke="#38461f" stroke-width="2.5" fill="none" opacity="0.55"/>
<path d="M693.7,951.7 Q680.5,942.5 657.8,928.9" stroke="#2e3a1a" stroke-width="1.2" fill="none" opacity="0.55"/>
<path d="M2.7,952.6 Q8.4,944.9 11.3,929.5" stroke="#95a27a" stroke-width="2.3" fill="none" opacity="0.55"/>
<path d="M155.7,895.5 Q161.0,886.0 164.1,879.3" stroke="#b8c0a4" stroke-width="1.1" fill="none" opacity="0.55"/>
<path d="M450.5,959.6 Q451.6,944.2 464.1,934.8" stroke="#2e3a1a" stroke-width="1.8" fill="none" opacity="0.55"/>
<path d="M319.9,938.0 Q303.6,920.0 297.6,897.4" stroke="#a6b08e" stroke-width="1.6" fill="none" opacity="0.55"/>
<path d="M315.7,893.7 Q311.6,887.8 295.7,880.5" stroke="#2e3a1a" stroke-width="2.2" fill="none" opacity="0.55"/>
<path d="M9.9,951.2 Q-6.9,934.6 -28.7,922.5" stroke="#a6b08e" stroke-width="1.7" fill="none" opacity="0.55"/>
<path d="M553.5,904.1 Q563.7,899.5 565.7,889.4" stroke="#4a5a2a" stroke-width="1.6" fill="none" opacity="0.55"/>
<path d="M486.5,936.9 Q499.2,922.0 502.2,911.1" stroke="#b8c0a4" stroke-width="2.0" fill="none" opacity="0.55"/>
<path d="M500.8,934.5 Q510.0,914.2 518.2,895.5" stroke="#38461f" stroke-width="1.8" fill="none" opacity="0.55"/>
<path d="M143.4,896.3 Q157.6,878.7 162.6,857.3" stroke="#b8c0a4" stroke-width="1.9" fill="none" opacity="0.55"/>
<path d="M439.1,895.1 Q450.1,872.6 450.2,856.4" stroke="#95a27a" stroke-width="2.2" fill="none" opacity="0.55"/>
<path d="M34.7,939.2 Q33.5,925.1 43.8,909.9" stroke="#4a5a2a" stroke-width="2.0" fill="none" opacity="0.55"/>
<path d="M323.9,944.9 Q346.3,922.8 357.2,907.7" stroke="#2e3a1a" stroke-width="2.1" fill="none" opacity="0.55"/>
<path d="M454.4,943.8 Q464.0,933.2 482.2,921.0" stroke="#38461f" stroke-width="1.9" fill="none" opacity="0.55"/>
<path d="M600.0,923.0 Q588.7,915.7 586.8,909.2" stroke="#b8c0a4" stroke-width="1.9" fill="none" opacity="0.55"/>
<path d="M586.5,932.6 Q597.9,922.3 606.6,908.2" stroke="#4a5a2a" stroke-width="2.0" fill="none" opacity="0.55"/>
<path d="M450.9,948.3 Q461.1,933.3 482.2,912.6" stroke="#95a27a" stroke-width="1.5" fill="none" opacity="0.55"/>
<path d="M623.5,898.0 Q626.4,893.7 637.1,883.6" stroke="#38461f" stroke-width="1.6" fill="none" opacity="0.55"/>
<path d="M343.6,926.1 Q335.0,913.4 318.1,908.2" stroke="#95a27a" stroke-width="1.7" fill="none" opacity="0.55"/>
<path d="M123.1,898.0 Q116.4,887.5 105.3,882.1" stroke="#4a5a2a" stroke-width="2.5" fill="none" opacity="0.55"/>
<path d="M502.2,900.5 Q522.5,887.3 541.6,870.0" stroke="#2e3a1a" stroke-width="1.1" fill="none" opacity="0.55"/>
<path d="M122.2,925.9 Q100.9,911.4 87.1,891.3" stroke="#4a5a2a" stroke-width="2.1" fill="none" opacity="0.55"/>
<path d="M230.6,930.6 Q221.7,909.9 211.3,893.6" stroke="#b8c0a4" stroke-width="1.5" fill="none" opacity="0.55"/>
<path d="M697.0,938.7 Q699.4,920.5 713.0,900.3" stroke="#2e3a1a" stroke-width="1.1" fill="none" opacity="0.55"/>
<path d="M191.9,959.5 Q193.1,947.9 205.7,937.4" stroke="#2e3a1a" stroke-width="1.1" fill="none" opacity="0.55"/>
<path d="M693.5,959.9 Q709.9,948.5 734.1,938.3" stroke="#4a5a2a" stroke-width="1.8" fill="none" opacity="0.55"/>
<path d="M97.4,936.3 Q116.5,924.1 126.5,906.9" stroke="#95a27a" stroke-width="2.1" fill="none" opacity="0.55"/>
<path d="M68.2,940.1 Q77.9,923.2 84.1,905.0" stroke="#b8c0a4" stroke-width="1.5" fill="none" opacity="0.55"/>
<path d="M284.3,961.2 Q262.8,951.3 242.5,936.7" stroke="#38461f" stroke-width="1.0" fill="none" opacity="0.55"/>
<path d="M630.3,951.7 Q644.9,935.5 654.3,927.1" stroke="#38461f" stroke-width="2.6" fill="none" opacity="0.55"/>
<path d="M23.2,943.2 Q27.1,933.9 31.7,924.1" stroke="#95a27a" stroke-width="1.7" fill="none" opacity="0.55"/>
<path d="M39.2,900.9 Q55.7,886.1 79.7,874.3" stroke="#95a27a" stroke-width="1.8" fill="none" opacity="0.55"/>
<path d="M118.3,954.4 Q124.1,942.9 127.4,930.6" stroke="#4a5a2a" stroke-width="1.5" fill="none" opacity="0.55"/>
<path d="M226.8,950.8 Q215.9,937.9 196.8,926.6" stroke="#a6b08e" stroke-width="2.0" fill="none" opacity="0.55"/>
<path d="M-8.7,937.2 Q1.0,936.0 9.3,927.6" stroke="#4a5a2a" stroke-width="1.9" fill="none" opacity="0.55"/>
<path d="M466.0,909.7 Q459.5,901.6 455.0,893.5" stroke="#95a27a" stroke-width="1.6" fill="none" opacity="0.55"/>
<path d="M428.1,912.6 Q439.9,904.9 440.1,892.3" stroke="#a6b08e" stroke-width="2.2" fill="none" opacity="0.55"/>
<path d="M533.9,891.1 Q553.3,877.3 562.8,868.5" stroke="#b8c0a4" stroke-width="2.3" fill="none" opacity="0.55"/>
<path d="M512.4,926.1 Q527.5,908.0 533.1,894.6" stroke="#2e3a1a" stroke-width="1.2" fill="none" opacity="0.55"/>
<path d="M225.7,919.1 Q212.8,915.1 204.9,908.3" stroke="#38461f" stroke-width="2.0" fill="none" opacity="0.55"/>
<path d="M673.0,904.4 Q684.5,897.7 689.2,888.5" stroke="#b8c0a4" stroke-width="2.4" fill="none" opacity="0.55"/>
<path d="M460.2,912.3 Q463.8,895.8 476.2,879.5" stroke="#2e3a1a" stroke-width="2.3" fill="none" opacity="0.55"/>
<path d="M86.4,941.9 Q97.8,920.2 108.1,897.9" stroke="#a6b08e" stroke-width="2.3" fill="none" opacity="0.55"/>
<path d="M215.2,931.4 Q195.2,917.6 179.9,899.9" stroke="#4a5a2a" stroke-width="1.4" fill="none" opacity="0.55"/>
<path d="M618.8,928.5 Q624.6,919.4 638.9,905.5" stroke="#b8c0a4" stroke-width="2.2" fill="none" opacity="0.55"/>
<path d="M496.4,941.8 Q491.3,934.2 483.9,923.3" stroke="#a6b08e" stroke-width="2.4" fill="none" opacity="0.55"/>
<path d="M345.1,928.5 Q363.1,916.8 370.2,908.4" stroke="#38461f" stroke-width="1.0" fill="none" opacity="0.55"/>
<path d="M706.5,902.4 Q719.1,887.6 734.9,869.0" stroke="#95a27a" stroke-width="2.0" fill="none" opacity="0.55"/>
<path d="M389.2,964.5 Q395.9,951.4 405.1,941.9" stroke="#a6b08e" stroke-width="1.5" fill="none" opacity="0.55"/>
<path d="M357.8,923.4 Q367.8,913.6 373.8,911.8" stroke="#38461f" stroke-width="1.7" fill="none" opacity="0.55"/>
<path d="M257.2,929.0 Q266.5,919.2 271.9,909.6" stroke="#a6b08e" stroke-width="1.3" fill="none" opacity="0.55"/>
<path d="M617.7,902.7 Q611.3,894.4 607.9,886.4" stroke="#a6b08e" stroke-width="2.2" fill="none" opacity="0.55"/>
<path d="M500.5,901.1 Q487.1,895.5 484.4,890.1" stroke="#a6b08e" stroke-width="1.9" fill="none" opacity="0.55"/>
<path d="M58.6,936.7 Q44.0,925.2 31.5,917.5" stroke="#95a27a" stroke-width="2.6" fill="none" opacity="0.55"/>
<path fill-rule="evenodd" d="M0,0 H715 V953 H0 Z M36,1 H700 V887 H36 Z" fill="#000" opacity="0.45"/>
<rect x="258" y="1" width="1" height="886" fill="#a6a6a6" opacity="0.75"/>
<rect x="479" y="1" width="1" height="886" fill="#a6a6a6" opacity="0.75"/>
<rect x="36" y="297" width="664" height="1" fill="#a6a6a6" opacity="0.75"/>
<rect x="36" y="592" width="664" height="1" fill="#a6a6a6" opacity="0.75"/>
<rect x="36.5" y="2.5" width="663.0" height="884.0" fill="none" stroke="#fff" stroke-width="1" opacity="0.9"/>
<rect x="36.5" y="2.5" width="663.0" height="884.0" fill="none" stroke="#666" stroke-width="1" stroke-dasharray="3 3" opacity="0.8"/>
<rect x="34" y="-1" width="17" height="3" fill="#fff"/>
<rect x="34" y="-1" width="3" height="18" fill="#fff"/>
<rect x="685" y="-1" width="17" height="3" fill="#fff"/>
<rect x="699" y="-1" width="3" height="18" fill="#fff"/>
<rect x="34" y="886" width="17" height="3" fill="#fff"/>
<rect x="34" y="871" width="3" height="18" fill="#fff"/>
<rect x="685" y="886" width="17" height="3" fill="#fff"/>
<rect x="699" y="871" width="3" height="18" fill="#fff"/>
<rect x="352" y="-1" width="30" height="2" fill="#fff"/>
<rect x="352" y="886" width="30" height="2" fill="#fff"/>
<rect x="34" y="428" width="2" height="30" fill="#fff"/>
<rect x="699" y="428" width="2" height="30" fill="#fff"/>
</svg></div>
</body></html>
